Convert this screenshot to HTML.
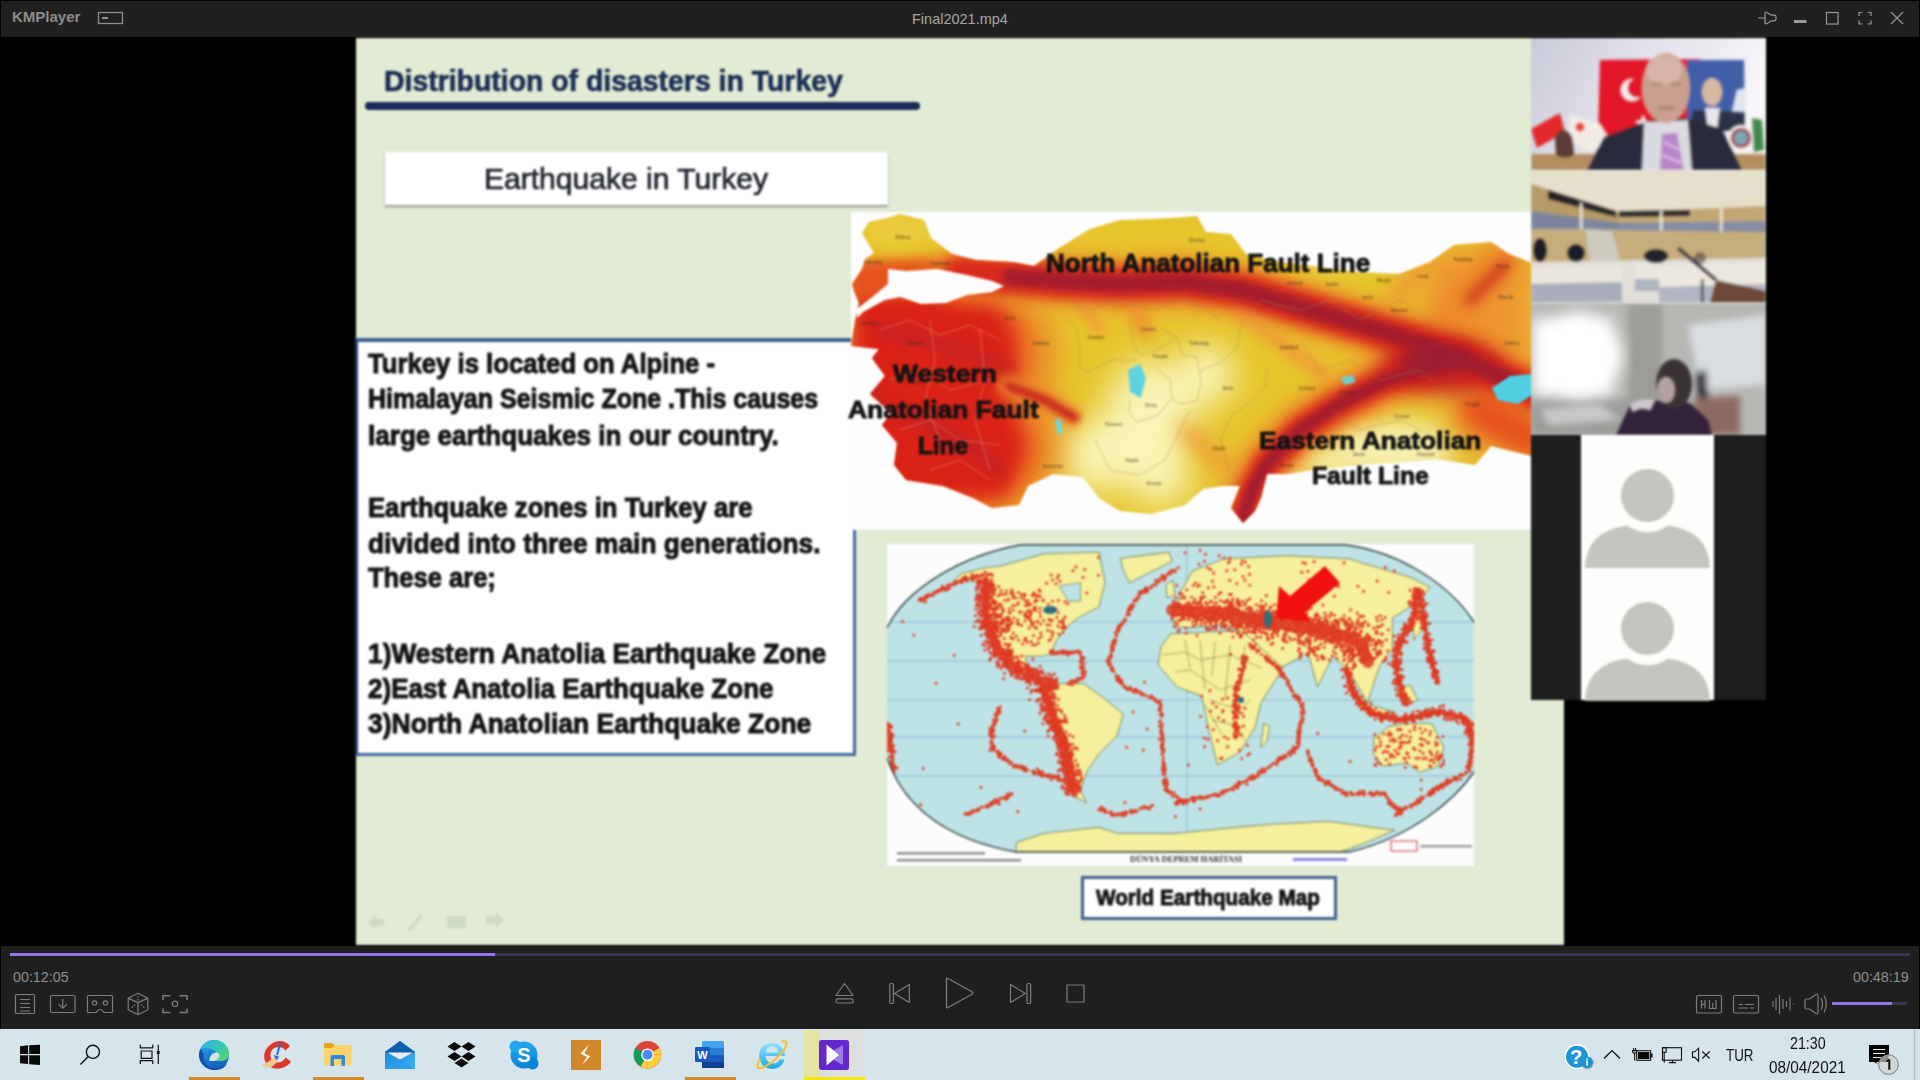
<!DOCTYPE html>
<html><head><meta charset="utf-8">
<style>
*{margin:0;padding:0;box-sizing:border-box}
html,body{width:1920px;height:1080px;overflow:hidden;background:#000;font-family:"Liberation Sans",sans-serif}
.abs{position:absolute}
svg{position:absolute;overflow:visible}
#titlebar{position:absolute;left:1px;top:1px;width:1918px;height:36px;background:#202020}
#slide{position:absolute;left:356px;top:38px;width:1208px;height:907px;background:#e2ebd4;overflow:hidden}
#ctrl{position:absolute;left:1px;top:946px;width:1918px;height:83px;background:#1f1f1f}
#taskbar{position:absolute;left:0;top:1029px;width:1920px;height:51px;background:#d6e4eb}
.nw{white-space:nowrap}
</style></head>
<body>
<!-- TITLE BAR -->
<div id="titlebar"></div>
<div class="abs nw" style="left:12px;top:8px;font-size:15px;line-height:17px;font-weight:bold;color:#8c8c8c">KMPlayer</div>
<svg style="left:0;top:0" width="1920" height="38">
  <g fill="none" stroke="#8f8f8f" stroke-width="1.3">
    <rect x="98.5" y="12.5" width="24" height="11"/>
  </g>
  <rect x="102" y="17" width="6" height="2" fill="#8f8f8f"/>
  <g fill="none" stroke="#9a9a9a" stroke-width="1.2">
    <path d="M1758 18 H1764.5 M1765 13.5 Q1765 11.5 1767 12.5 L1771.5 15.2 H1774 Q1776 15.2 1776 17 V19 Q1776 20.8 1774 20.8 H1771.5 L1767 23.5 Q1765 24.5 1765 22.5 Z"/>
    <rect x="1826.5" y="12.5" width="11.5" height="11.5"/>
    <path d="M1859 16 V12.5 H1862.5 M1867.5 12.5 H1871 V16 M1871 20.5 V24 H1867.5 M1862.5 24 H1859 V20.5"/>
    <path d="M1891 12 L1903 24 M1903 12 L1891 24"/>
  </g>
  <rect x="1794" y="20" width="12.5" height="3" fill="#9a9a9a"/>
</svg>
<div class="abs nw" style="left:912px;top:11px;font-size:14.5px;line-height:17px;color:#a6a6a6">Final2021.mp4</div>

<!-- SLIDE -->
<div style="position:absolute;left:0;top:0;width:1920px;height:1080px;filter:blur(1px)"><div class="abs" style="left:356px;top:38px;width:1208px;height:907px;background:#e2ebd4"></div>
<svg style="left:360px;top:905px" width="160" height="35" viewBox="360 905 160 35"><g fill="#cfdac2" stroke="none"><path d="M368 922 L376 914 L376 919 L384 919 L384 925 L376 925 L376 930 Z"/><path d="M407 930 L420 914 L423 917 L410 932 Z"/><rect x="447" y="916" width="19" height="12"/><path d="M486 916 L496 916 L496 912 L504 920 L496 928 L496 924 L486 924 Z"/></g></svg>
<div class="abs nw" style="left:384.0px;top:66.1px;font-size:30.23px;line-height:30.23px;font-weight:bold;color:#1b2f55;transform:scaleX(0.9400);transform-origin:0 0;-webkit-text-stroke:0.7px #1b2f55;">Distribution of disasters in Turkey</div>
<div class="abs" style="left:365px;top:102px;width:555px;height:8px;background:#172b57;border-radius:4px"></div>
<div class="abs" style="left:385px;top:152px;width:503px;height:53px;background:#fff;box-shadow:0 2px 2px rgba(80,80,80,0.55)"></div>
<div class="abs nw" style="left:484.4px;top:164.0px;font-size:29.80px;line-height:29.80px;font-weight:normal;color:#20242c;transform:scaleX(1.0086);transform-origin:0 0;-webkit-text-stroke:0.7px #20242c;">Earthquake in Turkey</div>
<div class="abs" style="left:355px;top:337.5px;width:501px;height:418px;background:#fff;border:3px solid #4167a0;border-top:4px solid #3a5c8c;border-left:3px solid #2b3e66"></div>
<div class="abs nw" style="left:368.4px;top:350.2px;font-size:28.05px;line-height:28.05px;font-weight:bold;color:#141414;transform:scaleX(0.9166);transform-origin:0 0;-webkit-text-stroke:1.0px #141414;">Turkey is located on Alpine -</div>
<div class="abs nw" style="left:368.4px;top:385.4px;font-size:28.05px;line-height:28.05px;font-weight:bold;color:#141414;transform:scaleX(0.8912);transform-origin:0 0;-webkit-text-stroke:1.0px #141414;">Himalayan Seismic Zone .This causes</div>
<div class="abs nw" style="left:368.4px;top:421.9px;font-size:28.05px;line-height:28.05px;font-weight:bold;color:#141414;transform:scaleX(0.9292);transform-origin:0 0;-webkit-text-stroke:1.0px #141414;">large earthquakes in our country.</div>
<div class="abs nw" style="left:368.4px;top:493.9px;font-size:28.05px;line-height:28.05px;font-weight:bold;color:#141414;transform:scaleX(0.9148);transform-origin:0 0;-webkit-text-stroke:1.0px #141414;">Earthquake zones in Turkey are</div>
<div class="abs nw" style="left:368.4px;top:530.4px;font-size:28.05px;line-height:28.05px;font-weight:bold;color:#141414;transform:scaleX(0.9397);transform-origin:0 0;-webkit-text-stroke:1.0px #141414;">divided into three main generations.</div>
<div class="abs nw" style="left:368.4px;top:563.9px;font-size:28.05px;line-height:28.05px;font-weight:bold;color:#141414;transform:scaleX(0.9114);transform-origin:0 0;-webkit-text-stroke:1.0px #141414;">These are;</div>
<div class="abs nw" style="left:368.4px;top:639.9px;font-size:28.05px;line-height:28.05px;font-weight:bold;color:#141414;transform:scaleX(0.9393);transform-origin:0 0;-webkit-text-stroke:1.0px #141414;">1)Western Anatolia Earthquake Zone</div>
<div class="abs nw" style="left:368.4px;top:675.2px;font-size:28.05px;line-height:28.05px;font-weight:bold;color:#141414;transform:scaleX(0.9282);transform-origin:0 0;-webkit-text-stroke:1.0px #141414;">2)East Anatolia Earthquake Zone</div>
<div class="abs nw" style="left:368.4px;top:710.4px;font-size:28.05px;line-height:28.05px;font-weight:bold;color:#141414;transform:scaleX(0.9441);transform-origin:0 0;-webkit-text-stroke:1.0px #141414;">3)North Anatolian Earthquake Zone</div>

<div class="abs" style="left:851px;top:212px;width:680px;height:318px;background:#fdfdfd"></div>
<svg style="left:851px;top:212px" width="680" height="318" viewBox="851 212 680 318">
 <defs>
  <clipPath id="trk"><path d="M862 233 L869 222 L891 217 L900 214 L924 220 L931 238 L952 254 L976 260 L1013 262 L1034 266 L1059 248 L1090 229 L1120 220 L1151 219 L1185 217 L1197 216 L1206 232 L1231 234 L1246 254 L1277 262 L1313 266 L1356 272 L1399 274 L1430 262 L1454 245 L1491 242 L1509 254 L1532 263 L1532 456 L1491 446 L1475 465 L1436 459 L1399 462 L1356 465 L1307 471 L1286 474 L1267 474 L1261 498 L1255 511 L1243 523 L1231 508 L1240 486 L1222 486 L1203 489 L1185 505 L1151 514 L1120 511 L1099 498 L1083 477 L1053 474 L1028 486 L1019 505 L992 508 L973 498 L943 486 L906 480 L894 465 L897 443 L882 425 L891 413 L870 394 L885 376 L872 358 L879 349 L851 346 L855 321 L859 303 L854 291 L852 284 L862 269 L865 259 L874 253 Z"/></clipPath>
  <filter id="b3" filterUnits="userSpaceOnUse" x="780" y="150" width="820" height="450"><feGaussianBlur stdDeviation="3"/></filter>
  <filter id="b6" filterUnits="userSpaceOnUse" x="780" y="150" width="820" height="450"><feGaussianBlur stdDeviation="6"/></filter>
  <filter id="b10" filterUnits="userSpaceOnUse" x="780" y="150" width="820" height="450"><feGaussianBlur stdDeviation="10"/></filter>
  <filter id="b16" filterUnits="userSpaceOnUse" x="780" y="150" width="820" height="450"><feGaussianBlur stdDeviation="16"/></filter>
 </defs>
 <g clip-path="url(#trk)">
  <rect x="851" y="212" width="680" height="318" fill="#e6c52c"/>
  <!-- pale centers -->
  <g filter="url(#b16)" fill="#f8f5b6">
   <ellipse cx="1150" cy="420" rx="45" ry="60"/>
   <ellipse cx="1205" cy="375" rx="30" ry="30"/>
   <ellipse cx="1100" cy="455" rx="40" ry="35"/>
   <ellipse cx="1160" cy="480" rx="30" ry="25"/>
   <ellipse cx="1390" cy="445" rx="65" ry="22"/>
   <ellipse cx="1300" cy="465" rx="25" ry="12"/>
   <ellipse cx="1330" cy="250" rx="20" ry="10"/>
  </g>
  <!-- west red block -->
  <path d="M851 270 L960 280 L1030 300 L1055 340 L1045 400 L1060 450 L1045 495 L1010 515 L851 515 Z" fill="#ec7d25" filter="url(#b16)"/>
  <path d="M851 285 L950 290 L1000 300 L1020 340 L1012 400 L1030 450 L1005 500 L851 505 Z" fill="#da2218" filter="url(#b10)"/>
  <g filter="url(#b6)" fill="none" stroke="#c82420" stroke-linecap="round">
   <path d="M880 330 L960 350 L1010 370" stroke-width="14"/>
   <path d="M900 410 L960 440 L1000 470" stroke-width="16"/>
   <path d="M870 360 L880 470" stroke-width="14"/>
  </g>
  <path d="M1000 383 L1045 400 L1078 420" stroke="#ec8a2a" stroke-width="20" fill="none" filter="url(#b6)"/>
  <path d="M1005 385 L1045 400 L1078 420" stroke="#c8201e" stroke-width="9" fill="none" filter="url(#b3)"/>
  <!-- thrace gradient -->
  <path d="M851 262 L930 258 L1000 268 L1005 290 L851 300 Z" fill="#e5521c" filter="url(#b6)"/>
  <path d="M870 215 L930 215 L935 240 L900 248 L870 245 Z" fill="#eacb3a" filter="url(#b6)"/>
  <!-- NE orange -->
  <path d="M1420 250 L1532 255 L1532 460 L1460 450 L1430 330 Z" fill="#ee9530" filter="url(#b16)"/>
  <!-- orange halos -->
  <g fill="none" stroke-linecap="round" stroke-linejoin="round">
   <path d="M960 274 L1010 277 L1060 281 L1120 284 L1185 282 L1246 291 L1307 309 L1368 327 L1414 341 L1460 358 L1491 372 L1535 392" stroke="#ee8c2b" stroke-width="50" filter="url(#b10)"/>
   <path d="M1243 518 L1252 490 L1266 465 L1300 430 L1338 405 L1384 381 L1430 366 L1460 358" stroke="#ee8c2b" stroke-width="52" filter="url(#b10)"/>
   <path d="M1445 320 L1480 280 L1510 250" stroke="#ec8a2a" stroke-width="34" filter="url(#b10)"/>
   <path d="M1395 300 L1420 270" stroke="#ef9a30" stroke-width="20" filter="url(#b10)"/>
   <path d="M1125 290 L1145 330" stroke="#ee9a32" stroke-width="18" filter="url(#b6)"/>
   <path d="M1480 410 L1532 440" stroke="#e6511c" stroke-width="40" filter="url(#b10)"/>
   <path d="M1185 430 L1230 470" stroke="#ee9a32" stroke-width="16" filter="url(#b10)"/>
   <path d="M1227 302 L1270 335 L1324 375" stroke="#ef9d35" stroke-width="14" filter="url(#b6)"/>
   <path d="M1080 300 L1100 330" stroke="#ef9d35" stroke-width="12" filter="url(#b6)"/>
  </g>
  <!-- pale2 -->
  <g filter="url(#b10)" fill="#f6f0b0">
   <ellipse cx="1395" cy="450" rx="55" ry="16"/>
   <ellipse cx="1330" cy="462" rx="22" ry="10"/>
  </g>
  <!-- red -->
  <g fill="none" stroke-linecap="round" stroke-linejoin="round">
   <path d="M960 274 L1010 277 L1060 281 L1120 284 L1185 282 L1246 291 L1307 309 L1368 327 L1414 341 L1460 358 L1491 372 L1535 392" stroke="#d9291c" stroke-width="36" filter="url(#b6)"/>
   <path d="M1243 518 L1252 490 L1266 465 L1300 430 L1338 405 L1384 381 L1430 366 L1460 358" stroke="#d9291c" stroke-width="30" filter="url(#b6)"/>
   <ellipse cx="1440" cy="365" rx="60" ry="28" fill="#c8221f" stroke="none" filter="url(#b10)"/>
   <path d="M1470 300 L1505 265" stroke="#d23a1e" stroke-width="12" filter="url(#b6)"/>
  </g>
  <!-- dark core -->
  <g fill="none" stroke-linecap="round" stroke-linejoin="round">
   <path d="M1010 277 L1060 281 L1120 284 L1185 282 L1246 291 L1307 309 L1368 327 L1414 341 L1460 358 L1491 372 L1535 392" stroke="#a51d2d" stroke-width="17" filter="url(#b3)"/>
   <path d="M1243 518 L1252 490 L1266 465 L1300 430 L1338 405 L1384 381 L1430 366 L1460 358" stroke="#a51d2d" stroke-width="13" filter="url(#b3)"/>
   <ellipse cx="1435" cy="360" rx="35" ry="14" fill="#9e1b30" stroke="none" filter="url(#b6)"/>
  </g>
  <!-- borders -->
  <g fill="none" stroke="#a09050" stroke-width="0.8" opacity="0.55">
   <path d="M1068 319 L1077 330 L1080 352 L1079 368 L1086 372 L1115 359 L1126 362 L1137 359"/>
   <path d="M1130 325 L1134 346 L1140 355 L1158 350 L1177 337 L1162 329"/>
   <path d="M1155 368 L1170 379 L1172 398 L1179 404 L1197 401 L1201 382 L1197 357 L1183 355 L1177 337"/>
   <path d="M1200 371 L1221 362 L1237 348 L1240 326"/>
   <path d="M1130 400 L1129 412 L1137 422 L1158 415 L1172 398"/>
   <path d="M1268 366 L1265 387 L1248 404 L1232 415 L1220 440 L1230 470"/>
   <path d="M1095 440 L1110 470 L1140 475 L1165 460 L1180 430 L1190 410"/>
   <path d="M1240 326 L1260 300 L1300 310 L1330 300 L1360 320 L1400 300 L1430 320"/>
   <path d="M1300 340 L1320 370 L1350 360 L1380 380 L1420 370 L1450 400 L1480 390"/>
   <path d="M1330 410 L1360 430 L1400 420 L1440 440"/>
   <path d="M1060 300 L1090 310 L1120 300 L1150 310 L1190 300 L1220 320"/>
  </g>
  <g fill="none" stroke="#f2b0a0" stroke-width="0.8" opacity="0.55">
   <path d="M880 330 L910 320 L940 335 L970 325 L1000 340"/>
   <path d="M890 380 L920 370 L950 390 L990 380 L1020 400"/>
   <path d="M900 430 L930 420 L960 440 L1000 445"/>
   <path d="M930 470 L960 460 L990 480"/>
   <path d="M930 320 L935 360 L925 400 L940 440"/>
   <path d="M980 330 L985 380 L975 420 L990 470"/>
  </g>
  <g fill="#3a2a1a" opacity="0.6">
   <text x="903" y="238.5" font-family="Liberation Sans" font-weight="bold" font-size="4.8" text-anchor="middle">Edirne</text>
   <text x="872" y="263.5" font-family="Liberation Sans" font-weight="bold" font-size="4.8" text-anchor="middle">Tekirdag</text>
   <text x="940" y="264.5" font-family="Liberation Sans" font-weight="bold" font-size="4.8" text-anchor="middle">Istanbul</text>
   <text x="1010" y="319.5" font-family="Liberation Sans" font-weight="bold" font-size="4.8" text-anchor="middle">Bolu</text>
   <text x="1041" y="344.5" font-family="Liberation Sans" font-weight="bold" font-size="4.8" text-anchor="middle">Ankara</text>
   <text x="1096" y="338.5" font-family="Liberation Sans" font-weight="bold" font-size="4.8" text-anchor="middle">Cankiri</text>
   <text x="1148" y="330.5" font-family="Liberation Sans" font-weight="bold" font-size="4.8" text-anchor="middle">Corum</text>
   <text x="1160" y="357.5" font-family="Liberation Sans" font-weight="bold" font-size="4.8" text-anchor="middle">Yozgat</text>
   <text x="1151" y="406.5" font-family="Liberation Sans" font-weight="bold" font-size="4.8" text-anchor="middle">Sivas</text>
   <text x="1114" y="425.5" font-family="Liberation Sans" font-weight="bold" font-size="4.8" text-anchor="middle">Kayseri</text>
   <text x="1132" y="461.5" font-family="Liberation Sans" font-weight="bold" font-size="4.8" text-anchor="middle">Nigde</text>
   <text x="1154" y="484.5" font-family="Liberation Sans" font-weight="bold" font-size="4.8" text-anchor="middle">Konya</text>
   <text x="1053" y="467.5" font-family="Liberation Sans" font-weight="bold" font-size="4.8" text-anchor="middle">Karaman</text>
   <text x="915" y="344.5" font-family="Liberation Sans" font-weight="bold" font-size="4.8" text-anchor="middle">Mersin</text>
   <text x="870" y="324.5" font-family="Liberation Sans" font-weight="bold" font-size="4.8" text-anchor="middle">Antalya</text>
   <text x="915" y="383.5" font-family="Liberation Sans" font-weight="bold" font-size="4.8" text-anchor="middle">Isparta</text>
   <text x="1197" y="241.5" font-family="Liberation Sans" font-weight="bold" font-size="4.8" text-anchor="middle">Burdur</text>
   <text x="1295" y="284.5" font-family="Liberation Sans" font-weight="bold" font-size="4.8" text-anchor="middle">Denizli</text>
   <text x="1332" y="285.5" font-family="Liberation Sans" font-weight="bold" font-size="4.8" text-anchor="middle">Aydin</text>
   <text x="1384" y="281.5" font-family="Liberation Sans" font-weight="bold" font-size="4.8" text-anchor="middle">Mugla</text>
   <text x="1368" y="298.5" font-family="Liberation Sans" font-weight="bold" font-size="4.8" text-anchor="middle">Izmir</text>
   <text x="1399" y="311.5" font-family="Liberation Sans" font-weight="bold" font-size="4.8" text-anchor="middle">Manisa</text>
   <text x="1423" y="277.5" font-family="Liberation Sans" font-weight="bold" font-size="4.8" text-anchor="middle">Usak</text>
   <text x="1463" y="260.5" font-family="Liberation Sans" font-weight="bold" font-size="4.8" text-anchor="middle">Kutahya</text>
   <text x="1503" y="267.5" font-family="Liberation Sans" font-weight="bold" font-size="4.8" text-anchor="middle">Bursa</text>
   <text x="1506" y="298.5" font-family="Liberation Sans" font-weight="bold" font-size="4.8" text-anchor="middle">Bilecik</text>
   <text x="1512" y="344.5" font-family="Liberation Sans" font-weight="bold" font-size="4.8" text-anchor="middle">Edirne</text>
   <text x="1199" y="344.5" font-family="Liberation Sans" font-weight="bold" font-size="4.8" text-anchor="middle">Tekirdag</text>
   <text x="1289" y="348.5" font-family="Liberation Sans" font-weight="bold" font-size="4.8" text-anchor="middle">Istanbul</text>
   <text x="1228" y="389.5" font-family="Liberation Sans" font-weight="bold" font-size="4.8" text-anchor="middle">Bolu</text>
   <text x="1307" y="389.5" font-family="Liberation Sans" font-weight="bold" font-size="4.8" text-anchor="middle">Ankara</text>
   <text x="1347" y="393.5" font-family="Liberation Sans" font-weight="bold" font-size="4.8" text-anchor="middle">Cankiri</text>
   <text x="1402" y="417.5" font-family="Liberation Sans" font-weight="bold" font-size="4.8" text-anchor="middle">Corum</text>
   <text x="1472" y="405.5" font-family="Liberation Sans" font-weight="bold" font-size="4.8" text-anchor="middle">Yozgat</text>
   <text x="1359" y="455.5" font-family="Liberation Sans" font-weight="bold" font-size="4.8" text-anchor="middle">Sivas</text>
   <text x="1426" y="455.5" font-family="Liberation Sans" font-weight="bold" font-size="4.8" text-anchor="middle">Kayseri</text>
   <text x="1219" y="449.5" font-family="Liberation Sans" font-weight="bold" font-size="4.8" text-anchor="middle">Nigde</text>
   <text x="1286" y="466.5" font-family="Liberation Sans" font-weight="bold" font-size="4.8" text-anchor="middle">Konya</text>
  </g>
  <!-- lakes -->
  <path d="M1128 370 L1140 364 L1146 378 L1141 398 L1130 392 Z" fill="#5fd3dc"/>
  <path d="M1492 388 L1510 376 L1532 374 L1532 395 L1518 404 L1498 400 Z" fill="#4fcfe0"/>
  <path d="M1055 420 L1060 418 L1063 432 L1058 435 Z" fill="#6fd6dc"/>
  <path d="M1340 378 L1352 375 L1356 382 L1345 385 Z" fill="#70d0d0"/>
 </g>
 <path d="M888 269 L906 271 L937 269 L967 275 L992 281 L1004 286 L992 292 L967 295 L946 303 L921 304 L900 297 L885 300 L863 312 L857 318 L857 309 L876 294 L888 284 Z" fill="#fdfdfd"/>
</svg>
<div class="abs nw" style="left:1046.0px;top:250.4px;font-size:26.16px;line-height:26.16px;font-weight:bold;color:#141414;transform:scaleX(0.9946);transform-origin:0 0;-webkit-text-stroke:0.9px #141414;">North Anatolian Fault Line</div>
<div class="abs nw" style="left:893.0px;top:362.4px;font-size:24.13px;line-height:24.13px;font-weight:bold;color:#141414;transform:scaleX(1.0954);transform-origin:0 0;-webkit-text-stroke:0.9px #141414;">Western</div>
<div class="abs nw" style="left:848.0px;top:398.1px;font-size:24.13px;line-height:24.13px;font-weight:bold;color:#141414;transform:scaleX(1.0944);transform-origin:0 0;-webkit-text-stroke:0.9px #141414;">Anatolian Fault</div>
<div class="abs nw" style="left:918.4px;top:433.5px;font-size:24.13px;line-height:24.13px;font-weight:bold;color:#141414;transform:scaleX(1.0061);transform-origin:0 0;-webkit-text-stroke:0.9px #141414;">Line</div>
<div class="abs nw" style="left:1259.2px;top:429.3px;font-size:24.71px;line-height:24.71px;font-weight:bold;color:#141414;transform:scaleX(1.0633);transform-origin:0 0;-webkit-text-stroke:0.9px #141414;">Eastern Anatolian</div>
<div class="abs nw" style="left:1312.0px;top:464.0px;font-size:24.71px;line-height:24.71px;font-weight:bold;color:#141414;transform:scaleX(1.0010);transform-origin:0 0;-webkit-text-stroke:0.9px #141414;">Fault Line</div>

<div class="abs" style="left:887px;top:544px;width:587px;height:322px;background:#fcfcfc"></div>
<svg style="left:870px;top:530px" width="620" height="410" viewBox="870 530 620 410">
 <defs>
  <clipPath id="wm"><path d="M887 628 C905 590 960 556 1020 545 L1346 545 C1400 552 1450 585 1474 622 L1474 772 C1455 800 1410 838 1349 852 L1016 852 C950 840 905 810 887 758 Z"/></clipPath>
  <clipPath id="wr"><rect x="887" y="544" width="587" height="322"/></clipPath>
 </defs>
 <g clip-path="url(#wr)">
 <g clip-path="url(#wm)">
  <rect x="870" y="530" width="620" height="410" fill="#bee3e6"/>
  <g stroke="#6f9ec8" stroke-width="0.8" opacity="0.8" fill="none">
   <path d="M870 661 H1490 M870 700 H1490 M870 737 H1490 M870 622 H1490 M870 776 H1490"/>
   <path d="M1187 530 V940"/>
  </g>
  <g fill="#f6ef9c" stroke="#4c5e38" stroke-width="0.7" stroke-linejoin="round">
   <path d="M961.4 573.6 L985.8 567.5 L1001.0 566.0 L1043.9 553.7 L1098.9 552.2 L1105.0 582.8 L1098.9 607.2 L1080.5 616.4 L1068.3 625.5 L1056.1 640.8 L1051.5 653.0 L1043.9 656.1 L1025.5 656.1 L1028.6 671.4 L1056.1 683.6 L1062.2 686.7 L1043.9 684.0 L1016.4 670.0 L1001.1 652.0 L988.9 628.6 L982.8 610.3 L992.0 585.8 L967.5 579.7 L950.0 585.0 Z"/><path d="M1120.3 558.3 L1169.1 552.2 L1172.2 561.4 L1147.8 573.6 L1129.4 582.8 L1123.3 570.5 Z"/><path d="M1056.1 683.6 L1083.6 683.6 L1105.0 698.9 L1123.3 714.2 L1117.2 735.5 L1098.9 753.9 L1086.6 772.2 L1080.5 790.5 L1086.6 802.8 L1074.4 796.6 L1068.3 772.2 L1065.3 738.6 L1053.0 711.1 L1047.0 692.8 Z"/><path d="M1173.8 618.0 L1180.0 593.0 L1192.5 571.0 L1223.8 558.8 L1286.0 555.6 L1348.8 558.8 L1411.0 577.5 L1430.0 587.0 L1417.5 602.5 L1392.5 618.0 L1392.5 649.0 L1380.0 665.0 L1367.5 702.5 L1348.8 671.0 L1333.0 655.6 L1317.5 687.0 L1308.0 652.5 L1286.0 665.0 L1261.0 674.0 L1239.0 643.0 L1239.4 630.6 L1223.8 624.4 L1192.5 627.5 L1173.8 627.5 Z"/><path d="M1170.6 633.8 L1239.4 630.6 L1248.8 636.9 L1283.1 668.1 L1261.2 702.5 L1255.0 727.5 L1239.4 752.5 L1217.5 765.0 L1208.1 727.5 L1201.9 696.2 L1176.9 686.9 L1158.1 665.0 L1161.2 646.2 Z"/>
   <path d="M1373.7 738.6 L1389.0 726.4 L1407.3 723.4 L1431.7 723.4 L1444.0 747.8 L1437.8 766.2 L1419.5 772.3 L1407.3 763.1 L1382.8 766.2 L1373.7 753.9 Z"/><path d="M1016.4 842.5 L1043.9 833.3 L1098.9 827.2 L1117.2 833.3 L1175.0 833.4 L1236.0 827.3 L1272.8 824.2 L1327.8 821.2 L1395.0 830.3 L1358.4 845.6 L1340.0 852.0 L1016.0 852.0 Z"/><path d="M1263.6 723.4 L1269.7 726.4 L1266.7 741.7 L1260.6 747.8 Z"/><path d="M1352.0 690.0 L1370.0 705.0 L1395.0 712.0 L1385.0 716.0 L1360.0 708.0 Z"/><path d="M1395.0 690.0 L1410.0 685.0 L1418.0 700.0 L1405.0 705.0 Z"/><path d="M1413.0 612.0 L1420.0 605.0 L1422.0 630.0 L1414.0 640.0 Z"/><path d="M1166.0 585.0 L1173.0 580.0 L1175.0 595.0 L1167.0 598.0 Z"/>
  </g>
  <path d="M1059.2 585.8 L1080.5 582.8 L1080.5 601.1 L1068.3 601.1 Z" fill="#bee3e6" stroke="#4c5e38" stroke-width="0.6"/>
  <g fill="none" stroke="#4a5a30" stroke-width="0.6" opacity="0.8">
   <path d="M1163 655 L1185 652 L1200 660 L1230 655 L1262 668 M1175 672 L1190 670 L1220 690 L1250 680 M1210 700 L1240 710 L1250 700 M1200 640 L1205 690 M1230 645 L1225 700 M1185 640 L1190 668 M1215 642 L1212 676 M1245 645 L1240 690 M1212 720 L1235 725 L1245 740 M1205 705 L1222 735"/>
  </g>
  <g fill="#de3a22"><rect x="931.7" y="593.9" width="2.6" height="2.6"/><rect x="921.1" y="599.7" width="2.6" height="2.6"/><rect x="940.1" y="588.0" width="2.6" height="2.6"/><rect x="939.2" y="589.3" width="2.6" height="2.6"/><rect x="918.7" y="598.6" width="2.6" height="2.6"/><rect x="921.3" y="598.1" width="2.6" height="2.6"/><rect x="935.6" y="591.0" width="2.6" height="2.6"/><rect x="926.6" y="594.5" width="2.6" height="2.6"/><rect x="944.9" y="587.9" width="2.6" height="2.6"/><rect x="934.0" y="590.8" width="2.6" height="2.6"/><rect x="960.3" y="581.3" width="2.6" height="2.6"/><rect x="930.1" y="594.3" width="2.6" height="2.6"/><rect x="923.9" y="597.5" width="2.6" height="2.6"/><rect x="952.6" y="583.1" width="2.6" height="2.6"/><rect x="924.3" y="594.4" width="2.6" height="2.6"/><rect x="932.8" y="591.0" width="2.6" height="2.6"/><rect x="940.9" y="588.5" width="2.6" height="2.6"/><rect x="926.2" y="595.6" width="2.6" height="2.6"/><rect x="945.9" y="584.3" width="2.6" height="2.6"/><rect x="942.6" y="587.7" width="2.6" height="2.6"/><rect x="936.4" y="589.4" width="2.6" height="2.6"/><rect x="948.3" y="587.0" width="2.6" height="2.6"/><rect x="927.1" y="593.2" width="2.6" height="2.6"/><rect x="954.4" y="580.4" width="2.6" height="2.6"/><rect x="948.1" y="583.4" width="2.6" height="2.6"/><rect x="924.1" y="600.7" width="2.6" height="2.6"/><rect x="935.2" y="590.9" width="2.6" height="2.6"/><rect x="937.9" y="588.6" width="2.6" height="2.6"/><rect x="918.5" y="597.9" width="2.6" height="2.6"/><rect x="940.9" y="585.7" width="2.6" height="2.6"/><rect x="954.4" y="580.3" width="2.6" height="2.6"/><rect x="943.6" y="588.9" width="2.6" height="2.6"/><rect x="941.0" y="585.1" width="2.6" height="2.6"/><rect x="958.1" y="580.2" width="2.6" height="2.6"/><rect x="937.5" y="589.4" width="2.6" height="2.6"/><rect x="947.1" y="584.4" width="2.6" height="2.6"/><rect x="946.2" y="588.3" width="2.6" height="2.6"/><rect x="929.4" y="593.6" width="2.6" height="2.6"/><rect x="933.7" y="591.4" width="2.6" height="2.6"/><rect x="936.9" y="589.7" width="2.6" height="2.6"/><rect x="924.7" y="596.5" width="2.6" height="2.6"/><rect x="950.3" y="583.7" width="2.6" height="2.6"/><rect x="922.8" y="597.1" width="2.6" height="2.6"/><rect x="955.2" y="582.4" width="2.6" height="2.6"/><rect x="920.0" y="596.6" width="2.6" height="2.6"/><rect x="955.4" y="581.4" width="2.6" height="2.6"/><rect x="952.7" y="582.9" width="2.6" height="2.6"/><rect x="972.6" y="575.0" width="2.6" height="2.6"/><rect x="971.6" y="578.8" width="2.6" height="2.6"/><rect x="964.3" y="575.2" width="2.6" height="2.6"/><rect x="965.5" y="577.4" width="2.6" height="2.6"/><rect x="975.1" y="576.4" width="2.6" height="2.6"/><rect x="978.1" y="574.8" width="2.6" height="2.6"/><rect x="972.9" y="576.0" width="2.6" height="2.6"/><rect x="970.8" y="573.0" width="2.6" height="2.6"/><rect x="981.0" y="572.8" width="2.6" height="2.6"/><rect x="975.6" y="573.7" width="2.6" height="2.6"/><rect x="961.5" y="576.7" width="2.6" height="2.6"/><rect x="987.7" y="573.4" width="2.6" height="2.6"/><rect x="984.0" y="570.8" width="2.6" height="2.6"/><rect x="972.0" y="575.5" width="2.6" height="2.6"/><rect x="979.6" y="574.9" width="2.6" height="2.6"/><rect x="962.2" y="578.9" width="2.6" height="2.6"/><rect x="965.1" y="577.8" width="2.6" height="2.6"/><rect x="970.5" y="576.4" width="2.6" height="2.6"/><rect x="964.7" y="577.5" width="2.6" height="2.6"/><rect x="963.2" y="577.6" width="2.6" height="2.6"/><rect x="986.9" y="573.3" width="2.6" height="2.6"/><rect x="979.0" y="575.3" width="2.6" height="2.6"/><rect x="970.9" y="577.1" width="2.6" height="2.6"/><rect x="971.6" y="578.1" width="2.6" height="2.6"/><rect x="990.9" y="574.2" width="2.6" height="2.6"/><rect x="974.2" y="575.0" width="2.6" height="2.6"/><rect x="963.2" y="577.8" width="2.6" height="2.6"/><rect x="970.5" y="576.1" width="2.6" height="2.6"/><rect x="965.6" y="580.0" width="2.6" height="2.6"/><rect x="961.1" y="579.9" width="2.6" height="2.6"/><rect x="964.5" y="577.0" width="2.6" height="2.6"/><rect x="977.7" y="598.3" width="2.6" height="2.6"/><rect x="983.3" y="614.3" width="2.6" height="2.6"/><rect x="985.9" y="610.1" width="2.6" height="2.6"/><rect x="988.6" y="591.9" width="2.6" height="2.6"/><rect x="983.6" y="584.5" width="2.6" height="2.6"/><rect x="991.3" y="607.0" width="2.6" height="2.6"/><rect x="982.8" y="590.5" width="2.6" height="2.6"/><rect x="974.4" y="614.5" width="2.6" height="2.6"/><rect x="980.9" y="609.7" width="2.6" height="2.6"/><rect x="994.2" y="605.6" width="2.6" height="2.6"/><rect x="989.7" y="586.7" width="2.6" height="2.6"/><rect x="985.1" y="579.5" width="2.6" height="2.6"/><rect x="985.3" y="579.4" width="2.6" height="2.6"/><rect x="980.2" y="603.8" width="2.6" height="2.6"/><rect x="997.0" y="613.5" width="2.6" height="2.6"/><rect x="980.2" y="614.7" width="2.6" height="2.6"/><rect x="987.1" y="613.4" width="2.6" height="2.6"/><rect x="981.5" y="586.7" width="2.6" height="2.6"/><rect x="982.3" y="585.6" width="2.6" height="2.6"/><rect x="977.0" y="611.4" width="2.6" height="2.6"/><rect x="992.6" y="609.2" width="2.6" height="2.6"/><rect x="983.5" y="607.7" width="2.6" height="2.6"/><rect x="991.0" y="581.5" width="2.6" height="2.6"/><rect x="994.9" y="607.1" width="2.6" height="2.6"/><rect x="988.0" y="605.9" width="2.6" height="2.6"/><rect x="984.0" y="607.4" width="2.6" height="2.6"/><rect x="979.8" y="590.6" width="2.6" height="2.6"/><rect x="998.7" y="592.9" width="2.6" height="2.6"/><rect x="976.0" y="593.1" width="2.6" height="2.6"/><rect x="987.5" y="584.6" width="2.6" height="2.6"/><rect x="977.4" y="583.1" width="2.6" height="2.6"/><rect x="974.6" y="608.0" width="2.6" height="2.6"/><rect x="977.2" y="583.8" width="2.6" height="2.6"/><rect x="998.4" y="602.5" width="2.6" height="2.6"/><rect x="987.3" y="591.3" width="2.6" height="2.6"/><rect x="985.4" y="578.9" width="2.6" height="2.6"/><rect x="988.5" y="614.0" width="2.6" height="2.6"/><rect x="990.0" y="612.7" width="2.6" height="2.6"/><rect x="977.2" y="594.3" width="2.6" height="2.6"/><rect x="992.1" y="586.1" width="2.6" height="2.6"/><rect x="985.6" y="587.6" width="2.6" height="2.6"/><rect x="980.5" y="599.9" width="2.6" height="2.6"/><rect x="987.1" y="587.9" width="2.6" height="2.6"/><rect x="983.1" y="611.8" width="2.6" height="2.6"/><rect x="991.7" y="591.4" width="2.6" height="2.6"/><rect x="982.6" y="611.6" width="2.6" height="2.6"/><rect x="978.8" y="593.8" width="2.6" height="2.6"/><rect x="987.8" y="597.9" width="2.6" height="2.6"/><rect x="978.5" y="597.6" width="2.6" height="2.6"/><rect x="983.8" y="585.1" width="2.6" height="2.6"/><rect x="983.5" y="578.5" width="2.6" height="2.6"/><rect x="987.8" y="595.8" width="2.6" height="2.6"/><rect x="989.2" y="605.0" width="2.6" height="2.6"/><rect x="986.2" y="597.4" width="2.6" height="2.6"/><rect x="983.9" y="598.8" width="2.6" height="2.6"/><rect x="987.1" y="599.0" width="2.6" height="2.6"/><rect x="986.1" y="587.5" width="2.6" height="2.6"/><rect x="975.0" y="597.0" width="2.6" height="2.6"/><rect x="983.7" y="599.0" width="2.6" height="2.6"/><rect x="996.8" y="594.7" width="2.6" height="2.6"/><rect x="991.2" y="600.9" width="2.6" height="2.6"/><rect x="984.7" y="603.8" width="2.6" height="2.6"/><rect x="990.7" y="595.0" width="2.6" height="2.6"/><rect x="985.8" y="613.0" width="2.6" height="2.6"/><rect x="975.0" y="604.1" width="2.6" height="2.6"/><rect x="993.9" y="587.9" width="2.6" height="2.6"/><rect x="974.5" y="598.9" width="2.6" height="2.6"/><rect x="988.2" y="583.4" width="2.6" height="2.6"/><rect x="986.5" y="582.9" width="2.6" height="2.6"/><rect x="983.7" y="587.2" width="2.6" height="2.6"/><rect x="989.3" y="581.1" width="2.6" height="2.6"/><rect x="993.1" y="611.3" width="2.6" height="2.6"/><rect x="986.2" y="584.1" width="2.6" height="2.6"/><rect x="992.5" y="583.6" width="2.6" height="2.6"/><rect x="980.6" y="610.8" width="2.6" height="2.6"/><rect x="985.3" y="613.4" width="2.6" height="2.6"/><rect x="1001.4" y="593.0" width="2.6" height="2.6"/><rect x="983.1" y="609.0" width="2.6" height="2.6"/><rect x="990.6" y="584.3" width="2.6" height="2.6"/><rect x="981.7" y="590.8" width="2.6" height="2.6"/><rect x="988.2" y="585.6" width="2.6" height="2.6"/><rect x="976.4" y="579.1" width="2.6" height="2.6"/><rect x="985.5" y="598.7" width="2.6" height="2.6"/><rect x="984.1" y="590.6" width="2.6" height="2.6"/><rect x="986.5" y="601.3" width="2.6" height="2.6"/><rect x="984.7" y="614.6" width="2.6" height="2.6"/><rect x="981.9" y="607.3" width="2.6" height="2.6"/><rect x="985.0" y="588.1" width="2.6" height="2.6"/><rect x="983.7" y="579.9" width="2.6" height="2.6"/><rect x="988.9" y="583.2" width="2.6" height="2.6"/><rect x="975.7" y="593.9" width="2.6" height="2.6"/><rect x="990.0" y="587.9" width="2.6" height="2.6"/><rect x="978.1" y="583.9" width="2.6" height="2.6"/><rect x="988.0" y="604.1" width="2.6" height="2.6"/><rect x="976.5" y="581.7" width="2.6" height="2.6"/><rect x="981.5" y="594.0" width="2.6" height="2.6"/><rect x="977.1" y="581.1" width="2.6" height="2.6"/><rect x="987.5" y="607.8" width="2.6" height="2.6"/><rect x="983.2" y="581.5" width="2.6" height="2.6"/><rect x="986.1" y="610.1" width="2.6" height="2.6"/><rect x="988.3" y="595.1" width="2.6" height="2.6"/><rect x="978.5" y="612.4" width="2.6" height="2.6"/><rect x="979.8" y="588.2" width="2.6" height="2.6"/><rect x="979.5" y="587.2" width="2.6" height="2.6"/><rect x="983.5" y="582.4" width="2.6" height="2.6"/><rect x="983.0" y="585.8" width="2.6" height="2.6"/><rect x="987.7" y="589.9" width="2.6" height="2.6"/><rect x="975.6" y="589.0" width="2.6" height="2.6"/><rect x="982.2" y="596.8" width="2.6" height="2.6"/><rect x="979.9" y="579.1" width="2.6" height="2.6"/><rect x="975.4" y="587.6" width="2.6" height="2.6"/><rect x="983.6" y="598.6" width="2.6" height="2.6"/><rect x="997.4" y="585.4" width="2.6" height="2.6"/><rect x="982.4" y="582.3" width="2.6" height="2.6"/><rect x="990.5" y="608.5" width="2.6" height="2.6"/><rect x="981.8" y="609.0" width="2.6" height="2.6"/><rect x="993.0" y="592.8" width="2.6" height="2.6"/><rect x="984.9" y="614.5" width="2.6" height="2.6"/><rect x="980.2" y="591.0" width="2.6" height="2.6"/><rect x="992.1" y="601.7" width="2.6" height="2.6"/><rect x="985.6" y="593.3" width="2.6" height="2.6"/><rect x="983.0" y="583.2" width="2.6" height="2.6"/><rect x="984.7" y="581.0" width="2.6" height="2.6"/><rect x="988.8" y="584.4" width="2.6" height="2.6"/><rect x="978.4" y="581.5" width="2.6" height="2.6"/><rect x="994.0" y="603.0" width="2.6" height="2.6"/><rect x="984.3" y="588.7" width="2.6" height="2.6"/><rect x="979.8" y="595.3" width="2.6" height="2.6"/><rect x="988.6" y="584.2" width="2.6" height="2.6"/><rect x="983.0" y="613.7" width="2.6" height="2.6"/><rect x="988.5" y="614.1" width="2.6" height="2.6"/><rect x="985.7" y="613.8" width="2.6" height="2.6"/><rect x="984.7" y="589.8" width="2.6" height="2.6"/><rect x="984.3" y="592.4" width="2.6" height="2.6"/><rect x="988.3" y="595.8" width="2.6" height="2.6"/><rect x="984.6" y="596.9" width="2.6" height="2.6"/><rect x="984.7" y="578.6" width="2.6" height="2.6"/><rect x="982.1" y="593.1" width="2.6" height="2.6"/><rect x="979.8" y="579.9" width="2.6" height="2.6"/><rect x="983.8" y="586.9" width="2.6" height="2.6"/><rect x="993.7" y="599.9" width="2.6" height="2.6"/><rect x="986.2" y="602.5" width="2.6" height="2.6"/><rect x="980.5" y="604.7" width="2.6" height="2.6"/><rect x="988.3" y="590.4" width="2.6" height="2.6"/><rect x="979.2" y="614.5" width="2.6" height="2.6"/><rect x="977.2" y="602.0" width="2.6" height="2.6"/><rect x="978.5" y="580.0" width="2.6" height="2.6"/><rect x="994.7" y="601.4" width="2.6" height="2.6"/><rect x="983.3" y="605.3" width="2.6" height="2.6"/><rect x="987.3" y="597.6" width="2.6" height="2.6"/><rect x="979.4" y="596.9" width="2.6" height="2.6"/><rect x="993.2" y="608.7" width="2.6" height="2.6"/><rect x="977.9" y="599.8" width="2.6" height="2.6"/><rect x="989.8" y="603.8" width="2.6" height="2.6"/><rect x="981.6" y="586.8" width="2.6" height="2.6"/><rect x="983.9" y="591.6" width="2.6" height="2.6"/><rect x="980.8" y="582.3" width="2.6" height="2.6"/><rect x="990.6" y="601.4" width="2.6" height="2.6"/><rect x="987.2" y="601.4" width="2.6" height="2.6"/><rect x="990.4" y="578.5" width="2.6" height="2.6"/><rect x="984.6" y="607.7" width="2.6" height="2.6"/><rect x="991.1" y="598.0" width="2.6" height="2.6"/><rect x="976.1" y="602.6" width="2.6" height="2.6"/><rect x="980.8" y="587.7" width="2.6" height="2.6"/><rect x="985.4" y="581.1" width="2.6" height="2.6"/><rect x="975.5" y="585.9" width="2.6" height="2.6"/><rect x="978.0" y="605.6" width="2.6" height="2.6"/><rect x="985.5" y="592.4" width="2.6" height="2.6"/><rect x="988.4" y="596.0" width="2.6" height="2.6"/><rect x="993.2" y="601.0" width="2.6" height="2.6"/><rect x="981.7" y="602.0" width="2.6" height="2.6"/><rect x="983.0" y="587.7" width="2.6" height="2.6"/><rect x="986.9" y="605.7" width="2.6" height="2.6"/><rect x="977.7" y="578.9" width="2.6" height="2.6"/><rect x="985.5" y="580.6" width="2.6" height="2.6"/><rect x="976.2" y="603.8" width="2.6" height="2.6"/><rect x="986.2" y="603.2" width="2.6" height="2.6"/><rect x="978.0" y="595.5" width="2.6" height="2.6"/><rect x="975.8" y="595.5" width="2.6" height="2.6"/><rect x="976.5" y="585.7" width="2.6" height="2.6"/><rect x="983.5" y="614.3" width="2.6" height="2.6"/><rect x="984.9" y="595.2" width="2.6" height="2.6"/><rect x="978.5" y="608.5" width="2.6" height="2.6"/><rect x="989.7" y="625.3" width="2.6" height="2.6"/><rect x="984.3" y="624.7" width="2.6" height="2.6"/><rect x="994.5" y="637.7" width="2.6" height="2.6"/><rect x="999.4" y="615.8" width="2.6" height="2.6"/><rect x="988.5" y="619.6" width="2.6" height="2.6"/><rect x="1007.9" y="643.5" width="2.6" height="2.6"/><rect x="995.8" y="642.8" width="2.6" height="2.6"/><rect x="983.2" y="626.1" width="2.6" height="2.6"/><rect x="988.5" y="614.7" width="2.6" height="2.6"/><rect x="990.3" y="613.1" width="2.6" height="2.6"/><rect x="988.8" y="627.2" width="2.6" height="2.6"/><rect x="989.2" y="619.7" width="2.6" height="2.6"/><rect x="993.5" y="649.9" width="2.6" height="2.6"/><rect x="984.5" y="615.2" width="2.6" height="2.6"/><rect x="996.3" y="616.0" width="2.6" height="2.6"/><rect x="1001.2" y="650.9" width="2.6" height="2.6"/><rect x="999.9" y="622.4" width="2.6" height="2.6"/><rect x="1005.1" y="624.1" width="2.6" height="2.6"/><rect x="981.5" y="643.1" width="2.6" height="2.6"/><rect x="993.8" y="628.0" width="2.6" height="2.6"/><rect x="983.4" y="617.7" width="2.6" height="2.6"/><rect x="983.9" y="620.0" width="2.6" height="2.6"/><rect x="1002.4" y="650.8" width="2.6" height="2.6"/><rect x="988.9" y="624.8" width="2.6" height="2.6"/><rect x="981.2" y="625.0" width="2.6" height="2.6"/><rect x="979.7" y="633.9" width="2.6" height="2.6"/><rect x="999.8" y="646.2" width="2.6" height="2.6"/><rect x="983.5" y="644.2" width="2.6" height="2.6"/><rect x="999.3" y="634.4" width="2.6" height="2.6"/><rect x="987.4" y="646.8" width="2.6" height="2.6"/><rect x="988.8" y="634.0" width="2.6" height="2.6"/><rect x="998.6" y="644.0" width="2.6" height="2.6"/><rect x="988.6" y="615.7" width="2.6" height="2.6"/><rect x="994.5" y="653.5" width="2.6" height="2.6"/><rect x="985.5" y="630.4" width="2.6" height="2.6"/><rect x="990.0" y="626.5" width="2.6" height="2.6"/><rect x="1002.7" y="620.0" width="2.6" height="2.6"/><rect x="996.6" y="640.3" width="2.6" height="2.6"/><rect x="984.2" y="633.2" width="2.6" height="2.6"/><rect x="985.2" y="622.5" width="2.6" height="2.6"/><rect x="995.2" y="652.2" width="2.6" height="2.6"/><rect x="989.9" y="635.6" width="2.6" height="2.6"/><rect x="988.5" y="658.9" width="2.6" height="2.6"/><rect x="989.2" y="633.8" width="2.6" height="2.6"/><rect x="983.3" y="619.7" width="2.6" height="2.6"/><rect x="986.4" y="629.9" width="2.6" height="2.6"/><rect x="986.3" y="626.2" width="2.6" height="2.6"/><rect x="986.5" y="640.2" width="2.6" height="2.6"/><rect x="996.4" y="629.3" width="2.6" height="2.6"/><rect x="995.8" y="629.6" width="2.6" height="2.6"/><rect x="990.4" y="628.2" width="2.6" height="2.6"/><rect x="987.8" y="616.7" width="2.6" height="2.6"/><rect x="972.9" y="625.3" width="2.6" height="2.6"/><rect x="999.3" y="632.3" width="2.6" height="2.6"/><rect x="995.4" y="620.8" width="2.6" height="2.6"/><rect x="988.6" y="625.9" width="2.6" height="2.6"/><rect x="986.0" y="634.8" width="2.6" height="2.6"/><rect x="992.8" y="655.3" width="2.6" height="2.6"/><rect x="993.5" y="612.7" width="2.6" height="2.6"/><rect x="987.8" y="615.3" width="2.6" height="2.6"/><rect x="1002.5" y="629.8" width="2.6" height="2.6"/><rect x="988.2" y="640.4" width="2.6" height="2.6"/><rect x="998.6" y="651.9" width="2.6" height="2.6"/><rect x="988.4" y="651.2" width="2.6" height="2.6"/><rect x="999.3" y="620.7" width="2.6" height="2.6"/><rect x="982.6" y="620.8" width="2.6" height="2.6"/><rect x="989.6" y="644.2" width="2.6" height="2.6"/><rect x="1000.1" y="652.0" width="2.6" height="2.6"/><rect x="1003.6" y="642.6" width="2.6" height="2.6"/><rect x="992.9" y="632.7" width="2.6" height="2.6"/><rect x="996.9" y="646.0" width="2.6" height="2.6"/><rect x="981.4" y="626.9" width="2.6" height="2.6"/><rect x="992.7" y="625.8" width="2.6" height="2.6"/><rect x="986.5" y="620.1" width="2.6" height="2.6"/><rect x="987.7" y="645.7" width="2.6" height="2.6"/><rect x="980.4" y="621.8" width="2.6" height="2.6"/><rect x="990.6" y="639.3" width="2.6" height="2.6"/><rect x="989.2" y="631.0" width="2.6" height="2.6"/><rect x="977.7" y="618.2" width="2.6" height="2.6"/><rect x="1001.9" y="622.2" width="2.6" height="2.6"/><rect x="991.1" y="641.9" width="2.6" height="2.6"/><rect x="1001.7" y="648.7" width="2.6" height="2.6"/><rect x="987.7" y="625.1" width="2.6" height="2.6"/><rect x="1000.4" y="652.8" width="2.6" height="2.6"/><rect x="989.1" y="614.3" width="2.6" height="2.6"/><rect x="994.6" y="633.9" width="2.6" height="2.6"/><rect x="993.3" y="623.5" width="2.6" height="2.6"/><rect x="991.3" y="642.9" width="2.6" height="2.6"/><rect x="986.7" y="615.8" width="2.6" height="2.6"/><rect x="996.6" y="625.9" width="2.6" height="2.6"/><rect x="983.7" y="624.4" width="2.6" height="2.6"/><rect x="997.0" y="646.6" width="2.6" height="2.6"/><rect x="993.8" y="620.9" width="2.6" height="2.6"/><rect x="1002.9" y="652.2" width="2.6" height="2.6"/><rect x="979.0" y="627.7" width="2.6" height="2.6"/><rect x="987.6" y="624.0" width="2.6" height="2.6"/><rect x="1003.3" y="651.2" width="2.6" height="2.6"/><rect x="990.6" y="635.3" width="2.6" height="2.6"/><rect x="987.4" y="633.0" width="2.6" height="2.6"/><rect x="991.8" y="642.6" width="2.6" height="2.6"/><rect x="991.4" y="630.4" width="2.6" height="2.6"/><rect x="984.9" y="624.6" width="2.6" height="2.6"/><rect x="985.8" y="617.0" width="2.6" height="2.6"/><rect x="994.2" y="614.1" width="2.6" height="2.6"/><rect x="991.0" y="652.8" width="2.6" height="2.6"/><rect x="983.5" y="648.8" width="2.6" height="2.6"/><rect x="989.7" y="628.1" width="2.6" height="2.6"/><rect x="979.4" y="625.5" width="2.6" height="2.6"/><rect x="988.4" y="615.1" width="2.6" height="2.6"/><rect x="998.3" y="640.1" width="2.6" height="2.6"/><rect x="986.0" y="629.6" width="2.6" height="2.6"/><rect x="982.8" y="623.4" width="2.6" height="2.6"/><rect x="989.8" y="629.1" width="2.6" height="2.6"/><rect x="989.4" y="656.7" width="2.6" height="2.6"/><rect x="978.2" y="627.0" width="2.6" height="2.6"/><rect x="985.7" y="630.9" width="2.6" height="2.6"/><rect x="999.8" y="628.9" width="2.6" height="2.6"/><rect x="990.2" y="615.1" width="2.6" height="2.6"/><rect x="997.6" y="651.9" width="2.6" height="2.6"/><rect x="994.8" y="620.0" width="2.6" height="2.6"/><rect x="976.6" y="619.5" width="2.6" height="2.6"/><rect x="987.4" y="632.7" width="2.6" height="2.6"/><rect x="993.4" y="613.6" width="2.6" height="2.6"/><rect x="974.2" y="620.6" width="2.6" height="2.6"/><rect x="983.9" y="627.0" width="2.6" height="2.6"/><rect x="992.0" y="646.2" width="2.6" height="2.6"/><rect x="991.5" y="624.8" width="2.6" height="2.6"/><rect x="1002.1" y="652.0" width="2.6" height="2.6"/><rect x="998.1" y="642.5" width="2.6" height="2.6"/><rect x="989.4" y="627.6" width="2.6" height="2.6"/><rect x="995.5" y="645.3" width="2.6" height="2.6"/><rect x="1006.8" y="648.3" width="2.6" height="2.6"/><rect x="994.2" y="612.5" width="2.6" height="2.6"/><rect x="1001.0" y="619.4" width="2.6" height="2.6"/><rect x="997.0" y="653.7" width="2.6" height="2.6"/><rect x="990.4" y="630.4" width="2.6" height="2.6"/><rect x="986.5" y="636.8" width="2.6" height="2.6"/><rect x="994.8" y="653.4" width="2.6" height="2.6"/><rect x="987.1" y="647.7" width="2.6" height="2.6"/><rect x="996.0" y="648.2" width="2.6" height="2.6"/><rect x="996.6" y="625.4" width="2.6" height="2.6"/><rect x="995.3" y="625.5" width="2.6" height="2.6"/><rect x="978.7" y="620.9" width="2.6" height="2.6"/><rect x="987.4" y="623.0" width="2.6" height="2.6"/><rect x="989.4" y="616.2" width="2.6" height="2.6"/><rect x="989.4" y="614.8" width="2.6" height="2.6"/><rect x="1000.9" y="653.4" width="2.6" height="2.6"/><rect x="993.8" y="651.7" width="2.6" height="2.6"/><rect x="986.1" y="618.3" width="2.6" height="2.6"/><rect x="994.2" y="615.8" width="2.6" height="2.6"/><rect x="991.2" y="632.9" width="2.6" height="2.6"/><rect x="994.4" y="622.0" width="2.6" height="2.6"/><rect x="991.1" y="643.3" width="2.6" height="2.6"/><rect x="991.4" y="646.5" width="2.6" height="2.6"/><rect x="992.7" y="617.5" width="2.6" height="2.6"/><rect x="999.1" y="647.8" width="2.6" height="2.6"/><rect x="983.7" y="632.4" width="2.6" height="2.6"/><rect x="994.5" y="644.9" width="2.6" height="2.6"/><rect x="984.5" y="626.3" width="2.6" height="2.6"/><rect x="981.7" y="623.2" width="2.6" height="2.6"/><rect x="994.0" y="626.3" width="2.6" height="2.6"/><rect x="984.3" y="633.2" width="2.6" height="2.6"/><rect x="988.3" y="624.2" width="2.6" height="2.6"/><rect x="1005.9" y="643.7" width="2.6" height="2.6"/><rect x="999.2" y="614.1" width="2.6" height="2.6"/><rect x="987.5" y="635.6" width="2.6" height="2.6"/><rect x="1007.5" y="647.9" width="2.6" height="2.6"/><rect x="985.8" y="616.4" width="2.6" height="2.6"/><rect x="984.8" y="623.6" width="2.6" height="2.6"/><rect x="1009.7" y="649.7" width="2.6" height="2.6"/><rect x="996.2" y="627.6" width="2.6" height="2.6"/><rect x="1001.5" y="648.0" width="2.6" height="2.6"/><rect x="995.0" y="646.5" width="2.6" height="2.6"/><rect x="993.3" y="654.8" width="2.6" height="2.6"/><rect x="989.6" y="641.4" width="2.6" height="2.6"/><rect x="989.8" y="623.0" width="2.6" height="2.6"/><rect x="985.5" y="624.0" width="2.6" height="2.6"/><rect x="994.5" y="622.9" width="2.6" height="2.6"/><rect x="992.0" y="621.5" width="2.6" height="2.6"/><rect x="988.3" y="614.1" width="2.6" height="2.6"/><rect x="980.3" y="625.1" width="2.6" height="2.6"/><rect x="986.6" y="628.5" width="2.6" height="2.6"/><rect x="983.9" y="640.3" width="2.6" height="2.6"/><rect x="981.2" y="619.2" width="2.6" height="2.6"/><rect x="989.7" y="638.1" width="2.6" height="2.6"/><rect x="991.6" y="641.5" width="2.6" height="2.6"/><rect x="993.4" y="643.4" width="2.6" height="2.6"/><rect x="991.7" y="631.0" width="2.6" height="2.6"/><rect x="994.6" y="654.6" width="2.6" height="2.6"/><rect x="993.7" y="625.8" width="2.6" height="2.6"/><rect x="992.8" y="630.9" width="2.6" height="2.6"/><rect x="992.7" y="651.3" width="2.6" height="2.6"/><rect x="987.6" y="622.9" width="2.6" height="2.6"/><rect x="995.4" y="644.1" width="2.6" height="2.6"/><rect x="997.7" y="651.1" width="2.6" height="2.6"/><rect x="988.7" y="632.8" width="2.6" height="2.6"/><rect x="1002.7" y="648.3" width="2.6" height="2.6"/><rect x="991.0" y="633.6" width="2.6" height="2.6"/><rect x="992.1" y="637.3" width="2.6" height="2.6"/><rect x="992.3" y="641.3" width="2.6" height="2.6"/><rect x="995.2" y="639.3" width="2.6" height="2.6"/><rect x="993.1" y="628.7" width="2.6" height="2.6"/><rect x="988.9" y="626.3" width="2.6" height="2.6"/><rect x="990.2" y="636.6" width="2.6" height="2.6"/><rect x="993.1" y="634.1" width="2.6" height="2.6"/><rect x="993.3" y="648.4" width="2.6" height="2.6"/><rect x="987.1" y="619.9" width="2.6" height="2.6"/><rect x="992.9" y="654.8" width="2.6" height="2.6"/><rect x="986.2" y="616.9" width="2.6" height="2.6"/><rect x="1007.2" y="648.6" width="2.6" height="2.6"/><rect x="986.6" y="642.5" width="2.6" height="2.6"/><rect x="992.1" y="649.7" width="2.6" height="2.6"/><rect x="999.7" y="665.0" width="2.6" height="2.6"/><rect x="1004.9" y="665.9" width="2.6" height="2.6"/><rect x="1008.7" y="650.5" width="2.6" height="2.6"/><rect x="1007.6" y="653.7" width="2.6" height="2.6"/><rect x="1005.6" y="663.9" width="2.6" height="2.6"/><rect x="1002.2" y="656.8" width="2.6" height="2.6"/><rect x="1013.8" y="675.9" width="2.6" height="2.6"/><rect x="1005.6" y="648.3" width="2.6" height="2.6"/><rect x="1002.6" y="652.5" width="2.6" height="2.6"/><rect x="1014.5" y="672.2" width="2.6" height="2.6"/><rect x="1008.6" y="667.4" width="2.6" height="2.6"/><rect x="1014.4" y="662.7" width="2.6" height="2.6"/><rect x="1009.0" y="668.2" width="2.6" height="2.6"/><rect x="1010.8" y="658.6" width="2.6" height="2.6"/><rect x="1012.1" y="657.3" width="2.6" height="2.6"/><rect x="1003.0" y="651.3" width="2.6" height="2.6"/><rect x="1007.3" y="654.8" width="2.6" height="2.6"/><rect x="1015.4" y="667.4" width="2.6" height="2.6"/><rect x="1007.1" y="652.6" width="2.6" height="2.6"/><rect x="1008.5" y="663.9" width="2.6" height="2.6"/><rect x="1007.9" y="662.9" width="2.6" height="2.6"/><rect x="1005.3" y="651.1" width="2.6" height="2.6"/><rect x="999.2" y="657.4" width="2.6" height="2.6"/><rect x="1008.8" y="671.0" width="2.6" height="2.6"/><rect x="1013.8" y="670.4" width="2.6" height="2.6"/><rect x="1007.1" y="667.7" width="2.6" height="2.6"/><rect x="1006.5" y="662.4" width="2.6" height="2.6"/><rect x="1015.9" y="675.2" width="2.6" height="2.6"/><rect x="1016.3" y="676.8" width="2.6" height="2.6"/><rect x="1014.6" y="667.2" width="2.6" height="2.6"/><rect x="1022.8" y="667.1" width="2.6" height="2.6"/><rect x="1003.3" y="672.1" width="2.6" height="2.6"/><rect x="1005.2" y="654.6" width="2.6" height="2.6"/><rect x="1015.6" y="668.4" width="2.6" height="2.6"/><rect x="1007.7" y="659.5" width="2.6" height="2.6"/><rect x="1012.2" y="671.6" width="2.6" height="2.6"/><rect x="999.8" y="667.2" width="2.6" height="2.6"/><rect x="1014.9" y="670.6" width="2.6" height="2.6"/><rect x="1016.5" y="673.1" width="2.6" height="2.6"/><rect x="1004.5" y="657.5" width="2.6" height="2.6"/><rect x="1002.7" y="665.1" width="2.6" height="2.6"/><rect x="999.7" y="656.5" width="2.6" height="2.6"/><rect x="1018.1" y="671.6" width="2.6" height="2.6"/><rect x="1012.8" y="667.4" width="2.6" height="2.6"/><rect x="1017.8" y="665.1" width="2.6" height="2.6"/><rect x="1006.7" y="650.2" width="2.6" height="2.6"/><rect x="1008.3" y="659.1" width="2.6" height="2.6"/><rect x="1022.5" y="662.5" width="2.6" height="2.6"/><rect x="1020.1" y="666.3" width="2.6" height="2.6"/><rect x="997.4" y="662.8" width="2.6" height="2.6"/><rect x="1008.4" y="660.5" width="2.6" height="2.6"/><rect x="1017.8" y="665.7" width="2.6" height="2.6"/><rect x="1002.2" y="677.5" width="2.6" height="2.6"/><rect x="1007.1" y="660.8" width="2.6" height="2.6"/><rect x="1007.0" y="652.6" width="2.6" height="2.6"/><rect x="1010.0" y="674.2" width="2.6" height="2.6"/><rect x="1003.4" y="661.2" width="2.6" height="2.6"/><rect x="1009.2" y="670.6" width="2.6" height="2.6"/><rect x="1014.4" y="664.3" width="2.6" height="2.6"/><rect x="1005.6" y="660.8" width="2.6" height="2.6"/><rect x="1002.9" y="657.1" width="2.6" height="2.6"/><rect x="1016.5" y="659.2" width="2.6" height="2.6"/><rect x="1017.3" y="670.8" width="2.6" height="2.6"/><rect x="1001.9" y="657.8" width="2.6" height="2.6"/><rect x="995.5" y="661.7" width="2.6" height="2.6"/><rect x="1000.7" y="653.5" width="2.6" height="2.6"/><rect x="1006.2" y="662.0" width="2.6" height="2.6"/><rect x="1008.3" y="653.0" width="2.6" height="2.6"/><rect x="1006.3" y="654.9" width="2.6" height="2.6"/><rect x="1014.8" y="661.9" width="2.6" height="2.6"/><rect x="1019.6" y="669.5" width="2.6" height="2.6"/><rect x="1004.1" y="659.7" width="2.6" height="2.6"/><rect x="1012.2" y="666.2" width="2.6" height="2.6"/><rect x="1017.8" y="669.1" width="2.6" height="2.6"/><rect x="1008.6" y="654.3" width="2.6" height="2.6"/><rect x="1002.5" y="651.4" width="2.6" height="2.6"/><rect x="1010.5" y="655.5" width="2.6" height="2.6"/><rect x="1020.7" y="654.6" width="2.6" height="2.6"/><rect x="1012.8" y="669.7" width="2.6" height="2.6"/><rect x="1004.2" y="659.7" width="2.6" height="2.6"/><rect x="1011.7" y="662.2" width="2.6" height="2.6"/><rect x="1008.3" y="661.1" width="2.6" height="2.6"/><rect x="1015.3" y="668.3" width="2.6" height="2.6"/><rect x="1007.3" y="644.7" width="2.6" height="2.6"/><rect x="1005.2" y="653.6" width="2.6" height="2.6"/><rect x="1007.0" y="653.6" width="2.6" height="2.6"/><rect x="1015.9" y="661.2" width="2.6" height="2.6"/><rect x="1015.9" y="669.0" width="2.6" height="2.6"/><rect x="1003.7" y="662.9" width="2.6" height="2.6"/><rect x="996.4" y="661.7" width="2.6" height="2.6"/><rect x="1018.7" y="660.6" width="2.6" height="2.6"/><rect x="996.8" y="659.1" width="2.6" height="2.6"/><rect x="1014.2" y="655.7" width="2.6" height="2.6"/><rect x="1017.9" y="663.0" width="2.6" height="2.6"/><rect x="1001.3" y="657.4" width="2.6" height="2.6"/><rect x="1001.8" y="662.4" width="2.6" height="2.6"/><rect x="1015.1" y="667.3" width="2.6" height="2.6"/><rect x="1011.8" y="669.5" width="2.6" height="2.6"/><rect x="1009.6" y="652.9" width="2.6" height="2.6"/><rect x="1016.9" y="655.9" width="2.6" height="2.6"/><rect x="1008.7" y="666.0" width="2.6" height="2.6"/><rect x="1010.7" y="651.4" width="2.6" height="2.6"/><rect x="1010.9" y="648.9" width="2.6" height="2.6"/><rect x="1016.1" y="671.8" width="2.6" height="2.6"/><rect x="1004.5" y="658.8" width="2.6" height="2.6"/><rect x="1010.6" y="673.3" width="2.6" height="2.6"/><rect x="1008.6" y="657.2" width="2.6" height="2.6"/><rect x="1019.8" y="666.7" width="2.6" height="2.6"/><rect x="1017.1" y="671.7" width="2.6" height="2.6"/><rect x="1014.9" y="662.1" width="2.6" height="2.6"/><rect x="1025.2" y="663.5" width="2.6" height="2.6"/><rect x="1007.1" y="665.8" width="2.6" height="2.6"/><rect x="1022.4" y="662.0" width="2.6" height="2.6"/><rect x="1009.8" y="660.5" width="2.6" height="2.6"/><rect x="1010.5" y="653.7" width="2.6" height="2.6"/><rect x="1005.2" y="656.7" width="2.6" height="2.6"/><rect x="1020.2" y="667.5" width="2.6" height="2.6"/><rect x="1001.3" y="659.1" width="2.6" height="2.6"/><rect x="1019.4" y="669.4" width="2.6" height="2.6"/><rect x="1006.6" y="660.8" width="2.6" height="2.6"/><rect x="1000.0" y="656.3" width="2.6" height="2.6"/><rect x="1017.9" y="660.7" width="2.6" height="2.6"/><rect x="1019.3" y="660.8" width="2.6" height="2.6"/><rect x="1003.7" y="652.2" width="2.6" height="2.6"/><rect x="1018.9" y="665.0" width="2.6" height="2.6"/><rect x="1016.4" y="668.6" width="2.6" height="2.6"/><rect x="1019.1" y="667.0" width="2.6" height="2.6"/><rect x="1017.9" y="670.8" width="2.6" height="2.6"/><rect x="1004.7" y="657.2" width="2.6" height="2.6"/><rect x="996.0" y="665.2" width="2.6" height="2.6"/><rect x="1015.8" y="669.1" width="2.6" height="2.6"/><rect x="1033.0" y="681.0" width="2.6" height="2.6"/><rect x="1030.8" y="667.5" width="2.6" height="2.6"/><rect x="1019.5" y="678.0" width="2.6" height="2.6"/><rect x="1022.9" y="677.3" width="2.6" height="2.6"/><rect x="1028.5" y="673.1" width="2.6" height="2.6"/><rect x="1026.4" y="673.7" width="2.6" height="2.6"/><rect x="1027.8" y="672.6" width="2.6" height="2.6"/><rect x="1030.7" y="669.5" width="2.6" height="2.6"/><rect x="1047.2" y="672.4" width="2.6" height="2.6"/><rect x="1034.6" y="677.4" width="2.6" height="2.6"/><rect x="1024.4" y="666.0" width="2.6" height="2.6"/><rect x="1036.2" y="682.2" width="2.6" height="2.6"/><rect x="1029.6" y="672.6" width="2.6" height="2.6"/><rect x="1029.1" y="666.9" width="2.6" height="2.6"/><rect x="1035.3" y="688.2" width="2.6" height="2.6"/><rect x="1022.1" y="677.0" width="2.6" height="2.6"/><rect x="1019.8" y="672.6" width="2.6" height="2.6"/><rect x="1037.6" y="689.9" width="2.6" height="2.6"/><rect x="1024.5" y="664.5" width="2.6" height="2.6"/><rect x="1038.1" y="680.1" width="2.6" height="2.6"/><rect x="1027.7" y="667.9" width="2.6" height="2.6"/><rect x="1038.9" y="680.4" width="2.6" height="2.6"/><rect x="1024.6" y="677.0" width="2.6" height="2.6"/><rect x="1026.6" y="671.3" width="2.6" height="2.6"/><rect x="1037.5" y="676.3" width="2.6" height="2.6"/><rect x="1034.8" y="677.9" width="2.6" height="2.6"/><rect x="1021.9" y="672.9" width="2.6" height="2.6"/><rect x="1042.2" y="672.4" width="2.6" height="2.6"/><rect x="1036.4" y="674.7" width="2.6" height="2.6"/><rect x="1027.4" y="678.8" width="2.6" height="2.6"/><rect x="1035.3" y="689.7" width="2.6" height="2.6"/><rect x="1018.7" y="675.7" width="2.6" height="2.6"/><rect x="1026.1" y="671.7" width="2.6" height="2.6"/><rect x="1026.0" y="686.6" width="2.6" height="2.6"/><rect x="1027.8" y="677.4" width="2.6" height="2.6"/><rect x="1032.4" y="673.4" width="2.6" height="2.6"/><rect x="1032.4" y="676.8" width="2.6" height="2.6"/><rect x="1039.7" y="669.9" width="2.6" height="2.6"/><rect x="1029.4" y="673.0" width="2.6" height="2.6"/><rect x="1037.8" y="682.9" width="2.6" height="2.6"/><rect x="1035.5" y="678.0" width="2.6" height="2.6"/><rect x="1032.3" y="672.5" width="2.6" height="2.6"/><rect x="1039.0" y="677.3" width="2.6" height="2.6"/><rect x="1031.8" y="674.5" width="2.6" height="2.6"/><rect x="1040.0" y="681.1" width="2.6" height="2.6"/><rect x="1025.8" y="676.9" width="2.6" height="2.6"/><rect x="1035.4" y="680.2" width="2.6" height="2.6"/><rect x="1025.9" y="669.7" width="2.6" height="2.6"/><rect x="1028.1" y="670.4" width="2.6" height="2.6"/><rect x="1021.7" y="677.3" width="2.6" height="2.6"/><rect x="1025.4" y="679.0" width="2.6" height="2.6"/><rect x="1029.8" y="691.3" width="2.6" height="2.6"/><rect x="1022.1" y="673.5" width="2.6" height="2.6"/><rect x="1029.7" y="674.3" width="2.6" height="2.6"/><rect x="1041.0" y="684.3" width="2.6" height="2.6"/><rect x="1034.8" y="667.8" width="2.6" height="2.6"/><rect x="1026.3" y="671.0" width="2.6" height="2.6"/><rect x="1026.6" y="670.9" width="2.6" height="2.6"/><rect x="1026.8" y="679.6" width="2.6" height="2.6"/><rect x="1037.5" y="680.8" width="2.6" height="2.6"/><rect x="1040.0" y="671.7" width="2.6" height="2.6"/><rect x="1031.1" y="675.7" width="2.6" height="2.6"/><rect x="1026.5" y="667.9" width="2.6" height="2.6"/><rect x="1038.8" y="676.1" width="2.6" height="2.6"/><rect x="1043.9" y="675.4" width="2.6" height="2.6"/><rect x="1035.7" y="681.9" width="2.6" height="2.6"/><rect x="1029.6" y="676.3" width="2.6" height="2.6"/><rect x="1035.6" y="688.6" width="2.6" height="2.6"/><rect x="1039.4" y="676.6" width="2.6" height="2.6"/><rect x="1040.9" y="669.3" width="2.6" height="2.6"/><rect x="1037.2" y="673.9" width="2.6" height="2.6"/><rect x="1034.0" y="679.0" width="2.6" height="2.6"/><rect x="1027.5" y="663.9" width="2.6" height="2.6"/><rect x="1034.1" y="682.9" width="2.6" height="2.6"/><rect x="1034.7" y="677.8" width="2.6" height="2.6"/><rect x="1028.0" y="680.8" width="2.6" height="2.6"/><rect x="1038.0" y="671.5" width="2.6" height="2.6"/><rect x="1038.9" y="685.4" width="2.6" height="2.6"/><rect x="1027.8" y="667.6" width="2.6" height="2.6"/><rect x="1033.5" y="667.9" width="2.6" height="2.6"/><rect x="1030.9" y="677.4" width="2.6" height="2.6"/><rect x="1033.0" y="676.5" width="2.6" height="2.6"/><rect x="1023.3" y="674.4" width="2.6" height="2.6"/><rect x="1038.8" y="665.1" width="2.6" height="2.6"/><rect x="1026.5" y="665.9" width="2.6" height="2.6"/><rect x="1038.1" y="676.1" width="2.6" height="2.6"/><rect x="1035.5" y="670.5" width="2.6" height="2.6"/><rect x="1036.4" y="669.4" width="2.6" height="2.6"/><rect x="1028.2" y="678.3" width="2.6" height="2.6"/><rect x="1036.5" y="677.4" width="2.6" height="2.6"/><rect x="1029.5" y="675.1" width="2.6" height="2.6"/><rect x="1043.7" y="679.6" width="2.6" height="2.6"/><rect x="1026.7" y="678.1" width="2.6" height="2.6"/><rect x="1029.0" y="676.3" width="2.6" height="2.6"/><rect x="1024.0" y="665.8" width="2.6" height="2.6"/><rect x="1034.7" y="681.1" width="2.6" height="2.6"/><rect x="1028.9" y="674.1" width="2.6" height="2.6"/><rect x="1035.1" y="682.6" width="2.6" height="2.6"/><rect x="1043.2" y="678.2" width="2.6" height="2.6"/><rect x="1038.7" y="679.3" width="2.6" height="2.6"/><rect x="1029.2" y="675.5" width="2.6" height="2.6"/><rect x="1036.4" y="682.1" width="2.6" height="2.6"/><rect x="1040.6" y="676.3" width="2.6" height="2.6"/><rect x="1035.6" y="672.9" width="2.6" height="2.6"/><rect x="1023.5" y="677.3" width="2.6" height="2.6"/><rect x="1035.5" y="676.9" width="2.6" height="2.6"/><rect x="1037.5" y="682.3" width="2.6" height="2.6"/><rect x="1030.3" y="668.7" width="2.6" height="2.6"/><rect x="1029.2" y="683.3" width="2.6" height="2.6"/><rect x="1025.1" y="681.0" width="2.6" height="2.6"/><rect x="1039.7" y="680.0" width="2.6" height="2.6"/><rect x="1023.9" y="677.9" width="2.6" height="2.6"/><rect x="1030.2" y="675.4" width="2.6" height="2.6"/><rect x="1036.5" y="679.2" width="2.6" height="2.6"/><rect x="1027.1" y="673.7" width="2.6" height="2.6"/><rect x="1029.1" y="680.1" width="2.6" height="2.6"/><rect x="1033.0" y="670.7" width="2.6" height="2.6"/><rect x="1032.0" y="669.1" width="2.6" height="2.6"/><rect x="1040.5" y="682.4" width="2.6" height="2.6"/><rect x="1039.7" y="678.9" width="2.6" height="2.6"/><rect x="1040.3" y="681.7" width="2.6" height="2.6"/><rect x="1040.5" y="677.6" width="2.6" height="2.6"/><rect x="1034.3" y="678.6" width="2.6" height="2.6"/><rect x="1054.2" y="685.3" width="2.6" height="2.6"/><rect x="1050.6" y="684.3" width="2.6" height="2.6"/><rect x="1043.7" y="685.3" width="2.6" height="2.6"/><rect x="1045.2" y="683.8" width="2.6" height="2.6"/><rect x="1045.7" y="677.8" width="2.6" height="2.6"/><rect x="1053.4" y="686.0" width="2.6" height="2.6"/><rect x="1054.3" y="681.9" width="2.6" height="2.6"/><rect x="1049.6" y="685.8" width="2.6" height="2.6"/><rect x="1055.5" y="677.2" width="2.6" height="2.6"/><rect x="1051.7" y="686.6" width="2.6" height="2.6"/><rect x="1051.8" y="681.4" width="2.6" height="2.6"/><rect x="1049.2" y="683.6" width="2.6" height="2.6"/><rect x="1054.8" y="679.2" width="2.6" height="2.6"/><rect x="1049.5" y="683.7" width="2.6" height="2.6"/><rect x="1043.3" y="686.7" width="2.6" height="2.6"/><rect x="1047.2" y="689.5" width="2.6" height="2.6"/><rect x="1043.8" y="684.9" width="2.6" height="2.6"/><rect x="1050.3" y="677.1" width="2.6" height="2.6"/><rect x="1053.1" y="685.1" width="2.6" height="2.6"/><rect x="1041.8" y="685.6" width="2.6" height="2.6"/><rect x="1050.8" y="678.9" width="2.6" height="2.6"/><rect x="1050.0" y="687.2" width="2.6" height="2.6"/><rect x="1048.8" y="679.2" width="2.6" height="2.6"/><rect x="1052.6" y="692.2" width="2.6" height="2.6"/><rect x="1049.5" y="687.8" width="2.6" height="2.6"/><rect x="1044.6" y="676.0" width="2.6" height="2.6"/><rect x="1055.3" y="680.0" width="2.6" height="2.6"/><rect x="1045.0" y="689.8" width="2.6" height="2.6"/><rect x="1048.7" y="683.1" width="2.6" height="2.6"/><rect x="1051.4" y="693.5" width="2.6" height="2.6"/><rect x="1049.8" y="686.1" width="2.6" height="2.6"/><rect x="1045.9" y="686.7" width="2.6" height="2.6"/><rect x="1049.4" y="679.8" width="2.6" height="2.6"/><rect x="1048.9" y="684.4" width="2.6" height="2.6"/><rect x="1048.9" y="679.9" width="2.6" height="2.6"/><rect x="1050.2" y="674.0" width="2.6" height="2.6"/><rect x="1047.0" y="679.8" width="2.6" height="2.6"/><rect x="1054.0" y="679.6" width="2.6" height="2.6"/><rect x="1045.0" y="686.8" width="2.6" height="2.6"/><rect x="1046.8" y="691.7" width="2.6" height="2.6"/><rect x="1052.6" y="683.5" width="2.6" height="2.6"/><rect x="1047.1" y="681.5" width="2.6" height="2.6"/><rect x="1048.7" y="688.3" width="2.6" height="2.6"/><rect x="1050.3" y="684.6" width="2.6" height="2.6"/><rect x="1051.8" y="683.0" width="2.6" height="2.6"/><rect x="1053.8" y="683.4" width="2.6" height="2.6"/><rect x="1046.4" y="682.7" width="2.6" height="2.6"/><rect x="1041.5" y="686.8" width="2.6" height="2.6"/><rect x="1047.1" y="695.6" width="2.6" height="2.6"/><rect x="1049.9" y="687.2" width="2.6" height="2.6"/><rect x="1053.0" y="672.6" width="2.6" height="2.6"/><rect x="1051.6" y="678.4" width="2.6" height="2.6"/><rect x="1051.4" y="678.2" width="2.6" height="2.6"/><rect x="1050.4" y="686.3" width="2.6" height="2.6"/><rect x="1046.2" y="691.5" width="2.6" height="2.6"/><rect x="1051.2" y="687.4" width="2.6" height="2.6"/><rect x="1042.5" y="684.5" width="2.6" height="2.6"/><rect x="1050.3" y="691.5" width="2.6" height="2.6"/><rect x="1048.1" y="679.4" width="2.6" height="2.6"/><rect x="1052.2" y="686.4" width="2.6" height="2.6"/><rect x="1047.5" y="676.3" width="2.6" height="2.6"/><rect x="1047.3" y="679.0" width="2.6" height="2.6"/><rect x="1061.8" y="651.4" width="2.6" height="2.6"/><rect x="1068.3" y="651.3" width="2.6" height="2.6"/><rect x="1066.0" y="650.7" width="2.6" height="2.6"/><rect x="1049.9" y="652.5" width="2.6" height="2.6"/><rect x="1066.2" y="652.4" width="2.6" height="2.6"/><rect x="1076.7" y="650.7" width="2.6" height="2.6"/><rect x="1060.5" y="651.0" width="2.6" height="2.6"/><rect x="1066.8" y="654.0" width="2.6" height="2.6"/><rect x="1063.2" y="649.6" width="2.6" height="2.6"/><rect x="1061.3" y="652.3" width="2.6" height="2.6"/><rect x="1055.2" y="651.9" width="2.6" height="2.6"/><rect x="1053.3" y="651.0" width="2.6" height="2.6"/><rect x="1069.6" y="650.9" width="2.6" height="2.6"/><rect x="1052.4" y="651.4" width="2.6" height="2.6"/><rect x="1075.2" y="650.8" width="2.6" height="2.6"/><rect x="1052.6" y="652.8" width="2.6" height="2.6"/><rect x="1056.1" y="651.1" width="2.6" height="2.6"/><rect x="1071.1" y="651.0" width="2.6" height="2.6"/><rect x="1072.3" y="651.3" width="2.6" height="2.6"/><rect x="1070.5" y="652.1" width="2.6" height="2.6"/><rect x="1051.3" y="649.4" width="2.6" height="2.6"/><rect x="1067.9" y="650.6" width="2.6" height="2.6"/><rect x="1077.1" y="649.6" width="2.6" height="2.6"/><rect x="1056.4" y="652.8" width="2.6" height="2.6"/><rect x="1049.0" y="650.5" width="2.6" height="2.6"/><rect x="1049.1" y="649.6" width="2.6" height="2.6"/><rect x="1051.1" y="649.1" width="2.6" height="2.6"/><rect x="1058.2" y="650.8" width="2.6" height="2.6"/><rect x="1075.0" y="650.2" width="2.6" height="2.6"/><rect x="1063.5" y="652.0" width="2.6" height="2.6"/><rect x="1066.2" y="651.3" width="2.6" height="2.6"/><rect x="1062.1" y="650.6" width="2.6" height="2.6"/><rect x="1073.0" y="650.3" width="2.6" height="2.6"/><rect x="1059.8" y="649.9" width="2.6" height="2.6"/><rect x="1061.4" y="649.6" width="2.6" height="2.6"/><rect x="1060.5" y="651.6" width="2.6" height="2.6"/><rect x="1084.4" y="670.4" width="2.6" height="2.6"/><rect x="1081.1" y="665.2" width="2.6" height="2.6"/><rect x="1081.8" y="675.6" width="2.6" height="2.6"/><rect x="1080.9" y="668.8" width="2.6" height="2.6"/><rect x="1082.0" y="666.1" width="2.6" height="2.6"/><rect x="1081.4" y="675.7" width="2.6" height="2.6"/><rect x="1081.6" y="658.5" width="2.6" height="2.6"/><rect x="1079.6" y="661.9" width="2.6" height="2.6"/><rect x="1082.1" y="668.1" width="2.6" height="2.6"/><rect x="1079.3" y="666.3" width="2.6" height="2.6"/><rect x="1081.4" y="657.9" width="2.6" height="2.6"/><rect x="1079.3" y="650.9" width="2.6" height="2.6"/><rect x="1079.8" y="665.9" width="2.6" height="2.6"/><rect x="1081.5" y="671.6" width="2.6" height="2.6"/><rect x="1082.0" y="672.0" width="2.6" height="2.6"/><rect x="1080.7" y="671.6" width="2.6" height="2.6"/><rect x="1081.2" y="657.7" width="2.6" height="2.6"/><rect x="1081.2" y="672.5" width="2.6" height="2.6"/><rect x="1083.7" y="673.8" width="2.6" height="2.6"/><rect x="1079.0" y="659.8" width="2.6" height="2.6"/><rect x="1080.9" y="671.2" width="2.6" height="2.6"/><rect x="1079.8" y="656.0" width="2.6" height="2.6"/><rect x="1082.7" y="656.5" width="2.6" height="2.6"/><rect x="1081.7" y="666.2" width="2.6" height="2.6"/><rect x="1081.0" y="656.0" width="2.6" height="2.6"/><rect x="1080.0" y="657.3" width="2.6" height="2.6"/><rect x="1082.7" y="662.3" width="2.6" height="2.6"/><rect x="1078.8" y="653.2" width="2.6" height="2.6"/><rect x="1081.8" y="656.6" width="2.6" height="2.6"/><rect x="1079.0" y="665.8" width="2.6" height="2.6"/><rect x="1074.7" y="680.8" width="2.6" height="2.6"/><rect x="1075.1" y="679.7" width="2.6" height="2.6"/><rect x="1079.5" y="677.8" width="2.6" height="2.6"/><rect x="1079.6" y="677.6" width="2.6" height="2.6"/><rect x="1073.9" y="680.7" width="2.6" height="2.6"/><rect x="1076.3" y="679.3" width="2.6" height="2.6"/><rect x="1081.6" y="676.5" width="2.6" height="2.6"/><rect x="1066.9" y="682.7" width="2.6" height="2.6"/><rect x="1072.3" y="679.7" width="2.6" height="2.6"/><rect x="1069.7" y="680.2" width="2.6" height="2.6"/><rect x="1076.4" y="677.1" width="2.6" height="2.6"/><rect x="1074.1" y="679.1" width="2.6" height="2.6"/><rect x="1066.8" y="682.2" width="2.6" height="2.6"/><rect x="1069.4" y="682.9" width="2.6" height="2.6"/><rect x="1078.2" y="677.7" width="2.6" height="2.6"/><rect x="1071.1" y="683.4" width="2.6" height="2.6"/><rect x="1069.9" y="679.7" width="2.6" height="2.6"/><rect x="1069.2" y="680.4" width="2.6" height="2.6"/><rect x="1081.8" y="676.6" width="2.6" height="2.6"/><rect x="1079.1" y="677.2" width="2.6" height="2.6"/><rect x="1041.1" y="687.1" width="2.6" height="2.6"/><rect x="1042.5" y="699.8" width="2.6" height="2.6"/><rect x="1052.1" y="707.5" width="2.6" height="2.6"/><rect x="1042.4" y="709.0" width="2.6" height="2.6"/><rect x="1042.6" y="695.7" width="2.6" height="2.6"/><rect x="1039.9" y="689.2" width="2.6" height="2.6"/><rect x="1047.0" y="698.9" width="2.6" height="2.6"/><rect x="1039.8" y="702.6" width="2.6" height="2.6"/><rect x="1046.9" y="694.5" width="2.6" height="2.6"/><rect x="1038.8" y="697.9" width="2.6" height="2.6"/><rect x="1038.4" y="712.1" width="2.6" height="2.6"/><rect x="1040.5" y="691.7" width="2.6" height="2.6"/><rect x="1043.9" y="694.2" width="2.6" height="2.6"/><rect x="1040.8" y="709.2" width="2.6" height="2.6"/><rect x="1047.9" y="685.3" width="2.6" height="2.6"/><rect x="1049.1" y="704.1" width="2.6" height="2.6"/><rect x="1055.1" y="707.7" width="2.6" height="2.6"/><rect x="1038.1" y="688.0" width="2.6" height="2.6"/><rect x="1042.2" y="709.8" width="2.6" height="2.6"/><rect x="1048.6" y="701.4" width="2.6" height="2.6"/><rect x="1041.3" y="705.3" width="2.6" height="2.6"/><rect x="1044.9" y="687.6" width="2.6" height="2.6"/><rect x="1040.1" y="689.2" width="2.6" height="2.6"/><rect x="1043.9" y="697.5" width="2.6" height="2.6"/><rect x="1040.5" y="689.6" width="2.6" height="2.6"/><rect x="1039.4" y="703.7" width="2.6" height="2.6"/><rect x="1043.2" y="690.3" width="2.6" height="2.6"/><rect x="1039.9" y="687.0" width="2.6" height="2.6"/><rect x="1049.7" y="707.7" width="2.6" height="2.6"/><rect x="1045.9" y="707.0" width="2.6" height="2.6"/><rect x="1047.0" y="695.9" width="2.6" height="2.6"/><rect x="1035.1" y="689.8" width="2.6" height="2.6"/><rect x="1050.3" y="699.7" width="2.6" height="2.6"/><rect x="1050.0" y="695.2" width="2.6" height="2.6"/><rect x="1038.2" y="698.8" width="2.6" height="2.6"/><rect x="1044.4" y="701.2" width="2.6" height="2.6"/><rect x="1040.4" y="687.4" width="2.6" height="2.6"/><rect x="1049.4" y="702.1" width="2.6" height="2.6"/><rect x="1048.8" y="706.3" width="2.6" height="2.6"/><rect x="1046.5" y="691.3" width="2.6" height="2.6"/><rect x="1042.8" y="692.3" width="2.6" height="2.6"/><rect x="1049.2" y="705.4" width="2.6" height="2.6"/><rect x="1043.2" y="697.9" width="2.6" height="2.6"/><rect x="1042.7" y="693.6" width="2.6" height="2.6"/><rect x="1049.9" y="708.9" width="2.6" height="2.6"/><rect x="1037.5" y="688.2" width="2.6" height="2.6"/><rect x="1048.1" y="689.5" width="2.6" height="2.6"/><rect x="1046.3" y="696.8" width="2.6" height="2.6"/><rect x="1040.3" y="691.2" width="2.6" height="2.6"/><rect x="1028.4" y="698.4" width="2.6" height="2.6"/><rect x="1049.2" y="707.6" width="2.6" height="2.6"/><rect x="1045.6" y="687.2" width="2.6" height="2.6"/><rect x="1033.3" y="689.2" width="2.6" height="2.6"/><rect x="1050.5" y="702.2" width="2.6" height="2.6"/><rect x="1030.3" y="688.9" width="2.6" height="2.6"/><rect x="1048.9" y="704.7" width="2.6" height="2.6"/><rect x="1040.5" y="686.0" width="2.6" height="2.6"/><rect x="1050.6" y="704.9" width="2.6" height="2.6"/><rect x="1045.8" y="695.9" width="2.6" height="2.6"/><rect x="1047.0" y="707.9" width="2.6" height="2.6"/><rect x="1037.5" y="690.2" width="2.6" height="2.6"/><rect x="1042.8" y="690.0" width="2.6" height="2.6"/><rect x="1051.1" y="688.4" width="2.6" height="2.6"/><rect x="1037.6" y="688.7" width="2.6" height="2.6"/><rect x="1042.3" y="698.3" width="2.6" height="2.6"/><rect x="1042.5" y="692.5" width="2.6" height="2.6"/><rect x="1040.8" y="704.1" width="2.6" height="2.6"/><rect x="1050.3" y="704.4" width="2.6" height="2.6"/><rect x="1044.6" y="686.6" width="2.6" height="2.6"/><rect x="1053.3" y="701.6" width="2.6" height="2.6"/><rect x="1038.9" y="687.8" width="2.6" height="2.6"/><rect x="1052.1" y="704.0" width="2.6" height="2.6"/><rect x="1040.2" y="708.3" width="2.6" height="2.6"/><rect x="1035.4" y="699.9" width="2.6" height="2.6"/><rect x="1044.5" y="697.2" width="2.6" height="2.6"/><rect x="1048.2" y="706.5" width="2.6" height="2.6"/><rect x="1044.7" y="706.4" width="2.6" height="2.6"/><rect x="1042.5" y="694.9" width="2.6" height="2.6"/><rect x="1042.4" y="700.8" width="2.6" height="2.6"/><rect x="1047.6" y="684.3" width="2.6" height="2.6"/><rect x="1046.4" y="697.8" width="2.6" height="2.6"/><rect x="1045.2" y="687.9" width="2.6" height="2.6"/><rect x="1056.2" y="704.3" width="2.6" height="2.6"/><rect x="1045.7" y="692.9" width="2.6" height="2.6"/><rect x="1051.6" y="702.5" width="2.6" height="2.6"/><rect x="1034.9" y="688.9" width="2.6" height="2.6"/><rect x="1053.9" y="695.3" width="2.6" height="2.6"/><rect x="1051.4" y="696.4" width="2.6" height="2.6"/><rect x="1043.8" y="685.6" width="2.6" height="2.6"/><rect x="1048.0" y="709.0" width="2.6" height="2.6"/><rect x="1040.3" y="688.6" width="2.6" height="2.6"/><rect x="1043.7" y="691.6" width="2.6" height="2.6"/><rect x="1044.2" y="687.5" width="2.6" height="2.6"/><rect x="1046.6" y="702.5" width="2.6" height="2.6"/><rect x="1045.4" y="700.2" width="2.6" height="2.6"/><rect x="1053.3" y="697.6" width="2.6" height="2.6"/><rect x="1044.3" y="687.6" width="2.6" height="2.6"/><rect x="1048.2" y="706.5" width="2.6" height="2.6"/><rect x="1044.7" y="688.0" width="2.6" height="2.6"/><rect x="1049.4" y="696.4" width="2.6" height="2.6"/><rect x="1043.4" y="688.4" width="2.6" height="2.6"/><rect x="1041.0" y="696.3" width="2.6" height="2.6"/><rect x="1043.1" y="707.5" width="2.6" height="2.6"/><rect x="1050.4" y="687.2" width="2.6" height="2.6"/><rect x="1047.0" y="688.5" width="2.6" height="2.6"/><rect x="1043.4" y="706.5" width="2.6" height="2.6"/><rect x="1046.9" y="695.2" width="2.6" height="2.6"/><rect x="1052.3" y="704.6" width="2.6" height="2.6"/><rect x="1049.1" y="708.1" width="2.6" height="2.6"/><rect x="1049.2" y="703.8" width="2.6" height="2.6"/><rect x="1041.7" y="694.3" width="2.6" height="2.6"/><rect x="1036.9" y="698.1" width="2.6" height="2.6"/><rect x="1049.2" y="707.3" width="2.6" height="2.6"/><rect x="1046.7" y="705.4" width="2.6" height="2.6"/><rect x="1047.0" y="697.7" width="2.6" height="2.6"/><rect x="1045.2" y="709.5" width="2.6" height="2.6"/><rect x="1046.6" y="695.3" width="2.6" height="2.6"/><rect x="1050.2" y="699.8" width="2.6" height="2.6"/><rect x="1038.7" y="688.2" width="2.6" height="2.6"/><rect x="1046.2" y="695.7" width="2.6" height="2.6"/><rect x="1043.5" y="688.8" width="2.6" height="2.6"/><rect x="1046.7" y="709.4" width="2.6" height="2.6"/><rect x="1057.3" y="698.1" width="2.6" height="2.6"/><rect x="1040.3" y="706.9" width="2.6" height="2.6"/><rect x="1049.2" y="684.6" width="2.6" height="2.6"/><rect x="1057.2" y="727.1" width="2.6" height="2.6"/><rect x="1045.5" y="720.2" width="2.6" height="2.6"/><rect x="1049.9" y="727.1" width="2.6" height="2.6"/><rect x="1054.6" y="715.4" width="2.6" height="2.6"/><rect x="1064.9" y="719.7" width="2.6" height="2.6"/><rect x="1047.8" y="719.6" width="2.6" height="2.6"/><rect x="1053.8" y="717.5" width="2.6" height="2.6"/><rect x="1057.7" y="725.3" width="2.6" height="2.6"/><rect x="1063.8" y="734.6" width="2.6" height="2.6"/><rect x="1054.7" y="722.4" width="2.6" height="2.6"/><rect x="1053.9" y="725.0" width="2.6" height="2.6"/><rect x="1048.5" y="714.1" width="2.6" height="2.6"/><rect x="1055.3" y="716.5" width="2.6" height="2.6"/><rect x="1049.7" y="717.3" width="2.6" height="2.6"/><rect x="1057.8" y="708.6" width="2.6" height="2.6"/><rect x="1058.6" y="725.5" width="2.6" height="2.6"/><rect x="1057.4" y="724.7" width="2.6" height="2.6"/><rect x="1059.8" y="728.3" width="2.6" height="2.6"/><rect x="1060.1" y="719.9" width="2.6" height="2.6"/><rect x="1056.2" y="721.8" width="2.6" height="2.6"/><rect x="1052.3" y="718.3" width="2.6" height="2.6"/><rect x="1051.8" y="725.2" width="2.6" height="2.6"/><rect x="1054.0" y="720.0" width="2.6" height="2.6"/><rect x="1053.4" y="719.3" width="2.6" height="2.6"/><rect x="1058.8" y="733.7" width="2.6" height="2.6"/><rect x="1049.1" y="725.7" width="2.6" height="2.6"/><rect x="1048.5" y="719.2" width="2.6" height="2.6"/><rect x="1058.4" y="730.9" width="2.6" height="2.6"/><rect x="1042.5" y="717.7" width="2.6" height="2.6"/><rect x="1050.4" y="723.4" width="2.6" height="2.6"/><rect x="1053.1" y="709.8" width="2.6" height="2.6"/><rect x="1054.6" y="731.4" width="2.6" height="2.6"/><rect x="1048.3" y="713.5" width="2.6" height="2.6"/><rect x="1046.7" y="734.9" width="2.6" height="2.6"/><rect x="1052.7" y="713.0" width="2.6" height="2.6"/><rect x="1053.4" y="729.9" width="2.6" height="2.6"/><rect x="1051.4" y="728.8" width="2.6" height="2.6"/><rect x="1061.6" y="721.1" width="2.6" height="2.6"/><rect x="1058.0" y="730.0" width="2.6" height="2.6"/><rect x="1061.9" y="719.5" width="2.6" height="2.6"/><rect x="1060.8" y="730.3" width="2.6" height="2.6"/><rect x="1059.7" y="709.1" width="2.6" height="2.6"/><rect x="1051.8" y="737.0" width="2.6" height="2.6"/><rect x="1055.6" y="726.0" width="2.6" height="2.6"/><rect x="1049.2" y="725.9" width="2.6" height="2.6"/><rect x="1055.1" y="720.6" width="2.6" height="2.6"/><rect x="1054.1" y="733.2" width="2.6" height="2.6"/><rect x="1057.6" y="718.3" width="2.6" height="2.6"/><rect x="1061.0" y="719.2" width="2.6" height="2.6"/><rect x="1050.4" y="718.6" width="2.6" height="2.6"/><rect x="1057.5" y="718.7" width="2.6" height="2.6"/><rect x="1054.1" y="717.9" width="2.6" height="2.6"/><rect x="1055.3" y="732.8" width="2.6" height="2.6"/><rect x="1058.3" y="720.1" width="2.6" height="2.6"/><rect x="1051.8" y="714.4" width="2.6" height="2.6"/><rect x="1053.4" y="726.6" width="2.6" height="2.6"/><rect x="1047.4" y="729.5" width="2.6" height="2.6"/><rect x="1047.5" y="720.9" width="2.6" height="2.6"/><rect x="1053.2" y="735.6" width="2.6" height="2.6"/><rect x="1060.6" y="711.2" width="2.6" height="2.6"/><rect x="1053.4" y="721.7" width="2.6" height="2.6"/><rect x="1049.6" y="710.9" width="2.6" height="2.6"/><rect x="1065.5" y="720.9" width="2.6" height="2.6"/><rect x="1058.0" y="731.1" width="2.6" height="2.6"/><rect x="1050.0" y="726.9" width="2.6" height="2.6"/><rect x="1055.1" y="724.0" width="2.6" height="2.6"/><rect x="1060.2" y="727.2" width="2.6" height="2.6"/><rect x="1053.3" y="727.3" width="2.6" height="2.6"/><rect x="1046.7" y="722.2" width="2.6" height="2.6"/><rect x="1057.2" y="723.3" width="2.6" height="2.6"/><rect x="1053.0" y="711.0" width="2.6" height="2.6"/><rect x="1052.4" y="726.6" width="2.6" height="2.6"/><rect x="1047.4" y="729.2" width="2.6" height="2.6"/><rect x="1062.4" y="719.7" width="2.6" height="2.6"/><rect x="1064.4" y="717.3" width="2.6" height="2.6"/><rect x="1063.2" y="714.6" width="2.6" height="2.6"/><rect x="1054.1" y="724.8" width="2.6" height="2.6"/><rect x="1055.0" y="717.4" width="2.6" height="2.6"/><rect x="1058.2" y="737.8" width="2.6" height="2.6"/><rect x="1054.7" y="710.7" width="2.6" height="2.6"/><rect x="1062.6" y="733.1" width="2.6" height="2.6"/><rect x="1068.3" y="733.7" width="2.6" height="2.6"/><rect x="1061.8" y="733.2" width="2.6" height="2.6"/><rect x="1051.0" y="718.2" width="2.6" height="2.6"/><rect x="1057.8" y="722.6" width="2.6" height="2.6"/><rect x="1051.0" y="714.7" width="2.6" height="2.6"/><rect x="1059.7" y="725.6" width="2.6" height="2.6"/><rect x="1063.3" y="736.0" width="2.6" height="2.6"/><rect x="1052.1" y="729.2" width="2.6" height="2.6"/><rect x="1057.1" y="732.0" width="2.6" height="2.6"/><rect x="1052.6" y="718.1" width="2.6" height="2.6"/><rect x="1052.8" y="717.9" width="2.6" height="2.6"/><rect x="1064.6" y="730.5" width="2.6" height="2.6"/><rect x="1054.5" y="713.6" width="2.6" height="2.6"/><rect x="1058.0" y="722.0" width="2.6" height="2.6"/><rect x="1057.7" y="727.1" width="2.6" height="2.6"/><rect x="1049.4" y="726.9" width="2.6" height="2.6"/><rect x="1053.8" y="721.0" width="2.6" height="2.6"/><rect x="1046.1" y="714.9" width="2.6" height="2.6"/><rect x="1043.8" y="715.4" width="2.6" height="2.6"/><rect x="1047.4" y="713.6" width="2.6" height="2.6"/><rect x="1054.1" y="734.5" width="2.6" height="2.6"/><rect x="1055.6" y="726.9" width="2.6" height="2.6"/><rect x="1050.3" y="709.4" width="2.6" height="2.6"/><rect x="1061.2" y="729.6" width="2.6" height="2.6"/><rect x="1046.8" y="722.2" width="2.6" height="2.6"/><rect x="1051.0" y="714.3" width="2.6" height="2.6"/><rect x="1057.7" y="735.5" width="2.6" height="2.6"/><rect x="1058.6" y="724.5" width="2.6" height="2.6"/><rect x="1049.5" y="722.1" width="2.6" height="2.6"/><rect x="1044.9" y="713.2" width="2.6" height="2.6"/><rect x="1064.1" y="734.6" width="2.6" height="2.6"/><rect x="1056.5" y="720.8" width="2.6" height="2.6"/><rect x="1051.5" y="709.9" width="2.6" height="2.6"/><rect x="1057.7" y="736.4" width="2.6" height="2.6"/><rect x="1062.7" y="733.2" width="2.6" height="2.6"/><rect x="1060.6" y="731.3" width="2.6" height="2.6"/><rect x="1054.8" y="738.7" width="2.6" height="2.6"/><rect x="1051.6" y="724.8" width="2.6" height="2.6"/><rect x="1054.5" y="720.0" width="2.6" height="2.6"/><rect x="1056.8" y="729.8" width="2.6" height="2.6"/><rect x="1055.7" y="735.5" width="2.6" height="2.6"/><rect x="1053.7" y="723.5" width="2.6" height="2.6"/><rect x="1054.0" y="713.1" width="2.6" height="2.6"/><rect x="1048.5" y="721.6" width="2.6" height="2.6"/><rect x="1041.5" y="722.5" width="2.6" height="2.6"/><rect x="1051.5" y="727.0" width="2.6" height="2.6"/><rect x="1049.8" y="721.9" width="2.6" height="2.6"/><rect x="1051.6" y="721.7" width="2.6" height="2.6"/><rect x="1057.9" y="732.9" width="2.6" height="2.6"/><rect x="1052.9" y="719.4" width="2.6" height="2.6"/><rect x="1049.3" y="718.8" width="2.6" height="2.6"/><rect x="1045.3" y="719.0" width="2.6" height="2.6"/><rect x="1051.5" y="719.7" width="2.6" height="2.6"/><rect x="1051.1" y="713.8" width="2.6" height="2.6"/><rect x="1053.9" y="716.3" width="2.6" height="2.6"/><rect x="1055.6" y="734.2" width="2.6" height="2.6"/><rect x="1055.5" y="734.3" width="2.6" height="2.6"/><rect x="1056.3" y="732.9" width="2.6" height="2.6"/><rect x="1054.1" y="731.2" width="2.6" height="2.6"/><rect x="1050.4" y="721.4" width="2.6" height="2.6"/><rect x="1061.1" y="735.6" width="2.6" height="2.6"/><rect x="1054.2" y="723.9" width="2.6" height="2.6"/><rect x="1045.5" y="715.4" width="2.6" height="2.6"/><rect x="1058.0" y="728.9" width="2.6" height="2.6"/><rect x="1046.5" y="730.1" width="2.6" height="2.6"/><rect x="1053.0" y="719.9" width="2.6" height="2.6"/><rect x="1045.3" y="718.2" width="2.6" height="2.6"/><rect x="1055.6" y="735.4" width="2.6" height="2.6"/><rect x="1051.6" y="726.3" width="2.6" height="2.6"/><rect x="1062.8" y="748.2" width="2.6" height="2.6"/><rect x="1071.5" y="762.3" width="2.6" height="2.6"/><rect x="1067.9" y="759.4" width="2.6" height="2.6"/><rect x="1057.4" y="741.7" width="2.6" height="2.6"/><rect x="1060.1" y="744.9" width="2.6" height="2.6"/><rect x="1070.3" y="762.8" width="2.6" height="2.6"/><rect x="1066.0" y="740.7" width="2.6" height="2.6"/><rect x="1067.2" y="756.8" width="2.6" height="2.6"/><rect x="1059.9" y="749.9" width="2.6" height="2.6"/><rect x="1061.4" y="746.7" width="2.6" height="2.6"/><rect x="1062.9" y="742.1" width="2.6" height="2.6"/><rect x="1068.3" y="752.5" width="2.6" height="2.6"/><rect x="1067.7" y="773.7" width="2.6" height="2.6"/><rect x="1078.4" y="769.3" width="2.6" height="2.6"/><rect x="1062.3" y="742.5" width="2.6" height="2.6"/><rect x="1066.0" y="764.5" width="2.6" height="2.6"/><rect x="1069.9" y="763.0" width="2.6" height="2.6"/><rect x="1063.1" y="764.4" width="2.6" height="2.6"/><rect x="1067.2" y="765.1" width="2.6" height="2.6"/><rect x="1055.1" y="753.4" width="2.6" height="2.6"/><rect x="1065.7" y="762.5" width="2.6" height="2.6"/><rect x="1067.2" y="774.0" width="2.6" height="2.6"/><rect x="1068.0" y="766.4" width="2.6" height="2.6"/><rect x="1062.6" y="738.6" width="2.6" height="2.6"/><rect x="1061.1" y="744.0" width="2.6" height="2.6"/><rect x="1060.6" y="753.3" width="2.6" height="2.6"/><rect x="1063.8" y="738.3" width="2.6" height="2.6"/><rect x="1056.4" y="745.9" width="2.6" height="2.6"/><rect x="1075.3" y="769.1" width="2.6" height="2.6"/><rect x="1066.4" y="746.7" width="2.6" height="2.6"/><rect x="1066.6" y="754.2" width="2.6" height="2.6"/><rect x="1064.9" y="736.4" width="2.6" height="2.6"/><rect x="1067.9" y="770.6" width="2.6" height="2.6"/><rect x="1065.1" y="738.1" width="2.6" height="2.6"/><rect x="1069.9" y="770.9" width="2.6" height="2.6"/><rect x="1064.1" y="746.8" width="2.6" height="2.6"/><rect x="1061.1" y="741.9" width="2.6" height="2.6"/><rect x="1072.4" y="772.9" width="2.6" height="2.6"/><rect x="1061.6" y="768.5" width="2.6" height="2.6"/><rect x="1060.8" y="753.8" width="2.6" height="2.6"/><rect x="1066.0" y="767.4" width="2.6" height="2.6"/><rect x="1065.1" y="740.1" width="2.6" height="2.6"/><rect x="1079.2" y="772.6" width="2.6" height="2.6"/><rect x="1062.3" y="765.9" width="2.6" height="2.6"/><rect x="1064.5" y="767.4" width="2.6" height="2.6"/><rect x="1070.8" y="753.9" width="2.6" height="2.6"/><rect x="1063.0" y="739.1" width="2.6" height="2.6"/><rect x="1070.3" y="756.5" width="2.6" height="2.6"/><rect x="1063.9" y="775.4" width="2.6" height="2.6"/><rect x="1055.6" y="740.4" width="2.6" height="2.6"/><rect x="1066.1" y="765.5" width="2.6" height="2.6"/><rect x="1069.3" y="758.2" width="2.6" height="2.6"/><rect x="1073.6" y="774.9" width="2.6" height="2.6"/><rect x="1067.7" y="746.2" width="2.6" height="2.6"/><rect x="1064.5" y="739.0" width="2.6" height="2.6"/><rect x="1059.0" y="746.2" width="2.6" height="2.6"/><rect x="1059.0" y="750.7" width="2.6" height="2.6"/><rect x="1061.5" y="765.2" width="2.6" height="2.6"/><rect x="1062.8" y="746.8" width="2.6" height="2.6"/><rect x="1059.4" y="756.3" width="2.6" height="2.6"/><rect x="1071.9" y="773.9" width="2.6" height="2.6"/><rect x="1065.9" y="773.2" width="2.6" height="2.6"/><rect x="1066.1" y="742.0" width="2.6" height="2.6"/><rect x="1070.0" y="769.3" width="2.6" height="2.6"/><rect x="1065.8" y="759.1" width="2.6" height="2.6"/><rect x="1069.9" y="763.1" width="2.6" height="2.6"/><rect x="1074.1" y="759.3" width="2.6" height="2.6"/><rect x="1066.6" y="770.7" width="2.6" height="2.6"/><rect x="1063.0" y="741.6" width="2.6" height="2.6"/><rect x="1058.5" y="746.5" width="2.6" height="2.6"/><rect x="1062.1" y="739.6" width="2.6" height="2.6"/><rect x="1064.3" y="765.9" width="2.6" height="2.6"/><rect x="1061.9" y="755.8" width="2.6" height="2.6"/><rect x="1062.5" y="756.5" width="2.6" height="2.6"/><rect x="1063.4" y="751.9" width="2.6" height="2.6"/><rect x="1059.4" y="738.1" width="2.6" height="2.6"/><rect x="1070.0" y="776.7" width="2.6" height="2.6"/><rect x="1069.5" y="765.3" width="2.6" height="2.6"/><rect x="1072.0" y="775.7" width="2.6" height="2.6"/><rect x="1066.3" y="756.5" width="2.6" height="2.6"/><rect x="1062.7" y="755.0" width="2.6" height="2.6"/><rect x="1055.5" y="738.9" width="2.6" height="2.6"/><rect x="1073.4" y="772.9" width="2.6" height="2.6"/><rect x="1074.7" y="773.2" width="2.6" height="2.6"/><rect x="1066.9" y="763.2" width="2.6" height="2.6"/><rect x="1058.7" y="743.6" width="2.6" height="2.6"/><rect x="1059.8" y="738.7" width="2.6" height="2.6"/><rect x="1072.5" y="747.0" width="2.6" height="2.6"/><rect x="1068.5" y="743.3" width="2.6" height="2.6"/><rect x="1076.3" y="772.5" width="2.6" height="2.6"/><rect x="1060.5" y="744.4" width="2.6" height="2.6"/><rect x="1076.3" y="764.8" width="2.6" height="2.6"/><rect x="1060.4" y="751.1" width="2.6" height="2.6"/><rect x="1055.8" y="751.9" width="2.6" height="2.6"/><rect x="1068.6" y="750.9" width="2.6" height="2.6"/><rect x="1070.0" y="770.0" width="2.6" height="2.6"/><rect x="1057.3" y="748.2" width="2.6" height="2.6"/><rect x="1065.1" y="762.6" width="2.6" height="2.6"/><rect x="1071.2" y="769.2" width="2.6" height="2.6"/><rect x="1079.4" y="772.6" width="2.6" height="2.6"/><rect x="1068.2" y="756.3" width="2.6" height="2.6"/><rect x="1063.6" y="749.2" width="2.6" height="2.6"/><rect x="1060.0" y="761.8" width="2.6" height="2.6"/><rect x="1059.0" y="744.6" width="2.6" height="2.6"/><rect x="1063.0" y="755.4" width="2.6" height="2.6"/><rect x="1061.6" y="738.8" width="2.6" height="2.6"/><rect x="1062.2" y="755.4" width="2.6" height="2.6"/><rect x="1053.9" y="739.0" width="2.6" height="2.6"/><rect x="1063.6" y="771.9" width="2.6" height="2.6"/><rect x="1071.3" y="752.7" width="2.6" height="2.6"/><rect x="1066.5" y="747.9" width="2.6" height="2.6"/><rect x="1069.6" y="752.9" width="2.6" height="2.6"/><rect x="1070.4" y="749.3" width="2.6" height="2.6"/><rect x="1065.9" y="770.7" width="2.6" height="2.6"/><rect x="1067.2" y="773.7" width="2.6" height="2.6"/><rect x="1061.6" y="755.7" width="2.6" height="2.6"/><rect x="1067.9" y="759.3" width="2.6" height="2.6"/><rect x="1059.2" y="741.3" width="2.6" height="2.6"/><rect x="1076.0" y="747.4" width="2.6" height="2.6"/><rect x="1066.2" y="774.1" width="2.6" height="2.6"/><rect x="1057.1" y="774.4" width="2.6" height="2.6"/><rect x="1068.5" y="761.5" width="2.6" height="2.6"/><rect x="1061.8" y="771.0" width="2.6" height="2.6"/><rect x="1063.9" y="762.1" width="2.6" height="2.6"/><rect x="1074.1" y="746.7" width="2.6" height="2.6"/><rect x="1070.3" y="755.2" width="2.6" height="2.6"/><rect x="1068.2" y="762.7" width="2.6" height="2.6"/><rect x="1065.0" y="773.4" width="2.6" height="2.6"/><rect x="1058.5" y="739.0" width="2.6" height="2.6"/><rect x="1058.5" y="756.6" width="2.6" height="2.6"/><rect x="1064.1" y="740.1" width="2.6" height="2.6"/><rect x="1070.1" y="759.5" width="2.6" height="2.6"/><rect x="1070.7" y="752.5" width="2.6" height="2.6"/><rect x="1065.7" y="752.8" width="2.6" height="2.6"/><rect x="1057.8" y="742.8" width="2.6" height="2.6"/><rect x="1057.0" y="761.1" width="2.6" height="2.6"/><rect x="1059.6" y="742.3" width="2.6" height="2.6"/><rect x="1064.5" y="740.4" width="2.6" height="2.6"/><rect x="1065.8" y="758.4" width="2.6" height="2.6"/><rect x="1060.6" y="760.6" width="2.6" height="2.6"/><rect x="1065.0" y="745.8" width="2.6" height="2.6"/><rect x="1066.6" y="757.4" width="2.6" height="2.6"/><rect x="1062.1" y="761.6" width="2.6" height="2.6"/><rect x="1059.3" y="740.8" width="2.6" height="2.6"/><rect x="1061.1" y="755.6" width="2.6" height="2.6"/><rect x="1071.9" y="764.6" width="2.6" height="2.6"/><rect x="1057.1" y="769.8" width="2.6" height="2.6"/><rect x="1058.1" y="768.1" width="2.6" height="2.6"/><rect x="1059.6" y="741.9" width="2.6" height="2.6"/><rect x="1066.6" y="743.2" width="2.6" height="2.6"/><rect x="1077.2" y="773.7" width="2.6" height="2.6"/><rect x="1065.3" y="742.0" width="2.6" height="2.6"/><rect x="1064.8" y="768.9" width="2.6" height="2.6"/><rect x="1063.1" y="752.4" width="2.6" height="2.6"/><rect x="1063.7" y="737.3" width="2.6" height="2.6"/><rect x="1065.5" y="748.8" width="2.6" height="2.6"/><rect x="1076.2" y="763.4" width="2.6" height="2.6"/><rect x="1062.2" y="763.0" width="2.6" height="2.6"/><rect x="1078.6" y="769.7" width="2.6" height="2.6"/><rect x="1072.9" y="770.9" width="2.6" height="2.6"/><rect x="1062.6" y="743.9" width="2.6" height="2.6"/><rect x="1072.2" y="766.6" width="2.6" height="2.6"/><rect x="1066.1" y="764.6" width="2.6" height="2.6"/><rect x="1066.5" y="751.6" width="2.6" height="2.6"/><rect x="1060.6" y="768.2" width="2.6" height="2.6"/><rect x="1063.7" y="738.5" width="2.6" height="2.6"/><rect x="1061.7" y="762.4" width="2.6" height="2.6"/><rect x="1064.8" y="770.0" width="2.6" height="2.6"/><rect x="1055.7" y="743.2" width="2.6" height="2.6"/><rect x="1066.4" y="746.7" width="2.6" height="2.6"/><rect x="1071.1" y="743.0" width="2.6" height="2.6"/><rect x="1063.3" y="761.1" width="2.6" height="2.6"/><rect x="1059.7" y="742.3" width="2.6" height="2.6"/><rect x="1068.0" y="769.2" width="2.6" height="2.6"/><rect x="1066.3" y="743.8" width="2.6" height="2.6"/><rect x="1068.5" y="764.3" width="2.6" height="2.6"/><rect x="1058.5" y="753.8" width="2.6" height="2.6"/><rect x="1058.3" y="760.4" width="2.6" height="2.6"/><rect x="1063.2" y="765.6" width="2.6" height="2.6"/><rect x="1071.7" y="735.4" width="2.6" height="2.6"/><rect x="1060.8" y="751.6" width="2.6" height="2.6"/><rect x="1064.4" y="773.0" width="2.6" height="2.6"/><rect x="1065.4" y="769.7" width="2.6" height="2.6"/><rect x="1067.8" y="769.9" width="2.6" height="2.6"/><rect x="1071.3" y="763.3" width="2.6" height="2.6"/><rect x="1059.0" y="744.4" width="2.6" height="2.6"/><rect x="1076.1" y="769.1" width="2.6" height="2.6"/><rect x="1060.6" y="762.9" width="2.6" height="2.6"/><rect x="1063.2" y="740.0" width="2.6" height="2.6"/><rect x="1066.3" y="773.5" width="2.6" height="2.6"/><rect x="1063.6" y="761.3" width="2.6" height="2.6"/><rect x="1063.4" y="751.8" width="2.6" height="2.6"/><rect x="1069.3" y="754.9" width="2.6" height="2.6"/><rect x="1066.3" y="750.8" width="2.6" height="2.6"/><rect x="1064.7" y="736.7" width="2.6" height="2.6"/><rect x="1063.1" y="737.6" width="2.6" height="2.6"/><rect x="1063.7" y="755.9" width="2.6" height="2.6"/><rect x="1062.4" y="743.1" width="2.6" height="2.6"/><rect x="1067.6" y="763.8" width="2.6" height="2.6"/><rect x="1061.8" y="758.0" width="2.6" height="2.6"/><rect x="1068.5" y="746.5" width="2.6" height="2.6"/><rect x="1072.1" y="774.7" width="2.6" height="2.6"/><rect x="1064.2" y="778.0" width="2.6" height="2.6"/><rect x="1071.1" y="789.0" width="2.6" height="2.6"/><rect x="1071.7" y="790.5" width="2.6" height="2.6"/><rect x="1078.6" y="785.4" width="2.6" height="2.6"/><rect x="1072.8" y="782.2" width="2.6" height="2.6"/><rect x="1064.5" y="792.0" width="2.6" height="2.6"/><rect x="1074.6" y="791.0" width="2.6" height="2.6"/><rect x="1076.0" y="788.0" width="2.6" height="2.6"/><rect x="1079.0" y="787.0" width="2.6" height="2.6"/><rect x="1071.5" y="782.3" width="2.6" height="2.6"/><rect x="1073.1" y="785.2" width="2.6" height="2.6"/><rect x="1070.2" y="782.3" width="2.6" height="2.6"/><rect x="1065.7" y="783.0" width="2.6" height="2.6"/><rect x="1071.6" y="782.5" width="2.6" height="2.6"/><rect x="1070.4" y="780.8" width="2.6" height="2.6"/><rect x="1066.2" y="779.9" width="2.6" height="2.6"/><rect x="1066.6" y="777.8" width="2.6" height="2.6"/><rect x="1075.2" y="783.1" width="2.6" height="2.6"/><rect x="1072.7" y="785.5" width="2.6" height="2.6"/><rect x="1067.6" y="778.5" width="2.6" height="2.6"/><rect x="1073.7" y="781.1" width="2.6" height="2.6"/><rect x="1064.7" y="786.8" width="2.6" height="2.6"/><rect x="1078.6" y="790.2" width="2.6" height="2.6"/><rect x="1062.9" y="787.7" width="2.6" height="2.6"/><rect x="1067.7" y="778.8" width="2.6" height="2.6"/><rect x="1067.5" y="793.2" width="2.6" height="2.6"/><rect x="1070.4" y="782.6" width="2.6" height="2.6"/><rect x="1077.6" y="789.3" width="2.6" height="2.6"/><rect x="1080.3" y="776.1" width="2.6" height="2.6"/><rect x="1069.9" y="781.4" width="2.6" height="2.6"/><rect x="1068.1" y="781.5" width="2.6" height="2.6"/><rect x="1070.5" y="781.2" width="2.6" height="2.6"/><rect x="1071.3" y="788.0" width="2.6" height="2.6"/><rect x="1066.0" y="781.0" width="2.6" height="2.6"/><rect x="1067.4" y="787.1" width="2.6" height="2.6"/><rect x="1075.8" y="779.0" width="2.6" height="2.6"/><rect x="1066.1" y="789.4" width="2.6" height="2.6"/><rect x="1071.8" y="777.9" width="2.6" height="2.6"/><rect x="1069.5" y="790.0" width="2.6" height="2.6"/><rect x="1073.5" y="778.5" width="2.6" height="2.6"/><rect x="1080.0" y="778.0" width="2.6" height="2.6"/><rect x="1074.2" y="786.4" width="2.6" height="2.6"/><rect x="1071.9" y="791.3" width="2.6" height="2.6"/><rect x="1068.3" y="789.3" width="2.6" height="2.6"/><rect x="1077.9" y="785.8" width="2.6" height="2.6"/><rect x="1067.1" y="782.9" width="2.6" height="2.6"/><rect x="1071.5" y="777.6" width="2.6" height="2.6"/><rect x="1071.2" y="786.7" width="2.6" height="2.6"/><rect x="1077.5" y="780.9" width="2.6" height="2.6"/><rect x="1070.6" y="781.0" width="2.6" height="2.6"/><rect x="1060.8" y="786.2" width="2.6" height="2.6"/><rect x="1070.9" y="785.8" width="2.6" height="2.6"/><rect x="1067.0" y="793.3" width="2.6" height="2.6"/><rect x="1070.0" y="788.5" width="2.6" height="2.6"/><rect x="1068.8" y="782.5" width="2.6" height="2.6"/><rect x="1069.0" y="779.5" width="2.6" height="2.6"/><rect x="1065.1" y="790.2" width="2.6" height="2.6"/><rect x="1066.7" y="784.4" width="2.6" height="2.6"/><rect x="1076.8" y="784.2" width="2.6" height="2.6"/><rect x="1075.2" y="786.4" width="2.6" height="2.6"/><rect x="1075.7" y="785.5" width="2.6" height="2.6"/><rect x="1064.1" y="782.3" width="2.6" height="2.6"/><rect x="1071.6" y="788.0" width="2.6" height="2.6"/><rect x="1079.1" y="780.1" width="2.6" height="2.6"/><rect x="1067.3" y="789.8" width="2.6" height="2.6"/><rect x="1071.7" y="781.1" width="2.6" height="2.6"/><rect x="1069.3" y="785.5" width="2.6" height="2.6"/><rect x="1071.0" y="777.0" width="2.6" height="2.6"/><rect x="1076.1" y="783.4" width="2.6" height="2.6"/><rect x="1077.9" y="781.2" width="2.6" height="2.6"/><rect x="1072.0" y="792.4" width="2.6" height="2.6"/><rect x="1062.5" y="779.9" width="2.6" height="2.6"/><rect x="1069.1" y="777.6" width="2.6" height="2.6"/><rect x="1070.4" y="784.9" width="2.6" height="2.6"/><rect x="1067.1" y="786.4" width="2.6" height="2.6"/><rect x="1061.0" y="784.6" width="2.6" height="2.6"/><rect x="1067.2" y="779.9" width="2.6" height="2.6"/><rect x="1065.9" y="792.5" width="2.6" height="2.6"/><rect x="996.3" y="706.9" width="2.6" height="2.6"/><rect x="997.2" y="709.5" width="2.6" height="2.6"/><rect x="992.5" y="728.3" width="2.6" height="2.6"/><rect x="996.6" y="712.1" width="2.6" height="2.6"/><rect x="993.5" y="723.6" width="2.6" height="2.6"/><rect x="991.3" y="725.7" width="2.6" height="2.6"/><rect x="998.8" y="706.3" width="2.6" height="2.6"/><rect x="994.3" y="719.6" width="2.6" height="2.6"/><rect x="995.8" y="713.4" width="2.6" height="2.6"/><rect x="994.9" y="717.6" width="2.6" height="2.6"/><rect x="993.6" y="712.8" width="2.6" height="2.6"/><rect x="995.4" y="719.5" width="2.6" height="2.6"/><rect x="997.7" y="709.2" width="2.6" height="2.6"/><rect x="994.9" y="714.0" width="2.6" height="2.6"/><rect x="997.1" y="709.1" width="2.6" height="2.6"/><rect x="992.1" y="718.7" width="2.6" height="2.6"/><rect x="996.2" y="710.7" width="2.6" height="2.6"/><rect x="994.6" y="717.6" width="2.6" height="2.6"/><rect x="996.8" y="707.0" width="2.6" height="2.6"/><rect x="999.0" y="710.9" width="2.6" height="2.6"/><rect x="992.5" y="721.9" width="2.6" height="2.6"/><rect x="997.5" y="712.1" width="2.6" height="2.6"/><rect x="994.8" y="715.4" width="2.6" height="2.6"/><rect x="994.0" y="720.5" width="2.6" height="2.6"/><rect x="995.7" y="718.8" width="2.6" height="2.6"/><rect x="991.3" y="725.1" width="2.6" height="2.6"/><rect x="997.0" y="708.5" width="2.6" height="2.6"/><rect x="993.4" y="723.0" width="2.6" height="2.6"/><rect x="991.0" y="724.4" width="2.6" height="2.6"/><rect x="988.7" y="727.2" width="2.6" height="2.6"/><rect x="996.5" y="710.8" width="2.6" height="2.6"/><rect x="990.6" y="746.0" width="2.6" height="2.6"/><rect x="990.1" y="728.3" width="2.6" height="2.6"/><rect x="991.1" y="741.6" width="2.6" height="2.6"/><rect x="989.8" y="729.9" width="2.6" height="2.6"/><rect x="989.1" y="729.8" width="2.6" height="2.6"/><rect x="989.0" y="734.3" width="2.6" height="2.6"/><rect x="991.6" y="744.3" width="2.6" height="2.6"/><rect x="989.8" y="746.1" width="2.6" height="2.6"/><rect x="990.5" y="742.7" width="2.6" height="2.6"/><rect x="989.3" y="740.8" width="2.6" height="2.6"/><rect x="990.4" y="732.4" width="2.6" height="2.6"/><rect x="990.5" y="736.0" width="2.6" height="2.6"/><rect x="990.6" y="746.3" width="2.6" height="2.6"/><rect x="990.3" y="733.9" width="2.6" height="2.6"/><rect x="991.1" y="737.1" width="2.6" height="2.6"/><rect x="991.4" y="730.6" width="2.6" height="2.6"/><rect x="990.4" y="740.7" width="2.6" height="2.6"/><rect x="990.8" y="730.8" width="2.6" height="2.6"/><rect x="992.1" y="730.2" width="2.6" height="2.6"/><rect x="993.4" y="734.6" width="2.6" height="2.6"/><rect x="990.6" y="734.5" width="2.6" height="2.6"/><rect x="988.3" y="732.1" width="2.6" height="2.6"/><rect x="1006.6" y="759.4" width="2.6" height="2.6"/><rect x="996.2" y="751.8" width="2.6" height="2.6"/><rect x="991.6" y="748.4" width="2.6" height="2.6"/><rect x="992.4" y="746.4" width="2.6" height="2.6"/><rect x="1002.6" y="756.6" width="2.6" height="2.6"/><rect x="997.2" y="754.5" width="2.6" height="2.6"/><rect x="1004.5" y="758.5" width="2.6" height="2.6"/><rect x="1003.4" y="755.1" width="2.6" height="2.6"/><rect x="1012.0" y="764.0" width="2.6" height="2.6"/><rect x="1009.5" y="762.2" width="2.6" height="2.6"/><rect x="998.2" y="751.4" width="2.6" height="2.6"/><rect x="998.9" y="755.0" width="2.6" height="2.6"/><rect x="999.0" y="753.4" width="2.6" height="2.6"/><rect x="997.7" y="756.0" width="2.6" height="2.6"/><rect x="988.6" y="749.2" width="2.6" height="2.6"/><rect x="1003.1" y="758.2" width="2.6" height="2.6"/><rect x="1004.0" y="757.3" width="2.6" height="2.6"/><rect x="998.7" y="753.4" width="2.6" height="2.6"/><rect x="992.7" y="749.2" width="2.6" height="2.6"/><rect x="1008.3" y="762.3" width="2.6" height="2.6"/><rect x="993.4" y="745.5" width="2.6" height="2.6"/><rect x="1006.0" y="758.5" width="2.6" height="2.6"/><rect x="1001.4" y="757.7" width="2.6" height="2.6"/><rect x="997.4" y="752.3" width="2.6" height="2.6"/><rect x="1006.6" y="760.1" width="2.6" height="2.6"/><rect x="1009.9" y="760.8" width="2.6" height="2.6"/><rect x="1012.0" y="764.5" width="2.6" height="2.6"/><rect x="996.6" y="749.7" width="2.6" height="2.6"/><rect x="999.7" y="752.3" width="2.6" height="2.6"/><rect x="1006.6" y="758.6" width="2.6" height="2.6"/><rect x="1003.2" y="758.3" width="2.6" height="2.6"/><rect x="1005.6" y="758.3" width="2.6" height="2.6"/><rect x="1001.3" y="757.5" width="2.6" height="2.6"/><rect x="1024.5" y="767.4" width="2.6" height="2.6"/><rect x="1062.1" y="778.1" width="2.6" height="2.6"/><rect x="1038.1" y="771.7" width="2.6" height="2.6"/><rect x="1038.6" y="770.7" width="2.6" height="2.6"/><rect x="1023.7" y="769.8" width="2.6" height="2.6"/><rect x="1040.5" y="774.9" width="2.6" height="2.6"/><rect x="1041.4" y="770.7" width="2.6" height="2.6"/><rect x="1025.2" y="768.0" width="2.6" height="2.6"/><rect x="1021.3" y="767.9" width="2.6" height="2.6"/><rect x="1047.6" y="773.4" width="2.6" height="2.6"/><rect x="1057.0" y="779.3" width="2.6" height="2.6"/><rect x="1014.8" y="763.9" width="2.6" height="2.6"/><rect x="1032.7" y="771.6" width="2.6" height="2.6"/><rect x="1019.3" y="764.7" width="2.6" height="2.6"/><rect x="1020.5" y="767.1" width="2.6" height="2.6"/><rect x="1031.5" y="770.7" width="2.6" height="2.6"/><rect x="1056.5" y="775.8" width="2.6" height="2.6"/><rect x="1016.9" y="765.9" width="2.6" height="2.6"/><rect x="1033.3" y="772.6" width="2.6" height="2.6"/><rect x="1036.7" y="771.6" width="2.6" height="2.6"/><rect x="1038.1" y="772.6" width="2.6" height="2.6"/><rect x="1020.8" y="765.1" width="2.6" height="2.6"/><rect x="1049.7" y="774.2" width="2.6" height="2.6"/><rect x="1024.8" y="769.4" width="2.6" height="2.6"/><rect x="1032.6" y="769.8" width="2.6" height="2.6"/><rect x="1012.7" y="765.9" width="2.6" height="2.6"/><rect x="1023.1" y="767.4" width="2.6" height="2.6"/><rect x="1021.9" y="767.3" width="2.6" height="2.6"/><rect x="1051.5" y="775.6" width="2.6" height="2.6"/><rect x="1025.0" y="769.4" width="2.6" height="2.6"/><rect x="1057.5" y="778.9" width="2.6" height="2.6"/><rect x="1059.0" y="778.8" width="2.6" height="2.6"/><rect x="1023.6" y="766.0" width="2.6" height="2.6"/><rect x="1045.7" y="775.2" width="2.6" height="2.6"/><rect x="1032.1" y="771.6" width="2.6" height="2.6"/><rect x="1032.1" y="770.7" width="2.6" height="2.6"/><rect x="1051.3" y="775.3" width="2.6" height="2.6"/><rect x="1047.3" y="775.8" width="2.6" height="2.6"/><rect x="1056.8" y="776.5" width="2.6" height="2.6"/><rect x="1043.6" y="774.5" width="2.6" height="2.6"/><rect x="1062.6" y="780.0" width="2.6" height="2.6"/><rect x="1050.3" y="778.5" width="2.6" height="2.6"/><rect x="1032.6" y="769.9" width="2.6" height="2.6"/><rect x="1016.1" y="764.9" width="2.6" height="2.6"/><rect x="1053.9" y="775.3" width="2.6" height="2.6"/><rect x="1039.0" y="773.3" width="2.6" height="2.6"/><rect x="1061.6" y="778.6" width="2.6" height="2.6"/><rect x="1044.7" y="773.6" width="2.6" height="2.6"/><rect x="1038.0" y="769.7" width="2.6" height="2.6"/><rect x="1034.7" y="771.6" width="2.6" height="2.6"/><rect x="1037.8" y="773.0" width="2.6" height="2.6"/><rect x="1039.2" y="771.5" width="2.6" height="2.6"/><rect x="1039.9" y="773.4" width="2.6" height="2.6"/><rect x="1053.2" y="774.6" width="2.6" height="2.6"/><rect x="1033.6" y="772.6" width="2.6" height="2.6"/><rect x="1042.3" y="773.7" width="2.6" height="2.6"/><rect x="1054.3" y="776.6" width="2.6" height="2.6"/><rect x="1024.3" y="767.5" width="2.6" height="2.6"/><rect x="1016.2" y="766.1" width="2.6" height="2.6"/><rect x="1017.0" y="765.6" width="2.6" height="2.6"/><rect x="1053.5" y="775.9" width="2.6" height="2.6"/><rect x="1049.5" y="775.0" width="2.6" height="2.6"/><rect x="1051.2" y="775.3" width="2.6" height="2.6"/><rect x="1050.0" y="775.4" width="2.6" height="2.6"/><rect x="1036.0" y="767.6" width="2.6" height="2.6"/><rect x="1057.5" y="775.2" width="2.6" height="2.6"/><rect x="1059.8" y="778.8" width="2.6" height="2.6"/><rect x="1040.3" y="773.5" width="2.6" height="2.6"/><rect x="885.2" y="722.5" width="2.6" height="2.6"/><rect x="888.4" y="734.8" width="2.6" height="2.6"/><rect x="888.8" y="737.3" width="2.6" height="2.6"/><rect x="886.2" y="749.7" width="2.6" height="2.6"/><rect x="890.4" y="746.9" width="2.6" height="2.6"/><rect x="888.3" y="736.9" width="2.6" height="2.6"/><rect x="890.8" y="764.5" width="2.6" height="2.6"/><rect x="892.0" y="734.1" width="2.6" height="2.6"/><rect x="885.6" y="732.2" width="2.6" height="2.6"/><rect x="888.2" y="740.4" width="2.6" height="2.6"/><rect x="892.2" y="744.4" width="2.6" height="2.6"/><rect x="888.8" y="739.9" width="2.6" height="2.6"/><rect x="890.3" y="761.4" width="2.6" height="2.6"/><rect x="885.9" y="749.7" width="2.6" height="2.6"/><rect x="888.0" y="724.4" width="2.6" height="2.6"/><rect x="887.0" y="742.3" width="2.6" height="2.6"/><rect x="890.9" y="749.5" width="2.6" height="2.6"/><rect x="890.2" y="761.1" width="2.6" height="2.6"/><rect x="889.4" y="736.1" width="2.6" height="2.6"/><rect x="893.8" y="750.5" width="2.6" height="2.6"/><rect x="887.5" y="744.5" width="2.6" height="2.6"/><rect x="893.0" y="764.8" width="2.6" height="2.6"/><rect x="889.6" y="724.5" width="2.6" height="2.6"/><rect x="885.9" y="724.5" width="2.6" height="2.6"/><rect x="889.6" y="764.5" width="2.6" height="2.6"/><rect x="886.6" y="731.0" width="2.6" height="2.6"/><rect x="895.7" y="766.7" width="2.6" height="2.6"/><rect x="891.1" y="746.2" width="2.6" height="2.6"/><rect x="891.6" y="754.9" width="2.6" height="2.6"/><rect x="889.5" y="732.1" width="2.6" height="2.6"/><rect x="889.2" y="763.3" width="2.6" height="2.6"/><rect x="884.5" y="732.6" width="2.6" height="2.6"/><rect x="884.5" y="727.3" width="2.6" height="2.6"/><rect x="890.6" y="768.7" width="2.6" height="2.6"/><rect x="890.1" y="742.2" width="2.6" height="2.6"/><rect x="893.6" y="766.1" width="2.6" height="2.6"/><rect x="890.6" y="755.6" width="2.6" height="2.6"/><rect x="890.5" y="756.1" width="2.6" height="2.6"/><rect x="886.1" y="724.1" width="2.6" height="2.6"/><rect x="889.6" y="733.2" width="2.6" height="2.6"/><rect x="891.4" y="750.3" width="2.6" height="2.6"/><rect x="885.3" y="729.8" width="2.6" height="2.6"/><rect x="894.1" y="766.4" width="2.6" height="2.6"/><rect x="884.2" y="729.9" width="2.6" height="2.6"/><rect x="889.7" y="761.3" width="2.6" height="2.6"/><rect x="887.2" y="723.6" width="2.6" height="2.6"/><rect x="889.9" y="740.5" width="2.6" height="2.6"/><rect x="891.2" y="748.5" width="2.6" height="2.6"/><rect x="890.4" y="726.2" width="2.6" height="2.6"/><rect x="888.7" y="743.1" width="2.6" height="2.6"/><rect x="888.1" y="755.6" width="2.6" height="2.6"/><rect x="885.0" y="728.3" width="2.6" height="2.6"/><rect x="887.7" y="767.7" width="2.6" height="2.6"/><rect x="890.1" y="747.7" width="2.6" height="2.6"/><rect x="890.4" y="736.0" width="2.6" height="2.6"/><rect x="887.1" y="746.6" width="2.6" height="2.6"/><rect x="890.6" y="767.7" width="2.6" height="2.6"/><rect x="890.8" y="764.4" width="2.6" height="2.6"/><rect x="891.2" y="751.1" width="2.6" height="2.6"/><rect x="887.8" y="728.8" width="2.6" height="2.6"/><rect x="885.4" y="735.6" width="2.6" height="2.6"/><rect x="890.5" y="732.8" width="2.6" height="2.6"/><rect x="889.8" y="767.5" width="2.6" height="2.6"/><rect x="892.2" y="769.4" width="2.6" height="2.6"/><rect x="886.1" y="739.2" width="2.6" height="2.6"/><rect x="888.0" y="724.3" width="2.6" height="2.6"/><rect x="890.2" y="738.1" width="2.6" height="2.6"/><rect x="890.8" y="758.4" width="2.6" height="2.6"/><rect x="887.4" y="730.8" width="2.6" height="2.6"/><rect x="888.8" y="725.2" width="2.6" height="2.6"/><rect x="888.1" y="749.6" width="2.6" height="2.6"/><rect x="890.2" y="760.7" width="2.6" height="2.6"/><rect x="890.9" y="751.1" width="2.6" height="2.6"/><rect x="976.3" y="808.6" width="2.6" height="2.6"/><rect x="965.5" y="812.4" width="2.6" height="2.6"/><rect x="977.7" y="807.5" width="2.6" height="2.6"/><rect x="971.8" y="809.2" width="2.6" height="2.6"/><rect x="967.7" y="813.0" width="2.6" height="2.6"/><rect x="967.7" y="812.8" width="2.6" height="2.6"/><rect x="984.5" y="805.0" width="2.6" height="2.6"/><rect x="985.3" y="804.4" width="2.6" height="2.6"/><rect x="965.5" y="812.8" width="2.6" height="2.6"/><rect x="985.9" y="805.7" width="2.6" height="2.6"/><rect x="977.1" y="809.1" width="2.6" height="2.6"/><rect x="965.9" y="812.0" width="2.6" height="2.6"/><rect x="976.9" y="808.5" width="2.6" height="2.6"/><rect x="975.9" y="808.2" width="2.6" height="2.6"/><rect x="973.6" y="810.1" width="2.6" height="2.6"/><rect x="968.5" y="812.1" width="2.6" height="2.6"/><rect x="985.6" y="805.5" width="2.6" height="2.6"/><rect x="976.0" y="808.8" width="2.6" height="2.6"/><rect x="987.2" y="804.2" width="2.6" height="2.6"/><rect x="975.7" y="809.1" width="2.6" height="2.6"/><rect x="980.3" y="805.6" width="2.6" height="2.6"/><rect x="969.0" y="811.4" width="2.6" height="2.6"/><rect x="969.7" y="810.5" width="2.6" height="2.6"/><rect x="963.5" y="812.5" width="2.6" height="2.6"/><rect x="970.8" y="811.5" width="2.6" height="2.6"/><rect x="986.3" y="805.9" width="2.6" height="2.6"/><rect x="969.3" y="812.0" width="2.6" height="2.6"/><rect x="1002.7" y="797.2" width="2.6" height="2.6"/><rect x="989.5" y="801.6" width="2.6" height="2.6"/><rect x="993.4" y="798.8" width="2.6" height="2.6"/><rect x="988.9" y="801.7" width="2.6" height="2.6"/><rect x="1002.8" y="796.1" width="2.6" height="2.6"/><rect x="995.9" y="798.3" width="2.6" height="2.6"/><rect x="1006.6" y="792.5" width="2.6" height="2.6"/><rect x="989.2" y="804.1" width="2.6" height="2.6"/><rect x="1010.2" y="792.2" width="2.6" height="2.6"/><rect x="991.0" y="803.2" width="2.6" height="2.6"/><rect x="994.3" y="800.8" width="2.6" height="2.6"/><rect x="991.6" y="800.6" width="2.6" height="2.6"/><rect x="996.9" y="800.2" width="2.6" height="2.6"/><rect x="994.0" y="801.7" width="2.6" height="2.6"/><rect x="997.9" y="803.0" width="2.6" height="2.6"/><rect x="1006.9" y="794.2" width="2.6" height="2.6"/><rect x="999.1" y="796.7" width="2.6" height="2.6"/><rect x="1009.9" y="793.4" width="2.6" height="2.6"/><rect x="1006.0" y="794.7" width="2.6" height="2.6"/><rect x="1003.0" y="796.1" width="2.6" height="2.6"/><rect x="1008.4" y="794.1" width="2.6" height="2.6"/><rect x="1005.2" y="795.1" width="2.6" height="2.6"/><rect x="997.4" y="800.9" width="2.6" height="2.6"/><rect x="1005.3" y="798.0" width="2.6" height="2.6"/><rect x="1006.6" y="796.3" width="2.6" height="2.6"/><rect x="1139.0" y="590.8" width="2.6" height="2.6"/><rect x="1141.1" y="591.1" width="2.6" height="2.6"/><rect x="1146.2" y="589.8" width="2.6" height="2.6"/><rect x="1154.5" y="583.8" width="2.6" height="2.6"/><rect x="1145.4" y="587.2" width="2.6" height="2.6"/><rect x="1142.9" y="590.8" width="2.6" height="2.6"/><rect x="1154.5" y="578.8" width="2.6" height="2.6"/><rect x="1138.3" y="590.6" width="2.6" height="2.6"/><rect x="1144.7" y="586.4" width="2.6" height="2.6"/><rect x="1166.8" y="572.8" width="2.6" height="2.6"/><rect x="1169.5" y="572.2" width="2.6" height="2.6"/><rect x="1158.8" y="578.7" width="2.6" height="2.6"/><rect x="1140.3" y="590.2" width="2.6" height="2.6"/><rect x="1149.9" y="585.2" width="2.6" height="2.6"/><rect x="1146.4" y="588.6" width="2.6" height="2.6"/><rect x="1146.0" y="588.8" width="2.6" height="2.6"/><rect x="1145.5" y="590.7" width="2.6" height="2.6"/><rect x="1160.2" y="576.4" width="2.6" height="2.6"/><rect x="1143.4" y="588.6" width="2.6" height="2.6"/><rect x="1164.4" y="576.8" width="2.6" height="2.6"/><rect x="1146.1" y="588.9" width="2.6" height="2.6"/><rect x="1176.9" y="566.5" width="2.6" height="2.6"/><rect x="1172.6" y="569.2" width="2.6" height="2.6"/><rect x="1145.4" y="589.5" width="2.6" height="2.6"/><rect x="1158.5" y="578.2" width="2.6" height="2.6"/><rect x="1163.6" y="575.3" width="2.6" height="2.6"/><rect x="1143.0" y="588.7" width="2.6" height="2.6"/><rect x="1152.5" y="583.3" width="2.6" height="2.6"/><rect x="1166.0" y="573.3" width="2.6" height="2.6"/><rect x="1149.9" y="586.6" width="2.6" height="2.6"/><rect x="1144.7" y="588.0" width="2.6" height="2.6"/><rect x="1172.3" y="569.6" width="2.6" height="2.6"/><rect x="1144.5" y="589.0" width="2.6" height="2.6"/><rect x="1169.9" y="571.5" width="2.6" height="2.6"/><rect x="1161.2" y="574.1" width="2.6" height="2.6"/><rect x="1167.5" y="571.5" width="2.6" height="2.6"/><rect x="1142.0" y="591.5" width="2.6" height="2.6"/><rect x="1162.8" y="579.1" width="2.6" height="2.6"/><rect x="1156.9" y="580.1" width="2.6" height="2.6"/><rect x="1137.4" y="592.8" width="2.6" height="2.6"/><rect x="1169.6" y="569.2" width="2.6" height="2.6"/><rect x="1155.7" y="580.2" width="2.6" height="2.6"/><rect x="1139.5" y="592.2" width="2.6" height="2.6"/><rect x="1158.8" y="578.5" width="2.6" height="2.6"/><rect x="1163.4" y="576.5" width="2.6" height="2.6"/><rect x="1174.1" y="570.5" width="2.6" height="2.6"/><rect x="1157.0" y="580.9" width="2.6" height="2.6"/><rect x="1161.0" y="575.0" width="2.6" height="2.6"/><rect x="1123.8" y="618.6" width="2.6" height="2.6"/><rect x="1136.3" y="596.9" width="2.6" height="2.6"/><rect x="1117.5" y="629.2" width="2.6" height="2.6"/><rect x="1130.2" y="607.4" width="2.6" height="2.6"/><rect x="1130.3" y="608.1" width="2.6" height="2.6"/><rect x="1127.0" y="613.4" width="2.6" height="2.6"/><rect x="1128.3" y="613.0" width="2.6" height="2.6"/><rect x="1129.2" y="606.9" width="2.6" height="2.6"/><rect x="1119.5" y="624.4" width="2.6" height="2.6"/><rect x="1123.6" y="619.3" width="2.6" height="2.6"/><rect x="1121.6" y="621.5" width="2.6" height="2.6"/><rect x="1118.4" y="626.5" width="2.6" height="2.6"/><rect x="1138.0" y="595.8" width="2.6" height="2.6"/><rect x="1128.9" y="604.8" width="2.6" height="2.6"/><rect x="1116.6" y="625.5" width="2.6" height="2.6"/><rect x="1135.2" y="599.6" width="2.6" height="2.6"/><rect x="1136.9" y="595.8" width="2.6" height="2.6"/><rect x="1128.9" y="608.1" width="2.6" height="2.6"/><rect x="1132.5" y="604.7" width="2.6" height="2.6"/><rect x="1121.3" y="621.8" width="2.6" height="2.6"/><rect x="1127.2" y="608.5" width="2.6" height="2.6"/><rect x="1117.3" y="630.1" width="2.6" height="2.6"/><rect x="1124.1" y="619.3" width="2.6" height="2.6"/><rect x="1127.8" y="606.9" width="2.6" height="2.6"/><rect x="1122.8" y="619.2" width="2.6" height="2.6"/><rect x="1130.8" y="603.5" width="2.6" height="2.6"/><rect x="1118.7" y="623.4" width="2.6" height="2.6"/><rect x="1120.6" y="623.0" width="2.6" height="2.6"/><rect x="1125.9" y="612.4" width="2.6" height="2.6"/><rect x="1117.8" y="625.5" width="2.6" height="2.6"/><rect x="1132.4" y="599.3" width="2.6" height="2.6"/><rect x="1129.9" y="604.7" width="2.6" height="2.6"/><rect x="1128.9" y="607.6" width="2.6" height="2.6"/><rect x="1116.1" y="628.9" width="2.6" height="2.6"/><rect x="1130.8" y="605.1" width="2.6" height="2.6"/><rect x="1116.9" y="628.2" width="2.6" height="2.6"/><rect x="1127.2" y="609.4" width="2.6" height="2.6"/><rect x="1135.0" y="597.7" width="2.6" height="2.6"/><rect x="1128.2" y="607.3" width="2.6" height="2.6"/><rect x="1116.7" y="629.1" width="2.6" height="2.6"/><rect x="1117.3" y="626.7" width="2.6" height="2.6"/><rect x="1127.0" y="609.9" width="2.6" height="2.6"/><rect x="1109.9" y="654.5" width="2.6" height="2.6"/><rect x="1112.1" y="639.7" width="2.6" height="2.6"/><rect x="1110.3" y="644.3" width="2.6" height="2.6"/><rect x="1111.5" y="647.7" width="2.6" height="2.6"/><rect x="1114.8" y="639.2" width="2.6" height="2.6"/><rect x="1111.5" y="641.2" width="2.6" height="2.6"/><rect x="1113.8" y="639.4" width="2.6" height="2.6"/><rect x="1110.2" y="649.7" width="2.6" height="2.6"/><rect x="1113.9" y="631.2" width="2.6" height="2.6"/><rect x="1109.1" y="655.9" width="2.6" height="2.6"/><rect x="1107.6" y="659.2" width="2.6" height="2.6"/><rect x="1113.4" y="638.5" width="2.6" height="2.6"/><rect x="1110.5" y="647.0" width="2.6" height="2.6"/><rect x="1109.4" y="653.5" width="2.6" height="2.6"/><rect x="1109.4" y="655.3" width="2.6" height="2.6"/><rect x="1115.4" y="633.9" width="2.6" height="2.6"/><rect x="1105.7" y="659.5" width="2.6" height="2.6"/><rect x="1110.7" y="649.9" width="2.6" height="2.6"/><rect x="1113.8" y="642.9" width="2.6" height="2.6"/><rect x="1107.3" y="659.1" width="2.6" height="2.6"/><rect x="1113.2" y="642.6" width="2.6" height="2.6"/><rect x="1108.8" y="655.1" width="2.6" height="2.6"/><rect x="1107.4" y="656.8" width="2.6" height="2.6"/><rect x="1112.4" y="647.0" width="2.6" height="2.6"/><rect x="1107.8" y="658.0" width="2.6" height="2.6"/><rect x="1114.9" y="634.5" width="2.6" height="2.6"/><rect x="1111.8" y="642.9" width="2.6" height="2.6"/><rect x="1110.4" y="645.5" width="2.6" height="2.6"/><rect x="1111.7" y="648.4" width="2.6" height="2.6"/><rect x="1112.9" y="642.9" width="2.6" height="2.6"/><rect x="1108.5" y="656.3" width="2.6" height="2.6"/><rect x="1118.5" y="680.4" width="2.6" height="2.6"/><rect x="1117.4" y="677.1" width="2.6" height="2.6"/><rect x="1120.1" y="678.2" width="2.6" height="2.6"/><rect x="1120.5" y="682.9" width="2.6" height="2.6"/><rect x="1117.5" y="679.4" width="2.6" height="2.6"/><rect x="1121.3" y="681.7" width="2.6" height="2.6"/><rect x="1109.1" y="663.9" width="2.6" height="2.6"/><rect x="1117.3" y="675.1" width="2.6" height="2.6"/><rect x="1109.9" y="668.3" width="2.6" height="2.6"/><rect x="1118.8" y="681.4" width="2.6" height="2.6"/><rect x="1110.7" y="667.7" width="2.6" height="2.6"/><rect x="1107.5" y="663.6" width="2.6" height="2.6"/><rect x="1115.5" y="678.4" width="2.6" height="2.6"/><rect x="1112.4" y="669.6" width="2.6" height="2.6"/><rect x="1115.9" y="678.9" width="2.6" height="2.6"/><rect x="1111.0" y="669.3" width="2.6" height="2.6"/><rect x="1107.1" y="660.8" width="2.6" height="2.6"/><rect x="1111.2" y="667.4" width="2.6" height="2.6"/><rect x="1108.6" y="661.7" width="2.6" height="2.6"/><rect x="1118.7" y="680.9" width="2.6" height="2.6"/><rect x="1107.1" y="662.0" width="2.6" height="2.6"/><rect x="1110.5" y="666.2" width="2.6" height="2.6"/><rect x="1116.7" y="676.1" width="2.6" height="2.6"/><rect x="1114.8" y="675.2" width="2.6" height="2.6"/><rect x="1109.9" y="666.3" width="2.6" height="2.6"/><rect x="1120.1" y="681.1" width="2.6" height="2.6"/><rect x="1119.3" y="680.6" width="2.6" height="2.6"/><rect x="1118.7" y="679.9" width="2.6" height="2.6"/><rect x="1123.4" y="684.9" width="2.6" height="2.6"/><rect x="1124.3" y="686.3" width="2.6" height="2.6"/><rect x="1145.2" y="694.8" width="2.6" height="2.6"/><rect x="1137.2" y="690.3" width="2.6" height="2.6"/><rect x="1141.0" y="692.7" width="2.6" height="2.6"/><rect x="1154.0" y="698.3" width="2.6" height="2.6"/><rect x="1158.2" y="701.4" width="2.6" height="2.6"/><rect x="1135.0" y="688.2" width="2.6" height="2.6"/><rect x="1157.8" y="701.4" width="2.6" height="2.6"/><rect x="1126.7" y="687.9" width="2.6" height="2.6"/><rect x="1138.9" y="691.8" width="2.6" height="2.6"/><rect x="1139.2" y="691.0" width="2.6" height="2.6"/><rect x="1134.4" y="691.0" width="2.6" height="2.6"/><rect x="1132.0" y="690.6" width="2.6" height="2.6"/><rect x="1129.2" y="688.3" width="2.6" height="2.6"/><rect x="1138.6" y="691.0" width="2.6" height="2.6"/><rect x="1129.3" y="688.2" width="2.6" height="2.6"/><rect x="1132.0" y="688.9" width="2.6" height="2.6"/><rect x="1142.9" y="693.2" width="2.6" height="2.6"/><rect x="1150.4" y="694.5" width="2.6" height="2.6"/><rect x="1156.3" y="701.2" width="2.6" height="2.6"/><rect x="1148.7" y="695.7" width="2.6" height="2.6"/><rect x="1124.3" y="686.4" width="2.6" height="2.6"/><rect x="1153.6" y="698.8" width="2.6" height="2.6"/><rect x="1148.7" y="696.0" width="2.6" height="2.6"/><rect x="1135.3" y="690.3" width="2.6" height="2.6"/><rect x="1128.8" y="686.0" width="2.6" height="2.6"/><rect x="1134.1" y="688.0" width="2.6" height="2.6"/><rect x="1123.5" y="686.5" width="2.6" height="2.6"/><rect x="1154.7" y="699.9" width="2.6" height="2.6"/><rect x="1151.7" y="697.3" width="2.6" height="2.6"/><rect x="1125.9" y="687.2" width="2.6" height="2.6"/><rect x="1127.6" y="687.9" width="2.6" height="2.6"/><rect x="1158.8" y="699.5" width="2.6" height="2.6"/><rect x="1155.3" y="699.6" width="2.6" height="2.6"/><rect x="1152.6" y="697.0" width="2.6" height="2.6"/><rect x="1126.3" y="688.3" width="2.6" height="2.6"/><rect x="1140.3" y="693.9" width="2.6" height="2.6"/><rect x="1129.7" y="688.6" width="2.6" height="2.6"/><rect x="1161.2" y="747.9" width="2.6" height="2.6"/><rect x="1158.2" y="737.7" width="2.6" height="2.6"/><rect x="1161.0" y="723.3" width="2.6" height="2.6"/><rect x="1162.3" y="738.6" width="2.6" height="2.6"/><rect x="1160.0" y="744.4" width="2.6" height="2.6"/><rect x="1158.4" y="707.7" width="2.6" height="2.6"/><rect x="1160.4" y="731.1" width="2.6" height="2.6"/><rect x="1158.0" y="720.5" width="2.6" height="2.6"/><rect x="1161.0" y="741.5" width="2.6" height="2.6"/><rect x="1158.1" y="724.9" width="2.6" height="2.6"/><rect x="1159.7" y="728.5" width="2.6" height="2.6"/><rect x="1159.5" y="704.3" width="2.6" height="2.6"/><rect x="1160.1" y="746.7" width="2.6" height="2.6"/><rect x="1160.6" y="725.8" width="2.6" height="2.6"/><rect x="1160.0" y="713.3" width="2.6" height="2.6"/><rect x="1161.8" y="747.7" width="2.6" height="2.6"/><rect x="1160.2" y="731.4" width="2.6" height="2.6"/><rect x="1158.7" y="707.3" width="2.6" height="2.6"/><rect x="1159.4" y="731.1" width="2.6" height="2.6"/><rect x="1160.9" y="733.7" width="2.6" height="2.6"/><rect x="1159.9" y="704.1" width="2.6" height="2.6"/><rect x="1159.8" y="738.4" width="2.6" height="2.6"/><rect x="1159.5" y="721.5" width="2.6" height="2.6"/><rect x="1160.9" y="735.6" width="2.6" height="2.6"/><rect x="1161.4" y="734.4" width="2.6" height="2.6"/><rect x="1161.3" y="736.6" width="2.6" height="2.6"/><rect x="1161.3" y="747.9" width="2.6" height="2.6"/><rect x="1159.8" y="731.8" width="2.6" height="2.6"/><rect x="1161.4" y="751.9" width="2.6" height="2.6"/><rect x="1160.8" y="712.5" width="2.6" height="2.6"/><rect x="1160.1" y="743.5" width="2.6" height="2.6"/><rect x="1160.6" y="733.6" width="2.6" height="2.6"/><rect x="1159.3" y="705.6" width="2.6" height="2.6"/><rect x="1161.5" y="751.4" width="2.6" height="2.6"/><rect x="1159.1" y="703.2" width="2.6" height="2.6"/><rect x="1158.8" y="713.2" width="2.6" height="2.6"/><rect x="1161.0" y="735.6" width="2.6" height="2.6"/><rect x="1162.9" y="748.9" width="2.6" height="2.6"/><rect x="1161.2" y="714.2" width="2.6" height="2.6"/><rect x="1157.5" y="708.8" width="2.6" height="2.6"/><rect x="1158.8" y="706.1" width="2.6" height="2.6"/><rect x="1161.8" y="751.2" width="2.6" height="2.6"/><rect x="1161.7" y="742.6" width="2.6" height="2.6"/><rect x="1159.7" y="709.1" width="2.6" height="2.6"/><rect x="1161.1" y="741.5" width="2.6" height="2.6"/><rect x="1161.3" y="746.9" width="2.6" height="2.6"/><rect x="1161.3" y="744.9" width="2.6" height="2.6"/><rect x="1159.9" y="729.6" width="2.6" height="2.6"/><rect x="1161.6" y="732.8" width="2.6" height="2.6"/><rect x="1160.4" y="731.6" width="2.6" height="2.6"/><rect x="1159.2" y="703.5" width="2.6" height="2.6"/><rect x="1163.6" y="772.5" width="2.6" height="2.6"/><rect x="1160.8" y="753.0" width="2.6" height="2.6"/><rect x="1162.1" y="780.0" width="2.6" height="2.6"/><rect x="1163.9" y="782.3" width="2.6" height="2.6"/><rect x="1162.0" y="769.4" width="2.6" height="2.6"/><rect x="1161.3" y="760.3" width="2.6" height="2.6"/><rect x="1160.9" y="768.5" width="2.6" height="2.6"/><rect x="1161.6" y="772.7" width="2.6" height="2.6"/><rect x="1161.4" y="765.6" width="2.6" height="2.6"/><rect x="1163.4" y="783.8" width="2.6" height="2.6"/><rect x="1163.5" y="783.7" width="2.6" height="2.6"/><rect x="1162.0" y="763.7" width="2.6" height="2.6"/><rect x="1163.2" y="780.6" width="2.6" height="2.6"/><rect x="1163.5" y="788.5" width="2.6" height="2.6"/><rect x="1163.6" y="780.8" width="2.6" height="2.6"/><rect x="1162.0" y="756.8" width="2.6" height="2.6"/><rect x="1164.8" y="777.9" width="2.6" height="2.6"/><rect x="1163.8" y="769.2" width="2.6" height="2.6"/><rect x="1164.0" y="767.4" width="2.6" height="2.6"/><rect x="1165.4" y="786.1" width="2.6" height="2.6"/><rect x="1163.3" y="779.5" width="2.6" height="2.6"/><rect x="1166.3" y="783.1" width="2.6" height="2.6"/><rect x="1162.4" y="779.0" width="2.6" height="2.6"/><rect x="1164.0" y="783.7" width="2.6" height="2.6"/><rect x="1162.5" y="768.4" width="2.6" height="2.6"/><rect x="1165.0" y="787.1" width="2.6" height="2.6"/><rect x="1163.2" y="768.8" width="2.6" height="2.6"/><rect x="1163.3" y="763.5" width="2.6" height="2.6"/><rect x="1162.9" y="765.3" width="2.6" height="2.6"/><rect x="1162.6" y="768.8" width="2.6" height="2.6"/><rect x="1166.0" y="788.4" width="2.6" height="2.6"/><rect x="1165.9" y="780.3" width="2.6" height="2.6"/><rect x="1162.5" y="783.4" width="2.6" height="2.6"/><rect x="1162.6" y="762.6" width="2.6" height="2.6"/><rect x="1162.6" y="761.7" width="2.6" height="2.6"/><rect x="1162.3" y="761.1" width="2.6" height="2.6"/><rect x="1180.6" y="800.8" width="2.6" height="2.6"/><rect x="1179.1" y="798.3" width="2.6" height="2.6"/><rect x="1178.2" y="799.9" width="2.6" height="2.6"/><rect x="1175.1" y="794.8" width="2.6" height="2.6"/><rect x="1166.4" y="790.8" width="2.6" height="2.6"/><rect x="1176.7" y="796.3" width="2.6" height="2.6"/><rect x="1172.9" y="791.6" width="2.6" height="2.6"/><rect x="1168.0" y="790.7" width="2.6" height="2.6"/><rect x="1174.9" y="795.1" width="2.6" height="2.6"/><rect x="1182.5" y="799.9" width="2.6" height="2.6"/><rect x="1171.5" y="795.3" width="2.6" height="2.6"/><rect x="1182.9" y="800.4" width="2.6" height="2.6"/><rect x="1166.2" y="790.5" width="2.6" height="2.6"/><rect x="1180.9" y="801.0" width="2.6" height="2.6"/><rect x="1165.0" y="789.3" width="2.6" height="2.6"/><rect x="1182.0" y="802.7" width="2.6" height="2.6"/><rect x="1168.7" y="790.2" width="2.6" height="2.6"/><rect x="1177.1" y="798.2" width="2.6" height="2.6"/><rect x="1178.4" y="798.4" width="2.6" height="2.6"/><rect x="1169.9" y="791.7" width="2.6" height="2.6"/><rect x="1165.3" y="789.3" width="2.6" height="2.6"/><rect x="1169.8" y="791.9" width="2.6" height="2.6"/><rect x="1115.5" y="812.7" width="2.6" height="2.6"/><rect x="1109.9" y="810.6" width="2.6" height="2.6"/><rect x="1108.6" y="811.0" width="2.6" height="2.6"/><rect x="1099.0" y="807.2" width="2.6" height="2.6"/><rect x="1098.5" y="808.9" width="2.6" height="2.6"/><rect x="1100.2" y="808.5" width="2.6" height="2.6"/><rect x="1100.5" y="805.8" width="2.6" height="2.6"/><rect x="1110.1" y="811.9" width="2.6" height="2.6"/><rect x="1102.6" y="809.3" width="2.6" height="2.6"/><rect x="1099.6" y="807.6" width="2.6" height="2.6"/><rect x="1103.6" y="808.2" width="2.6" height="2.6"/><rect x="1105.5" y="811.1" width="2.6" height="2.6"/><rect x="1110.3" y="813.9" width="2.6" height="2.6"/><rect x="1103.5" y="810.9" width="2.6" height="2.6"/><rect x="1112.2" y="814.4" width="2.6" height="2.6"/><rect x="1101.6" y="809.3" width="2.6" height="2.6"/><rect x="1113.1" y="813.3" width="2.6" height="2.6"/><rect x="1103.1" y="808.0" width="2.6" height="2.6"/><rect x="1097.5" y="808.4" width="2.6" height="2.6"/><rect x="1122.2" y="814.2" width="2.6" height="2.6"/><rect x="1139.8" y="806.4" width="2.6" height="2.6"/><rect x="1122.3" y="811.3" width="2.6" height="2.6"/><rect x="1121.7" y="814.6" width="2.6" height="2.6"/><rect x="1130.4" y="811.8" width="2.6" height="2.6"/><rect x="1139.7" y="807.1" width="2.6" height="2.6"/><rect x="1118.2" y="812.8" width="2.6" height="2.6"/><rect x="1116.5" y="813.9" width="2.6" height="2.6"/><rect x="1151.1" y="804.4" width="2.6" height="2.6"/><rect x="1129.2" y="810.3" width="2.6" height="2.6"/><rect x="1144.7" y="805.9" width="2.6" height="2.6"/><rect x="1124.9" y="810.6" width="2.6" height="2.6"/><rect x="1120.2" y="813.6" width="2.6" height="2.6"/><rect x="1125.1" y="811.6" width="2.6" height="2.6"/><rect x="1129.7" y="809.4" width="2.6" height="2.6"/><rect x="1144.0" y="806.8" width="2.6" height="2.6"/><rect x="1124.1" y="812.3" width="2.6" height="2.6"/><rect x="1129.8" y="809.2" width="2.6" height="2.6"/><rect x="1133.5" y="810.4" width="2.6" height="2.6"/><rect x="1148.2" y="807.1" width="2.6" height="2.6"/><rect x="1146.7" y="806.5" width="2.6" height="2.6"/><rect x="1124.8" y="812.6" width="2.6" height="2.6"/><rect x="1120.2" y="812.8" width="2.6" height="2.6"/><rect x="1132.8" y="809.4" width="2.6" height="2.6"/><rect x="1120.1" y="812.2" width="2.6" height="2.6"/><rect x="1133.6" y="809.6" width="2.6" height="2.6"/><rect x="1132.2" y="810.3" width="2.6" height="2.6"/><rect x="1120.5" y="813.4" width="2.6" height="2.6"/><rect x="1133.2" y="809.8" width="2.6" height="2.6"/><rect x="1150.2" y="804.7" width="2.6" height="2.6"/><rect x="1124.0" y="811.5" width="2.6" height="2.6"/><rect x="1142.8" y="805.0" width="2.6" height="2.6"/><rect x="1151.0" y="804.1" width="2.6" height="2.6"/><rect x="1147.8" y="807.6" width="2.6" height="2.6"/><rect x="1135.5" y="810.4" width="2.6" height="2.6"/><rect x="1124.9" y="812.4" width="2.6" height="2.6"/><rect x="1124.1" y="813.4" width="2.6" height="2.6"/><rect x="1172.3" y="606.9" width="2.6" height="2.6"/><rect x="1177.9" y="629.0" width="2.6" height="2.6"/><rect x="1183.4" y="618.0" width="2.6" height="2.6"/><rect x="1176.2" y="613.4" width="2.6" height="2.6"/><rect x="1174.6" y="604.6" width="2.6" height="2.6"/><rect x="1173.2" y="601.7" width="2.6" height="2.6"/><rect x="1188.7" y="604.2" width="2.6" height="2.6"/><rect x="1170.9" y="609.4" width="2.6" height="2.6"/><rect x="1182.6" y="607.4" width="2.6" height="2.6"/><rect x="1179.2" y="609.0" width="2.6" height="2.6"/><rect x="1184.4" y="603.2" width="2.6" height="2.6"/><rect x="1179.8" y="607.7" width="2.6" height="2.6"/><rect x="1181.7" y="606.4" width="2.6" height="2.6"/><rect x="1185.4" y="605.5" width="2.6" height="2.6"/><rect x="1187.8" y="608.6" width="2.6" height="2.6"/><rect x="1178.3" y="591.8" width="2.6" height="2.6"/><rect x="1186.8" y="612.2" width="2.6" height="2.6"/><rect x="1181.1" y="615.0" width="2.6" height="2.6"/><rect x="1186.6" y="614.9" width="2.6" height="2.6"/><rect x="1171.2" y="611.8" width="2.6" height="2.6"/><rect x="1178.4" y="612.8" width="2.6" height="2.6"/><rect x="1183.9" y="613.9" width="2.6" height="2.6"/><rect x="1180.7" y="617.6" width="2.6" height="2.6"/><rect x="1183.1" y="606.1" width="2.6" height="2.6"/><rect x="1170.6" y="614.8" width="2.6" height="2.6"/><rect x="1179.4" y="607.1" width="2.6" height="2.6"/><rect x="1179.4" y="618.9" width="2.6" height="2.6"/><rect x="1188.7" y="606.4" width="2.6" height="2.6"/><rect x="1181.7" y="612.8" width="2.6" height="2.6"/><rect x="1173.4" y="625.2" width="2.6" height="2.6"/><rect x="1189.0" y="603.6" width="2.6" height="2.6"/><rect x="1187.9" y="611.4" width="2.6" height="2.6"/><rect x="1176.9" y="602.3" width="2.6" height="2.6"/><rect x="1182.5" y="613.8" width="2.6" height="2.6"/><rect x="1171.3" y="605.1" width="2.6" height="2.6"/><rect x="1185.4" y="613.2" width="2.6" height="2.6"/><rect x="1171.0" y="603.4" width="2.6" height="2.6"/><rect x="1179.1" y="604.9" width="2.6" height="2.6"/><rect x="1180.9" y="608.1" width="2.6" height="2.6"/><rect x="1175.3" y="604.3" width="2.6" height="2.6"/><rect x="1172.6" y="613.7" width="2.6" height="2.6"/><rect x="1173.2" y="607.6" width="2.6" height="2.6"/><rect x="1181.0" y="593.2" width="2.6" height="2.6"/><rect x="1172.2" y="599.8" width="2.6" height="2.6"/><rect x="1174.6" y="614.7" width="2.6" height="2.6"/><rect x="1178.3" y="619.3" width="2.6" height="2.6"/><rect x="1177.5" y="619.0" width="2.6" height="2.6"/><rect x="1186.6" y="601.2" width="2.6" height="2.6"/><rect x="1188.1" y="607.2" width="2.6" height="2.6"/><rect x="1176.9" y="629.9" width="2.6" height="2.6"/><rect x="1171.4" y="612.3" width="2.6" height="2.6"/><rect x="1171.1" y="606.6" width="2.6" height="2.6"/><rect x="1176.2" y="603.4" width="2.6" height="2.6"/><rect x="1185.1" y="631.8" width="2.6" height="2.6"/><rect x="1179.2" y="592.3" width="2.6" height="2.6"/><rect x="1185.4" y="606.4" width="2.6" height="2.6"/><rect x="1182.7" y="605.0" width="2.6" height="2.6"/><rect x="1175.1" y="608.6" width="2.6" height="2.6"/><rect x="1183.3" y="595.8" width="2.6" height="2.6"/><rect x="1187.3" y="601.5" width="2.6" height="2.6"/><rect x="1188.0" y="610.9" width="2.6" height="2.6"/><rect x="1186.7" y="612.9" width="2.6" height="2.6"/><rect x="1180.7" y="614.9" width="2.6" height="2.6"/><rect x="1174.6" y="621.2" width="2.6" height="2.6"/><rect x="1175.4" y="601.8" width="2.6" height="2.6"/><rect x="1182.5" y="617.3" width="2.6" height="2.6"/><rect x="1172.1" y="608.1" width="2.6" height="2.6"/><rect x="1179.9" y="596.9" width="2.6" height="2.6"/><rect x="1182.8" y="609.7" width="2.6" height="2.6"/><rect x="1179.3" y="608.0" width="2.6" height="2.6"/><rect x="1183.1" y="606.2" width="2.6" height="2.6"/><rect x="1174.6" y="596.6" width="2.6" height="2.6"/><rect x="1187.9" y="611.1" width="2.6" height="2.6"/><rect x="1178.8" y="602.9" width="2.6" height="2.6"/><rect x="1187.8" y="612.1" width="2.6" height="2.6"/><rect x="1187.5" y="618.4" width="2.6" height="2.6"/><rect x="1186.8" y="611.2" width="2.6" height="2.6"/><rect x="1176.4" y="623.3" width="2.6" height="2.6"/><rect x="1182.6" y="609.8" width="2.6" height="2.6"/><rect x="1175.0" y="604.4" width="2.6" height="2.6"/><rect x="1174.6" y="608.7" width="2.6" height="2.6"/><rect x="1173.0" y="611.2" width="2.6" height="2.6"/><rect x="1178.2" y="606.0" width="2.6" height="2.6"/><rect x="1181.1" y="611.0" width="2.6" height="2.6"/><rect x="1188.1" y="602.3" width="2.6" height="2.6"/><rect x="1183.6" y="605.6" width="2.6" height="2.6"/><rect x="1178.3" y="613.7" width="2.6" height="2.6"/><rect x="1170.5" y="617.7" width="2.6" height="2.6"/><rect x="1182.6" y="613.9" width="2.6" height="2.6"/><rect x="1187.6" y="616.8" width="2.6" height="2.6"/><rect x="1211.9" y="617.7" width="2.6" height="2.6"/><rect x="1208.9" y="600.2" width="2.6" height="2.6"/><rect x="1210.0" y="616.8" width="2.6" height="2.6"/><rect x="1212.4" y="610.0" width="2.6" height="2.6"/><rect x="1198.0" y="609.7" width="2.6" height="2.6"/><rect x="1206.2" y="627.2" width="2.6" height="2.6"/><rect x="1214.3" y="619.7" width="2.6" height="2.6"/><rect x="1195.3" y="601.8" width="2.6" height="2.6"/><rect x="1190.1" y="595.9" width="2.6" height="2.6"/><rect x="1197.3" y="607.2" width="2.6" height="2.6"/><rect x="1190.5" y="615.3" width="2.6" height="2.6"/><rect x="1210.1" y="611.3" width="2.6" height="2.6"/><rect x="1188.8" y="610.6" width="2.6" height="2.6"/><rect x="1210.2" y="618.0" width="2.6" height="2.6"/><rect x="1218.8" y="616.0" width="2.6" height="2.6"/><rect x="1217.5" y="612.1" width="2.6" height="2.6"/><rect x="1218.3" y="616.4" width="2.6" height="2.6"/><rect x="1204.4" y="617.1" width="2.6" height="2.6"/><rect x="1199.1" y="601.6" width="2.6" height="2.6"/><rect x="1196.3" y="615.2" width="2.6" height="2.6"/><rect x="1190.1" y="614.3" width="2.6" height="2.6"/><rect x="1191.3" y="612.5" width="2.6" height="2.6"/><rect x="1208.1" y="608.7" width="2.6" height="2.6"/><rect x="1213.5" y="604.8" width="2.6" height="2.6"/><rect x="1211.5" y="605.6" width="2.6" height="2.6"/><rect x="1193.9" y="618.6" width="2.6" height="2.6"/><rect x="1217.5" y="608.9" width="2.6" height="2.6"/><rect x="1193.5" y="609.0" width="2.6" height="2.6"/><rect x="1210.7" y="600.6" width="2.6" height="2.6"/><rect x="1195.2" y="619.4" width="2.6" height="2.6"/><rect x="1213.2" y="612.5" width="2.6" height="2.6"/><rect x="1207.0" y="607.2" width="2.6" height="2.6"/><rect x="1194.9" y="605.9" width="2.6" height="2.6"/><rect x="1214.1" y="596.0" width="2.6" height="2.6"/><rect x="1195.1" y="621.0" width="2.6" height="2.6"/><rect x="1205.6" y="618.0" width="2.6" height="2.6"/><rect x="1192.7" y="614.1" width="2.6" height="2.6"/><rect x="1191.3" y="620.8" width="2.6" height="2.6"/><rect x="1208.2" y="611.4" width="2.6" height="2.6"/><rect x="1201.3" y="617.3" width="2.6" height="2.6"/><rect x="1205.1" y="610.4" width="2.6" height="2.6"/><rect x="1211.2" y="609.0" width="2.6" height="2.6"/><rect x="1195.7" y="607.0" width="2.6" height="2.6"/><rect x="1209.2" y="623.2" width="2.6" height="2.6"/><rect x="1207.3" y="615.8" width="2.6" height="2.6"/><rect x="1198.5" y="606.9" width="2.6" height="2.6"/><rect x="1209.1" y="610.7" width="2.6" height="2.6"/><rect x="1195.3" y="615.3" width="2.6" height="2.6"/><rect x="1212.0" y="617.7" width="2.6" height="2.6"/><rect x="1219.0" y="599.3" width="2.6" height="2.6"/><rect x="1213.3" y="608.5" width="2.6" height="2.6"/><rect x="1210.5" y="618.3" width="2.6" height="2.6"/><rect x="1190.6" y="606.9" width="2.6" height="2.6"/><rect x="1190.4" y="607.4" width="2.6" height="2.6"/><rect x="1203.8" y="622.6" width="2.6" height="2.6"/><rect x="1214.6" y="628.0" width="2.6" height="2.6"/><rect x="1202.8" y="612.1" width="2.6" height="2.6"/><rect x="1204.0" y="614.9" width="2.6" height="2.6"/><rect x="1205.3" y="601.7" width="2.6" height="2.6"/><rect x="1204.3" y="621.3" width="2.6" height="2.6"/><rect x="1212.4" y="613.9" width="2.6" height="2.6"/><rect x="1200.5" y="612.5" width="2.6" height="2.6"/><rect x="1203.6" y="610.5" width="2.6" height="2.6"/><rect x="1194.7" y="623.2" width="2.6" height="2.6"/><rect x="1199.4" y="596.6" width="2.6" height="2.6"/><rect x="1212.3" y="613.2" width="2.6" height="2.6"/><rect x="1201.4" y="591.4" width="2.6" height="2.6"/><rect x="1217.0" y="618.2" width="2.6" height="2.6"/><rect x="1207.3" y="618.6" width="2.6" height="2.6"/><rect x="1207.9" y="616.9" width="2.6" height="2.6"/><rect x="1195.7" y="634.3" width="2.6" height="2.6"/><rect x="1216.3" y="617.3" width="2.6" height="2.6"/><rect x="1193.4" y="598.0" width="2.6" height="2.6"/><rect x="1197.8" y="612.9" width="2.6" height="2.6"/><rect x="1190.8" y="609.9" width="2.6" height="2.6"/><rect x="1203.1" y="595.5" width="2.6" height="2.6"/><rect x="1191.5" y="606.8" width="2.6" height="2.6"/><rect x="1218.2" y="614.0" width="2.6" height="2.6"/><rect x="1190.5" y="606.2" width="2.6" height="2.6"/><rect x="1191.9" y="624.6" width="2.6" height="2.6"/><rect x="1191.7" y="614.7" width="2.6" height="2.6"/><rect x="1204.9" y="613.0" width="2.6" height="2.6"/><rect x="1214.2" y="614.0" width="2.6" height="2.6"/><rect x="1212.0" y="616.0" width="2.6" height="2.6"/><rect x="1202.0" y="608.2" width="2.6" height="2.6"/><rect x="1195.9" y="614.0" width="2.6" height="2.6"/><rect x="1218.3" y="616.7" width="2.6" height="2.6"/><rect x="1211.2" y="615.7" width="2.6" height="2.6"/><rect x="1215.6" y="619.7" width="2.6" height="2.6"/><rect x="1218.5" y="606.0" width="2.6" height="2.6"/><rect x="1207.5" y="608.5" width="2.6" height="2.6"/><rect x="1210.1" y="620.7" width="2.6" height="2.6"/><rect x="1211.1" y="615.1" width="2.6" height="2.6"/><rect x="1217.9" y="615.8" width="2.6" height="2.6"/><rect x="1191.8" y="613.0" width="2.6" height="2.6"/><rect x="1196.8" y="602.8" width="2.6" height="2.6"/><rect x="1198.3" y="583.9" width="2.6" height="2.6"/><rect x="1192.9" y="615.2" width="2.6" height="2.6"/><rect x="1215.2" y="609.1" width="2.6" height="2.6"/><rect x="1211.3" y="616.1" width="2.6" height="2.6"/><rect x="1199.0" y="613.9" width="2.6" height="2.6"/><rect x="1213.5" y="619.8" width="2.6" height="2.6"/><rect x="1215.4" y="610.3" width="2.6" height="2.6"/><rect x="1212.3" y="610.7" width="2.6" height="2.6"/><rect x="1206.2" y="628.4" width="2.6" height="2.6"/><rect x="1199.6" y="597.6" width="2.6" height="2.6"/><rect x="1214.6" y="614.3" width="2.6" height="2.6"/><rect x="1200.4" y="604.2" width="2.6" height="2.6"/><rect x="1200.6" y="605.3" width="2.6" height="2.6"/><rect x="1191.7" y="616.8" width="2.6" height="2.6"/><rect x="1195.2" y="617.8" width="2.6" height="2.6"/><rect x="1208.6" y="606.1" width="2.6" height="2.6"/><rect x="1216.0" y="611.7" width="2.6" height="2.6"/><rect x="1217.4" y="605.0" width="2.6" height="2.6"/><rect x="1212.5" y="625.5" width="2.6" height="2.6"/><rect x="1212.0" y="610.4" width="2.6" height="2.6"/><rect x="1213.8" y="611.1" width="2.6" height="2.6"/><rect x="1199.6" y="623.3" width="2.6" height="2.6"/><rect x="1214.1" y="618.7" width="2.6" height="2.6"/><rect x="1198.5" y="618.5" width="2.6" height="2.6"/><rect x="1214.6" y="601.8" width="2.6" height="2.6"/><rect x="1213.9" y="625.4" width="2.6" height="2.6"/><rect x="1214.9" y="624.8" width="2.6" height="2.6"/><rect x="1210.6" y="627.1" width="2.6" height="2.6"/><rect x="1209.7" y="609.5" width="2.6" height="2.6"/><rect x="1215.6" y="609.2" width="2.6" height="2.6"/><rect x="1206.1" y="603.1" width="2.6" height="2.6"/><rect x="1212.7" y="613.5" width="2.6" height="2.6"/><rect x="1212.5" y="615.4" width="2.6" height="2.6"/><rect x="1199.5" y="605.9" width="2.6" height="2.6"/><rect x="1196.0" y="616.5" width="2.6" height="2.6"/><rect x="1189.2" y="614.4" width="2.6" height="2.6"/><rect x="1213.2" y="611.8" width="2.6" height="2.6"/><rect x="1190.6" y="613.2" width="2.6" height="2.6"/><rect x="1211.3" y="614.3" width="2.6" height="2.6"/><rect x="1200.5" y="619.8" width="2.6" height="2.6"/><rect x="1212.9" y="618.6" width="2.6" height="2.6"/><rect x="1208.3" y="608.8" width="2.6" height="2.6"/><rect x="1217.5" y="593.0" width="2.6" height="2.6"/><rect x="1211.1" y="614.6" width="2.6" height="2.6"/><rect x="1197.8" y="618.4" width="2.6" height="2.6"/><rect x="1192.5" y="601.8" width="2.6" height="2.6"/><rect x="1206.5" y="615.9" width="2.6" height="2.6"/><rect x="1204.2" y="601.3" width="2.6" height="2.6"/><rect x="1200.9" y="620.0" width="2.6" height="2.6"/><rect x="1195.7" y="601.2" width="2.6" height="2.6"/><rect x="1200.8" y="595.9" width="2.6" height="2.6"/><rect x="1209.0" y="627.9" width="2.6" height="2.6"/><rect x="1192.4" y="612.0" width="2.6" height="2.6"/><rect x="1207.0" y="609.7" width="2.6" height="2.6"/><rect x="1202.1" y="608.7" width="2.6" height="2.6"/><rect x="1192.1" y="600.8" width="2.6" height="2.6"/><rect x="1204.4" y="617.4" width="2.6" height="2.6"/><rect x="1200.6" y="596.4" width="2.6" height="2.6"/><rect x="1228.5" y="613.0" width="2.6" height="2.6"/><rect x="1231.3" y="597.9" width="2.6" height="2.6"/><rect x="1252.8" y="628.0" width="2.6" height="2.6"/><rect x="1234.7" y="614.3" width="2.6" height="2.6"/><rect x="1246.7" y="622.6" width="2.6" height="2.6"/><rect x="1232.0" y="611.6" width="2.6" height="2.6"/><rect x="1232.7" y="613.7" width="2.6" height="2.6"/><rect x="1242.4" y="610.6" width="2.6" height="2.6"/><rect x="1239.9" y="613.4" width="2.6" height="2.6"/><rect x="1258.4" y="615.2" width="2.6" height="2.6"/><rect x="1262.2" y="605.5" width="2.6" height="2.6"/><rect x="1228.0" y="607.4" width="2.6" height="2.6"/><rect x="1258.5" y="605.2" width="2.6" height="2.6"/><rect x="1255.0" y="614.0" width="2.6" height="2.6"/><rect x="1232.8" y="619.8" width="2.6" height="2.6"/><rect x="1221.0" y="609.2" width="2.6" height="2.6"/><rect x="1236.5" y="630.6" width="2.6" height="2.6"/><rect x="1259.7" y="608.3" width="2.6" height="2.6"/><rect x="1237.8" y="625.9" width="2.6" height="2.6"/><rect x="1226.1" y="608.3" width="2.6" height="2.6"/><rect x="1244.0" y="619.7" width="2.6" height="2.6"/><rect x="1245.2" y="608.0" width="2.6" height="2.6"/><rect x="1230.1" y="612.3" width="2.6" height="2.6"/><rect x="1238.1" y="624.7" width="2.6" height="2.6"/><rect x="1238.0" y="616.2" width="2.6" height="2.6"/><rect x="1232.9" y="614.9" width="2.6" height="2.6"/><rect x="1248.0" y="617.4" width="2.6" height="2.6"/><rect x="1230.9" y="607.4" width="2.6" height="2.6"/><rect x="1239.0" y="621.1" width="2.6" height="2.6"/><rect x="1253.4" y="629.4" width="2.6" height="2.6"/><rect x="1229.9" y="601.5" width="2.6" height="2.6"/><rect x="1250.7" y="610.6" width="2.6" height="2.6"/><rect x="1248.2" y="615.7" width="2.6" height="2.6"/><rect x="1254.2" y="611.7" width="2.6" height="2.6"/><rect x="1252.4" y="638.7" width="2.6" height="2.6"/><rect x="1235.8" y="622.0" width="2.6" height="2.6"/><rect x="1220.1" y="626.3" width="2.6" height="2.6"/><rect x="1245.2" y="623.6" width="2.6" height="2.6"/><rect x="1227.6" y="600.9" width="2.6" height="2.6"/><rect x="1258.6" y="622.7" width="2.6" height="2.6"/><rect x="1232.7" y="615.1" width="2.6" height="2.6"/><rect x="1228.7" y="606.9" width="2.6" height="2.6"/><rect x="1227.9" y="602.9" width="2.6" height="2.6"/><rect x="1230.3" y="620.5" width="2.6" height="2.6"/><rect x="1225.8" y="613.7" width="2.6" height="2.6"/><rect x="1226.5" y="616.8" width="2.6" height="2.6"/><rect x="1233.2" y="608.7" width="2.6" height="2.6"/><rect x="1238.6" y="615.4" width="2.6" height="2.6"/><rect x="1235.0" y="625.0" width="2.6" height="2.6"/><rect x="1257.4" y="617.6" width="2.6" height="2.6"/><rect x="1237.5" y="619.2" width="2.6" height="2.6"/><rect x="1223.1" y="623.8" width="2.6" height="2.6"/><rect x="1223.8" y="625.1" width="2.6" height="2.6"/><rect x="1256.8" y="625.4" width="2.6" height="2.6"/><rect x="1236.7" y="609.4" width="2.6" height="2.6"/><rect x="1232.1" y="621.7" width="2.6" height="2.6"/><rect x="1247.8" y="613.4" width="2.6" height="2.6"/><rect x="1253.3" y="621.7" width="2.6" height="2.6"/><rect x="1238.9" y="633.1" width="2.6" height="2.6"/><rect x="1248.4" y="618.2" width="2.6" height="2.6"/><rect x="1236.3" y="601.3" width="2.6" height="2.6"/><rect x="1238.3" y="600.8" width="2.6" height="2.6"/><rect x="1237.4" y="611.9" width="2.6" height="2.6"/><rect x="1243.8" y="627.5" width="2.6" height="2.6"/><rect x="1247.8" y="622.2" width="2.6" height="2.6"/><rect x="1234.4" y="613.1" width="2.6" height="2.6"/><rect x="1252.8" y="621.4" width="2.6" height="2.6"/><rect x="1248.7" y="606.0" width="2.6" height="2.6"/><rect x="1231.0" y="624.7" width="2.6" height="2.6"/><rect x="1236.3" y="611.2" width="2.6" height="2.6"/><rect x="1224.0" y="626.9" width="2.6" height="2.6"/><rect x="1248.9" y="630.3" width="2.6" height="2.6"/><rect x="1221.4" y="607.5" width="2.6" height="2.6"/><rect x="1237.5" y="624.5" width="2.6" height="2.6"/><rect x="1232.7" y="620.9" width="2.6" height="2.6"/><rect x="1241.7" y="611.1" width="2.6" height="2.6"/><rect x="1257.8" y="612.8" width="2.6" height="2.6"/><rect x="1234.3" y="606.8" width="2.6" height="2.6"/><rect x="1237.3" y="603.1" width="2.6" height="2.6"/><rect x="1231.8" y="604.2" width="2.6" height="2.6"/><rect x="1235.5" y="608.4" width="2.6" height="2.6"/><rect x="1254.8" y="624.3" width="2.6" height="2.6"/><rect x="1241.2" y="614.8" width="2.6" height="2.6"/><rect x="1250.7" y="625.9" width="2.6" height="2.6"/><rect x="1226.0" y="612.3" width="2.6" height="2.6"/><rect x="1227.5" y="611.6" width="2.6" height="2.6"/><rect x="1221.5" y="613.8" width="2.6" height="2.6"/><rect x="1229.5" y="609.0" width="2.6" height="2.6"/><rect x="1222.0" y="610.9" width="2.6" height="2.6"/><rect x="1245.4" y="631.4" width="2.6" height="2.6"/><rect x="1253.7" y="629.3" width="2.6" height="2.6"/><rect x="1256.9" y="615.5" width="2.6" height="2.6"/><rect x="1221.4" y="620.6" width="2.6" height="2.6"/><rect x="1228.0" y="609.1" width="2.6" height="2.6"/><rect x="1248.2" y="623.1" width="2.6" height="2.6"/><rect x="1224.5" y="605.8" width="2.6" height="2.6"/><rect x="1254.2" y="618.9" width="2.6" height="2.6"/><rect x="1260.7" y="607.9" width="2.6" height="2.6"/><rect x="1220.2" y="616.2" width="2.6" height="2.6"/><rect x="1220.1" y="613.4" width="2.6" height="2.6"/><rect x="1248.3" y="614.5" width="2.6" height="2.6"/><rect x="1226.6" y="609.9" width="2.6" height="2.6"/><rect x="1228.7" y="603.2" width="2.6" height="2.6"/><rect x="1259.7" y="611.3" width="2.6" height="2.6"/><rect x="1232.0" y="623.7" width="2.6" height="2.6"/><rect x="1235.3" y="613.6" width="2.6" height="2.6"/><rect x="1229.1" y="616.3" width="2.6" height="2.6"/><rect x="1254.4" y="642.9" width="2.6" height="2.6"/><rect x="1247.1" y="619.8" width="2.6" height="2.6"/><rect x="1224.6" y="617.8" width="2.6" height="2.6"/><rect x="1233.5" y="614.3" width="2.6" height="2.6"/><rect x="1241.2" y="612.9" width="2.6" height="2.6"/><rect x="1244.8" y="626.2" width="2.6" height="2.6"/><rect x="1250.6" y="620.0" width="2.6" height="2.6"/><rect x="1245.8" y="599.3" width="2.6" height="2.6"/><rect x="1242.3" y="621.8" width="2.6" height="2.6"/><rect x="1236.2" y="598.0" width="2.6" height="2.6"/><rect x="1251.2" y="631.2" width="2.6" height="2.6"/><rect x="1256.8" y="614.6" width="2.6" height="2.6"/><rect x="1226.8" y="611.3" width="2.6" height="2.6"/><rect x="1234.8" y="614.5" width="2.6" height="2.6"/><rect x="1251.6" y="617.3" width="2.6" height="2.6"/><rect x="1251.0" y="617.1" width="2.6" height="2.6"/><rect x="1251.3" y="618.0" width="2.6" height="2.6"/><rect x="1237.1" y="609.6" width="2.6" height="2.6"/><rect x="1250.5" y="607.7" width="2.6" height="2.6"/><rect x="1231.6" y="635.8" width="2.6" height="2.6"/><rect x="1257.5" y="613.8" width="2.6" height="2.6"/><rect x="1244.7" y="613.2" width="2.6" height="2.6"/><rect x="1228.7" y="621.5" width="2.6" height="2.6"/><rect x="1254.7" y="622.9" width="2.6" height="2.6"/><rect x="1255.1" y="603.6" width="2.6" height="2.6"/><rect x="1259.5" y="616.8" width="2.6" height="2.6"/><rect x="1251.1" y="610.8" width="2.6" height="2.6"/><rect x="1230.7" y="609.9" width="2.6" height="2.6"/><rect x="1254.3" y="615.3" width="2.6" height="2.6"/><rect x="1239.6" y="612.5" width="2.6" height="2.6"/><rect x="1218.9" y="631.7" width="2.6" height="2.6"/><rect x="1256.5" y="619.4" width="2.6" height="2.6"/><rect x="1250.8" y="612.9" width="2.6" height="2.6"/><rect x="1240.4" y="625.9" width="2.6" height="2.6"/><rect x="1237.8" y="608.8" width="2.6" height="2.6"/><rect x="1254.1" y="631.9" width="2.6" height="2.6"/><rect x="1222.0" y="620.3" width="2.6" height="2.6"/><rect x="1227.9" y="627.1" width="2.6" height="2.6"/><rect x="1234.8" y="626.7" width="2.6" height="2.6"/><rect x="1248.5" y="616.9" width="2.6" height="2.6"/><rect x="1242.5" y="630.8" width="2.6" height="2.6"/><rect x="1226.2" y="598.7" width="2.6" height="2.6"/><rect x="1227.9" y="613.9" width="2.6" height="2.6"/><rect x="1245.8" y="615.5" width="2.6" height="2.6"/><rect x="1254.5" y="627.2" width="2.6" height="2.6"/><rect x="1255.2" y="628.3" width="2.6" height="2.6"/><rect x="1242.3" y="616.2" width="2.6" height="2.6"/><rect x="1251.6" y="618.7" width="2.6" height="2.6"/><rect x="1255.8" y="609.1" width="2.6" height="2.6"/><rect x="1233.6" y="624.2" width="2.6" height="2.6"/><rect x="1224.8" y="609.6" width="2.6" height="2.6"/><rect x="1247.7" y="625.7" width="2.6" height="2.6"/><rect x="1219.6" y="622.4" width="2.6" height="2.6"/><rect x="1261.6" y="605.9" width="2.6" height="2.6"/><rect x="1225.4" y="609.1" width="2.6" height="2.6"/><rect x="1245.8" y="612.1" width="2.6" height="2.6"/><rect x="1251.0" y="622.8" width="2.6" height="2.6"/><rect x="1221.6" y="608.3" width="2.6" height="2.6"/><rect x="1253.3" y="619.0" width="2.6" height="2.6"/><rect x="1253.2" y="628.3" width="2.6" height="2.6"/><rect x="1237.8" y="617.5" width="2.6" height="2.6"/><rect x="1248.3" y="616.4" width="2.6" height="2.6"/><rect x="1258.2" y="611.3" width="2.6" height="2.6"/><rect x="1224.8" y="623.5" width="2.6" height="2.6"/><rect x="1221.9" y="624.6" width="2.6" height="2.6"/><rect x="1228.5" y="605.4" width="2.6" height="2.6"/><rect x="1226.0" y="613.0" width="2.6" height="2.6"/><rect x="1259.5" y="604.2" width="2.6" height="2.6"/><rect x="1229.0" y="616.2" width="2.6" height="2.6"/><rect x="1255.1" y="622.4" width="2.6" height="2.6"/><rect x="1240.2" y="635.1" width="2.6" height="2.6"/><rect x="1257.8" y="621.1" width="2.6" height="2.6"/><rect x="1243.1" y="603.9" width="2.6" height="2.6"/><rect x="1254.3" y="614.9" width="2.6" height="2.6"/><rect x="1255.6" y="620.4" width="2.6" height="2.6"/><rect x="1252.8" y="612.2" width="2.6" height="2.6"/><rect x="1231.3" y="600.6" width="2.6" height="2.6"/><rect x="1236.0" y="625.2" width="2.6" height="2.6"/><rect x="1260.2" y="599.3" width="2.6" height="2.6"/><rect x="1226.8" y="608.6" width="2.6" height="2.6"/><rect x="1237.6" y="604.9" width="2.6" height="2.6"/><rect x="1224.9" y="619.4" width="2.6" height="2.6"/><rect x="1237.6" y="623.0" width="2.6" height="2.6"/><rect x="1231.6" y="606.5" width="2.6" height="2.6"/><rect x="1248.2" y="625.9" width="2.6" height="2.6"/><rect x="1241.1" y="625.8" width="2.6" height="2.6"/><rect x="1231.1" y="630.0" width="2.6" height="2.6"/><rect x="1256.8" y="624.1" width="2.6" height="2.6"/><rect x="1242.8" y="615.8" width="2.6" height="2.6"/><rect x="1259.6" y="611.3" width="2.6" height="2.6"/><rect x="1230.5" y="621.4" width="2.6" height="2.6"/><rect x="1220.4" y="613.2" width="2.6" height="2.6"/><rect x="1230.0" y="618.2" width="2.6" height="2.6"/><rect x="1248.4" y="597.4" width="2.6" height="2.6"/><rect x="1248.4" y="609.1" width="2.6" height="2.6"/><rect x="1271.1" y="633.1" width="2.6" height="2.6"/><rect x="1279.7" y="618.3" width="2.6" height="2.6"/><rect x="1291.4" y="619.7" width="2.6" height="2.6"/><rect x="1282.3" y="615.3" width="2.6" height="2.6"/><rect x="1269.5" y="627.5" width="2.6" height="2.6"/><rect x="1295.1" y="622.9" width="2.6" height="2.6"/><rect x="1260.3" y="631.1" width="2.6" height="2.6"/><rect x="1266.7" y="621.3" width="2.6" height="2.6"/><rect x="1276.3" y="634.3" width="2.6" height="2.6"/><rect x="1282.4" y="634.0" width="2.6" height="2.6"/><rect x="1281.3" y="647.2" width="2.6" height="2.6"/><rect x="1285.6" y="610.7" width="2.6" height="2.6"/><rect x="1285.1" y="625.8" width="2.6" height="2.6"/><rect x="1274.9" y="621.7" width="2.6" height="2.6"/><rect x="1295.3" y="619.8" width="2.6" height="2.6"/><rect x="1258.3" y="630.2" width="2.6" height="2.6"/><rect x="1273.3" y="631.1" width="2.6" height="2.6"/><rect x="1290.3" y="616.8" width="2.6" height="2.6"/><rect x="1259.6" y="621.4" width="2.6" height="2.6"/><rect x="1289.1" y="628.8" width="2.6" height="2.6"/><rect x="1262.2" y="626.4" width="2.6" height="2.6"/><rect x="1291.9" y="620.9" width="2.6" height="2.6"/><rect x="1279.4" y="611.9" width="2.6" height="2.6"/><rect x="1271.6" y="641.9" width="2.6" height="2.6"/><rect x="1282.9" y="637.9" width="2.6" height="2.6"/><rect x="1294.4" y="631.0" width="2.6" height="2.6"/><rect x="1263.4" y="620.0" width="2.6" height="2.6"/><rect x="1265.6" y="613.4" width="2.6" height="2.6"/><rect x="1274.1" y="610.0" width="2.6" height="2.6"/><rect x="1298.0" y="605.9" width="2.6" height="2.6"/><rect x="1296.8" y="615.2" width="2.6" height="2.6"/><rect x="1266.3" y="611.6" width="2.6" height="2.6"/><rect x="1286.9" y="615.2" width="2.6" height="2.6"/><rect x="1292.6" y="621.2" width="2.6" height="2.6"/><rect x="1268.2" y="624.1" width="2.6" height="2.6"/><rect x="1264.3" y="624.4" width="2.6" height="2.6"/><rect x="1280.6" y="624.0" width="2.6" height="2.6"/><rect x="1278.3" y="617.1" width="2.6" height="2.6"/><rect x="1281.4" y="614.0" width="2.6" height="2.6"/><rect x="1279.6" y="618.9" width="2.6" height="2.6"/><rect x="1258.8" y="628.3" width="2.6" height="2.6"/><rect x="1267.6" y="624.1" width="2.6" height="2.6"/><rect x="1286.9" y="624.0" width="2.6" height="2.6"/><rect x="1266.1" y="637.1" width="2.6" height="2.6"/><rect x="1263.8" y="611.6" width="2.6" height="2.6"/><rect x="1271.4" y="622.5" width="2.6" height="2.6"/><rect x="1287.0" y="625.5" width="2.6" height="2.6"/><rect x="1288.2" y="636.3" width="2.6" height="2.6"/><rect x="1278.4" y="602.0" width="2.6" height="2.6"/><rect x="1281.5" y="622.1" width="2.6" height="2.6"/><rect x="1265.5" y="623.8" width="2.6" height="2.6"/><rect x="1271.2" y="622.8" width="2.6" height="2.6"/><rect x="1263.2" y="614.7" width="2.6" height="2.6"/><rect x="1271.5" y="613.7" width="2.6" height="2.6"/><rect x="1277.3" y="628.1" width="2.6" height="2.6"/><rect x="1265.3" y="617.9" width="2.6" height="2.6"/><rect x="1271.6" y="612.5" width="2.6" height="2.6"/><rect x="1283.0" y="640.1" width="2.6" height="2.6"/><rect x="1274.8" y="623.0" width="2.6" height="2.6"/><rect x="1263.5" y="622.6" width="2.6" height="2.6"/><rect x="1290.7" y="620.6" width="2.6" height="2.6"/><rect x="1282.7" y="618.5" width="2.6" height="2.6"/><rect x="1262.4" y="612.1" width="2.6" height="2.6"/><rect x="1263.1" y="619.8" width="2.6" height="2.6"/><rect x="1286.7" y="621.0" width="2.6" height="2.6"/><rect x="1266.7" y="610.3" width="2.6" height="2.6"/><rect x="1285.3" y="611.0" width="2.6" height="2.6"/><rect x="1262.0" y="625.3" width="2.6" height="2.6"/><rect x="1291.6" y="630.0" width="2.6" height="2.6"/><rect x="1273.9" y="621.7" width="2.6" height="2.6"/><rect x="1265.1" y="632.0" width="2.6" height="2.6"/><rect x="1294.8" y="631.3" width="2.6" height="2.6"/><rect x="1271.7" y="619.9" width="2.6" height="2.6"/><rect x="1265.8" y="633.7" width="2.6" height="2.6"/><rect x="1274.4" y="618.0" width="2.6" height="2.6"/><rect x="1266.1" y="611.8" width="2.6" height="2.6"/><rect x="1265.1" y="594.3" width="2.6" height="2.6"/><rect x="1293.9" y="616.8" width="2.6" height="2.6"/><rect x="1264.2" y="610.1" width="2.6" height="2.6"/><rect x="1266.4" y="620.4" width="2.6" height="2.6"/><rect x="1285.8" y="606.9" width="2.6" height="2.6"/><rect x="1269.9" y="621.5" width="2.6" height="2.6"/><rect x="1293.0" y="627.9" width="2.6" height="2.6"/><rect x="1265.6" y="611.3" width="2.6" height="2.6"/><rect x="1275.8" y="631.2" width="2.6" height="2.6"/><rect x="1283.6" y="632.4" width="2.6" height="2.6"/><rect x="1280.1" y="625.0" width="2.6" height="2.6"/><rect x="1285.5" y="622.6" width="2.6" height="2.6"/><rect x="1287.9" y="629.2" width="2.6" height="2.6"/><rect x="1260.6" y="625.0" width="2.6" height="2.6"/><rect x="1280.8" y="621.0" width="2.6" height="2.6"/><rect x="1285.8" y="614.9" width="2.6" height="2.6"/><rect x="1272.9" y="619.7" width="2.6" height="2.6"/><rect x="1296.0" y="617.4" width="2.6" height="2.6"/><rect x="1274.8" y="625.5" width="2.6" height="2.6"/><rect x="1285.9" y="623.1" width="2.6" height="2.6"/><rect x="1291.4" y="620.4" width="2.6" height="2.6"/><rect x="1291.7" y="619.9" width="2.6" height="2.6"/><rect x="1284.7" y="629.4" width="2.6" height="2.6"/><rect x="1283.2" y="628.4" width="2.6" height="2.6"/><rect x="1258.4" y="627.6" width="2.6" height="2.6"/><rect x="1291.0" y="625.9" width="2.6" height="2.6"/><rect x="1296.8" y="616.3" width="2.6" height="2.6"/><rect x="1285.9" y="640.7" width="2.6" height="2.6"/><rect x="1293.4" y="604.1" width="2.6" height="2.6"/><rect x="1284.4" y="610.5" width="2.6" height="2.6"/><rect x="1294.7" y="618.8" width="2.6" height="2.6"/><rect x="1278.6" y="619.8" width="2.6" height="2.6"/><rect x="1277.5" y="617.5" width="2.6" height="2.6"/><rect x="1277.1" y="629.3" width="2.6" height="2.6"/><rect x="1280.7" y="623.6" width="2.6" height="2.6"/><rect x="1276.8" y="628.9" width="2.6" height="2.6"/><rect x="1279.2" y="610.8" width="2.6" height="2.6"/><rect x="1265.3" y="626.9" width="2.6" height="2.6"/><rect x="1279.1" y="619.7" width="2.6" height="2.6"/><rect x="1283.2" y="637.7" width="2.6" height="2.6"/><rect x="1288.7" y="616.7" width="2.6" height="2.6"/><rect x="1293.3" y="623.2" width="2.6" height="2.6"/><rect x="1278.6" y="616.9" width="2.6" height="2.6"/><rect x="1273.4" y="626.7" width="2.6" height="2.6"/><rect x="1284.7" y="627.1" width="2.6" height="2.6"/><rect x="1287.2" y="614.0" width="2.6" height="2.6"/><rect x="1268.1" y="612.8" width="2.6" height="2.6"/><rect x="1270.2" y="623.5" width="2.6" height="2.6"/><rect x="1272.4" y="621.8" width="2.6" height="2.6"/><rect x="1268.7" y="606.5" width="2.6" height="2.6"/><rect x="1267.5" y="623.5" width="2.6" height="2.6"/><rect x="1285.6" y="610.4" width="2.6" height="2.6"/><rect x="1282.9" y="620.2" width="2.6" height="2.6"/><rect x="1262.3" y="613.4" width="2.6" height="2.6"/><rect x="1269.8" y="643.2" width="2.6" height="2.6"/><rect x="1277.9" y="626.6" width="2.6" height="2.6"/><rect x="1281.9" y="638.2" width="2.6" height="2.6"/><rect x="1268.1" y="617.5" width="2.6" height="2.6"/><rect x="1270.1" y="633.3" width="2.6" height="2.6"/><rect x="1285.0" y="632.9" width="2.6" height="2.6"/><rect x="1277.7" y="617.2" width="2.6" height="2.6"/><rect x="1276.5" y="627.0" width="2.6" height="2.6"/><rect x="1283.7" y="636.4" width="2.6" height="2.6"/><rect x="1292.4" y="613.3" width="2.6" height="2.6"/><rect x="1276.2" y="615.0" width="2.6" height="2.6"/><rect x="1294.5" y="627.8" width="2.6" height="2.6"/><rect x="1265.5" y="624.4" width="2.6" height="2.6"/><rect x="1292.3" y="629.9" width="2.6" height="2.6"/><rect x="1291.6" y="615.3" width="2.6" height="2.6"/><rect x="1290.0" y="638.7" width="2.6" height="2.6"/><rect x="1274.3" y="627.0" width="2.6" height="2.6"/><rect x="1271.2" y="635.5" width="2.6" height="2.6"/><rect x="1262.7" y="627.9" width="2.6" height="2.6"/><rect x="1274.5" y="616.1" width="2.6" height="2.6"/><rect x="1281.1" y="622.4" width="2.6" height="2.6"/><rect x="1273.4" y="623.3" width="2.6" height="2.6"/><rect x="1272.1" y="629.8" width="2.6" height="2.6"/><rect x="1287.1" y="623.8" width="2.6" height="2.6"/><rect x="1272.1" y="616.0" width="2.6" height="2.6"/><rect x="1267.6" y="609.5" width="2.6" height="2.6"/><rect x="1260.7" y="614.3" width="2.6" height="2.6"/><rect x="1271.4" y="610.4" width="2.6" height="2.6"/><rect x="1265.1" y="632.4" width="2.6" height="2.6"/><rect x="1269.7" y="605.7" width="2.6" height="2.6"/><rect x="1281.6" y="615.5" width="2.6" height="2.6"/><rect x="1261.1" y="616.4" width="2.6" height="2.6"/><rect x="1272.1" y="613.9" width="2.6" height="2.6"/><rect x="1279.1" y="612.7" width="2.6" height="2.6"/><rect x="1263.6" y="622.0" width="2.6" height="2.6"/><rect x="1273.6" y="629.0" width="2.6" height="2.6"/><rect x="1272.1" y="624.9" width="2.6" height="2.6"/><rect x="1295.7" y="621.7" width="2.6" height="2.6"/><rect x="1267.6" y="624.9" width="2.6" height="2.6"/><rect x="1281.4" y="617.3" width="2.6" height="2.6"/><rect x="1271.2" y="636.6" width="2.6" height="2.6"/><rect x="1288.5" y="627.1" width="2.6" height="2.6"/><rect x="1268.9" y="622.6" width="2.6" height="2.6"/><rect x="1296.7" y="614.4" width="2.6" height="2.6"/><rect x="1261.9" y="615.4" width="2.6" height="2.6"/><rect x="1281.6" y="626.9" width="2.6" height="2.6"/><rect x="1287.0" y="629.3" width="2.6" height="2.6"/><rect x="1274.6" y="612.3" width="2.6" height="2.6"/><rect x="1287.9" y="628.7" width="2.6" height="2.6"/><rect x="1286.3" y="627.3" width="2.6" height="2.6"/><rect x="1274.9" y="625.5" width="2.6" height="2.6"/><rect x="1276.2" y="621.7" width="2.6" height="2.6"/><rect x="1266.6" y="624.5" width="2.6" height="2.6"/><rect x="1262.6" y="620.2" width="2.6" height="2.6"/><rect x="1308.8" y="616.9" width="2.6" height="2.6"/><rect x="1304.0" y="630.1" width="2.6" height="2.6"/><rect x="1321.7" y="603.7" width="2.6" height="2.6"/><rect x="1301.5" y="622.7" width="2.6" height="2.6"/><rect x="1313.0" y="618.7" width="2.6" height="2.6"/><rect x="1322.2" y="629.3" width="2.6" height="2.6"/><rect x="1301.3" y="631.3" width="2.6" height="2.6"/><rect x="1307.2" y="620.4" width="2.6" height="2.6"/><rect x="1315.9" y="621.1" width="2.6" height="2.6"/><rect x="1299.0" y="622.0" width="2.6" height="2.6"/><rect x="1325.6" y="626.5" width="2.6" height="2.6"/><rect x="1315.4" y="631.0" width="2.6" height="2.6"/><rect x="1312.8" y="623.6" width="2.6" height="2.6"/><rect x="1320.6" y="635.7" width="2.6" height="2.6"/><rect x="1309.6" y="607.3" width="2.6" height="2.6"/><rect x="1305.0" y="637.0" width="2.6" height="2.6"/><rect x="1307.0" y="633.2" width="2.6" height="2.6"/><rect x="1314.3" y="638.8" width="2.6" height="2.6"/><rect x="1310.5" y="621.5" width="2.6" height="2.6"/><rect x="1319.5" y="632.1" width="2.6" height="2.6"/><rect x="1309.2" y="630.9" width="2.6" height="2.6"/><rect x="1319.6" y="620.9" width="2.6" height="2.6"/><rect x="1296.0" y="628.6" width="2.6" height="2.6"/><rect x="1313.0" y="649.6" width="2.6" height="2.6"/><rect x="1318.3" y="618.2" width="2.6" height="2.6"/><rect x="1301.9" y="625.6" width="2.6" height="2.6"/><rect x="1302.6" y="617.1" width="2.6" height="2.6"/><rect x="1305.7" y="615.1" width="2.6" height="2.6"/><rect x="1314.2" y="635.6" width="2.6" height="2.6"/><rect x="1299.6" y="634.2" width="2.6" height="2.6"/><rect x="1312.2" y="622.8" width="2.6" height="2.6"/><rect x="1298.2" y="635.1" width="2.6" height="2.6"/><rect x="1311.3" y="623.4" width="2.6" height="2.6"/><rect x="1305.9" y="622.8" width="2.6" height="2.6"/><rect x="1318.7" y="616.5" width="2.6" height="2.6"/><rect x="1320.4" y="625.1" width="2.6" height="2.6"/><rect x="1313.1" y="629.0" width="2.6" height="2.6"/><rect x="1319.7" y="638.0" width="2.6" height="2.6"/><rect x="1313.2" y="627.5" width="2.6" height="2.6"/><rect x="1311.1" y="618.5" width="2.6" height="2.6"/><rect x="1324.6" y="635.1" width="2.6" height="2.6"/><rect x="1301.2" y="613.5" width="2.6" height="2.6"/><rect x="1311.1" y="647.4" width="2.6" height="2.6"/><rect x="1324.9" y="633.7" width="2.6" height="2.6"/><rect x="1318.5" y="626.4" width="2.6" height="2.6"/><rect x="1298.4" y="641.9" width="2.6" height="2.6"/><rect x="1321.5" y="627.2" width="2.6" height="2.6"/><rect x="1323.2" y="628.9" width="2.6" height="2.6"/><rect x="1308.2" y="633.1" width="2.6" height="2.6"/><rect x="1314.2" y="615.6" width="2.6" height="2.6"/><rect x="1321.3" y="634.3" width="2.6" height="2.6"/><rect x="1303.1" y="643.9" width="2.6" height="2.6"/><rect x="1297.0" y="622.8" width="2.6" height="2.6"/><rect x="1297.6" y="627.4" width="2.6" height="2.6"/><rect x="1314.3" y="631.4" width="2.6" height="2.6"/><rect x="1304.2" y="629.4" width="2.6" height="2.6"/><rect x="1301.5" y="642.3" width="2.6" height="2.6"/><rect x="1324.1" y="619.9" width="2.6" height="2.6"/><rect x="1328.7" y="615.3" width="2.6" height="2.6"/><rect x="1303.5" y="631.5" width="2.6" height="2.6"/><rect x="1323.3" y="634.5" width="2.6" height="2.6"/><rect x="1305.2" y="612.5" width="2.6" height="2.6"/><rect x="1297.0" y="634.6" width="2.6" height="2.6"/><rect x="1315.5" y="622.6" width="2.6" height="2.6"/><rect x="1320.8" y="637.3" width="2.6" height="2.6"/><rect x="1308.2" y="637.3" width="2.6" height="2.6"/><rect x="1320.9" y="623.0" width="2.6" height="2.6"/><rect x="1324.9" y="631.0" width="2.6" height="2.6"/><rect x="1304.6" y="625.3" width="2.6" height="2.6"/><rect x="1306.4" y="609.3" width="2.6" height="2.6"/><rect x="1318.0" y="623.1" width="2.6" height="2.6"/><rect x="1301.9" y="629.2" width="2.6" height="2.6"/><rect x="1326.3" y="622.5" width="2.6" height="2.6"/><rect x="1309.9" y="634.6" width="2.6" height="2.6"/><rect x="1296.7" y="624.8" width="2.6" height="2.6"/><rect x="1325.2" y="614.7" width="2.6" height="2.6"/><rect x="1306.5" y="628.2" width="2.6" height="2.6"/><rect x="1316.9" y="636.0" width="2.6" height="2.6"/><rect x="1317.6" y="619.1" width="2.6" height="2.6"/><rect x="1299.6" y="631.0" width="2.6" height="2.6"/><rect x="1325.8" y="619.1" width="2.6" height="2.6"/><rect x="1319.7" y="630.4" width="2.6" height="2.6"/><rect x="1302.2" y="624.0" width="2.6" height="2.6"/><rect x="1322.2" y="620.7" width="2.6" height="2.6"/><rect x="1299.1" y="622.8" width="2.6" height="2.6"/><rect x="1308.5" y="639.1" width="2.6" height="2.6"/><rect x="1308.4" y="621.0" width="2.6" height="2.6"/><rect x="1309.8" y="623.8" width="2.6" height="2.6"/><rect x="1295.6" y="626.3" width="2.6" height="2.6"/><rect x="1322.4" y="622.5" width="2.6" height="2.6"/><rect x="1314.5" y="617.5" width="2.6" height="2.6"/><rect x="1301.0" y="617.7" width="2.6" height="2.6"/><rect x="1320.5" y="624.0" width="2.6" height="2.6"/><rect x="1317.0" y="645.2" width="2.6" height="2.6"/><rect x="1316.0" y="631.7" width="2.6" height="2.6"/><rect x="1318.0" y="619.4" width="2.6" height="2.6"/><rect x="1324.8" y="630.9" width="2.6" height="2.6"/><rect x="1307.9" y="630.2" width="2.6" height="2.6"/><rect x="1310.9" y="630.7" width="2.6" height="2.6"/><rect x="1321.5" y="633.9" width="2.6" height="2.6"/><rect x="1307.2" y="629.7" width="2.6" height="2.6"/><rect x="1312.8" y="631.9" width="2.6" height="2.6"/><rect x="1303.6" y="614.7" width="2.6" height="2.6"/><rect x="1309.1" y="628.4" width="2.6" height="2.6"/><rect x="1311.2" y="627.8" width="2.6" height="2.6"/><rect x="1324.6" y="628.0" width="2.6" height="2.6"/><rect x="1299.5" y="639.8" width="2.6" height="2.6"/><rect x="1312.7" y="630.9" width="2.6" height="2.6"/><rect x="1311.8" y="630.3" width="2.6" height="2.6"/><rect x="1302.7" y="640.7" width="2.6" height="2.6"/><rect x="1317.9" y="629.8" width="2.6" height="2.6"/><rect x="1313.8" y="639.0" width="2.6" height="2.6"/><rect x="1307.8" y="623.1" width="2.6" height="2.6"/><rect x="1315.5" y="628.2" width="2.6" height="2.6"/><rect x="1315.9" y="634.3" width="2.6" height="2.6"/><rect x="1316.7" y="637.3" width="2.6" height="2.6"/><rect x="1297.4" y="634.1" width="2.6" height="2.6"/><rect x="1300.1" y="609.7" width="2.6" height="2.6"/><rect x="1302.5" y="631.4" width="2.6" height="2.6"/><rect x="1298.0" y="628.1" width="2.6" height="2.6"/><rect x="1310.9" y="626.9" width="2.6" height="2.6"/><rect x="1308.7" y="634.1" width="2.6" height="2.6"/><rect x="1306.7" y="629.6" width="2.6" height="2.6"/><rect x="1301.8" y="611.4" width="2.6" height="2.6"/><rect x="1301.4" y="633.2" width="2.6" height="2.6"/><rect x="1299.1" y="625.3" width="2.6" height="2.6"/><rect x="1316.3" y="633.5" width="2.6" height="2.6"/><rect x="1307.3" y="597.3" width="2.6" height="2.6"/><rect x="1297.0" y="624.9" width="2.6" height="2.6"/><rect x="1326.0" y="620.4" width="2.6" height="2.6"/><rect x="1308.1" y="625.1" width="2.6" height="2.6"/><rect x="1324.4" y="632.5" width="2.6" height="2.6"/><rect x="1313.1" y="618.4" width="2.6" height="2.6"/><rect x="1318.8" y="631.8" width="2.6" height="2.6"/><rect x="1322.3" y="623.4" width="2.6" height="2.6"/><rect x="1308.2" y="627.3" width="2.6" height="2.6"/><rect x="1325.1" y="618.5" width="2.6" height="2.6"/><rect x="1311.8" y="634.3" width="2.6" height="2.6"/><rect x="1311.0" y="621.0" width="2.6" height="2.6"/><rect x="1313.5" y="624.4" width="2.6" height="2.6"/><rect x="1321.1" y="636.3" width="2.6" height="2.6"/><rect x="1322.1" y="633.1" width="2.6" height="2.6"/><rect x="1323.7" y="641.7" width="2.6" height="2.6"/><rect x="1315.1" y="628.7" width="2.6" height="2.6"/><rect x="1322.5" y="624.3" width="2.6" height="2.6"/><rect x="1304.9" y="626.8" width="2.6" height="2.6"/><rect x="1317.8" y="627.4" width="2.6" height="2.6"/><rect x="1316.6" y="622.0" width="2.6" height="2.6"/><rect x="1316.2" y="626.8" width="2.6" height="2.6"/><rect x="1309.7" y="625.2" width="2.6" height="2.6"/><rect x="1307.0" y="619.6" width="2.6" height="2.6"/><rect x="1300.6" y="620.5" width="2.6" height="2.6"/><rect x="1317.0" y="624.4" width="2.6" height="2.6"/><rect x="1302.6" y="640.9" width="2.6" height="2.6"/><rect x="1312.3" y="628.8" width="2.6" height="2.6"/><rect x="1350.1" y="633.1" width="2.6" height="2.6"/><rect x="1328.0" y="632.1" width="2.6" height="2.6"/><rect x="1348.9" y="636.2" width="2.6" height="2.6"/><rect x="1336.6" y="637.0" width="2.6" height="2.6"/><rect x="1339.4" y="642.3" width="2.6" height="2.6"/><rect x="1336.8" y="641.2" width="2.6" height="2.6"/><rect x="1333.4" y="639.8" width="2.6" height="2.6"/><rect x="1358.3" y="632.7" width="2.6" height="2.6"/><rect x="1331.5" y="638.0" width="2.6" height="2.6"/><rect x="1357.9" y="634.1" width="2.6" height="2.6"/><rect x="1348.4" y="648.9" width="2.6" height="2.6"/><rect x="1338.5" y="633.9" width="2.6" height="2.6"/><rect x="1332.1" y="624.0" width="2.6" height="2.6"/><rect x="1333.1" y="614.0" width="2.6" height="2.6"/><rect x="1331.0" y="637.1" width="2.6" height="2.6"/><rect x="1339.8" y="634.6" width="2.6" height="2.6"/><rect x="1333.4" y="624.5" width="2.6" height="2.6"/><rect x="1348.1" y="617.3" width="2.6" height="2.6"/><rect x="1351.0" y="647.6" width="2.6" height="2.6"/><rect x="1336.4" y="624.0" width="2.6" height="2.6"/><rect x="1328.6" y="626.8" width="2.6" height="2.6"/><rect x="1338.1" y="640.3" width="2.6" height="2.6"/><rect x="1345.6" y="632.0" width="2.6" height="2.6"/><rect x="1342.5" y="654.3" width="2.6" height="2.6"/><rect x="1327.4" y="638.1" width="2.6" height="2.6"/><rect x="1335.8" y="632.4" width="2.6" height="2.6"/><rect x="1338.5" y="631.8" width="2.6" height="2.6"/><rect x="1330.9" y="629.5" width="2.6" height="2.6"/><rect x="1331.0" y="631.5" width="2.6" height="2.6"/><rect x="1332.3" y="635.1" width="2.6" height="2.6"/><rect x="1331.9" y="633.4" width="2.6" height="2.6"/><rect x="1339.0" y="645.0" width="2.6" height="2.6"/><rect x="1335.4" y="645.6" width="2.6" height="2.6"/><rect x="1333.9" y="633.1" width="2.6" height="2.6"/><rect x="1322.7" y="646.1" width="2.6" height="2.6"/><rect x="1343.8" y="653.6" width="2.6" height="2.6"/><rect x="1335.2" y="645.4" width="2.6" height="2.6"/><rect x="1344.0" y="638.2" width="2.6" height="2.6"/><rect x="1329.4" y="627.4" width="2.6" height="2.6"/><rect x="1351.4" y="625.2" width="2.6" height="2.6"/><rect x="1337.3" y="625.5" width="2.6" height="2.6"/><rect x="1340.6" y="638.1" width="2.6" height="2.6"/><rect x="1332.4" y="640.8" width="2.6" height="2.6"/><rect x="1345.1" y="633.5" width="2.6" height="2.6"/><rect x="1344.1" y="642.5" width="2.6" height="2.6"/><rect x="1328.1" y="633.6" width="2.6" height="2.6"/><rect x="1336.5" y="622.7" width="2.6" height="2.6"/><rect x="1333.2" y="621.0" width="2.6" height="2.6"/><rect x="1348.7" y="636.3" width="2.6" height="2.6"/><rect x="1342.9" y="618.4" width="2.6" height="2.6"/><rect x="1331.9" y="641.7" width="2.6" height="2.6"/><rect x="1350.0" y="659.4" width="2.6" height="2.6"/><rect x="1360.6" y="623.2" width="2.6" height="2.6"/><rect x="1332.9" y="636.8" width="2.6" height="2.6"/><rect x="1336.2" y="621.2" width="2.6" height="2.6"/><rect x="1360.0" y="630.5" width="2.6" height="2.6"/><rect x="1347.6" y="623.1" width="2.6" height="2.6"/><rect x="1327.8" y="633.9" width="2.6" height="2.6"/><rect x="1335.7" y="628.4" width="2.6" height="2.6"/><rect x="1344.3" y="639.1" width="2.6" height="2.6"/><rect x="1345.5" y="645.6" width="2.6" height="2.6"/><rect x="1330.1" y="628.6" width="2.6" height="2.6"/><rect x="1342.1" y="631.1" width="2.6" height="2.6"/><rect x="1346.7" y="635.2" width="2.6" height="2.6"/><rect x="1333.1" y="629.3" width="2.6" height="2.6"/><rect x="1358.1" y="632.5" width="2.6" height="2.6"/><rect x="1336.1" y="639.0" width="2.6" height="2.6"/><rect x="1348.0" y="635.9" width="2.6" height="2.6"/><rect x="1342.8" y="621.6" width="2.6" height="2.6"/><rect x="1345.7" y="630.0" width="2.6" height="2.6"/><rect x="1355.7" y="638.7" width="2.6" height="2.6"/><rect x="1354.6" y="643.8" width="2.6" height="2.6"/><rect x="1349.2" y="608.6" width="2.6" height="2.6"/><rect x="1351.9" y="638.9" width="2.6" height="2.6"/><rect x="1343.9" y="650.6" width="2.6" height="2.6"/><rect x="1352.4" y="647.7" width="2.6" height="2.6"/><rect x="1339.6" y="617.5" width="2.6" height="2.6"/><rect x="1352.9" y="630.4" width="2.6" height="2.6"/><rect x="1337.4" y="634.5" width="2.6" height="2.6"/><rect x="1348.0" y="646.6" width="2.6" height="2.6"/><rect x="1351.4" y="622.9" width="2.6" height="2.6"/><rect x="1329.7" y="637.5" width="2.6" height="2.6"/><rect x="1330.1" y="640.8" width="2.6" height="2.6"/><rect x="1335.5" y="636.9" width="2.6" height="2.6"/><rect x="1347.5" y="639.8" width="2.6" height="2.6"/><rect x="1331.9" y="636.2" width="2.6" height="2.6"/><rect x="1354.5" y="632.1" width="2.6" height="2.6"/><rect x="1336.1" y="631.8" width="2.6" height="2.6"/><rect x="1324.1" y="638.2" width="2.6" height="2.6"/><rect x="1340.1" y="633.1" width="2.6" height="2.6"/><rect x="1352.6" y="639.2" width="2.6" height="2.6"/><rect x="1331.0" y="654.7" width="2.6" height="2.6"/><rect x="1333.5" y="632.0" width="2.6" height="2.6"/><rect x="1333.0" y="636.0" width="2.6" height="2.6"/><rect x="1348.0" y="637.4" width="2.6" height="2.6"/><rect x="1346.4" y="629.2" width="2.6" height="2.6"/><rect x="1335.3" y="632.4" width="2.6" height="2.6"/><rect x="1361.9" y="621.9" width="2.6" height="2.6"/><rect x="1347.7" y="656.7" width="2.6" height="2.6"/><rect x="1330.0" y="631.9" width="2.6" height="2.6"/><rect x="1348.7" y="635.4" width="2.6" height="2.6"/><rect x="1352.4" y="634.2" width="2.6" height="2.6"/><rect x="1354.6" y="627.9" width="2.6" height="2.6"/><rect x="1333.3" y="624.9" width="2.6" height="2.6"/><rect x="1339.2" y="632.1" width="2.6" height="2.6"/><rect x="1333.3" y="628.8" width="2.6" height="2.6"/><rect x="1353.8" y="627.0" width="2.6" height="2.6"/><rect x="1350.7" y="620.6" width="2.6" height="2.6"/><rect x="1355.0" y="626.8" width="2.6" height="2.6"/><rect x="1346.7" y="626.5" width="2.6" height="2.6"/><rect x="1332.3" y="650.4" width="2.6" height="2.6"/><rect x="1331.8" y="624.2" width="2.6" height="2.6"/><rect x="1351.3" y="650.4" width="2.6" height="2.6"/><rect x="1349.6" y="625.9" width="2.6" height="2.6"/><rect x="1355.8" y="620.7" width="2.6" height="2.6"/><rect x="1344.6" y="620.4" width="2.6" height="2.6"/><rect x="1335.1" y="636.2" width="2.6" height="2.6"/><rect x="1333.5" y="619.7" width="2.6" height="2.6"/><rect x="1337.5" y="621.8" width="2.6" height="2.6"/><rect x="1346.3" y="639.9" width="2.6" height="2.6"/><rect x="1331.5" y="628.3" width="2.6" height="2.6"/><rect x="1345.0" y="624.3" width="2.6" height="2.6"/><rect x="1351.2" y="657.3" width="2.6" height="2.6"/><rect x="1339.1" y="637.3" width="2.6" height="2.6"/><rect x="1335.5" y="620.0" width="2.6" height="2.6"/><rect x="1355.7" y="640.9" width="2.6" height="2.6"/><rect x="1339.4" y="637.2" width="2.6" height="2.6"/><rect x="1329.8" y="621.3" width="2.6" height="2.6"/><rect x="1355.4" y="640.3" width="2.6" height="2.6"/><rect x="1336.4" y="642.4" width="2.6" height="2.6"/><rect x="1348.3" y="623.8" width="2.6" height="2.6"/><rect x="1334.9" y="628.8" width="2.6" height="2.6"/><rect x="1335.6" y="642.8" width="2.6" height="2.6"/><rect x="1348.7" y="628.8" width="2.6" height="2.6"/><rect x="1345.1" y="635.5" width="2.6" height="2.6"/><rect x="1356.3" y="641.9" width="2.6" height="2.6"/><rect x="1324.5" y="637.1" width="2.6" height="2.6"/><rect x="1326.7" y="638.9" width="2.6" height="2.6"/><rect x="1351.1" y="641.1" width="2.6" height="2.6"/><rect x="1342.8" y="652.2" width="2.6" height="2.6"/><rect x="1345.5" y="632.2" width="2.6" height="2.6"/><rect x="1341.6" y="643.7" width="2.6" height="2.6"/><rect x="1334.3" y="633.0" width="2.6" height="2.6"/><rect x="1342.4" y="645.5" width="2.6" height="2.6"/><rect x="1336.6" y="637.6" width="2.6" height="2.6"/><rect x="1342.6" y="631.4" width="2.6" height="2.6"/><rect x="1348.2" y="639.2" width="2.6" height="2.6"/><rect x="1352.1" y="634.3" width="2.6" height="2.6"/><rect x="1345.6" y="633.3" width="2.6" height="2.6"/><rect x="1348.6" y="652.5" width="2.6" height="2.6"/><rect x="1328.3" y="629.0" width="2.6" height="2.6"/><rect x="1354.5" y="635.1" width="2.6" height="2.6"/><rect x="1356.5" y="633.1" width="2.6" height="2.6"/><rect x="1350.1" y="642.9" width="2.6" height="2.6"/><rect x="1345.4" y="631.6" width="2.6" height="2.6"/><rect x="1339.4" y="629.5" width="2.6" height="2.6"/><rect x="1340.9" y="649.4" width="2.6" height="2.6"/><rect x="1342.7" y="614.5" width="2.6" height="2.6"/><rect x="1345.5" y="630.2" width="2.6" height="2.6"/><rect x="1362.2" y="615.0" width="2.6" height="2.6"/><rect x="1367.4" y="635.7" width="2.6" height="2.6"/><rect x="1373.7" y="643.8" width="2.6" height="2.6"/><rect x="1370.6" y="658.1" width="2.6" height="2.6"/><rect x="1374.3" y="647.6" width="2.6" height="2.6"/><rect x="1360.7" y="651.6" width="2.6" height="2.6"/><rect x="1362.6" y="655.1" width="2.6" height="2.6"/><rect x="1360.6" y="646.2" width="2.6" height="2.6"/><rect x="1352.3" y="664.1" width="2.6" height="2.6"/><rect x="1352.2" y="642.7" width="2.6" height="2.6"/><rect x="1361.5" y="654.2" width="2.6" height="2.6"/><rect x="1366.4" y="645.1" width="2.6" height="2.6"/><rect x="1362.0" y="643.2" width="2.6" height="2.6"/><rect x="1372.3" y="648.1" width="2.6" height="2.6"/><rect x="1377.2" y="638.8" width="2.6" height="2.6"/><rect x="1374.9" y="651.4" width="2.6" height="2.6"/><rect x="1366.1" y="659.8" width="2.6" height="2.6"/><rect x="1351.2" y="652.2" width="2.6" height="2.6"/><rect x="1358.8" y="647.7" width="2.6" height="2.6"/><rect x="1367.1" y="649.3" width="2.6" height="2.6"/><rect x="1363.1" y="656.6" width="2.6" height="2.6"/><rect x="1360.3" y="645.1" width="2.6" height="2.6"/><rect x="1357.4" y="652.1" width="2.6" height="2.6"/><rect x="1367.0" y="656.5" width="2.6" height="2.6"/><rect x="1378.4" y="640.0" width="2.6" height="2.6"/><rect x="1363.2" y="638.6" width="2.6" height="2.6"/><rect x="1357.9" y="647.7" width="2.6" height="2.6"/><rect x="1356.5" y="647.7" width="2.6" height="2.6"/><rect x="1367.4" y="652.8" width="2.6" height="2.6"/><rect x="1366.8" y="655.6" width="2.6" height="2.6"/><rect x="1352.7" y="654.6" width="2.6" height="2.6"/><rect x="1353.4" y="662.2" width="2.6" height="2.6"/><rect x="1345.6" y="650.4" width="2.6" height="2.6"/><rect x="1364.7" y="642.0" width="2.6" height="2.6"/><rect x="1347.0" y="644.3" width="2.6" height="2.6"/><rect x="1369.1" y="636.7" width="2.6" height="2.6"/><rect x="1362.8" y="656.5" width="2.6" height="2.6"/><rect x="1376.3" y="652.1" width="2.6" height="2.6"/><rect x="1373.7" y="657.1" width="2.6" height="2.6"/><rect x="1352.6" y="665.2" width="2.6" height="2.6"/><rect x="1365.0" y="644.0" width="2.6" height="2.6"/><rect x="1376.4" y="652.4" width="2.6" height="2.6"/><rect x="1363.5" y="651.2" width="2.6" height="2.6"/><rect x="1356.3" y="653.8" width="2.6" height="2.6"/><rect x="1347.7" y="647.4" width="2.6" height="2.6"/><rect x="1372.4" y="638.9" width="2.6" height="2.6"/><rect x="1365.7" y="653.5" width="2.6" height="2.6"/><rect x="1368.2" y="654.4" width="2.6" height="2.6"/><rect x="1365.7" y="655.2" width="2.6" height="2.6"/><rect x="1356.4" y="647.2" width="2.6" height="2.6"/><rect x="1378.9" y="649.3" width="2.6" height="2.6"/><rect x="1355.6" y="644.4" width="2.6" height="2.6"/><rect x="1367.7" y="637.5" width="2.6" height="2.6"/><rect x="1345.3" y="649.2" width="2.6" height="2.6"/><rect x="1357.7" y="641.3" width="2.6" height="2.6"/><rect x="1367.0" y="652.1" width="2.6" height="2.6"/><rect x="1357.7" y="641.6" width="2.6" height="2.6"/><rect x="1353.7" y="663.4" width="2.6" height="2.6"/><rect x="1362.9" y="647.4" width="2.6" height="2.6"/><rect x="1359.7" y="647.1" width="2.6" height="2.6"/><rect x="1356.4" y="646.2" width="2.6" height="2.6"/><rect x="1376.9" y="650.6" width="2.6" height="2.6"/><rect x="1363.5" y="650.3" width="2.6" height="2.6"/><rect x="1364.8" y="646.0" width="2.6" height="2.6"/><rect x="1362.5" y="644.6" width="2.6" height="2.6"/><rect x="1346.3" y="650.1" width="2.6" height="2.6"/><rect x="1363.5" y="645.1" width="2.6" height="2.6"/><rect x="1347.6" y="660.3" width="2.6" height="2.6"/><rect x="1374.9" y="643.8" width="2.6" height="2.6"/><rect x="1353.7" y="665.1" width="2.6" height="2.6"/><rect x="1376.0" y="642.5" width="2.6" height="2.6"/><rect x="1366.1" y="642.1" width="2.6" height="2.6"/><rect x="1352.0" y="648.6" width="2.6" height="2.6"/><rect x="1358.8" y="658.4" width="2.6" height="2.6"/><rect x="1380.9" y="632.8" width="2.6" height="2.6"/><rect x="1351.6" y="654.4" width="2.6" height="2.6"/><rect x="1351.8" y="651.8" width="2.6" height="2.6"/><rect x="1375.0" y="641.1" width="2.6" height="2.6"/><rect x="1366.9" y="638.4" width="2.6" height="2.6"/><rect x="1375.9" y="654.5" width="2.6" height="2.6"/><rect x="1366.9" y="652.0" width="2.6" height="2.6"/><rect x="1350.9" y="649.9" width="2.6" height="2.6"/><rect x="1378.7" y="641.2" width="2.6" height="2.6"/><rect x="1362.3" y="660.3" width="2.6" height="2.6"/><rect x="1386.5" y="649.8" width="2.6" height="2.6"/><rect x="1355.6" y="643.9" width="2.6" height="2.6"/><rect x="1376.3" y="654.3" width="2.6" height="2.6"/><rect x="1373.6" y="642.7" width="2.6" height="2.6"/><rect x="1351.3" y="667.5" width="2.6" height="2.6"/><rect x="1362.5" y="658.0" width="2.6" height="2.6"/><rect x="1358.1" y="648.8" width="2.6" height="2.6"/><rect x="1369.2" y="653.3" width="2.6" height="2.6"/><rect x="1366.1" y="647.5" width="2.6" height="2.6"/><rect x="1362.0" y="657.8" width="2.6" height="2.6"/><rect x="1345.4" y="663.6" width="2.6" height="2.6"/><rect x="1347.5" y="649.7" width="2.6" height="2.6"/><rect x="1369.7" y="643.5" width="2.6" height="2.6"/><rect x="1360.3" y="660.8" width="2.6" height="2.6"/><rect x="1371.3" y="657.2" width="2.6" height="2.6"/><rect x="1363.8" y="639.4" width="2.6" height="2.6"/><rect x="1368.3" y="636.3" width="2.6" height="2.6"/><rect x="1362.6" y="648.5" width="2.6" height="2.6"/><rect x="1372.9" y="657.4" width="2.6" height="2.6"/><rect x="1357.3" y="650.2" width="2.6" height="2.6"/><rect x="1348.8" y="647.8" width="2.6" height="2.6"/><rect x="1366.3" y="649.3" width="2.6" height="2.6"/><rect x="1361.2" y="648.6" width="2.6" height="2.6"/><rect x="1354.9" y="653.3" width="2.6" height="2.6"/><rect x="1351.2" y="653.7" width="2.6" height="2.6"/><rect x="1360.4" y="643.4" width="2.6" height="2.6"/><rect x="1353.6" y="642.6" width="2.6" height="2.6"/><rect x="1358.4" y="659.0" width="2.6" height="2.6"/><rect x="1364.4" y="658.9" width="2.6" height="2.6"/><rect x="1347.5" y="655.3" width="2.6" height="2.6"/><rect x="1364.6" y="649.9" width="2.6" height="2.6"/><rect x="1358.2" y="640.9" width="2.6" height="2.6"/><rect x="1349.8" y="683.2" width="2.6" height="2.6"/><rect x="1352.6" y="689.0" width="2.6" height="2.6"/><rect x="1350.1" y="687.0" width="2.6" height="2.6"/><rect x="1347.4" y="680.8" width="2.6" height="2.6"/><rect x="1348.7" y="683.1" width="2.6" height="2.6"/><rect x="1347.1" y="679.2" width="2.6" height="2.6"/><rect x="1345.2" y="667.9" width="2.6" height="2.6"/><rect x="1349.7" y="673.1" width="2.6" height="2.6"/><rect x="1347.3" y="678.0" width="2.6" height="2.6"/><rect x="1344.4" y="671.9" width="2.6" height="2.6"/><rect x="1353.4" y="686.1" width="2.6" height="2.6"/><rect x="1345.8" y="675.9" width="2.6" height="2.6"/><rect x="1352.6" y="686.1" width="2.6" height="2.6"/><rect x="1349.1" y="676.2" width="2.6" height="2.6"/><rect x="1346.0" y="681.4" width="2.6" height="2.6"/><rect x="1343.1" y="685.0" width="2.6" height="2.6"/><rect x="1348.7" y="679.9" width="2.6" height="2.6"/><rect x="1347.6" y="675.0" width="2.6" height="2.6"/><rect x="1345.9" y="672.8" width="2.6" height="2.6"/><rect x="1347.8" y="677.9" width="2.6" height="2.6"/><rect x="1349.4" y="688.5" width="2.6" height="2.6"/><rect x="1350.2" y="673.5" width="2.6" height="2.6"/><rect x="1346.7" y="672.6" width="2.6" height="2.6"/><rect x="1351.1" y="684.3" width="2.6" height="2.6"/><rect x="1346.7" y="675.7" width="2.6" height="2.6"/><rect x="1352.9" y="686.2" width="2.6" height="2.6"/><rect x="1355.8" y="689.9" width="2.6" height="2.6"/><rect x="1340.1" y="668.6" width="2.6" height="2.6"/><rect x="1347.4" y="689.2" width="2.6" height="2.6"/><rect x="1346.6" y="676.7" width="2.6" height="2.6"/><rect x="1350.2" y="685.7" width="2.6" height="2.6"/><rect x="1348.2" y="686.6" width="2.6" height="2.6"/><rect x="1348.1" y="680.6" width="2.6" height="2.6"/><rect x="1347.6" y="667.3" width="2.6" height="2.6"/><rect x="1349.0" y="686.1" width="2.6" height="2.6"/><rect x="1342.1" y="667.8" width="2.6" height="2.6"/><rect x="1348.3" y="672.9" width="2.6" height="2.6"/><rect x="1352.1" y="681.7" width="2.6" height="2.6"/><rect x="1347.9" y="677.8" width="2.6" height="2.6"/><rect x="1349.4" y="671.2" width="2.6" height="2.6"/><rect x="1351.1" y="679.4" width="2.6" height="2.6"/><rect x="1348.1" y="671.4" width="2.6" height="2.6"/><rect x="1347.2" y="674.5" width="2.6" height="2.6"/><rect x="1346.0" y="675.8" width="2.6" height="2.6"/><rect x="1350.6" y="684.6" width="2.6" height="2.6"/><rect x="1350.0" y="684.8" width="2.6" height="2.6"/><rect x="1345.4" y="670.0" width="2.6" height="2.6"/><rect x="1346.6" y="669.1" width="2.6" height="2.6"/><rect x="1348.1" y="672.8" width="2.6" height="2.6"/><rect x="1350.4" y="688.6" width="2.6" height="2.6"/><rect x="1351.4" y="689.8" width="2.6" height="2.6"/><rect x="1345.3" y="685.0" width="2.6" height="2.6"/><rect x="1348.4" y="680.7" width="2.6" height="2.6"/><rect x="1345.0" y="691.9" width="2.6" height="2.6"/><rect x="1345.8" y="667.2" width="2.6" height="2.6"/><rect x="1344.2" y="672.4" width="2.6" height="2.6"/><rect x="1347.0" y="677.7" width="2.6" height="2.6"/><rect x="1350.3" y="687.4" width="2.6" height="2.6"/><rect x="1341.7" y="675.9" width="2.6" height="2.6"/><rect x="1346.0" y="673.9" width="2.6" height="2.6"/><rect x="1344.4" y="672.7" width="2.6" height="2.6"/><rect x="1344.0" y="670.4" width="2.6" height="2.6"/><rect x="1345.8" y="671.5" width="2.6" height="2.6"/><rect x="1358.3" y="703.3" width="2.6" height="2.6"/><rect x="1360.4" y="695.1" width="2.6" height="2.6"/><rect x="1367.0" y="706.5" width="2.6" height="2.6"/><rect x="1355.7" y="701.5" width="2.6" height="2.6"/><rect x="1364.5" y="702.0" width="2.6" height="2.6"/><rect x="1361.6" y="701.2" width="2.6" height="2.6"/><rect x="1369.2" y="711.2" width="2.6" height="2.6"/><rect x="1360.9" y="707.7" width="2.6" height="2.6"/><rect x="1367.7" y="712.7" width="2.6" height="2.6"/><rect x="1352.1" y="691.8" width="2.6" height="2.6"/><rect x="1363.7" y="701.8" width="2.6" height="2.6"/><rect x="1370.0" y="708.2" width="2.6" height="2.6"/><rect x="1363.6" y="707.3" width="2.6" height="2.6"/><rect x="1356.4" y="694.4" width="2.6" height="2.6"/><rect x="1373.3" y="711.3" width="2.6" height="2.6"/><rect x="1355.1" y="695.4" width="2.6" height="2.6"/><rect x="1357.3" y="696.9" width="2.6" height="2.6"/><rect x="1352.3" y="695.3" width="2.6" height="2.6"/><rect x="1353.1" y="696.9" width="2.6" height="2.6"/><rect x="1366.1" y="710.5" width="2.6" height="2.6"/><rect x="1368.1" y="711.3" width="2.6" height="2.6"/><rect x="1353.1" y="694.8" width="2.6" height="2.6"/><rect x="1358.2" y="704.4" width="2.6" height="2.6"/><rect x="1371.8" y="710.6" width="2.6" height="2.6"/><rect x="1370.0" y="713.4" width="2.6" height="2.6"/><rect x="1354.9" y="702.4" width="2.6" height="2.6"/><rect x="1356.0" y="695.0" width="2.6" height="2.6"/><rect x="1361.9" y="704.0" width="2.6" height="2.6"/><rect x="1369.5" y="709.4" width="2.6" height="2.6"/><rect x="1367.6" y="708.1" width="2.6" height="2.6"/><rect x="1355.4" y="691.3" width="2.6" height="2.6"/><rect x="1369.1" y="714.4" width="2.6" height="2.6"/><rect x="1364.7" y="708.8" width="2.6" height="2.6"/><rect x="1358.5" y="697.6" width="2.6" height="2.6"/><rect x="1368.7" y="706.0" width="2.6" height="2.6"/><rect x="1350.4" y="694.0" width="2.6" height="2.6"/><rect x="1368.9" y="708.0" width="2.6" height="2.6"/><rect x="1360.5" y="702.1" width="2.6" height="2.6"/><rect x="1364.0" y="701.8" width="2.6" height="2.6"/><rect x="1352.2" y="691.4" width="2.6" height="2.6"/><rect x="1369.3" y="709.9" width="2.6" height="2.6"/><rect x="1369.6" y="701.9" width="2.6" height="2.6"/><rect x="1369.2" y="713.8" width="2.6" height="2.6"/><rect x="1369.2" y="714.3" width="2.6" height="2.6"/><rect x="1365.3" y="708.4" width="2.6" height="2.6"/><rect x="1360.1" y="708.3" width="2.6" height="2.6"/><rect x="1360.0" y="701.3" width="2.6" height="2.6"/><rect x="1363.2" y="704.8" width="2.6" height="2.6"/><rect x="1352.9" y="690.9" width="2.6" height="2.6"/><rect x="1370.8" y="711.2" width="2.6" height="2.6"/><rect x="1353.4" y="694.9" width="2.6" height="2.6"/><rect x="1372.4" y="712.7" width="2.6" height="2.6"/><rect x="1355.3" y="693.5" width="2.6" height="2.6"/><rect x="1371.4" y="709.6" width="2.6" height="2.6"/><rect x="1355.7" y="692.4" width="2.6" height="2.6"/><rect x="1359.7" y="700.5" width="2.6" height="2.6"/><rect x="1360.0" y="700.4" width="2.6" height="2.6"/><rect x="1351.4" y="693.5" width="2.6" height="2.6"/><rect x="1371.4" y="711.9" width="2.6" height="2.6"/><rect x="1369.1" y="709.4" width="2.6" height="2.6"/><rect x="1366.4" y="705.9" width="2.6" height="2.6"/><rect x="1362.5" y="701.1" width="2.6" height="2.6"/><rect x="1361.9" y="702.5" width="2.6" height="2.6"/><rect x="1365.8" y="711.0" width="2.6" height="2.6"/><rect x="1357.4" y="703.0" width="2.6" height="2.6"/><rect x="1356.6" y="697.3" width="2.6" height="2.6"/><rect x="1363.0" y="707.2" width="2.6" height="2.6"/><rect x="1361.6" y="705.3" width="2.6" height="2.6"/><rect x="1363.3" y="701.2" width="2.6" height="2.6"/><rect x="1372.1" y="712.7" width="2.6" height="2.6"/><rect x="1357.7" y="698.8" width="2.6" height="2.6"/><rect x="1356.4" y="699.5" width="2.6" height="2.6"/><rect x="1350.5" y="693.5" width="2.6" height="2.6"/><rect x="1374.2" y="707.7" width="2.6" height="2.6"/><rect x="1365.6" y="706.8" width="2.6" height="2.6"/><rect x="1392.4" y="717.5" width="2.6" height="2.6"/><rect x="1392.9" y="715.4" width="2.6" height="2.6"/><rect x="1378.7" y="711.2" width="2.6" height="2.6"/><rect x="1394.0" y="716.6" width="2.6" height="2.6"/><rect x="1377.6" y="711.5" width="2.6" height="2.6"/><rect x="1393.7" y="721.4" width="2.6" height="2.6"/><rect x="1399.0" y="720.1" width="2.6" height="2.6"/><rect x="1375.1" y="714.6" width="2.6" height="2.6"/><rect x="1392.3" y="717.2" width="2.6" height="2.6"/><rect x="1394.6" y="714.3" width="2.6" height="2.6"/><rect x="1387.7" y="711.2" width="2.6" height="2.6"/><rect x="1390.7" y="714.8" width="2.6" height="2.6"/><rect x="1391.0" y="714.6" width="2.6" height="2.6"/><rect x="1393.5" y="716.1" width="2.6" height="2.6"/><rect x="1387.8" y="718.1" width="2.6" height="2.6"/><rect x="1383.6" y="717.3" width="2.6" height="2.6"/><rect x="1384.7" y="713.5" width="2.6" height="2.6"/><rect x="1383.3" y="714.5" width="2.6" height="2.6"/><rect x="1385.1" y="711.2" width="2.6" height="2.6"/><rect x="1373.9" y="718.0" width="2.6" height="2.6"/><rect x="1373.0" y="712.6" width="2.6" height="2.6"/><rect x="1385.3" y="713.3" width="2.6" height="2.6"/><rect x="1388.9" y="715.3" width="2.6" height="2.6"/><rect x="1372.5" y="714.3" width="2.6" height="2.6"/><rect x="1396.0" y="720.0" width="2.6" height="2.6"/><rect x="1385.4" y="715.0" width="2.6" height="2.6"/><rect x="1380.3" y="719.5" width="2.6" height="2.6"/><rect x="1395.0" y="719.8" width="2.6" height="2.6"/><rect x="1379.1" y="714.3" width="2.6" height="2.6"/><rect x="1393.5" y="721.4" width="2.6" height="2.6"/><rect x="1385.6" y="714.5" width="2.6" height="2.6"/><rect x="1394.1" y="718.9" width="2.6" height="2.6"/><rect x="1396.0" y="718.9" width="2.6" height="2.6"/><rect x="1388.9" y="715.6" width="2.6" height="2.6"/><rect x="1399.6" y="718.3" width="2.6" height="2.6"/><rect x="1377.0" y="711.2" width="2.6" height="2.6"/><rect x="1374.1" y="713.2" width="2.6" height="2.6"/><rect x="1394.8" y="717.0" width="2.6" height="2.6"/><rect x="1391.8" y="712.1" width="2.6" height="2.6"/><rect x="1397.9" y="719.4" width="2.6" height="2.6"/><rect x="1388.8" y="719.2" width="2.6" height="2.6"/><rect x="1383.6" y="717.3" width="2.6" height="2.6"/><rect x="1378.5" y="717.8" width="2.6" height="2.6"/><rect x="1376.1" y="712.0" width="2.6" height="2.6"/><rect x="1379.1" y="712.6" width="2.6" height="2.6"/><rect x="1380.8" y="717.4" width="2.6" height="2.6"/><rect x="1384.4" y="716.2" width="2.6" height="2.6"/><rect x="1392.5" y="715.9" width="2.6" height="2.6"/><rect x="1380.3" y="720.3" width="2.6" height="2.6"/><rect x="1381.8" y="712.9" width="2.6" height="2.6"/><rect x="1388.7" y="718.4" width="2.6" height="2.6"/><rect x="1389.2" y="718.2" width="2.6" height="2.6"/><rect x="1390.0" y="716.5" width="2.6" height="2.6"/><rect x="1375.7" y="714.2" width="2.6" height="2.6"/><rect x="1387.6" y="717.3" width="2.6" height="2.6"/><rect x="1389.0" y="718.4" width="2.6" height="2.6"/><rect x="1397.6" y="716.6" width="2.6" height="2.6"/><rect x="1388.6" y="716.3" width="2.6" height="2.6"/><rect x="1379.9" y="714.9" width="2.6" height="2.6"/><rect x="1379.9" y="713.2" width="2.6" height="2.6"/><rect x="1384.2" y="716.8" width="2.6" height="2.6"/><rect x="1377.9" y="713.3" width="2.6" height="2.6"/><rect x="1375.9" y="714.2" width="2.6" height="2.6"/><rect x="1382.8" y="717.4" width="2.6" height="2.6"/><rect x="1393.8" y="715.3" width="2.6" height="2.6"/><rect x="1383.0" y="716.8" width="2.6" height="2.6"/><rect x="1393.2" y="719.6" width="2.6" height="2.6"/><rect x="1398.0" y="717.1" width="2.6" height="2.6"/><rect x="1378.7" y="717.3" width="2.6" height="2.6"/><rect x="1391.2" y="716.7" width="2.6" height="2.6"/><rect x="1413.8" y="715.3" width="2.6" height="2.6"/><rect x="1432.6" y="712.1" width="2.6" height="2.6"/><rect x="1412.9" y="714.9" width="2.6" height="2.6"/><rect x="1418.6" y="711.7" width="2.6" height="2.6"/><rect x="1407.7" y="718.0" width="2.6" height="2.6"/><rect x="1425.3" y="714.6" width="2.6" height="2.6"/><rect x="1420.7" y="717.7" width="2.6" height="2.6"/><rect x="1415.8" y="715.1" width="2.6" height="2.6"/><rect x="1402.4" y="718.3" width="2.6" height="2.6"/><rect x="1430.4" y="713.0" width="2.6" height="2.6"/><rect x="1419.8" y="713.1" width="2.6" height="2.6"/><rect x="1410.9" y="717.9" width="2.6" height="2.6"/><rect x="1409.6" y="714.1" width="2.6" height="2.6"/><rect x="1429.6" y="715.1" width="2.6" height="2.6"/><rect x="1426.1" y="715.1" width="2.6" height="2.6"/><rect x="1403.5" y="715.7" width="2.6" height="2.6"/><rect x="1401.8" y="719.5" width="2.6" height="2.6"/><rect x="1419.6" y="715.7" width="2.6" height="2.6"/><rect x="1429.5" y="709.3" width="2.6" height="2.6"/><rect x="1408.4" y="715.5" width="2.6" height="2.6"/><rect x="1435.8" y="710.0" width="2.6" height="2.6"/><rect x="1401.0" y="716.5" width="2.6" height="2.6"/><rect x="1435.8" y="709.8" width="2.6" height="2.6"/><rect x="1405.3" y="722.4" width="2.6" height="2.6"/><rect x="1423.0" y="710.0" width="2.6" height="2.6"/><rect x="1411.7" y="720.1" width="2.6" height="2.6"/><rect x="1403.9" y="719.4" width="2.6" height="2.6"/><rect x="1436.7" y="714.0" width="2.6" height="2.6"/><rect x="1423.2" y="712.3" width="2.6" height="2.6"/><rect x="1409.4" y="714.8" width="2.6" height="2.6"/><rect x="1403.2" y="718.9" width="2.6" height="2.6"/><rect x="1422.3" y="713.3" width="2.6" height="2.6"/><rect x="1412.9" y="716.7" width="2.6" height="2.6"/><rect x="1434.5" y="712.7" width="2.6" height="2.6"/><rect x="1409.4" y="718.4" width="2.6" height="2.6"/><rect x="1424.7" y="715.8" width="2.6" height="2.6"/><rect x="1419.1" y="716.3" width="2.6" height="2.6"/><rect x="1405.0" y="722.3" width="2.6" height="2.6"/><rect x="1406.3" y="717.5" width="2.6" height="2.6"/><rect x="1418.0" y="717.4" width="2.6" height="2.6"/><rect x="1420.0" y="713.2" width="2.6" height="2.6"/><rect x="1415.8" y="709.8" width="2.6" height="2.6"/><rect x="1401.5" y="718.8" width="2.6" height="2.6"/><rect x="1411.4" y="715.7" width="2.6" height="2.6"/><rect x="1404.3" y="714.4" width="2.6" height="2.6"/><rect x="1404.0" y="715.4" width="2.6" height="2.6"/><rect x="1411.2" y="718.4" width="2.6" height="2.6"/><rect x="1403.1" y="715.1" width="2.6" height="2.6"/><rect x="1425.2" y="713.3" width="2.6" height="2.6"/><rect x="1405.0" y="715.3" width="2.6" height="2.6"/><rect x="1423.9" y="712.4" width="2.6" height="2.6"/><rect x="1406.2" y="718.6" width="2.6" height="2.6"/><rect x="1415.0" y="716.9" width="2.6" height="2.6"/><rect x="1420.5" y="715.6" width="2.6" height="2.6"/><rect x="1419.2" y="710.5" width="2.6" height="2.6"/><rect x="1403.7" y="720.6" width="2.6" height="2.6"/><rect x="1413.0" y="720.2" width="2.6" height="2.6"/><rect x="1433.1" y="708.6" width="2.6" height="2.6"/><rect x="1426.9" y="708.0" width="2.6" height="2.6"/><rect x="1420.6" y="712.8" width="2.6" height="2.6"/><rect x="1404.2" y="717.9" width="2.6" height="2.6"/><rect x="1432.2" y="712.0" width="2.6" height="2.6"/><rect x="1411.1" y="713.6" width="2.6" height="2.6"/><rect x="1404.0" y="719.7" width="2.6" height="2.6"/><rect x="1426.0" y="713.7" width="2.6" height="2.6"/><rect x="1431.1" y="706.9" width="2.6" height="2.6"/><rect x="1412.1" y="718.5" width="2.6" height="2.6"/><rect x="1426.1" y="715.7" width="2.6" height="2.6"/><rect x="1413.3" y="714.8" width="2.6" height="2.6"/><rect x="1430.6" y="712.5" width="2.6" height="2.6"/><rect x="1417.0" y="715.6" width="2.6" height="2.6"/><rect x="1411.2" y="714.1" width="2.6" height="2.6"/><rect x="1418.7" y="714.1" width="2.6" height="2.6"/><rect x="1411.6" y="710.9" width="2.6" height="2.6"/><rect x="1424.3" y="708.8" width="2.6" height="2.6"/><rect x="1428.4" y="714.6" width="2.6" height="2.6"/><rect x="1419.9" y="712.7" width="2.6" height="2.6"/><rect x="1432.6" y="712.3" width="2.6" height="2.6"/><rect x="1429.1" y="711.3" width="2.6" height="2.6"/><rect x="1407.3" y="718.1" width="2.6" height="2.6"/><rect x="1436.2" y="714.2" width="2.6" height="2.6"/><rect x="1419.5" y="715.2" width="2.6" height="2.6"/><rect x="1419.6" y="711.6" width="2.6" height="2.6"/><rect x="1420.1" y="713.3" width="2.6" height="2.6"/><rect x="1403.4" y="719.1" width="2.6" height="2.6"/><rect x="1404.8" y="717.2" width="2.6" height="2.6"/><rect x="1423.8" y="710.1" width="2.6" height="2.6"/><rect x="1424.4" y="709.4" width="2.6" height="2.6"/><rect x="1434.0" y="710.8" width="2.6" height="2.6"/><rect x="1408.6" y="716.9" width="2.6" height="2.6"/><rect x="1428.8" y="713.5" width="2.6" height="2.6"/><rect x="1428.7" y="714.3" width="2.6" height="2.6"/><rect x="1404.4" y="712.6" width="2.6" height="2.6"/><rect x="1427.0" y="711.3" width="2.6" height="2.6"/><rect x="1449.2" y="711.6" width="2.6" height="2.6"/><rect x="1465.8" y="718.9" width="2.6" height="2.6"/><rect x="1460.7" y="716.2" width="2.6" height="2.6"/><rect x="1459.4" y="714.8" width="2.6" height="2.6"/><rect x="1451.2" y="714.9" width="2.6" height="2.6"/><rect x="1464.1" y="715.8" width="2.6" height="2.6"/><rect x="1458.3" y="713.3" width="2.6" height="2.6"/><rect x="1460.9" y="718.1" width="2.6" height="2.6"/><rect x="1452.6" y="714.9" width="2.6" height="2.6"/><rect x="1464.0" y="718.0" width="2.6" height="2.6"/><rect x="1459.7" y="711.9" width="2.6" height="2.6"/><rect x="1441.0" y="711.5" width="2.6" height="2.6"/><rect x="1447.1" y="711.9" width="2.6" height="2.6"/><rect x="1449.2" y="709.1" width="2.6" height="2.6"/><rect x="1467.0" y="718.5" width="2.6" height="2.6"/><rect x="1440.4" y="710.4" width="2.6" height="2.6"/><rect x="1439.4" y="708.7" width="2.6" height="2.6"/><rect x="1444.7" y="711.3" width="2.6" height="2.6"/><rect x="1448.9" y="718.4" width="2.6" height="2.6"/><rect x="1461.4" y="719.9" width="2.6" height="2.6"/><rect x="1454.2" y="713.1" width="2.6" height="2.6"/><rect x="1454.7" y="716.0" width="2.6" height="2.6"/><rect x="1445.4" y="718.7" width="2.6" height="2.6"/><rect x="1459.0" y="715.6" width="2.6" height="2.6"/><rect x="1461.5" y="718.5" width="2.6" height="2.6"/><rect x="1446.9" y="713.5" width="2.6" height="2.6"/><rect x="1442.1" y="705.0" width="2.6" height="2.6"/><rect x="1461.1" y="720.6" width="2.6" height="2.6"/><rect x="1465.8" y="718.9" width="2.6" height="2.6"/><rect x="1436.7" y="711.6" width="2.6" height="2.6"/><rect x="1444.1" y="715.0" width="2.6" height="2.6"/><rect x="1445.4" y="713.5" width="2.6" height="2.6"/><rect x="1458.0" y="713.1" width="2.6" height="2.6"/><rect x="1446.0" y="711.4" width="2.6" height="2.6"/><rect x="1459.4" y="715.2" width="2.6" height="2.6"/><rect x="1451.9" y="710.8" width="2.6" height="2.6"/><rect x="1450.7" y="713.9" width="2.6" height="2.6"/><rect x="1450.6" y="714.7" width="2.6" height="2.6"/><rect x="1454.8" y="717.2" width="2.6" height="2.6"/><rect x="1462.1" y="722.1" width="2.6" height="2.6"/><rect x="1462.3" y="718.7" width="2.6" height="2.6"/><rect x="1442.6" y="709.0" width="2.6" height="2.6"/><rect x="1445.0" y="711.8" width="2.6" height="2.6"/><rect x="1441.9" y="704.2" width="2.6" height="2.6"/><rect x="1437.1" y="708.6" width="2.6" height="2.6"/><rect x="1454.3" y="717.0" width="2.6" height="2.6"/><rect x="1439.6" y="712.0" width="2.6" height="2.6"/><rect x="1464.8" y="716.4" width="2.6" height="2.6"/><rect x="1446.7" y="712.3" width="2.6" height="2.6"/><rect x="1465.6" y="720.0" width="2.6" height="2.6"/><rect x="1454.4" y="715.6" width="2.6" height="2.6"/><rect x="1453.3" y="714.1" width="2.6" height="2.6"/><rect x="1457.3" y="721.9" width="2.6" height="2.6"/><rect x="1439.8" y="710.2" width="2.6" height="2.6"/><rect x="1447.1" y="716.1" width="2.6" height="2.6"/><rect x="1465.8" y="718.6" width="2.6" height="2.6"/><rect x="1442.6" y="717.6" width="2.6" height="2.6"/><rect x="1444.3" y="713.1" width="2.6" height="2.6"/><rect x="1454.2" y="713.0" width="2.6" height="2.6"/><rect x="1464.4" y="720.7" width="2.6" height="2.6"/><rect x="1465.1" y="719.8" width="2.6" height="2.6"/><rect x="1462.0" y="716.1" width="2.6" height="2.6"/><rect x="1438.5" y="705.2" width="2.6" height="2.6"/><rect x="1443.5" y="714.9" width="2.6" height="2.6"/><rect x="1448.2" y="711.7" width="2.6" height="2.6"/><rect x="1458.4" y="715.5" width="2.6" height="2.6"/><rect x="1455.2" y="720.1" width="2.6" height="2.6"/><rect x="1437.8" y="713.4" width="2.6" height="2.6"/><rect x="1458.0" y="715.5" width="2.6" height="2.6"/><rect x="1438.6" y="711.6" width="2.6" height="2.6"/><rect x="1466.8" y="719.8" width="2.6" height="2.6"/><rect x="1461.5" y="714.7" width="2.6" height="2.6"/><rect x="1465.4" y="721.3" width="2.6" height="2.6"/><rect x="1445.3" y="711.1" width="2.6" height="2.6"/><rect x="1451.3" y="718.3" width="2.6" height="2.6"/><rect x="1457.1" y="715.5" width="2.6" height="2.6"/><rect x="1463.0" y="715.1" width="2.6" height="2.6"/><rect x="1462.0" y="719.2" width="2.6" height="2.6"/><rect x="1442.5" y="712.0" width="2.6" height="2.6"/><rect x="1470.0" y="730.4" width="2.6" height="2.6"/><rect x="1466.5" y="732.0" width="2.6" height="2.6"/><rect x="1464.9" y="729.3" width="2.6" height="2.6"/><rect x="1470.6" y="722.4" width="2.6" height="2.6"/><rect x="1467.4" y="728.5" width="2.6" height="2.6"/><rect x="1464.0" y="719.7" width="2.6" height="2.6"/><rect x="1465.7" y="722.3" width="2.6" height="2.6"/><rect x="1466.6" y="724.8" width="2.6" height="2.6"/><rect x="1475.5" y="736.9" width="2.6" height="2.6"/><rect x="1464.0" y="723.6" width="2.6" height="2.6"/><rect x="1469.7" y="731.8" width="2.6" height="2.6"/><rect x="1466.3" y="727.3" width="2.6" height="2.6"/><rect x="1467.9" y="724.1" width="2.6" height="2.6"/><rect x="1468.2" y="731.9" width="2.6" height="2.6"/><rect x="1467.6" y="720.6" width="2.6" height="2.6"/><rect x="1469.0" y="734.1" width="2.6" height="2.6"/><rect x="1468.1" y="728.6" width="2.6" height="2.6"/><rect x="1472.6" y="739.9" width="2.6" height="2.6"/><rect x="1467.5" y="729.6" width="2.6" height="2.6"/><rect x="1470.8" y="721.8" width="2.6" height="2.6"/><rect x="1466.5" y="726.4" width="2.6" height="2.6"/><rect x="1470.3" y="736.1" width="2.6" height="2.6"/><rect x="1469.0" y="732.6" width="2.6" height="2.6"/><rect x="1468.2" y="728.9" width="2.6" height="2.6"/><rect x="1471.1" y="734.9" width="2.6" height="2.6"/><rect x="1471.0" y="733.2" width="2.6" height="2.6"/><rect x="1469.0" y="732.3" width="2.6" height="2.6"/><rect x="1473.2" y="734.7" width="2.6" height="2.6"/><rect x="1469.8" y="733.8" width="2.6" height="2.6"/><rect x="1471.2" y="731.8" width="2.6" height="2.6"/><rect x="1468.5" y="729.1" width="2.6" height="2.6"/><rect x="1463.6" y="732.1" width="2.6" height="2.6"/><rect x="1474.3" y="729.9" width="2.6" height="2.6"/><rect x="1468.0" y="726.2" width="2.6" height="2.6"/><rect x="1467.2" y="735.5" width="2.6" height="2.6"/><rect x="1471.5" y="723.6" width="2.6" height="2.6"/><rect x="1477.2" y="725.6" width="2.6" height="2.6"/><rect x="1474.6" y="738.4" width="2.6" height="2.6"/><rect x="1469.8" y="737.8" width="2.6" height="2.6"/><rect x="1471.8" y="722.5" width="2.6" height="2.6"/><rect x="1461.8" y="721.6" width="2.6" height="2.6"/><rect x="1472.3" y="724.7" width="2.6" height="2.6"/><rect x="1469.4" y="732.6" width="2.6" height="2.6"/><rect x="1471.4" y="738.9" width="2.6" height="2.6"/><rect x="1467.5" y="720.5" width="2.6" height="2.6"/><rect x="1467.8" y="719.7" width="2.6" height="2.6"/><rect x="1469.3" y="730.3" width="2.6" height="2.6"/><rect x="1468.6" y="732.8" width="2.6" height="2.6"/><rect x="1464.6" y="728.8" width="2.6" height="2.6"/><rect x="1473.6" y="739.1" width="2.6" height="2.6"/><rect x="1467.0" y="731.1" width="2.6" height="2.6"/><rect x="1468.3" y="724.6" width="2.6" height="2.6"/><rect x="1468.5" y="724.3" width="2.6" height="2.6"/><rect x="1466.5" y="726.3" width="2.6" height="2.6"/><rect x="1416.9" y="588.9" width="2.6" height="2.6"/><rect x="1417.6" y="597.1" width="2.6" height="2.6"/><rect x="1417.5" y="591.2" width="2.6" height="2.6"/><rect x="1415.0" y="611.7" width="2.6" height="2.6"/><rect x="1412.0" y="600.3" width="2.6" height="2.6"/><rect x="1408.4" y="600.5" width="2.6" height="2.6"/><rect x="1412.7" y="615.7" width="2.6" height="2.6"/><rect x="1413.3" y="610.2" width="2.6" height="2.6"/><rect x="1416.2" y="588.8" width="2.6" height="2.6"/><rect x="1414.2" y="613.2" width="2.6" height="2.6"/><rect x="1417.1" y="597.5" width="2.6" height="2.6"/><rect x="1411.7" y="595.5" width="2.6" height="2.6"/><rect x="1416.4" y="588.3" width="2.6" height="2.6"/><rect x="1414.6" y="598.1" width="2.6" height="2.6"/><rect x="1411.4" y="617.5" width="2.6" height="2.6"/><rect x="1412.3" y="615.2" width="2.6" height="2.6"/><rect x="1414.0" y="600.4" width="2.6" height="2.6"/><rect x="1415.4" y="591.1" width="2.6" height="2.6"/><rect x="1417.0" y="612.2" width="2.6" height="2.6"/><rect x="1412.4" y="611.8" width="2.6" height="2.6"/><rect x="1414.6" y="590.4" width="2.6" height="2.6"/><rect x="1411.2" y="613.2" width="2.6" height="2.6"/><rect x="1416.9" y="595.0" width="2.6" height="2.6"/><rect x="1411.0" y="613.7" width="2.6" height="2.6"/><rect x="1413.6" y="587.5" width="2.6" height="2.6"/><rect x="1415.7" y="618.0" width="2.6" height="2.6"/><rect x="1410.6" y="611.9" width="2.6" height="2.6"/><rect x="1409.2" y="605.0" width="2.6" height="2.6"/><rect x="1412.7" y="616.0" width="2.6" height="2.6"/><rect x="1408.7" y="616.7" width="2.6" height="2.6"/><rect x="1412.5" y="594.3" width="2.6" height="2.6"/><rect x="1418.0" y="597.9" width="2.6" height="2.6"/><rect x="1408.9" y="588.9" width="2.6" height="2.6"/><rect x="1408.1" y="600.3" width="2.6" height="2.6"/><rect x="1407.7" y="602.2" width="2.6" height="2.6"/><rect x="1417.0" y="609.5" width="2.6" height="2.6"/><rect x="1414.6" y="597.9" width="2.6" height="2.6"/><rect x="1414.0" y="600.3" width="2.6" height="2.6"/><rect x="1416.2" y="615.1" width="2.6" height="2.6"/><rect x="1411.9" y="596.8" width="2.6" height="2.6"/><rect x="1416.6" y="605.5" width="2.6" height="2.6"/><rect x="1414.7" y="600.2" width="2.6" height="2.6"/><rect x="1415.2" y="590.6" width="2.6" height="2.6"/><rect x="1413.6" y="597.1" width="2.6" height="2.6"/><rect x="1412.4" y="609.5" width="2.6" height="2.6"/><rect x="1414.1" y="610.1" width="2.6" height="2.6"/><rect x="1414.0" y="609.8" width="2.6" height="2.6"/><rect x="1413.9" y="613.0" width="2.6" height="2.6"/><rect x="1414.6" y="605.0" width="2.6" height="2.6"/><rect x="1414.1" y="599.7" width="2.6" height="2.6"/><rect x="1411.2" y="613.9" width="2.6" height="2.6"/><rect x="1411.9" y="606.8" width="2.6" height="2.6"/><rect x="1414.9" y="595.7" width="2.6" height="2.6"/><rect x="1411.7" y="603.0" width="2.6" height="2.6"/><rect x="1412.7" y="604.1" width="2.6" height="2.6"/><rect x="1411.0" y="602.1" width="2.6" height="2.6"/><rect x="1414.9" y="607.3" width="2.6" height="2.6"/><rect x="1412.8" y="605.5" width="2.6" height="2.6"/><rect x="1417.3" y="587.8" width="2.6" height="2.6"/><rect x="1411.8" y="617.6" width="2.6" height="2.6"/><rect x="1416.0" y="591.1" width="2.6" height="2.6"/><rect x="1415.1" y="594.5" width="2.6" height="2.6"/><rect x="1416.1" y="588.3" width="2.6" height="2.6"/><rect x="1411.8" y="602.5" width="2.6" height="2.6"/><rect x="1413.9" y="599.3" width="2.6" height="2.6"/><rect x="1412.6" y="593.7" width="2.6" height="2.6"/><rect x="1414.3" y="595.1" width="2.6" height="2.6"/><rect x="1416.1" y="597.7" width="2.6" height="2.6"/><rect x="1413.0" y="597.4" width="2.6" height="2.6"/><rect x="1413.0" y="588.0" width="2.6" height="2.6"/><rect x="1417.0" y="603.0" width="2.6" height="2.6"/><rect x="1414.6" y="587.6" width="2.6" height="2.6"/><rect x="1408.6" y="601.1" width="2.6" height="2.6"/><rect x="1412.3" y="593.7" width="2.6" height="2.6"/><rect x="1419.3" y="591.8" width="2.6" height="2.6"/><rect x="1414.7" y="603.0" width="2.6" height="2.6"/><rect x="1408.6" y="624.3" width="2.6" height="2.6"/><rect x="1405.9" y="630.4" width="2.6" height="2.6"/><rect x="1407.0" y="631.2" width="2.6" height="2.6"/><rect x="1407.2" y="624.9" width="2.6" height="2.6"/><rect x="1401.7" y="633.4" width="2.6" height="2.6"/><rect x="1400.9" y="633.6" width="2.6" height="2.6"/><rect x="1403.2" y="632.6" width="2.6" height="2.6"/><rect x="1410.8" y="621.9" width="2.6" height="2.6"/><rect x="1400.5" y="633.2" width="2.6" height="2.6"/><rect x="1401.1" y="632.5" width="2.6" height="2.6"/><rect x="1402.4" y="636.5" width="2.6" height="2.6"/><rect x="1411.6" y="624.7" width="2.6" height="2.6"/><rect x="1410.6" y="623.4" width="2.6" height="2.6"/><rect x="1404.6" y="623.3" width="2.6" height="2.6"/><rect x="1407.8" y="620.2" width="2.6" height="2.6"/><rect x="1410.9" y="621.0" width="2.6" height="2.6"/><rect x="1401.5" y="628.0" width="2.6" height="2.6"/><rect x="1403.7" y="626.5" width="2.6" height="2.6"/><rect x="1412.2" y="623.8" width="2.6" height="2.6"/><rect x="1404.9" y="627.5" width="2.6" height="2.6"/><rect x="1409.0" y="620.0" width="2.6" height="2.6"/><rect x="1413.6" y="621.2" width="2.6" height="2.6"/><rect x="1400.7" y="628.0" width="2.6" height="2.6"/><rect x="1410.5" y="619.5" width="2.6" height="2.6"/><rect x="1403.0" y="626.1" width="2.6" height="2.6"/><rect x="1409.6" y="617.3" width="2.6" height="2.6"/><rect x="1403.3" y="628.2" width="2.6" height="2.6"/><rect x="1410.9" y="619.5" width="2.6" height="2.6"/><rect x="1406.4" y="630.0" width="2.6" height="2.6"/><rect x="1408.2" y="629.6" width="2.6" height="2.6"/><rect x="1403.2" y="622.7" width="2.6" height="2.6"/><rect x="1410.6" y="628.4" width="2.6" height="2.6"/><rect x="1401.0" y="636.9" width="2.6" height="2.6"/><rect x="1405.8" y="634.3" width="2.6" height="2.6"/><rect x="1405.1" y="630.4" width="2.6" height="2.6"/><rect x="1397.1" y="633.5" width="2.6" height="2.6"/><rect x="1410.1" y="622.6" width="2.6" height="2.6"/><rect x="1406.5" y="629.5" width="2.6" height="2.6"/><rect x="1402.0" y="632.1" width="2.6" height="2.6"/><rect x="1410.0" y="622.6" width="2.6" height="2.6"/><rect x="1409.1" y="627.5" width="2.6" height="2.6"/><rect x="1404.4" y="631.8" width="2.6" height="2.6"/><rect x="1405.9" y="640.5" width="2.6" height="2.6"/><rect x="1402.6" y="633.0" width="2.6" height="2.6"/><rect x="1403.1" y="625.3" width="2.6" height="2.6"/><rect x="1402.4" y="636.6" width="2.6" height="2.6"/><rect x="1411.2" y="618.3" width="2.6" height="2.6"/><rect x="1408.0" y="627.9" width="2.6" height="2.6"/><rect x="1411.2" y="620.4" width="2.6" height="2.6"/><rect x="1405.1" y="626.3" width="2.6" height="2.6"/><rect x="1406.2" y="626.0" width="2.6" height="2.6"/><rect x="1410.3" y="626.2" width="2.6" height="2.6"/><rect x="1407.4" y="625.3" width="2.6" height="2.6"/><rect x="1407.9" y="619.0" width="2.6" height="2.6"/><rect x="1393.5" y="660.1" width="2.6" height="2.6"/><rect x="1399.4" y="643.7" width="2.6" height="2.6"/><rect x="1393.7" y="654.2" width="2.6" height="2.6"/><rect x="1396.8" y="648.5" width="2.6" height="2.6"/><rect x="1399.3" y="639.8" width="2.6" height="2.6"/><rect x="1400.2" y="641.9" width="2.6" height="2.6"/><rect x="1395.8" y="645.5" width="2.6" height="2.6"/><rect x="1396.7" y="660.8" width="2.6" height="2.6"/><rect x="1392.8" y="659.7" width="2.6" height="2.6"/><rect x="1399.5" y="653.1" width="2.6" height="2.6"/><rect x="1400.3" y="645.3" width="2.6" height="2.6"/><rect x="1396.9" y="636.7" width="2.6" height="2.6"/><rect x="1397.0" y="650.9" width="2.6" height="2.6"/><rect x="1399.6" y="638.1" width="2.6" height="2.6"/><rect x="1398.2" y="652.8" width="2.6" height="2.6"/><rect x="1396.2" y="642.9" width="2.6" height="2.6"/><rect x="1399.3" y="643.5" width="2.6" height="2.6"/><rect x="1394.0" y="658.2" width="2.6" height="2.6"/><rect x="1395.1" y="647.9" width="2.6" height="2.6"/><rect x="1392.6" y="660.1" width="2.6" height="2.6"/><rect x="1393.9" y="655.6" width="2.6" height="2.6"/><rect x="1402.9" y="639.2" width="2.6" height="2.6"/><rect x="1393.4" y="653.4" width="2.6" height="2.6"/><rect x="1391.4" y="654.9" width="2.6" height="2.6"/><rect x="1394.4" y="644.4" width="2.6" height="2.6"/><rect x="1399.7" y="657.6" width="2.6" height="2.6"/><rect x="1396.1" y="647.9" width="2.6" height="2.6"/><rect x="1396.7" y="642.4" width="2.6" height="2.6"/><rect x="1397.4" y="637.2" width="2.6" height="2.6"/><rect x="1396.7" y="640.0" width="2.6" height="2.6"/><rect x="1396.7" y="658.1" width="2.6" height="2.6"/><rect x="1401.6" y="640.8" width="2.6" height="2.6"/><rect x="1398.9" y="639.0" width="2.6" height="2.6"/><rect x="1395.0" y="642.1" width="2.6" height="2.6"/><rect x="1398.5" y="649.4" width="2.6" height="2.6"/><rect x="1392.4" y="650.4" width="2.6" height="2.6"/><rect x="1400.6" y="652.1" width="2.6" height="2.6"/><rect x="1398.6" y="637.5" width="2.6" height="2.6"/><rect x="1399.4" y="642.6" width="2.6" height="2.6"/><rect x="1402.1" y="640.6" width="2.6" height="2.6"/><rect x="1397.3" y="647.8" width="2.6" height="2.6"/><rect x="1394.6" y="647.4" width="2.6" height="2.6"/><rect x="1393.7" y="648.9" width="2.6" height="2.6"/><rect x="1395.2" y="643.3" width="2.6" height="2.6"/><rect x="1398.9" y="660.2" width="2.6" height="2.6"/><rect x="1391.7" y="660.0" width="2.6" height="2.6"/><rect x="1396.1" y="647.2" width="2.6" height="2.6"/><rect x="1398.5" y="642.8" width="2.6" height="2.6"/><rect x="1404.1" y="641.2" width="2.6" height="2.6"/><rect x="1392.0" y="647.6" width="2.6" height="2.6"/><rect x="1398.1" y="647.8" width="2.6" height="2.6"/><rect x="1402.0" y="639.7" width="2.6" height="2.6"/><rect x="1394.3" y="655.5" width="2.6" height="2.6"/><rect x="1400.0" y="641.4" width="2.6" height="2.6"/><rect x="1393.2" y="635.1" width="2.6" height="2.6"/><rect x="1392.9" y="650.6" width="2.6" height="2.6"/><rect x="1395.1" y="646.3" width="2.6" height="2.6"/><rect x="1393.4" y="658.9" width="2.6" height="2.6"/><rect x="1393.8" y="640.9" width="2.6" height="2.6"/><rect x="1398.8" y="637.5" width="2.6" height="2.6"/><rect x="1397.0" y="645.9" width="2.6" height="2.6"/><rect x="1396.1" y="660.8" width="2.6" height="2.6"/><rect x="1391.0" y="662.5" width="2.6" height="2.6"/><rect x="1397.9" y="676.5" width="2.6" height="2.6"/><rect x="1397.6" y="678.6" width="2.6" height="2.6"/><rect x="1398.5" y="674.1" width="2.6" height="2.6"/><rect x="1394.1" y="682.8" width="2.6" height="2.6"/><rect x="1393.8" y="664.7" width="2.6" height="2.6"/><rect x="1394.9" y="669.1" width="2.6" height="2.6"/><rect x="1391.6" y="681.6" width="2.6" height="2.6"/><rect x="1400.3" y="687.1" width="2.6" height="2.6"/><rect x="1393.4" y="664.9" width="2.6" height="2.6"/><rect x="1400.5" y="674.6" width="2.6" height="2.6"/><rect x="1400.8" y="691.2" width="2.6" height="2.6"/><rect x="1395.7" y="667.4" width="2.6" height="2.6"/><rect x="1397.0" y="664.4" width="2.6" height="2.6"/><rect x="1401.1" y="686.7" width="2.6" height="2.6"/><rect x="1387.5" y="662.5" width="2.6" height="2.6"/><rect x="1394.9" y="669.0" width="2.6" height="2.6"/><rect x="1394.6" y="669.1" width="2.6" height="2.6"/><rect x="1399.5" y="685.0" width="2.6" height="2.6"/><rect x="1402.2" y="687.7" width="2.6" height="2.6"/><rect x="1395.0" y="660.8" width="2.6" height="2.6"/><rect x="1400.5" y="678.8" width="2.6" height="2.6"/><rect x="1399.6" y="676.2" width="2.6" height="2.6"/><rect x="1393.8" y="664.5" width="2.6" height="2.6"/><rect x="1390.8" y="664.0" width="2.6" height="2.6"/><rect x="1394.4" y="664.2" width="2.6" height="2.6"/><rect x="1392.9" y="678.5" width="2.6" height="2.6"/><rect x="1392.9" y="672.4" width="2.6" height="2.6"/><rect x="1395.9" y="668.1" width="2.6" height="2.6"/><rect x="1395.8" y="678.5" width="2.6" height="2.6"/><rect x="1398.2" y="673.8" width="2.6" height="2.6"/><rect x="1393.9" y="679.2" width="2.6" height="2.6"/><rect x="1395.1" y="666.4" width="2.6" height="2.6"/><rect x="1398.5" y="678.5" width="2.6" height="2.6"/><rect x="1395.7" y="683.2" width="2.6" height="2.6"/><rect x="1395.9" y="661.1" width="2.6" height="2.6"/><rect x="1397.5" y="679.2" width="2.6" height="2.6"/><rect x="1402.0" y="685.4" width="2.6" height="2.6"/><rect x="1394.8" y="669.9" width="2.6" height="2.6"/><rect x="1398.2" y="668.1" width="2.6" height="2.6"/><rect x="1395.3" y="667.7" width="2.6" height="2.6"/><rect x="1400.6" y="683.9" width="2.6" height="2.6"/><rect x="1395.3" y="668.7" width="2.6" height="2.6"/><rect x="1394.4" y="687.4" width="2.6" height="2.6"/><rect x="1398.4" y="667.8" width="2.6" height="2.6"/><rect x="1394.5" y="663.0" width="2.6" height="2.6"/><rect x="1399.4" y="687.0" width="2.6" height="2.6"/><rect x="1399.2" y="681.4" width="2.6" height="2.6"/><rect x="1395.8" y="682.2" width="2.6" height="2.6"/><rect x="1397.4" y="665.2" width="2.6" height="2.6"/><rect x="1394.8" y="682.4" width="2.6" height="2.6"/><rect x="1396.0" y="679.1" width="2.6" height="2.6"/><rect x="1394.3" y="669.0" width="2.6" height="2.6"/><rect x="1395.9" y="661.5" width="2.6" height="2.6"/><rect x="1401.8" y="688.7" width="2.6" height="2.6"/><rect x="1394.8" y="678.3" width="2.6" height="2.6"/><rect x="1398.2" y="676.5" width="2.6" height="2.6"/><rect x="1400.8" y="668.4" width="2.6" height="2.6"/><rect x="1395.5" y="676.1" width="2.6" height="2.6"/><rect x="1394.7" y="660.8" width="2.6" height="2.6"/><rect x="1396.3" y="680.2" width="2.6" height="2.6"/><rect x="1402.2" y="675.4" width="2.6" height="2.6"/><rect x="1397.6" y="684.4" width="2.6" height="2.6"/><rect x="1390.7" y="664.3" width="2.6" height="2.6"/><rect x="1396.7" y="679.3" width="2.6" height="2.6"/><rect x="1398.4" y="680.7" width="2.6" height="2.6"/><rect x="1396.5" y="674.7" width="2.6" height="2.6"/><rect x="1399.4" y="686.4" width="2.6" height="2.6"/><rect x="1394.9" y="664.6" width="2.6" height="2.6"/><rect x="1400.7" y="688.3" width="2.6" height="2.6"/><rect x="1398.5" y="682.4" width="2.6" height="2.6"/><rect x="1397.2" y="689.7" width="2.6" height="2.6"/><rect x="1401.2" y="685.1" width="2.6" height="2.6"/><rect x="1398.4" y="662.7" width="2.6" height="2.6"/><rect x="1394.8" y="671.5" width="2.6" height="2.6"/><rect x="1392.2" y="665.8" width="2.6" height="2.6"/><rect x="1396.5" y="660.6" width="2.6" height="2.6"/><rect x="1399.6" y="661.7" width="2.6" height="2.6"/><rect x="1405.5" y="698.1" width="2.6" height="2.6"/><rect x="1403.0" y="703.3" width="2.6" height="2.6"/><rect x="1399.3" y="694.6" width="2.6" height="2.6"/><rect x="1400.5" y="696.3" width="2.6" height="2.6"/><rect x="1398.2" y="693.0" width="2.6" height="2.6"/><rect x="1406.7" y="698.1" width="2.6" height="2.6"/><rect x="1408.3" y="699.0" width="2.6" height="2.6"/><rect x="1398.5" y="693.3" width="2.6" height="2.6"/><rect x="1407.6" y="701.9" width="2.6" height="2.6"/><rect x="1400.0" y="699.0" width="2.6" height="2.6"/><rect x="1399.3" y="694.4" width="2.6" height="2.6"/><rect x="1410.4" y="701.3" width="2.6" height="2.6"/><rect x="1404.0" y="696.9" width="2.6" height="2.6"/><rect x="1403.7" y="694.6" width="2.6" height="2.6"/><rect x="1405.6" y="695.7" width="2.6" height="2.6"/><rect x="1404.6" y="693.4" width="2.6" height="2.6"/><rect x="1399.7" y="695.1" width="2.6" height="2.6"/><rect x="1404.0" y="691.9" width="2.6" height="2.6"/><rect x="1400.0" y="692.5" width="2.6" height="2.6"/><rect x="1399.9" y="695.6" width="2.6" height="2.6"/><rect x="1404.9" y="700.8" width="2.6" height="2.6"/><rect x="1399.6" y="696.3" width="2.6" height="2.6"/><rect x="1403.9" y="702.7" width="2.6" height="2.6"/><rect x="1401.4" y="702.6" width="2.6" height="2.6"/><rect x="1402.7" y="699.6" width="2.6" height="2.6"/><rect x="1404.2" y="696.7" width="2.6" height="2.6"/><rect x="1403.3" y="692.6" width="2.6" height="2.6"/><rect x="1402.9" y="700.6" width="2.6" height="2.6"/><rect x="1403.8" y="702.6" width="2.6" height="2.6"/><rect x="1406.7" y="696.7" width="2.6" height="2.6"/><rect x="1403.1" y="697.4" width="2.6" height="2.6"/><rect x="1402.7" y="696.0" width="2.6" height="2.6"/><rect x="1402.2" y="695.7" width="2.6" height="2.6"/><rect x="1395.5" y="694.3" width="2.6" height="2.6"/><rect x="1422.3" y="615.6" width="2.6" height="2.6"/><rect x="1418.2" y="594.5" width="2.6" height="2.6"/><rect x="1424.4" y="621.9" width="2.6" height="2.6"/><rect x="1424.7" y="615.1" width="2.6" height="2.6"/><rect x="1421.8" y="598.8" width="2.6" height="2.6"/><rect x="1426.5" y="622.8" width="2.6" height="2.6"/><rect x="1424.2" y="623.4" width="2.6" height="2.6"/><rect x="1421.3" y="598.3" width="2.6" height="2.6"/><rect x="1417.7" y="591.0" width="2.6" height="2.6"/><rect x="1424.4" y="624.9" width="2.6" height="2.6"/><rect x="1423.6" y="610.6" width="2.6" height="2.6"/><rect x="1421.9" y="625.5" width="2.6" height="2.6"/><rect x="1421.6" y="617.1" width="2.6" height="2.6"/><rect x="1423.0" y="610.3" width="2.6" height="2.6"/><rect x="1419.5" y="597.1" width="2.6" height="2.6"/><rect x="1424.8" y="615.9" width="2.6" height="2.6"/><rect x="1419.8" y="626.8" width="2.6" height="2.6"/><rect x="1424.5" y="629.1" width="2.6" height="2.6"/><rect x="1416.5" y="592.4" width="2.6" height="2.6"/><rect x="1418.3" y="603.3" width="2.6" height="2.6"/><rect x="1423.0" y="628.7" width="2.6" height="2.6"/><rect x="1423.9" y="620.1" width="2.6" height="2.6"/><rect x="1422.7" y="627.6" width="2.6" height="2.6"/><rect x="1416.3" y="590.2" width="2.6" height="2.6"/><rect x="1421.8" y="590.1" width="2.6" height="2.6"/><rect x="1425.2" y="628.1" width="2.6" height="2.6"/><rect x="1422.4" y="605.6" width="2.6" height="2.6"/><rect x="1425.8" y="613.1" width="2.6" height="2.6"/><rect x="1424.3" y="625.8" width="2.6" height="2.6"/><rect x="1416.8" y="602.1" width="2.6" height="2.6"/><rect x="1422.0" y="615.3" width="2.6" height="2.6"/><rect x="1421.5" y="615.7" width="2.6" height="2.6"/><rect x="1423.3" y="626.1" width="2.6" height="2.6"/><rect x="1425.7" y="602.4" width="2.6" height="2.6"/><rect x="1418.5" y="596.1" width="2.6" height="2.6"/><rect x="1419.7" y="615.1" width="2.6" height="2.6"/><rect x="1421.7" y="619.4" width="2.6" height="2.6"/><rect x="1418.8" y="594.4" width="2.6" height="2.6"/><rect x="1428.4" y="622.2" width="2.6" height="2.6"/><rect x="1420.0" y="621.9" width="2.6" height="2.6"/><rect x="1422.6" y="610.9" width="2.6" height="2.6"/><rect x="1422.3" y="623.0" width="2.6" height="2.6"/><rect x="1424.9" y="615.9" width="2.6" height="2.6"/><rect x="1420.2" y="595.1" width="2.6" height="2.6"/><rect x="1421.9" y="624.6" width="2.6" height="2.6"/><rect x="1424.6" y="620.8" width="2.6" height="2.6"/><rect x="1412.4" y="591.0" width="2.6" height="2.6"/><rect x="1418.9" y="590.2" width="2.6" height="2.6"/><rect x="1423.3" y="628.4" width="2.6" height="2.6"/><rect x="1423.4" y="602.5" width="2.6" height="2.6"/><rect x="1418.9" y="610.8" width="2.6" height="2.6"/><rect x="1424.1" y="614.3" width="2.6" height="2.6"/><rect x="1423.2" y="628.7" width="2.6" height="2.6"/><rect x="1422.1" y="599.2" width="2.6" height="2.6"/><rect x="1419.4" y="593.6" width="2.6" height="2.6"/><rect x="1422.6" y="593.4" width="2.6" height="2.6"/><rect x="1421.0" y="606.1" width="2.6" height="2.6"/><rect x="1417.6" y="590.3" width="2.6" height="2.6"/><rect x="1424.0" y="625.4" width="2.6" height="2.6"/><rect x="1419.1" y="589.4" width="2.6" height="2.6"/><rect x="1420.7" y="598.6" width="2.6" height="2.6"/><rect x="1420.7" y="605.7" width="2.6" height="2.6"/><rect x="1422.9" y="605.2" width="2.6" height="2.6"/><rect x="1422.2" y="604.6" width="2.6" height="2.6"/><rect x="1424.2" y="628.4" width="2.6" height="2.6"/><rect x="1417.7" y="596.0" width="2.6" height="2.6"/><rect x="1418.5" y="602.9" width="2.6" height="2.6"/><rect x="1419.7" y="618.9" width="2.6" height="2.6"/><rect x="1419.7" y="603.3" width="2.6" height="2.6"/><rect x="1424.5" y="627.2" width="2.6" height="2.6"/><rect x="1418.1" y="601.5" width="2.6" height="2.6"/><rect x="1422.0" y="610.3" width="2.6" height="2.6"/><rect x="1417.8" y="605.6" width="2.6" height="2.6"/><rect x="1423.1" y="617.8" width="2.6" height="2.6"/><rect x="1419.5" y="611.7" width="2.6" height="2.6"/><rect x="1423.8" y="618.2" width="2.6" height="2.6"/><rect x="1420.4" y="591.0" width="2.6" height="2.6"/><rect x="1418.1" y="592.5" width="2.6" height="2.6"/><rect x="1418.3" y="595.6" width="2.6" height="2.6"/><rect x="1424.6" y="615.6" width="2.6" height="2.6"/><rect x="1416.0" y="598.1" width="2.6" height="2.6"/><rect x="1419.2" y="598.2" width="2.6" height="2.6"/><rect x="1421.4" y="616.9" width="2.6" height="2.6"/><rect x="1421.8" y="612.4" width="2.6" height="2.6"/><rect x="1418.7" y="617.0" width="2.6" height="2.6"/><rect x="1423.1" y="605.6" width="2.6" height="2.6"/><rect x="1428.8" y="643.5" width="2.6" height="2.6"/><rect x="1428.0" y="632.6" width="2.6" height="2.6"/><rect x="1423.0" y="642.5" width="2.6" height="2.6"/><rect x="1425.3" y="650.5" width="2.6" height="2.6"/><rect x="1427.8" y="657.1" width="2.6" height="2.6"/><rect x="1428.2" y="641.5" width="2.6" height="2.6"/><rect x="1424.1" y="638.4" width="2.6" height="2.6"/><rect x="1423.5" y="637.2" width="2.6" height="2.6"/><rect x="1425.2" y="646.4" width="2.6" height="2.6"/><rect x="1426.3" y="660.3" width="2.6" height="2.6"/><rect x="1431.0" y="659.0" width="2.6" height="2.6"/><rect x="1428.4" y="656.2" width="2.6" height="2.6"/><rect x="1430.1" y="660.2" width="2.6" height="2.6"/><rect x="1431.7" y="656.6" width="2.6" height="2.6"/><rect x="1428.8" y="643.3" width="2.6" height="2.6"/><rect x="1425.4" y="643.7" width="2.6" height="2.6"/><rect x="1424.0" y="639.2" width="2.6" height="2.6"/><rect x="1423.3" y="634.5" width="2.6" height="2.6"/><rect x="1431.5" y="656.7" width="2.6" height="2.6"/><rect x="1427.5" y="639.1" width="2.6" height="2.6"/><rect x="1430.1" y="655.6" width="2.6" height="2.6"/><rect x="1427.1" y="636.5" width="2.6" height="2.6"/><rect x="1428.3" y="639.9" width="2.6" height="2.6"/><rect x="1427.2" y="632.4" width="2.6" height="2.6"/><rect x="1429.1" y="655.4" width="2.6" height="2.6"/><rect x="1424.9" y="636.7" width="2.6" height="2.6"/><rect x="1427.7" y="655.2" width="2.6" height="2.6"/><rect x="1426.0" y="637.4" width="2.6" height="2.6"/><rect x="1425.2" y="632.8" width="2.6" height="2.6"/><rect x="1429.6" y="651.8" width="2.6" height="2.6"/><rect x="1427.2" y="644.8" width="2.6" height="2.6"/><rect x="1432.0" y="658.7" width="2.6" height="2.6"/><rect x="1425.3" y="643.5" width="2.6" height="2.6"/><rect x="1423.5" y="646.6" width="2.6" height="2.6"/><rect x="1426.7" y="648.3" width="2.6" height="2.6"/><rect x="1426.7" y="640.9" width="2.6" height="2.6"/><rect x="1428.8" y="659.1" width="2.6" height="2.6"/><rect x="1431.4" y="655.7" width="2.6" height="2.6"/><rect x="1425.8" y="647.6" width="2.6" height="2.6"/><rect x="1422.4" y="637.1" width="2.6" height="2.6"/><rect x="1424.6" y="635.5" width="2.6" height="2.6"/><rect x="1427.3" y="647.7" width="2.6" height="2.6"/><rect x="1425.3" y="635.4" width="2.6" height="2.6"/><rect x="1432.9" y="649.4" width="2.6" height="2.6"/><rect x="1432.2" y="649.7" width="2.6" height="2.6"/><rect x="1422.6" y="647.3" width="2.6" height="2.6"/><rect x="1426.9" y="645.4" width="2.6" height="2.6"/><rect x="1425.9" y="657.3" width="2.6" height="2.6"/><rect x="1426.2" y="645.1" width="2.6" height="2.6"/><rect x="1426.3" y="636.9" width="2.6" height="2.6"/><rect x="1427.4" y="648.2" width="2.6" height="2.6"/><rect x="1426.0" y="637.0" width="2.6" height="2.6"/><rect x="1429.7" y="651.2" width="2.6" height="2.6"/><rect x="1429.2" y="649.0" width="2.6" height="2.6"/><rect x="1430.8" y="638.5" width="2.6" height="2.6"/><rect x="1431.8" y="650.6" width="2.6" height="2.6"/><rect x="1426.8" y="656.1" width="2.6" height="2.6"/><rect x="1430.2" y="653.4" width="2.6" height="2.6"/><rect x="1430.7" y="657.9" width="2.6" height="2.6"/><rect x="1428.5" y="660.3" width="2.6" height="2.6"/><rect x="1429.9" y="655.4" width="2.6" height="2.6"/><rect x="1426.6" y="651.5" width="2.6" height="2.6"/><rect x="1436.1" y="669.8" width="2.6" height="2.6"/><rect x="1432.0" y="669.6" width="2.6" height="2.6"/><rect x="1436.4" y="671.7" width="2.6" height="2.6"/><rect x="1435.4" y="679.7" width="2.6" height="2.6"/><rect x="1433.2" y="670.9" width="2.6" height="2.6"/><rect x="1430.5" y="663.1" width="2.6" height="2.6"/><rect x="1436.5" y="679.6" width="2.6" height="2.6"/><rect x="1429.6" y="666.3" width="2.6" height="2.6"/><rect x="1432.1" y="676.1" width="2.6" height="2.6"/><rect x="1434.9" y="669.1" width="2.6" height="2.6"/><rect x="1437.6" y="680.8" width="2.6" height="2.6"/><rect x="1435.6" y="671.2" width="2.6" height="2.6"/><rect x="1433.4" y="669.6" width="2.6" height="2.6"/><rect x="1432.4" y="676.3" width="2.6" height="2.6"/><rect x="1434.2" y="681.3" width="2.6" height="2.6"/><rect x="1436.8" y="676.7" width="2.6" height="2.6"/><rect x="1431.5" y="662.9" width="2.6" height="2.6"/><rect x="1434.8" y="661.8" width="2.6" height="2.6"/><rect x="1436.7" y="679.2" width="2.6" height="2.6"/><rect x="1431.5" y="664.8" width="2.6" height="2.6"/><rect x="1436.8" y="670.2" width="2.6" height="2.6"/><rect x="1435.0" y="679.5" width="2.6" height="2.6"/><rect x="1431.9" y="672.4" width="2.6" height="2.6"/><rect x="1436.4" y="676.0" width="2.6" height="2.6"/><rect x="1435.2" y="679.6" width="2.6" height="2.6"/><rect x="1434.0" y="668.9" width="2.6" height="2.6"/><rect x="1432.7" y="671.4" width="2.6" height="2.6"/><rect x="1436.5" y="675.5" width="2.6" height="2.6"/><rect x="1431.2" y="672.1" width="2.6" height="2.6"/><rect x="1428.9" y="661.6" width="2.6" height="2.6"/><rect x="1434.1" y="672.5" width="2.6" height="2.6"/><rect x="1436.1" y="681.5" width="2.6" height="2.6"/><rect x="1431.0" y="665.5" width="2.6" height="2.6"/><rect x="1430.0" y="664.6" width="2.6" height="2.6"/><rect x="1432.5" y="661.3" width="2.6" height="2.6"/><rect x="1433.2" y="666.4" width="2.6" height="2.6"/><rect x="1432.4" y="667.4" width="2.6" height="2.6"/><rect x="1437.2" y="679.9" width="2.6" height="2.6"/><rect x="1433.6" y="673.8" width="2.6" height="2.6"/><rect x="1433.8" y="662.5" width="2.6" height="2.6"/><rect x="1431.3" y="662.7" width="2.6" height="2.6"/><rect x="1434.9" y="672.3" width="2.6" height="2.6"/><rect x="1431.2" y="674.9" width="2.6" height="2.6"/><rect x="1436.9" y="680.1" width="2.6" height="2.6"/><rect x="1471.3" y="736.2" width="2.6" height="2.6"/><rect x="1468.3" y="758.3" width="2.6" height="2.6"/><rect x="1470.2" y="746.1" width="2.6" height="2.6"/><rect x="1472.8" y="740.6" width="2.6" height="2.6"/><rect x="1468.6" y="752.1" width="2.6" height="2.6"/><rect x="1468.2" y="760.0" width="2.6" height="2.6"/><rect x="1469.8" y="754.8" width="2.6" height="2.6"/><rect x="1471.4" y="744.4" width="2.6" height="2.6"/><rect x="1468.4" y="756.7" width="2.6" height="2.6"/><rect x="1470.6" y="735.4" width="2.6" height="2.6"/><rect x="1470.9" y="741.7" width="2.6" height="2.6"/><rect x="1466.7" y="764.4" width="2.6" height="2.6"/><rect x="1467.4" y="769.0" width="2.6" height="2.6"/><rect x="1470.8" y="729.7" width="2.6" height="2.6"/><rect x="1471.8" y="729.7" width="2.6" height="2.6"/><rect x="1467.1" y="760.7" width="2.6" height="2.6"/><rect x="1470.0" y="728.3" width="2.6" height="2.6"/><rect x="1471.4" y="733.5" width="2.6" height="2.6"/><rect x="1469.1" y="748.3" width="2.6" height="2.6"/><rect x="1470.2" y="743.0" width="2.6" height="2.6"/><rect x="1468.6" y="769.7" width="2.6" height="2.6"/><rect x="1466.6" y="764.2" width="2.6" height="2.6"/><rect x="1465.2" y="766.2" width="2.6" height="2.6"/><rect x="1469.8" y="752.5" width="2.6" height="2.6"/><rect x="1470.3" y="742.0" width="2.6" height="2.6"/><rect x="1470.1" y="737.6" width="2.6" height="2.6"/><rect x="1468.7" y="741.9" width="2.6" height="2.6"/><rect x="1470.2" y="761.3" width="2.6" height="2.6"/><rect x="1472.3" y="732.0" width="2.6" height="2.6"/><rect x="1469.5" y="764.6" width="2.6" height="2.6"/><rect x="1470.7" y="738.4" width="2.6" height="2.6"/><rect x="1470.1" y="758.2" width="2.6" height="2.6"/><rect x="1468.0" y="753.1" width="2.6" height="2.6"/><rect x="1471.7" y="734.3" width="2.6" height="2.6"/><rect x="1469.7" y="728.7" width="2.6" height="2.6"/><rect x="1470.6" y="755.4" width="2.6" height="2.6"/><rect x="1470.7" y="742.3" width="2.6" height="2.6"/><rect x="1471.5" y="748.8" width="2.6" height="2.6"/><rect x="1471.1" y="731.3" width="2.6" height="2.6"/><rect x="1469.4" y="750.0" width="2.6" height="2.6"/><rect x="1468.9" y="739.1" width="2.6" height="2.6"/><rect x="1470.5" y="737.0" width="2.6" height="2.6"/><rect x="1467.5" y="743.5" width="2.6" height="2.6"/><rect x="1467.7" y="765.9" width="2.6" height="2.6"/><rect x="1470.1" y="752.0" width="2.6" height="2.6"/><rect x="1470.1" y="728.4" width="2.6" height="2.6"/><rect x="1471.9" y="733.1" width="2.6" height="2.6"/><rect x="1471.1" y="750.6" width="2.6" height="2.6"/><rect x="1470.3" y="740.6" width="2.6" height="2.6"/><rect x="1467.8" y="767.2" width="2.6" height="2.6"/><rect x="1468.3" y="763.3" width="2.6" height="2.6"/><rect x="1445.8" y="782.4" width="2.6" height="2.6"/><rect x="1445.3" y="779.9" width="2.6" height="2.6"/><rect x="1444.7" y="779.9" width="2.6" height="2.6"/><rect x="1460.6" y="773.2" width="2.6" height="2.6"/><rect x="1447.8" y="781.2" width="2.6" height="2.6"/><rect x="1445.6" y="783.1" width="2.6" height="2.6"/><rect x="1446.1" y="778.1" width="2.6" height="2.6"/><rect x="1453.2" y="778.1" width="2.6" height="2.6"/><rect x="1449.4" y="780.5" width="2.6" height="2.6"/><rect x="1455.4" y="778.0" width="2.6" height="2.6"/><rect x="1454.6" y="777.0" width="2.6" height="2.6"/><rect x="1446.1" y="780.5" width="2.6" height="2.6"/><rect x="1446.7" y="781.9" width="2.6" height="2.6"/><rect x="1455.4" y="778.8" width="2.6" height="2.6"/><rect x="1453.1" y="778.1" width="2.6" height="2.6"/><rect x="1456.3" y="776.5" width="2.6" height="2.6"/><rect x="1443.3" y="782.5" width="2.6" height="2.6"/><rect x="1464.6" y="770.8" width="2.6" height="2.6"/><rect x="1460.8" y="774.0" width="2.6" height="2.6"/><rect x="1447.7" y="781.0" width="2.6" height="2.6"/><rect x="1447.3" y="780.2" width="2.6" height="2.6"/><rect x="1444.7" y="783.0" width="2.6" height="2.6"/><rect x="1459.3" y="778.0" width="2.6" height="2.6"/><rect x="1453.4" y="776.8" width="2.6" height="2.6"/><rect x="1450.4" y="779.2" width="2.6" height="2.6"/><rect x="1460.6" y="774.2" width="2.6" height="2.6"/><rect x="1464.3" y="771.9" width="2.6" height="2.6"/><rect x="1444.1" y="783.4" width="2.6" height="2.6"/><rect x="1450.2" y="778.7" width="2.6" height="2.6"/><rect x="1458.6" y="773.3" width="2.6" height="2.6"/><rect x="1453.3" y="775.6" width="2.6" height="2.6"/><rect x="1447.4" y="779.7" width="2.6" height="2.6"/><rect x="1414.4" y="801.3" width="2.6" height="2.6"/><rect x="1437.0" y="788.0" width="2.6" height="2.6"/><rect x="1426.8" y="793.2" width="2.6" height="2.6"/><rect x="1436.9" y="788.6" width="2.6" height="2.6"/><rect x="1431.0" y="790.7" width="2.6" height="2.6"/><rect x="1440.5" y="784.5" width="2.6" height="2.6"/><rect x="1419.8" y="795.5" width="2.6" height="2.6"/><rect x="1435.4" y="785.5" width="2.6" height="2.6"/><rect x="1405.8" y="805.8" width="2.6" height="2.6"/><rect x="1416.7" y="800.6" width="2.6" height="2.6"/><rect x="1394.6" y="814.2" width="2.6" height="2.6"/><rect x="1395.3" y="813.6" width="2.6" height="2.6"/><rect x="1429.5" y="790.3" width="2.6" height="2.6"/><rect x="1422.2" y="796.3" width="2.6" height="2.6"/><rect x="1428.0" y="794.0" width="2.6" height="2.6"/><rect x="1410.0" y="805.9" width="2.6" height="2.6"/><rect x="1432.8" y="787.1" width="2.6" height="2.6"/><rect x="1418.0" y="798.7" width="2.6" height="2.6"/><rect x="1400.4" y="808.0" width="2.6" height="2.6"/><rect x="1403.7" y="806.3" width="2.6" height="2.6"/><rect x="1404.8" y="807.1" width="2.6" height="2.6"/><rect x="1419.5" y="798.1" width="2.6" height="2.6"/><rect x="1430.0" y="792.2" width="2.6" height="2.6"/><rect x="1420.8" y="797.7" width="2.6" height="2.6"/><rect x="1417.5" y="801.4" width="2.6" height="2.6"/><rect x="1429.6" y="792.9" width="2.6" height="2.6"/><rect x="1429.1" y="791.4" width="2.6" height="2.6"/><rect x="1400.8" y="808.6" width="2.6" height="2.6"/><rect x="1397.2" y="810.6" width="2.6" height="2.6"/><rect x="1398.0" y="810.1" width="2.6" height="2.6"/><rect x="1398.4" y="806.4" width="2.6" height="2.6"/><rect x="1428.1" y="792.9" width="2.6" height="2.6"/><rect x="1439.4" y="785.2" width="2.6" height="2.6"/><rect x="1441.2" y="782.5" width="2.6" height="2.6"/><rect x="1431.2" y="792.5" width="2.6" height="2.6"/><rect x="1435.0" y="787.7" width="2.6" height="2.6"/><rect x="1436.8" y="787.2" width="2.6" height="2.6"/><rect x="1436.5" y="786.5" width="2.6" height="2.6"/><rect x="1437.2" y="785.7" width="2.6" height="2.6"/><rect x="1441.8" y="786.5" width="2.6" height="2.6"/><rect x="1402.8" y="806.9" width="2.6" height="2.6"/><rect x="1428.8" y="793.6" width="2.6" height="2.6"/><rect x="1402.3" y="807.9" width="2.6" height="2.6"/><rect x="1395.8" y="812.2" width="2.6" height="2.6"/><rect x="1430.9" y="788.5" width="2.6" height="2.6"/><rect x="1440.9" y="785.5" width="2.6" height="2.6"/><rect x="1438.3" y="786.4" width="2.6" height="2.6"/><rect x="1410.3" y="804.0" width="2.6" height="2.6"/><rect x="1409.7" y="803.6" width="2.6" height="2.6"/><rect x="1431.6" y="788.5" width="2.6" height="2.6"/><rect x="1400.7" y="810.8" width="2.6" height="2.6"/><rect x="1413.0" y="803.3" width="2.6" height="2.6"/><rect x="1438.9" y="783.7" width="2.6" height="2.6"/><rect x="1418.2" y="800.1" width="2.6" height="2.6"/><rect x="1414.8" y="802.9" width="2.6" height="2.6"/><rect x="1416.5" y="799.4" width="2.6" height="2.6"/><rect x="1429.5" y="792.4" width="2.6" height="2.6"/><rect x="1442.5" y="783.4" width="2.6" height="2.6"/><rect x="1416.5" y="798.0" width="2.6" height="2.6"/><rect x="1433.2" y="790.8" width="2.6" height="2.6"/><rect x="1418.5" y="799.9" width="2.6" height="2.6"/><rect x="1420.6" y="797.9" width="2.6" height="2.6"/><rect x="1418.2" y="799.5" width="2.6" height="2.6"/><rect x="1418.6" y="800.9" width="2.6" height="2.6"/><rect x="1404.4" y="807.3" width="2.6" height="2.6"/><rect x="1430.3" y="791.6" width="2.6" height="2.6"/><rect x="1427.8" y="793.5" width="2.6" height="2.6"/><rect x="1427.7" y="791.2" width="2.6" height="2.6"/><rect x="1393.9" y="813.7" width="2.6" height="2.6"/><rect x="1295.6" y="694.4" width="2.6" height="2.6"/><rect x="1299.6" y="704.2" width="2.6" height="2.6"/><rect x="1300.1" y="705.8" width="2.6" height="2.6"/><rect x="1285.8" y="682.7" width="2.6" height="2.6"/><rect x="1286.6" y="679.1" width="2.6" height="2.6"/><rect x="1280.9" y="673.0" width="2.6" height="2.6"/><rect x="1287.1" y="680.5" width="2.6" height="2.6"/><rect x="1289.3" y="685.4" width="2.6" height="2.6"/><rect x="1301.9" y="702.4" width="2.6" height="2.6"/><rect x="1296.0" y="697.8" width="2.6" height="2.6"/><rect x="1277.1" y="667.8" width="2.6" height="2.6"/><rect x="1282.9" y="674.9" width="2.6" height="2.6"/><rect x="1288.9" y="686.3" width="2.6" height="2.6"/><rect x="1281.4" y="672.0" width="2.6" height="2.6"/><rect x="1284.4" y="676.5" width="2.6" height="2.6"/><rect x="1294.5" y="694.3" width="2.6" height="2.6"/><rect x="1298.0" y="700.5" width="2.6" height="2.6"/><rect x="1295.6" y="697.4" width="2.6" height="2.6"/><rect x="1284.6" y="677.3" width="2.6" height="2.6"/><rect x="1293.3" y="695.6" width="2.6" height="2.6"/><rect x="1291.9" y="694.1" width="2.6" height="2.6"/><rect x="1290.4" y="689.3" width="2.6" height="2.6"/><rect x="1287.8" y="684.0" width="2.6" height="2.6"/><rect x="1300.9" y="706.5" width="2.6" height="2.6"/><rect x="1278.7" y="670.7" width="2.6" height="2.6"/><rect x="1301.4" y="705.6" width="2.6" height="2.6"/><rect x="1297.5" y="695.9" width="2.6" height="2.6"/><rect x="1282.1" y="674.2" width="2.6" height="2.6"/><rect x="1290.9" y="689.1" width="2.6" height="2.6"/><rect x="1279.5" y="670.4" width="2.6" height="2.6"/><rect x="1299.7" y="703.9" width="2.6" height="2.6"/><rect x="1297.5" y="698.1" width="2.6" height="2.6"/><rect x="1279.4" y="674.8" width="2.6" height="2.6"/><rect x="1282.3" y="672.0" width="2.6" height="2.6"/><rect x="1279.1" y="671.7" width="2.6" height="2.6"/><rect x="1298.4" y="697.5" width="2.6" height="2.6"/><rect x="1286.3" y="680.2" width="2.6" height="2.6"/><rect x="1277.6" y="669.5" width="2.6" height="2.6"/><rect x="1289.3" y="687.7" width="2.6" height="2.6"/><rect x="1296.1" y="697.6" width="2.6" height="2.6"/><rect x="1282.2" y="675.9" width="2.6" height="2.6"/><rect x="1298.6" y="700.8" width="2.6" height="2.6"/><rect x="1295.9" y="695.6" width="2.6" height="2.6"/><rect x="1279.3" y="668.2" width="2.6" height="2.6"/><rect x="1296.2" y="697.5" width="2.6" height="2.6"/><rect x="1295.5" y="695.5" width="2.6" height="2.6"/><rect x="1302.4" y="708.6" width="2.6" height="2.6"/><rect x="1298.2" y="732.2" width="2.6" height="2.6"/><rect x="1297.0" y="740.1" width="2.6" height="2.6"/><rect x="1297.3" y="742.5" width="2.6" height="2.6"/><rect x="1297.1" y="732.5" width="2.6" height="2.6"/><rect x="1297.1" y="743.7" width="2.6" height="2.6"/><rect x="1298.3" y="737.5" width="2.6" height="2.6"/><rect x="1297.8" y="726.1" width="2.6" height="2.6"/><rect x="1299.3" y="723.2" width="2.6" height="2.6"/><rect x="1300.6" y="720.2" width="2.6" height="2.6"/><rect x="1299.7" y="719.1" width="2.6" height="2.6"/><rect x="1296.6" y="736.3" width="2.6" height="2.6"/><rect x="1297.6" y="740.5" width="2.6" height="2.6"/><rect x="1302.9" y="712.0" width="2.6" height="2.6"/><rect x="1297.4" y="737.8" width="2.6" height="2.6"/><rect x="1298.5" y="722.0" width="2.6" height="2.6"/><rect x="1296.1" y="730.6" width="2.6" height="2.6"/><rect x="1298.3" y="732.8" width="2.6" height="2.6"/><rect x="1298.2" y="729.4" width="2.6" height="2.6"/><rect x="1298.5" y="722.7" width="2.6" height="2.6"/><rect x="1298.3" y="736.9" width="2.6" height="2.6"/><rect x="1298.6" y="729.4" width="2.6" height="2.6"/><rect x="1296.5" y="746.4" width="2.6" height="2.6"/><rect x="1299.0" y="729.9" width="2.6" height="2.6"/><rect x="1301.9" y="710.5" width="2.6" height="2.6"/><rect x="1297.9" y="734.8" width="2.6" height="2.6"/><rect x="1302.0" y="717.1" width="2.6" height="2.6"/><rect x="1298.9" y="726.1" width="2.6" height="2.6"/><rect x="1297.9" y="743.1" width="2.6" height="2.6"/><rect x="1301.5" y="710.3" width="2.6" height="2.6"/><rect x="1298.4" y="731.6" width="2.6" height="2.6"/><rect x="1297.9" y="727.9" width="2.6" height="2.6"/><rect x="1297.5" y="733.2" width="2.6" height="2.6"/><rect x="1295.7" y="741.1" width="2.6" height="2.6"/><rect x="1296.6" y="738.3" width="2.6" height="2.6"/><rect x="1299.6" y="711.2" width="2.6" height="2.6"/><rect x="1301.4" y="720.6" width="2.6" height="2.6"/><rect x="1300.4" y="715.0" width="2.6" height="2.6"/><rect x="1299.0" y="723.3" width="2.6" height="2.6"/><rect x="1296.6" y="734.7" width="2.6" height="2.6"/><rect x="1252.5" y="776.1" width="2.6" height="2.6"/><rect x="1276.4" y="759.6" width="2.6" height="2.6"/><rect x="1276.7" y="759.3" width="2.6" height="2.6"/><rect x="1294.2" y="746.2" width="2.6" height="2.6"/><rect x="1289.9" y="748.9" width="2.6" height="2.6"/><rect x="1282.8" y="756.7" width="2.6" height="2.6"/><rect x="1294.6" y="747.6" width="2.6" height="2.6"/><rect x="1291.1" y="750.3" width="2.6" height="2.6"/><rect x="1292.2" y="750.1" width="2.6" height="2.6"/><rect x="1275.5" y="763.4" width="2.6" height="2.6"/><rect x="1292.1" y="745.6" width="2.6" height="2.6"/><rect x="1287.0" y="751.1" width="2.6" height="2.6"/><rect x="1251.6" y="775.4" width="2.6" height="2.6"/><rect x="1259.8" y="769.5" width="2.6" height="2.6"/><rect x="1279.1" y="756.8" width="2.6" height="2.6"/><rect x="1251.3" y="776.7" width="2.6" height="2.6"/><rect x="1284.9" y="755.4" width="2.6" height="2.6"/><rect x="1276.4" y="760.7" width="2.6" height="2.6"/><rect x="1270.2" y="763.9" width="2.6" height="2.6"/><rect x="1293.2" y="751.4" width="2.6" height="2.6"/><rect x="1276.8" y="757.5" width="2.6" height="2.6"/><rect x="1272.7" y="761.9" width="2.6" height="2.6"/><rect x="1263.2" y="770.6" width="2.6" height="2.6"/><rect x="1278.5" y="758.3" width="2.6" height="2.6"/><rect x="1268.0" y="765.9" width="2.6" height="2.6"/><rect x="1295.0" y="746.8" width="2.6" height="2.6"/><rect x="1279.5" y="756.8" width="2.6" height="2.6"/><rect x="1261.0" y="767.4" width="2.6" height="2.6"/><rect x="1291.6" y="749.1" width="2.6" height="2.6"/><rect x="1251.6" y="774.5" width="2.6" height="2.6"/><rect x="1257.6" y="772.6" width="2.6" height="2.6"/><rect x="1253.8" y="776.8" width="2.6" height="2.6"/><rect x="1294.0" y="747.0" width="2.6" height="2.6"/><rect x="1260.7" y="771.3" width="2.6" height="2.6"/><rect x="1289.8" y="752.2" width="2.6" height="2.6"/><rect x="1292.8" y="750.2" width="2.6" height="2.6"/><rect x="1264.5" y="767.7" width="2.6" height="2.6"/><rect x="1289.0" y="754.0" width="2.6" height="2.6"/><rect x="1284.9" y="755.1" width="2.6" height="2.6"/><rect x="1257.6" y="770.4" width="2.6" height="2.6"/><rect x="1275.9" y="760.3" width="2.6" height="2.6"/><rect x="1277.0" y="759.7" width="2.6" height="2.6"/><rect x="1292.4" y="748.7" width="2.6" height="2.6"/><rect x="1282.5" y="754.2" width="2.6" height="2.6"/><rect x="1278.3" y="756.0" width="2.6" height="2.6"/><rect x="1256.9" y="774.9" width="2.6" height="2.6"/><rect x="1255.3" y="774.6" width="2.6" height="2.6"/><rect x="1263.7" y="768.9" width="2.6" height="2.6"/><rect x="1269.9" y="763.6" width="2.6" height="2.6"/><rect x="1281.5" y="755.9" width="2.6" height="2.6"/><rect x="1266.9" y="766.2" width="2.6" height="2.6"/><rect x="1281.0" y="757.8" width="2.6" height="2.6"/><rect x="1250.6" y="776.1" width="2.6" height="2.6"/><rect x="1251.3" y="778.2" width="2.6" height="2.6"/><rect x="1251.0" y="774.1" width="2.6" height="2.6"/><rect x="1234.3" y="785.7" width="2.6" height="2.6"/><rect x="1226.1" y="789.4" width="2.6" height="2.6"/><rect x="1235.2" y="784.4" width="2.6" height="2.6"/><rect x="1232.0" y="788.7" width="2.6" height="2.6"/><rect x="1229.1" y="788.2" width="2.6" height="2.6"/><rect x="1236.1" y="784.3" width="2.6" height="2.6"/><rect x="1247.7" y="777.0" width="2.6" height="2.6"/><rect x="1237.3" y="780.6" width="2.6" height="2.6"/><rect x="1246.1" y="779.5" width="2.6" height="2.6"/><rect x="1231.5" y="786.3" width="2.6" height="2.6"/><rect x="1243.0" y="780.3" width="2.6" height="2.6"/><rect x="1221.2" y="790.0" width="2.6" height="2.6"/><rect x="1249.8" y="777.6" width="2.6" height="2.6"/><rect x="1235.8" y="785.7" width="2.6" height="2.6"/><rect x="1236.8" y="782.7" width="2.6" height="2.6"/><rect x="1234.1" y="785.0" width="2.6" height="2.6"/><rect x="1239.4" y="781.4" width="2.6" height="2.6"/><rect x="1224.2" y="790.1" width="2.6" height="2.6"/><rect x="1225.2" y="789.2" width="2.6" height="2.6"/><rect x="1235.3" y="785.7" width="2.6" height="2.6"/><rect x="1224.1" y="789.5" width="2.6" height="2.6"/><rect x="1249.5" y="776.9" width="2.6" height="2.6"/><rect x="1236.1" y="786.8" width="2.6" height="2.6"/><rect x="1221.3" y="790.7" width="2.6" height="2.6"/><rect x="1237.9" y="783.7" width="2.6" height="2.6"/><rect x="1227.1" y="788.6" width="2.6" height="2.6"/><rect x="1233.8" y="784.1" width="2.6" height="2.6"/><rect x="1248.0" y="776.2" width="2.6" height="2.6"/><rect x="1245.7" y="783.1" width="2.6" height="2.6"/><rect x="1245.6" y="778.8" width="2.6" height="2.6"/><rect x="1241.8" y="781.0" width="2.6" height="2.6"/><rect x="1222.1" y="792.1" width="2.6" height="2.6"/><rect x="1249.5" y="777.3" width="2.6" height="2.6"/><rect x="1223.8" y="789.3" width="2.6" height="2.6"/><rect x="1215.0" y="794.3" width="2.6" height="2.6"/><rect x="1175.2" y="803.1" width="2.6" height="2.6"/><rect x="1182.4" y="798.7" width="2.6" height="2.6"/><rect x="1209.4" y="794.0" width="2.6" height="2.6"/><rect x="1213.9" y="793.4" width="2.6" height="2.6"/><rect x="1192.8" y="796.0" width="2.6" height="2.6"/><rect x="1213.5" y="793.7" width="2.6" height="2.6"/><rect x="1177.0" y="800.5" width="2.6" height="2.6"/><rect x="1185.4" y="801.7" width="2.6" height="2.6"/><rect x="1174.6" y="800.9" width="2.6" height="2.6"/><rect x="1210.0" y="794.3" width="2.6" height="2.6"/><rect x="1190.6" y="797.5" width="2.6" height="2.6"/><rect x="1192.6" y="799.5" width="2.6" height="2.6"/><rect x="1195.3" y="797.4" width="2.6" height="2.6"/><rect x="1205.3" y="796.4" width="2.6" height="2.6"/><rect x="1217.6" y="794.9" width="2.6" height="2.6"/><rect x="1197.0" y="795.8" width="2.6" height="2.6"/><rect x="1199.5" y="795.1" width="2.6" height="2.6"/><rect x="1181.3" y="801.2" width="2.6" height="2.6"/><rect x="1193.4" y="799.8" width="2.6" height="2.6"/><rect x="1191.9" y="796.1" width="2.6" height="2.6"/><rect x="1204.1" y="795.8" width="2.6" height="2.6"/><rect x="1214.7" y="793.0" width="2.6" height="2.6"/><rect x="1177.2" y="801.0" width="2.6" height="2.6"/><rect x="1177.0" y="802.2" width="2.6" height="2.6"/><rect x="1192.1" y="800.0" width="2.6" height="2.6"/><rect x="1185.5" y="799.8" width="2.6" height="2.6"/><rect x="1216.0" y="793.5" width="2.6" height="2.6"/><rect x="1185.6" y="799.6" width="2.6" height="2.6"/><rect x="1193.9" y="797.3" width="2.6" height="2.6"/><rect x="1207.4" y="795.0" width="2.6" height="2.6"/><rect x="1190.8" y="796.0" width="2.6" height="2.6"/><rect x="1185.1" y="798.8" width="2.6" height="2.6"/><rect x="1199.0" y="797.5" width="2.6" height="2.6"/><rect x="1199.9" y="797.4" width="2.6" height="2.6"/><rect x="1178.7" y="799.1" width="2.6" height="2.6"/><rect x="1205.9" y="795.3" width="2.6" height="2.6"/><rect x="1219.3" y="793.1" width="2.6" height="2.6"/><rect x="1188.1" y="798.5" width="2.6" height="2.6"/><rect x="1174.1" y="802.3" width="2.6" height="2.6"/><rect x="1186.7" y="799.7" width="2.6" height="2.6"/><rect x="1180.6" y="798.6" width="2.6" height="2.6"/><rect x="1212.9" y="792.8" width="2.6" height="2.6"/><rect x="1207.0" y="795.4" width="2.6" height="2.6"/><rect x="1202.4" y="797.0" width="2.6" height="2.6"/><rect x="1206.1" y="795.3" width="2.6" height="2.6"/><rect x="1306.8" y="750.8" width="2.6" height="2.6"/><rect x="1314.6" y="768.2" width="2.6" height="2.6"/><rect x="1309.8" y="760.6" width="2.6" height="2.6"/><rect x="1306.8" y="753.1" width="2.6" height="2.6"/><rect x="1306.4" y="749.6" width="2.6" height="2.6"/><rect x="1308.2" y="755.7" width="2.6" height="2.6"/><rect x="1311.3" y="764.2" width="2.6" height="2.6"/><rect x="1316.8" y="776.1" width="2.6" height="2.6"/><rect x="1314.7" y="774.5" width="2.6" height="2.6"/><rect x="1310.7" y="763.8" width="2.6" height="2.6"/><rect x="1311.0" y="764.7" width="2.6" height="2.6"/><rect x="1317.7" y="775.0" width="2.6" height="2.6"/><rect x="1313.0" y="768.5" width="2.6" height="2.6"/><rect x="1315.4" y="772.1" width="2.6" height="2.6"/><rect x="1307.6" y="759.0" width="2.6" height="2.6"/><rect x="1317.7" y="775.8" width="2.6" height="2.6"/><rect x="1315.2" y="770.0" width="2.6" height="2.6"/><rect x="1313.9" y="771.4" width="2.6" height="2.6"/><rect x="1307.0" y="750.7" width="2.6" height="2.6"/><rect x="1314.1" y="769.2" width="2.6" height="2.6"/><rect x="1310.4" y="758.5" width="2.6" height="2.6"/><rect x="1310.7" y="759.7" width="2.6" height="2.6"/><rect x="1312.7" y="768.7" width="2.6" height="2.6"/><rect x="1312.0" y="763.8" width="2.6" height="2.6"/><rect x="1310.6" y="763.1" width="2.6" height="2.6"/><rect x="1309.2" y="757.2" width="2.6" height="2.6"/><rect x="1310.2" y="760.3" width="2.6" height="2.6"/><rect x="1317.5" y="776.3" width="2.6" height="2.6"/><rect x="1311.4" y="763.4" width="2.6" height="2.6"/><rect x="1306.4" y="749.9" width="2.6" height="2.6"/><rect x="1328.1" y="782.7" width="2.6" height="2.6"/><rect x="1344.3" y="791.9" width="2.6" height="2.6"/><rect x="1333.6" y="785.9" width="2.6" height="2.6"/><rect x="1324.0" y="780.9" width="2.6" height="2.6"/><rect x="1326.8" y="781.9" width="2.6" height="2.6"/><rect x="1330.9" y="784.1" width="2.6" height="2.6"/><rect x="1325.4" y="780.0" width="2.6" height="2.6"/><rect x="1331.8" y="784.5" width="2.6" height="2.6"/><rect x="1338.1" y="788.3" width="2.6" height="2.6"/><rect x="1335.5" y="786.9" width="2.6" height="2.6"/><rect x="1330.5" y="784.6" width="2.6" height="2.6"/><rect x="1328.1" y="780.4" width="2.6" height="2.6"/><rect x="1340.6" y="790.3" width="2.6" height="2.6"/><rect x="1316.8" y="778.4" width="2.6" height="2.6"/><rect x="1340.5" y="788.8" width="2.6" height="2.6"/><rect x="1330.8" y="785.0" width="2.6" height="2.6"/><rect x="1327.4" y="783.0" width="2.6" height="2.6"/><rect x="1333.8" y="788.0" width="2.6" height="2.6"/><rect x="1318.9" y="777.7" width="2.6" height="2.6"/><rect x="1324.0" y="783.4" width="2.6" height="2.6"/><rect x="1325.8" y="780.8" width="2.6" height="2.6"/><rect x="1343.6" y="791.2" width="2.6" height="2.6"/><rect x="1344.1" y="792.6" width="2.6" height="2.6"/><rect x="1321.8" y="780.2" width="2.6" height="2.6"/><rect x="1329.7" y="783.6" width="2.6" height="2.6"/><rect x="1340.9" y="791.9" width="2.6" height="2.6"/><rect x="1319.0" y="778.6" width="2.6" height="2.6"/><rect x="1325.8" y="781.9" width="2.6" height="2.6"/><rect x="1321.4" y="778.4" width="2.6" height="2.6"/><rect x="1337.1" y="788.6" width="2.6" height="2.6"/><rect x="1343.4" y="792.8" width="2.6" height="2.6"/><rect x="1368.4" y="792.3" width="2.6" height="2.6"/><rect x="1349.7" y="790.8" width="2.6" height="2.6"/><rect x="1377.3" y="791.1" width="2.6" height="2.6"/><rect x="1349.9" y="793.5" width="2.6" height="2.6"/><rect x="1370.4" y="794.3" width="2.6" height="2.6"/><rect x="1372.8" y="793.7" width="2.6" height="2.6"/><rect x="1345.6" y="793.0" width="2.6" height="2.6"/><rect x="1371.8" y="792.6" width="2.6" height="2.6"/><rect x="1344.9" y="791.6" width="2.6" height="2.6"/><rect x="1371.7" y="793.8" width="2.6" height="2.6"/><rect x="1358.2" y="792.4" width="2.6" height="2.6"/><rect x="1356.9" y="793.4" width="2.6" height="2.6"/><rect x="1358.2" y="790.0" width="2.6" height="2.6"/><rect x="1352.9" y="793.5" width="2.6" height="2.6"/><rect x="1361.0" y="792.4" width="2.6" height="2.6"/><rect x="1356.2" y="792.0" width="2.6" height="2.6"/><rect x="1362.0" y="789.6" width="2.6" height="2.6"/><rect x="1376.2" y="791.6" width="2.6" height="2.6"/><rect x="1374.2" y="793.0" width="2.6" height="2.6"/><rect x="1380.4" y="792.5" width="2.6" height="2.6"/><rect x="1375.2" y="790.8" width="2.6" height="2.6"/><rect x="1378.5" y="793.6" width="2.6" height="2.6"/><rect x="1359.0" y="792.0" width="2.6" height="2.6"/><rect x="1345.1" y="791.5" width="2.6" height="2.6"/><rect x="1344.8" y="792.2" width="2.6" height="2.6"/><rect x="1381.2" y="791.6" width="2.6" height="2.6"/><rect x="1345.4" y="794.6" width="2.6" height="2.6"/><rect x="1358.0" y="792.7" width="2.6" height="2.6"/><rect x="1369.5" y="790.9" width="2.6" height="2.6"/><rect x="1362.7" y="794.0" width="2.6" height="2.6"/><rect x="1372.7" y="793.4" width="2.6" height="2.6"/><rect x="1362.3" y="790.7" width="2.6" height="2.6"/><rect x="1362.9" y="791.7" width="2.6" height="2.6"/><rect x="1362.3" y="790.8" width="2.6" height="2.6"/><rect x="1371.8" y="792.6" width="2.6" height="2.6"/><rect x="1357.1" y="792.6" width="2.6" height="2.6"/><rect x="1394.6" y="806.1" width="2.6" height="2.6"/><rect x="1387.0" y="801.7" width="2.6" height="2.6"/><rect x="1396.9" y="808.0" width="2.6" height="2.6"/><rect x="1389.0" y="800.1" width="2.6" height="2.6"/><rect x="1392.0" y="805.8" width="2.6" height="2.6"/><rect x="1383.8" y="791.7" width="2.6" height="2.6"/><rect x="1383.2" y="793.3" width="2.6" height="2.6"/><rect x="1400.3" y="809.3" width="2.6" height="2.6"/><rect x="1396.0" y="806.8" width="2.6" height="2.6"/><rect x="1394.7" y="807.7" width="2.6" height="2.6"/><rect x="1384.5" y="794.2" width="2.6" height="2.6"/><rect x="1396.4" y="811.4" width="2.6" height="2.6"/><rect x="1386.3" y="796.3" width="2.6" height="2.6"/><rect x="1391.4" y="802.4" width="2.6" height="2.6"/><rect x="1390.6" y="802.8" width="2.6" height="2.6"/><rect x="1388.9" y="803.1" width="2.6" height="2.6"/><rect x="1399.6" y="813.1" width="2.6" height="2.6"/><rect x="1397.6" y="812.2" width="2.6" height="2.6"/><rect x="1387.3" y="801.5" width="2.6" height="2.6"/><rect x="1393.6" y="804.1" width="2.6" height="2.6"/><rect x="1387.5" y="798.4" width="2.6" height="2.6"/><rect x="1394.9" y="806.1" width="2.6" height="2.6"/><rect x="1389.6" y="803.7" width="2.6" height="2.6"/><rect x="1392.7" y="806.6" width="2.6" height="2.6"/><rect x="1381.6" y="792.5" width="2.6" height="2.6"/><rect x="1399.1" y="810.5" width="2.6" height="2.6"/><rect x="1397.0" y="809.9" width="2.6" height="2.6"/><rect x="1399.6" y="809.9" width="2.6" height="2.6"/><rect x="1237.4" y="668.4" width="2.6" height="2.6"/><rect x="1236.5" y="681.3" width="2.6" height="2.6"/><rect x="1241.4" y="670.5" width="2.6" height="2.6"/><rect x="1241.5" y="668.5" width="2.6" height="2.6"/><rect x="1234.8" y="685.6" width="2.6" height="2.6"/><rect x="1240.7" y="656.3" width="2.6" height="2.6"/><rect x="1239.0" y="675.4" width="2.6" height="2.6"/><rect x="1238.8" y="678.6" width="2.6" height="2.6"/><rect x="1233.4" y="686.2" width="2.6" height="2.6"/><rect x="1241.5" y="669.1" width="2.6" height="2.6"/><rect x="1241.7" y="664.0" width="2.6" height="2.6"/><rect x="1237.1" y="686.3" width="2.6" height="2.6"/><rect x="1239.4" y="678.6" width="2.6" height="2.6"/><rect x="1240.8" y="661.2" width="2.6" height="2.6"/><rect x="1238.6" y="675.9" width="2.6" height="2.6"/><rect x="1243.6" y="661.9" width="2.6" height="2.6"/><rect x="1241.9" y="664.5" width="2.6" height="2.6"/><rect x="1238.8" y="682.4" width="2.6" height="2.6"/><rect x="1235.1" y="681.8" width="2.6" height="2.6"/><rect x="1237.6" y="667.8" width="2.6" height="2.6"/><rect x="1238.3" y="674.9" width="2.6" height="2.6"/><rect x="1239.4" y="676.3" width="2.6" height="2.6"/><rect x="1237.4" y="688.5" width="2.6" height="2.6"/><rect x="1241.8" y="654.6" width="2.6" height="2.6"/><rect x="1240.6" y="669.9" width="2.6" height="2.6"/><rect x="1233.9" y="687.7" width="2.6" height="2.6"/><rect x="1245.2" y="655.5" width="2.6" height="2.6"/><rect x="1239.9" y="678.1" width="2.6" height="2.6"/><rect x="1235.2" y="685.0" width="2.6" height="2.6"/><rect x="1242.0" y="659.4" width="2.6" height="2.6"/><rect x="1242.8" y="664.3" width="2.6" height="2.6"/><rect x="1242.7" y="655.9" width="2.6" height="2.6"/><rect x="1238.3" y="674.0" width="2.6" height="2.6"/><rect x="1234.7" y="689.1" width="2.6" height="2.6"/><rect x="1239.4" y="668.2" width="2.6" height="2.6"/><rect x="1239.4" y="678.6" width="2.6" height="2.6"/><rect x="1240.8" y="659.9" width="2.6" height="2.6"/><rect x="1245.8" y="657.0" width="2.6" height="2.6"/><rect x="1243.9" y="660.0" width="2.6" height="2.6"/><rect x="1243.8" y="656.6" width="2.6" height="2.6"/><rect x="1235.9" y="688.9" width="2.6" height="2.6"/><rect x="1236.7" y="679.9" width="2.6" height="2.6"/><rect x="1242.1" y="656.5" width="2.6" height="2.6"/><rect x="1245.1" y="658.5" width="2.6" height="2.6"/><rect x="1233.0" y="687.5" width="2.6" height="2.6"/><rect x="1238.3" y="682.8" width="2.6" height="2.6"/><rect x="1240.8" y="673.9" width="2.6" height="2.6"/><rect x="1239.5" y="679.3" width="2.6" height="2.6"/><rect x="1236.2" y="685.5" width="2.6" height="2.6"/><rect x="1243.1" y="666.3" width="2.6" height="2.6"/><rect x="1233.7" y="689.8" width="2.6" height="2.6"/><rect x="1242.2" y="667.8" width="2.6" height="2.6"/><rect x="1241.4" y="662.3" width="2.6" height="2.6"/><rect x="1240.5" y="667.8" width="2.6" height="2.6"/><rect x="1240.5" y="672.6" width="2.6" height="2.6"/><rect x="1243.7" y="665.8" width="2.6" height="2.6"/><rect x="1236.0" y="696.8" width="2.6" height="2.6"/><rect x="1233.8" y="713.8" width="2.6" height="2.6"/><rect x="1232.6" y="722.5" width="2.6" height="2.6"/><rect x="1234.5" y="701.6" width="2.6" height="2.6"/><rect x="1233.4" y="706.5" width="2.6" height="2.6"/><rect x="1232.7" y="732.4" width="2.6" height="2.6"/><rect x="1236.7" y="709.5" width="2.6" height="2.6"/><rect x="1234.2" y="712.4" width="2.6" height="2.6"/><rect x="1233.0" y="735.1" width="2.6" height="2.6"/><rect x="1235.5" y="695.7" width="2.6" height="2.6"/><rect x="1234.0" y="730.2" width="2.6" height="2.6"/><rect x="1235.2" y="705.3" width="2.6" height="2.6"/><rect x="1234.7" y="723.1" width="2.6" height="2.6"/><rect x="1233.9" y="715.0" width="2.6" height="2.6"/><rect x="1237.1" y="725.6" width="2.6" height="2.6"/><rect x="1234.7" y="703.5" width="2.6" height="2.6"/><rect x="1232.5" y="693.8" width="2.6" height="2.6"/><rect x="1235.0" y="734.4" width="2.6" height="2.6"/><rect x="1236.5" y="708.0" width="2.6" height="2.6"/><rect x="1237.3" y="695.0" width="2.6" height="2.6"/><rect x="1235.6" y="696.9" width="2.6" height="2.6"/><rect x="1235.4" y="696.0" width="2.6" height="2.6"/><rect x="1236.4" y="727.8" width="2.6" height="2.6"/><rect x="1231.5" y="710.3" width="2.6" height="2.6"/><rect x="1235.1" y="706.2" width="2.6" height="2.6"/><rect x="1236.2" y="716.1" width="2.6" height="2.6"/><rect x="1235.6" y="729.0" width="2.6" height="2.6"/><rect x="1234.2" y="723.8" width="2.6" height="2.6"/><rect x="1235.8" y="714.6" width="2.6" height="2.6"/><rect x="1234.9" y="716.4" width="2.6" height="2.6"/><rect x="1234.8" y="728.7" width="2.6" height="2.6"/><rect x="1233.0" y="712.0" width="2.6" height="2.6"/><rect x="1232.1" y="717.0" width="2.6" height="2.6"/><rect x="1234.8" y="725.4" width="2.6" height="2.6"/><rect x="1236.9" y="733.4" width="2.6" height="2.6"/><rect x="1235.2" y="694.1" width="2.6" height="2.6"/><rect x="1233.9" y="720.6" width="2.6" height="2.6"/><rect x="1233.8" y="701.6" width="2.6" height="2.6"/><rect x="1234.5" y="699.5" width="2.6" height="2.6"/><rect x="1236.4" y="716.2" width="2.6" height="2.6"/><rect x="1234.2" y="692.1" width="2.6" height="2.6"/><rect x="1234.7" y="715.7" width="2.6" height="2.6"/><rect x="1234.0" y="694.1" width="2.6" height="2.6"/><rect x="1235.5" y="698.4" width="2.6" height="2.6"/><rect x="1234.1" y="712.7" width="2.6" height="2.6"/><rect x="1235.0" y="699.0" width="2.6" height="2.6"/><rect x="1238.0" y="706.3" width="2.6" height="2.6"/><rect x="1234.0" y="694.8" width="2.6" height="2.6"/><rect x="1234.8" y="721.3" width="2.6" height="2.6"/><rect x="1238.1" y="726.2" width="2.6" height="2.6"/><rect x="1234.3" y="698.2" width="2.6" height="2.6"/><rect x="1231.9" y="724.5" width="2.6" height="2.6"/><rect x="1236.6" y="730.4" width="2.6" height="2.6"/><rect x="1237.8" y="711.5" width="2.6" height="2.6"/><rect x="1234.9" y="708.9" width="2.6" height="2.6"/><rect x="1233.6" y="703.2" width="2.6" height="2.6"/><rect x="1234.5" y="697.9" width="2.6" height="2.6"/><rect x="1235.2" y="734.1" width="2.6" height="2.6"/><rect x="1233.3" y="736.1" width="2.6" height="2.6"/><rect x="1235.4" y="723.1" width="2.6" height="2.6"/><rect x="1234.4" y="708.2" width="2.6" height="2.6"/><rect x="1233.1" y="704.8" width="2.6" height="2.6"/><rect x="1235.2" y="736.1" width="2.6" height="2.6"/><rect x="1231.4" y="703.9" width="2.6" height="2.6"/><rect x="1233.7" y="694.9" width="2.6" height="2.6"/><rect x="1235.8" y="727.6" width="2.6" height="2.6"/><rect x="1235.4" y="729.7" width="2.6" height="2.6"/><rect x="1232.7" y="711.2" width="2.6" height="2.6"/><rect x="1276.1" y="665.6" width="2.6" height="2.6"/><rect x="1276.3" y="664.5" width="2.6" height="2.6"/><rect x="1268.7" y="661.3" width="2.6" height="2.6"/><rect x="1266.2" y="659.8" width="2.6" height="2.6"/><rect x="1270.3" y="661.4" width="2.6" height="2.6"/><rect x="1252.8" y="647.6" width="2.6" height="2.6"/><rect x="1263.6" y="656.1" width="2.6" height="2.6"/><rect x="1250.0" y="645.7" width="2.6" height="2.6"/><rect x="1278.1" y="666.3" width="2.6" height="2.6"/><rect x="1269.9" y="660.1" width="2.6" height="2.6"/><rect x="1260.0" y="653.3" width="2.6" height="2.6"/><rect x="1264.8" y="658.5" width="2.6" height="2.6"/><rect x="1258.0" y="649.3" width="2.6" height="2.6"/><rect x="1248.3" y="642.6" width="2.6" height="2.6"/><rect x="1267.7" y="657.4" width="2.6" height="2.6"/><rect x="1271.3" y="662.7" width="2.6" height="2.6"/><rect x="1273.0" y="661.7" width="2.6" height="2.6"/><rect x="1250.1" y="646.8" width="2.6" height="2.6"/><rect x="1250.3" y="644.5" width="2.6" height="2.6"/><rect x="1252.6" y="646.3" width="2.6" height="2.6"/><rect x="1276.2" y="665.0" width="2.6" height="2.6"/><rect x="1256.4" y="648.5" width="2.6" height="2.6"/><rect x="1275.8" y="665.7" width="2.6" height="2.6"/><rect x="1255.6" y="651.0" width="2.6" height="2.6"/><rect x="1265.1" y="655.8" width="2.6" height="2.6"/><rect x="1275.3" y="666.7" width="2.6" height="2.6"/><rect x="1264.5" y="655.1" width="2.6" height="2.6"/><rect x="1248.3" y="643.9" width="2.6" height="2.6"/><rect x="1249.8" y="646.6" width="2.6" height="2.6"/><rect x="1267.1" y="657.9" width="2.6" height="2.6"/><rect x="1271.8" y="663.4" width="2.6" height="2.6"/><rect x="1272.8" y="663.2" width="2.6" height="2.6"/><rect x="1264.2" y="654.9" width="2.6" height="2.6"/><rect x="1276.5" y="667.7" width="2.6" height="2.6"/><rect x="1249.9" y="644.1" width="2.6" height="2.6"/><rect x="1274.4" y="665.1" width="2.6" height="2.6"/><rect x="1267.2" y="658.9" width="2.6" height="2.6"/><rect x="1253.1" y="647.4" width="2.6" height="2.6"/><rect x="1253.1" y="645.5" width="2.6" height="2.6"/><rect x="1034.1" y="643.6" width="2.6" height="2.6"/><rect x="1021.5" y="642.7" width="2.6" height="2.6"/><rect x="1028.8" y="614.7" width="2.6" height="2.6"/><rect x="1029.9" y="640.3" width="2.6" height="2.6"/><rect x="1023.5" y="593.3" width="2.6" height="2.6"/><rect x="1007.3" y="627.4" width="2.6" height="2.6"/><rect x="1007.0" y="597.9" width="2.6" height="2.6"/><rect x="1011.5" y="596.5" width="2.6" height="2.6"/><rect x="1012.4" y="594.1" width="2.6" height="2.6"/><rect x="1025.0" y="600.4" width="2.6" height="2.6"/><rect x="1035.5" y="594.6" width="2.6" height="2.6"/><rect x="1020.3" y="624.1" width="2.6" height="2.6"/><rect x="998.6" y="623.2" width="2.6" height="2.6"/><rect x="1016.2" y="622.6" width="2.6" height="2.6"/><rect x="998.0" y="614.9" width="2.6" height="2.6"/><rect x="1030.5" y="622.7" width="2.6" height="2.6"/><rect x="1000.9" y="607.1" width="2.6" height="2.6"/><rect x="1032.7" y="591.6" width="2.6" height="2.6"/><rect x="1012.6" y="616.9" width="2.6" height="2.6"/><rect x="1010.2" y="588.8" width="2.6" height="2.6"/><rect x="994.0" y="635.0" width="2.6" height="2.6"/><rect x="1011.5" y="604.7" width="2.6" height="2.6"/><rect x="1011.3" y="591.6" width="2.6" height="2.6"/><rect x="992.8" y="634.3" width="2.6" height="2.6"/><rect x="1026.7" y="599.5" width="2.6" height="2.6"/><rect x="1004.6" y="592.9" width="2.6" height="2.6"/><rect x="1004.6" y="617.4" width="2.6" height="2.6"/><rect x="1026.3" y="616.5" width="2.6" height="2.6"/><rect x="1031.1" y="643.6" width="2.6" height="2.6"/><rect x="1017.1" y="591.1" width="2.6" height="2.6"/><rect x="995.4" y="625.7" width="2.6" height="2.6"/><rect x="995.2" y="638.2" width="2.6" height="2.6"/><rect x="991.4" y="591.7" width="2.6" height="2.6"/><rect x="1038.5" y="611.1" width="2.6" height="2.6"/><rect x="1016.5" y="621.5" width="2.6" height="2.6"/><rect x="994.6" y="607.2" width="2.6" height="2.6"/><rect x="1007.1" y="629.3" width="2.6" height="2.6"/><rect x="1027.8" y="626.9" width="2.6" height="2.6"/><rect x="997.7" y="614.1" width="2.6" height="2.6"/><rect x="1034.5" y="598.3" width="2.6" height="2.6"/><rect x="1006.1" y="622.6" width="2.6" height="2.6"/><rect x="1038.5" y="590.1" width="2.6" height="2.6"/><rect x="1023.3" y="614.1" width="2.6" height="2.6"/><rect x="1015.1" y="634.9" width="2.6" height="2.6"/><rect x="993.5" y="621.6" width="2.6" height="2.6"/><rect x="1004.5" y="630.2" width="2.6" height="2.6"/><rect x="1024.4" y="611.6" width="2.6" height="2.6"/><rect x="996.3" y="630.8" width="2.6" height="2.6"/><rect x="1023.7" y="619.7" width="2.6" height="2.6"/><rect x="1026.0" y="640.9" width="2.6" height="2.6"/><rect x="1000.9" y="626.6" width="2.6" height="2.6"/><rect x="1029.0" y="603.3" width="2.6" height="2.6"/><rect x="1033.9" y="605.9" width="2.6" height="2.6"/><rect x="1036.5" y="620.7" width="2.6" height="2.6"/><rect x="1037.3" y="637.3" width="2.6" height="2.6"/><rect x="1027.8" y="609.1" width="2.6" height="2.6"/><rect x="1011.6" y="621.0" width="2.6" height="2.6"/><rect x="1029.0" y="611.6" width="2.6" height="2.6"/><rect x="1033.6" y="600.6" width="2.6" height="2.6"/><rect x="1014.7" y="596.7" width="2.6" height="2.6"/><rect x="997.2" y="604.7" width="2.6" height="2.6"/><rect x="991.1" y="620.0" width="2.6" height="2.6"/><rect x="1019.7" y="610.5" width="2.6" height="2.6"/><rect x="1028.6" y="618.7" width="2.6" height="2.6"/><rect x="1022.9" y="593.4" width="2.6" height="2.6"/><rect x="1005.2" y="589.9" width="2.6" height="2.6"/><rect x="996.7" y="635.4" width="2.6" height="2.6"/><rect x="995.5" y="621.5" width="2.6" height="2.6"/><rect x="1007.6" y="625.7" width="2.6" height="2.6"/><rect x="1032.3" y="634.3" width="2.6" height="2.6"/><rect x="1036.9" y="641.8" width="2.6" height="2.6"/><rect x="1008.6" y="643.0" width="2.6" height="2.6"/><rect x="1026.8" y="604.0" width="2.6" height="2.6"/><rect x="1005.1" y="617.5" width="2.6" height="2.6"/><rect x="1031.0" y="594.2" width="2.6" height="2.6"/><rect x="1033.3" y="625.6" width="2.6" height="2.6"/><rect x="1018.4" y="611.1" width="2.6" height="2.6"/><rect x="1007.8" y="611.0" width="2.6" height="2.6"/><rect x="1024.5" y="613.1" width="2.6" height="2.6"/><rect x="1024.4" y="636.9" width="2.6" height="2.6"/><rect x="993.0" y="589.7" width="2.6" height="2.6"/><rect x="1035.8" y="599.3" width="2.6" height="2.6"/><rect x="1029.4" y="611.0" width="2.6" height="2.6"/><rect x="999.9" y="589.4" width="2.6" height="2.6"/><rect x="1010.1" y="621.7" width="2.6" height="2.6"/><rect x="991.4" y="589.3" width="2.6" height="2.6"/><rect x="1003.1" y="637.2" width="2.6" height="2.6"/><rect x="1026.2" y="602.8" width="2.6" height="2.6"/><rect x="1008.9" y="611.6" width="2.6" height="2.6"/><rect x="1024.1" y="604.4" width="2.6" height="2.6"/><rect x="1006.5" y="616.4" width="2.6" height="2.6"/><rect x="1000.6" y="612.3" width="2.6" height="2.6"/><rect x="1026.1" y="616.5" width="2.6" height="2.6"/><rect x="991.5" y="607.9" width="2.6" height="2.6"/><rect x="1017.2" y="601.4" width="2.6" height="2.6"/><rect x="1008.1" y="619.5" width="2.6" height="2.6"/><rect x="1006.9" y="598.8" width="2.6" height="2.6"/><rect x="1032.4" y="592.3" width="2.6" height="2.6"/><rect x="1034.0" y="593.9" width="2.6" height="2.6"/><rect x="1016.4" y="618.7" width="2.6" height="2.6"/><rect x="1009.2" y="623.1" width="2.6" height="2.6"/><rect x="1032.9" y="606.2" width="2.6" height="2.6"/><rect x="991.7" y="599.7" width="2.6" height="2.6"/><rect x="1032.6" y="621.6" width="2.6" height="2.6"/><rect x="1026.4" y="610.1" width="2.6" height="2.6"/><rect x="1004.9" y="626.7" width="2.6" height="2.6"/><rect x="1017.1" y="638.9" width="2.6" height="2.6"/><rect x="996.7" y="607.6" width="2.6" height="2.6"/><rect x="1023.3" y="638.6" width="2.6" height="2.6"/><rect x="1012.0" y="632.0" width="2.6" height="2.6"/><rect x="994.2" y="623.9" width="2.6" height="2.6"/><rect x="1005.2" y="626.8" width="2.6" height="2.6"/><rect x="1003.6" y="599.0" width="2.6" height="2.6"/><rect x="1002.2" y="628.5" width="2.6" height="2.6"/><rect x="1024.3" y="638.9" width="2.6" height="2.6"/><rect x="1009.4" y="592.3" width="2.6" height="2.6"/><rect x="1029.1" y="602.8" width="2.6" height="2.6"/><rect x="1024.6" y="615.6" width="2.6" height="2.6"/><rect x="1010.9" y="590.4" width="2.6" height="2.6"/><rect x="1000.0" y="629.8" width="2.6" height="2.6"/><rect x="1011.7" y="637.2" width="2.6" height="2.6"/><rect x="1029.0" y="618.1" width="2.6" height="2.6"/><rect x="1037.9" y="588.8" width="2.6" height="2.6"/><rect x="1008.7" y="618.0" width="2.6" height="2.6"/><rect x="991.4" y="636.6" width="2.6" height="2.6"/><rect x="996.2" y="620.6" width="2.6" height="2.6"/><rect x="1002.3" y="609.7" width="2.6" height="2.6"/><rect x="1012.0" y="604.6" width="2.6" height="2.6"/><rect x="997.3" y="625.4" width="2.6" height="2.6"/><rect x="1020.0" y="593.1" width="2.6" height="2.6"/><rect x="1037.4" y="594.5" width="2.6" height="2.6"/><rect x="999.9" y="604.2" width="2.6" height="2.6"/><rect x="1006.9" y="615.7" width="2.6" height="2.6"/><rect x="1033.9" y="594.3" width="2.6" height="2.6"/><rect x="1017.4" y="623.0" width="2.6" height="2.6"/><rect x="1001.6" y="608.2" width="2.6" height="2.6"/><rect x="1010.9" y="637.5" width="2.6" height="2.6"/><rect x="1027.5" y="615.1" width="2.6" height="2.6"/><rect x="992.1" y="608.4" width="2.6" height="2.6"/><rect x="1029.5" y="612.6" width="2.6" height="2.6"/><rect x="1008.2" y="623.8" width="2.6" height="2.6"/><rect x="990.7" y="624.3" width="2.6" height="2.6"/><rect x="1023.0" y="594.9" width="2.6" height="2.6"/><rect x="1009.6" y="635.8" width="2.6" height="2.6"/><rect x="1001.8" y="617.9" width="2.6" height="2.6"/><rect x="1006.0" y="619.1" width="2.6" height="2.6"/><rect x="1008.2" y="607.6" width="2.6" height="2.6"/><rect x="1034.9" y="626.8" width="2.6" height="2.6"/><rect x="1038.6" y="607.1" width="2.6" height="2.6"/><rect x="1012.0" y="608.8" width="2.6" height="2.6"/><rect x="1032.0" y="608.9" width="2.6" height="2.6"/><rect x="1022.7" y="598.4" width="2.6" height="2.6"/><rect x="1015.8" y="603.5" width="2.6" height="2.6"/><rect x="1034.4" y="608.9" width="2.6" height="2.6"/><rect x="1036.3" y="619.9" width="2.6" height="2.6"/><rect x="1005.8" y="619.0" width="2.6" height="2.6"/><rect x="1035.2" y="626.8" width="2.6" height="2.6"/><rect x="1029.9" y="619.9" width="2.6" height="2.6"/><rect x="1019.6" y="596.4" width="2.6" height="2.6"/><rect x="1030.3" y="623.9" width="2.6" height="2.6"/><rect x="1056.9" y="611.2" width="2.6" height="2.6"/><rect x="1060.1" y="620.3" width="2.6" height="2.6"/><rect x="1047.7" y="639.4" width="2.6" height="2.6"/><rect x="1060.3" y="626.5" width="2.6" height="2.6"/><rect x="1062.2" y="627.2" width="2.6" height="2.6"/><rect x="1049.5" y="637.9" width="2.6" height="2.6"/><rect x="1064.1" y="626.2" width="2.6" height="2.6"/><rect x="1050.9" y="619.2" width="2.6" height="2.6"/><rect x="1040.0" y="635.2" width="2.6" height="2.6"/><rect x="1062.0" y="623.1" width="2.6" height="2.6"/><rect x="1051.7" y="631.7" width="2.6" height="2.6"/><rect x="1039.3" y="615.1" width="2.6" height="2.6"/><rect x="1045.7" y="623.6" width="2.6" height="2.6"/><rect x="1048.6" y="623.6" width="2.6" height="2.6"/><rect x="1063.8" y="615.5" width="2.6" height="2.6"/><rect x="1041.9" y="599.2" width="2.6" height="2.6"/><rect x="1062.1" y="617.9" width="2.6" height="2.6"/><rect x="1051.1" y="599.9" width="2.6" height="2.6"/><rect x="1041.6" y="598.7" width="2.6" height="2.6"/><rect x="1063.8" y="600.6" width="2.6" height="2.6"/><rect x="1047.7" y="618.1" width="2.6" height="2.6"/><rect x="1054.8" y="607.8" width="2.6" height="2.6"/><rect x="1056.8" y="624.9" width="2.6" height="2.6"/><rect x="1066.3" y="602.5" width="2.6" height="2.6"/><rect x="1047.0" y="602.9" width="2.6" height="2.6"/><rect x="1046.8" y="607.4" width="2.6" height="2.6"/><rect x="1039.5" y="631.8" width="2.6" height="2.6"/><rect x="1046.4" y="629.2" width="2.6" height="2.6"/><rect x="1061.5" y="631.3" width="2.6" height="2.6"/><rect x="1039.4" y="622.8" width="2.6" height="2.6"/><rect x="1062.5" y="624.6" width="2.6" height="2.6"/><rect x="1055.6" y="616.1" width="2.6" height="2.6"/><rect x="1061.7" y="620.6" width="2.6" height="2.6"/><rect x="1048.6" y="619.0" width="2.6" height="2.6"/><rect x="1051.9" y="606.4" width="2.6" height="2.6"/><rect x="1057.5" y="632.9" width="2.6" height="2.6"/><rect x="1057.0" y="599.1" width="2.6" height="2.6"/><rect x="1050.0" y="630.1" width="2.6" height="2.6"/><rect x="1042.4" y="619.4" width="2.6" height="2.6"/><rect x="1057.8" y="620.6" width="2.6" height="2.6"/><rect x="1198.8" y="549.1" width="2.6" height="2.6"/><rect x="1227.2" y="561.5" width="2.6" height="2.6"/><rect x="1219.4" y="591.2" width="2.6" height="2.6"/><rect x="1228.6" y="557.0" width="2.6" height="2.6"/><rect x="1247.7" y="609.8" width="2.6" height="2.6"/><rect x="1240.0" y="563.0" width="2.6" height="2.6"/><rect x="1228.4" y="579.1" width="2.6" height="2.6"/><rect x="1226.9" y="605.7" width="2.6" height="2.6"/><rect x="1204.8" y="626.3" width="2.6" height="2.6"/><rect x="1207.0" y="586.5" width="2.6" height="2.6"/><rect x="1228.0" y="560.3" width="2.6" height="2.6"/><rect x="1241.8" y="575.3" width="2.6" height="2.6"/><rect x="1241.1" y="559.7" width="2.6" height="2.6"/><rect x="1183.1" y="596.7" width="2.6" height="2.6"/><rect x="1192.0" y="584.2" width="2.6" height="2.6"/><rect x="1188.9" y="607.8" width="2.6" height="2.6"/><rect x="1229.7" y="604.7" width="2.6" height="2.6"/><rect x="1183.9" y="551.6" width="2.6" height="2.6"/><rect x="1218.0" y="554.5" width="2.6" height="2.6"/><rect x="1228.1" y="593.1" width="2.6" height="2.6"/><rect x="1244.6" y="615.6" width="2.6" height="2.6"/><rect x="1223.5" y="616.4" width="2.6" height="2.6"/><rect x="1212.3" y="571.8" width="2.6" height="2.6"/><rect x="1178.4" y="606.1" width="2.6" height="2.6"/><rect x="1224.3" y="600.2" width="2.6" height="2.6"/><rect x="1212.6" y="585.5" width="2.6" height="2.6"/><rect x="1243.6" y="578.9" width="2.6" height="2.6"/><rect x="1184.3" y="626.7" width="2.6" height="2.6"/><rect x="1231.6" y="622.1" width="2.6" height="2.6"/><rect x="1248.6" y="583.9" width="2.6" height="2.6"/><rect x="1185.5" y="588.6" width="2.6" height="2.6"/><rect x="1211.0" y="579.9" width="2.6" height="2.6"/><rect x="1233.5" y="568.5" width="2.6" height="2.6"/><rect x="1247.4" y="565.3" width="2.6" height="2.6"/><rect x="1195.3" y="616.6" width="2.6" height="2.6"/><rect x="1191.5" y="607.9" width="2.6" height="2.6"/><rect x="1194.5" y="581.7" width="2.6" height="2.6"/><rect x="1209.4" y="568.2" width="2.6" height="2.6"/><rect x="1236.3" y="625.8" width="2.6" height="2.6"/><rect x="1244.0" y="560.9" width="2.6" height="2.6"/><rect x="1175.7" y="584.2" width="2.6" height="2.6"/><rect x="1230.0" y="593.1" width="2.6" height="2.6"/><rect x="1246.7" y="629.7" width="2.6" height="2.6"/><rect x="1225.6" y="569.4" width="2.6" height="2.6"/><rect x="1204.2" y="553.1" width="2.6" height="2.6"/><rect x="1203.6" y="610.1" width="2.6" height="2.6"/><rect x="1197.7" y="563.1" width="2.6" height="2.6"/><rect x="1214.6" y="622.1" width="2.6" height="2.6"/><rect x="1222.8" y="556.8" width="2.6" height="2.6"/><rect x="1206.5" y="566.7" width="2.6" height="2.6"/><rect x="1235.4" y="582.4" width="2.6" height="2.6"/><rect x="1207.4" y="620.5" width="2.6" height="2.6"/><rect x="1196.3" y="584.9" width="2.6" height="2.6"/><rect x="1248.2" y="573.1" width="2.6" height="2.6"/><rect x="1214.7" y="601.5" width="2.6" height="2.6"/><rect x="1199.1" y="599.9" width="2.6" height="2.6"/><rect x="1205.7" y="616.7" width="2.6" height="2.6"/><rect x="1216.0" y="608.0" width="2.6" height="2.6"/><rect x="1217.3" y="605.6" width="2.6" height="2.6"/><rect x="1203.3" y="560.0" width="2.6" height="2.6"/><rect x="1329.1" y="627.6" width="2.6" height="2.6"/><rect x="1297.0" y="649.4" width="2.6" height="2.6"/><rect x="1344.0" y="635.2" width="2.6" height="2.6"/><rect x="1360.5" y="615.0" width="2.6" height="2.6"/><rect x="1307.3" y="646.8" width="2.6" height="2.6"/><rect x="1299.4" y="654.3" width="2.6" height="2.6"/><rect x="1342.4" y="659.1" width="2.6" height="2.6"/><rect x="1374.7" y="631.7" width="2.6" height="2.6"/><rect x="1327.3" y="633.0" width="2.6" height="2.6"/><rect x="1366.5" y="634.3" width="2.6" height="2.6"/><rect x="1361.9" y="660.3" width="2.6" height="2.6"/><rect x="1364.6" y="636.9" width="2.6" height="2.6"/><rect x="1364.0" y="635.9" width="2.6" height="2.6"/><rect x="1349.1" y="632.3" width="2.6" height="2.6"/><rect x="1381.8" y="660.1" width="2.6" height="2.6"/><rect x="1348.0" y="639.1" width="2.6" height="2.6"/><rect x="1305.2" y="639.4" width="2.6" height="2.6"/><rect x="1381.2" y="623.6" width="2.6" height="2.6"/><rect x="1367.0" y="624.2" width="2.6" height="2.6"/><rect x="1361.4" y="625.5" width="2.6" height="2.6"/><rect x="1350.5" y="649.7" width="2.6" height="2.6"/><rect x="1298.7" y="652.9" width="2.6" height="2.6"/><rect x="1343.9" y="623.7" width="2.6" height="2.6"/><rect x="1324.0" y="638.9" width="2.6" height="2.6"/><rect x="1363.9" y="620.4" width="2.6" height="2.6"/><rect x="1302.2" y="623.0" width="2.6" height="2.6"/><rect x="1354.1" y="631.4" width="2.6" height="2.6"/><rect x="1365.9" y="647.3" width="2.6" height="2.6"/><rect x="1329.5" y="640.6" width="2.6" height="2.6"/><rect x="1309.1" y="641.6" width="2.6" height="2.6"/><rect x="1355.2" y="623.3" width="2.6" height="2.6"/><rect x="1357.0" y="618.5" width="2.6" height="2.6"/><rect x="1385.1" y="638.5" width="2.6" height="2.6"/><rect x="1380.5" y="644.5" width="2.6" height="2.6"/><rect x="1315.4" y="647.6" width="2.6" height="2.6"/><rect x="1352.2" y="630.2" width="2.6" height="2.6"/><rect x="1359.4" y="648.9" width="2.6" height="2.6"/><rect x="1358.2" y="622.4" width="2.6" height="2.6"/><rect x="1384.5" y="656.3" width="2.6" height="2.6"/><rect x="1335.6" y="657.1" width="2.6" height="2.6"/><rect x="1387.1" y="628.6" width="2.6" height="2.6"/><rect x="1313.3" y="623.7" width="2.6" height="2.6"/><rect x="1340.8" y="618.8" width="2.6" height="2.6"/><rect x="1317.5" y="647.6" width="2.6" height="2.6"/><rect x="1297.4" y="641.7" width="2.6" height="2.6"/><rect x="1333.2" y="646.5" width="2.6" height="2.6"/><rect x="1319.5" y="635.1" width="2.6" height="2.6"/><rect x="1315.3" y="612.5" width="2.6" height="2.6"/><rect x="1375.2" y="629.7" width="2.6" height="2.6"/><rect x="1322.9" y="657.5" width="2.6" height="2.6"/><rect x="1329.8" y="638.2" width="2.6" height="2.6"/><rect x="1308.6" y="631.9" width="2.6" height="2.6"/><rect x="1376.2" y="652.1" width="2.6" height="2.6"/><rect x="1371.0" y="656.5" width="2.6" height="2.6"/><rect x="1316.9" y="614.3" width="2.6" height="2.6"/><rect x="1307.7" y="643.6" width="2.6" height="2.6"/><rect x="1345.9" y="629.8" width="2.6" height="2.6"/><rect x="1361.2" y="622.5" width="2.6" height="2.6"/><rect x="1351.6" y="632.1" width="2.6" height="2.6"/><rect x="1308.5" y="649.7" width="2.6" height="2.6"/><rect x="1312.7" y="650.9" width="2.6" height="2.6"/><rect x="1365.7" y="633.1" width="2.6" height="2.6"/><rect x="1337.4" y="621.7" width="2.6" height="2.6"/><rect x="1308.5" y="645.8" width="2.6" height="2.6"/><rect x="1329.8" y="639.3" width="2.6" height="2.6"/><rect x="1329.6" y="624.7" width="2.6" height="2.6"/><rect x="1310.7" y="649.1" width="2.6" height="2.6"/><rect x="1335.5" y="619.2" width="2.6" height="2.6"/><rect x="1376.0" y="619.3" width="2.6" height="2.6"/><rect x="1316.8" y="619.4" width="2.6" height="2.6"/><rect x="1347.2" y="649.8" width="2.6" height="2.6"/><rect x="1298.6" y="657.0" width="2.6" height="2.6"/><rect x="1360.3" y="652.4" width="2.6" height="2.6"/><rect x="1334.5" y="633.1" width="2.6" height="2.6"/><rect x="1304.3" y="624.6" width="2.6" height="2.6"/><rect x="1375.8" y="625.7" width="2.6" height="2.6"/><rect x="1378.6" y="652.5" width="2.6" height="2.6"/><rect x="1380.4" y="618.6" width="2.6" height="2.6"/><rect x="1334.6" y="652.5" width="2.6" height="2.6"/><rect x="1324.3" y="623.7" width="2.6" height="2.6"/><rect x="1297.6" y="637.8" width="2.6" height="2.6"/><rect x="1346.3" y="622.1" width="2.6" height="2.6"/><rect x="1319.5" y="642.7" width="2.6" height="2.6"/><rect x="1311.6" y="650.2" width="2.6" height="2.6"/><rect x="1375.9" y="632.3" width="2.6" height="2.6"/><rect x="1307.7" y="639.7" width="2.6" height="2.6"/><rect x="1322.9" y="616.8" width="2.6" height="2.6"/><rect x="1361.0" y="639.1" width="2.6" height="2.6"/><rect x="1320.7" y="623.8" width="2.6" height="2.6"/><rect x="1362.3" y="656.6" width="2.6" height="2.6"/><rect x="1328.1" y="640.4" width="2.6" height="2.6"/><rect x="1316.0" y="634.5" width="2.6" height="2.6"/><rect x="1349.1" y="626.7" width="2.6" height="2.6"/><rect x="1351.4" y="638.3" width="2.6" height="2.6"/><rect x="1299.7" y="617.5" width="2.6" height="2.6"/><rect x="1333.8" y="618.9" width="2.6" height="2.6"/><rect x="1346.0" y="640.8" width="2.6" height="2.6"/><rect x="1353.2" y="655.1" width="2.6" height="2.6"/><rect x="1351.7" y="649.5" width="2.6" height="2.6"/><rect x="1306.3" y="654.5" width="2.6" height="2.6"/><rect x="1381.2" y="640.7" width="2.6" height="2.6"/><rect x="1371.8" y="638.7" width="2.6" height="2.6"/><rect x="1335.7" y="619.6" width="2.6" height="2.6"/><rect x="1339.9" y="646.7" width="2.6" height="2.6"/><rect x="1368.8" y="655.5" width="2.6" height="2.6"/><rect x="1343.4" y="658.0" width="2.6" height="2.6"/><rect x="1329.9" y="612.6" width="2.6" height="2.6"/><rect x="1334.9" y="638.2" width="2.6" height="2.6"/><rect x="1366.8" y="623.1" width="2.6" height="2.6"/><rect x="1298.0" y="647.1" width="2.6" height="2.6"/><rect x="1313.3" y="653.4" width="2.6" height="2.6"/><rect x="1347.8" y="618.4" width="2.6" height="2.6"/><rect x="1343.6" y="649.5" width="2.6" height="2.6"/><rect x="1316.3" y="658.5" width="2.6" height="2.6"/><rect x="1300.9" y="619.0" width="2.6" height="2.6"/><rect x="1350.4" y="644.8" width="2.6" height="2.6"/><rect x="1351.1" y="656.9" width="2.6" height="2.6"/><rect x="1314.2" y="614.0" width="2.6" height="2.6"/><rect x="1345.1" y="628.9" width="2.6" height="2.6"/><rect x="1332.2" y="631.1" width="2.6" height="2.6"/><rect x="1376.9" y="625.7" width="2.6" height="2.6"/><rect x="1359.4" y="639.5" width="2.6" height="2.6"/><rect x="1321.8" y="656.4" width="2.6" height="2.6"/><rect x="1319.2" y="626.4" width="2.6" height="2.6"/><rect x="1313.4" y="646.0" width="2.6" height="2.6"/><rect x="1359.5" y="629.6" width="2.6" height="2.6"/><rect x="1306.5" y="640.9" width="2.6" height="2.6"/><rect x="1326.7" y="638.7" width="2.6" height="2.6"/><rect x="1356.0" y="611.8" width="2.6" height="2.6"/><rect x="1299.9" y="651.8" width="2.6" height="2.6"/><rect x="1375.5" y="616.0" width="2.6" height="2.6"/><rect x="1316.2" y="632.6" width="2.6" height="2.6"/><rect x="1372.3" y="626.8" width="2.6" height="2.6"/><rect x="1383.7" y="616.2" width="2.6" height="2.6"/><rect x="1379.0" y="614.5" width="2.6" height="2.6"/><rect x="1351.1" y="659.3" width="2.6" height="2.6"/><rect x="1362.1" y="656.5" width="2.6" height="2.6"/><rect x="1328.0" y="658.5" width="2.6" height="2.6"/><rect x="1378.8" y="625.1" width="2.6" height="2.6"/><rect x="1366.7" y="656.7" width="2.6" height="2.6"/><rect x="1315.4" y="630.9" width="2.6" height="2.6"/><rect x="1366.6" y="639.8" width="2.6" height="2.6"/><rect x="1380.1" y="632.9" width="2.6" height="2.6"/><rect x="1336.9" y="619.9" width="2.6" height="2.6"/><rect x="1320.9" y="654.6" width="2.6" height="2.6"/><rect x="1319.7" y="655.6" width="2.6" height="2.6"/><rect x="1369.6" y="639.6" width="2.6" height="2.6"/><rect x="1323.5" y="611.8" width="2.6" height="2.6"/><rect x="1306.5" y="652.3" width="2.6" height="2.6"/><rect x="1383.9" y="658.9" width="2.6" height="2.6"/><rect x="1321.5" y="657.6" width="2.6" height="2.6"/><rect x="1336.2" y="629.7" width="2.6" height="2.6"/><rect x="1379.3" y="651.9" width="2.6" height="2.6"/><rect x="1358.1" y="625.7" width="2.6" height="2.6"/><rect x="1305.6" y="620.7" width="2.6" height="2.6"/><rect x="1319.9" y="621.1" width="2.6" height="2.6"/><rect x="1348.2" y="627.1" width="2.6" height="2.6"/><rect x="1315.5" y="654.7" width="2.6" height="2.6"/><rect x="1329.6" y="611.9" width="2.6" height="2.6"/><rect x="1296.6" y="638.7" width="2.6" height="2.6"/><rect x="1221.1" y="621.0" width="2.6" height="2.6"/><rect x="1220.7" y="617.5" width="2.6" height="2.6"/><rect x="1268.2" y="620.3" width="2.6" height="2.6"/><rect x="1236.0" y="632.2" width="2.6" height="2.6"/><rect x="1296.5" y="631.3" width="2.6" height="2.6"/><rect x="1293.3" y="637.6" width="2.6" height="2.6"/><rect x="1248.1" y="620.4" width="2.6" height="2.6"/><rect x="1251.8" y="630.2" width="2.6" height="2.6"/><rect x="1232.1" y="607.8" width="2.6" height="2.6"/><rect x="1254.8" y="620.5" width="2.6" height="2.6"/><rect x="1298.0" y="612.1" width="2.6" height="2.6"/><rect x="1219.0" y="614.2" width="2.6" height="2.6"/><rect x="1288.8" y="602.5" width="2.6" height="2.6"/><rect x="1260.2" y="622.7" width="2.6" height="2.6"/><rect x="1285.8" y="611.8" width="2.6" height="2.6"/><rect x="1267.3" y="636.8" width="2.6" height="2.6"/><rect x="1296.5" y="621.3" width="2.6" height="2.6"/><rect x="1245.8" y="624.7" width="2.6" height="2.6"/><rect x="1277.1" y="625.9" width="2.6" height="2.6"/><rect x="1272.7" y="614.1" width="2.6" height="2.6"/><rect x="1276.0" y="612.8" width="2.6" height="2.6"/><rect x="1237.3" y="602.7" width="2.6" height="2.6"/><rect x="1263.0" y="605.5" width="2.6" height="2.6"/><rect x="1241.3" y="610.6" width="2.6" height="2.6"/><rect x="1248.5" y="615.4" width="2.6" height="2.6"/><rect x="1296.7" y="619.8" width="2.6" height="2.6"/><rect x="1262.6" y="614.7" width="2.6" height="2.6"/><rect x="1262.5" y="631.3" width="2.6" height="2.6"/><rect x="1260.5" y="619.2" width="2.6" height="2.6"/><rect x="1246.8" y="606.1" width="2.6" height="2.6"/><rect x="1235.7" y="602.3" width="2.6" height="2.6"/><rect x="1241.5" y="600.3" width="2.6" height="2.6"/><rect x="1252.0" y="621.6" width="2.6" height="2.6"/><rect x="1227.9" y="628.9" width="2.6" height="2.6"/><rect x="1254.8" y="623.6" width="2.6" height="2.6"/><rect x="1253.1" y="630.5" width="2.6" height="2.6"/><rect x="1273.1" y="603.5" width="2.6" height="2.6"/><rect x="1262.6" y="609.3" width="2.6" height="2.6"/><rect x="1278.4" y="613.5" width="2.6" height="2.6"/><rect x="1236.6" y="600.1" width="2.6" height="2.6"/><rect x="1297.6" y="603.5" width="2.6" height="2.6"/><rect x="1238.8" y="635.9" width="2.6" height="2.6"/><rect x="1222.8" y="615.1" width="2.6" height="2.6"/><rect x="1253.3" y="625.9" width="2.6" height="2.6"/><rect x="1281.3" y="637.7" width="2.6" height="2.6"/><rect x="1244.2" y="602.1" width="2.6" height="2.6"/><rect x="1235.9" y="598.9" width="2.6" height="2.6"/><rect x="1240.2" y="623.5" width="2.6" height="2.6"/><rect x="1290.2" y="602.7" width="2.6" height="2.6"/><rect x="1240.1" y="634.3" width="2.6" height="2.6"/><rect x="1265.7" y="614.7" width="2.6" height="2.6"/><rect x="1224.5" y="600.9" width="2.6" height="2.6"/><rect x="1236.1" y="623.4" width="2.6" height="2.6"/><rect x="1223.3" y="618.8" width="2.6" height="2.6"/><rect x="1284.1" y="598.8" width="2.6" height="2.6"/><rect x="1241.7" y="615.2" width="2.6" height="2.6"/><rect x="1267.5" y="628.1" width="2.6" height="2.6"/><rect x="1273.0" y="616.1" width="2.6" height="2.6"/><rect x="1245.7" y="623.8" width="2.6" height="2.6"/><rect x="1255.5" y="635.9" width="2.6" height="2.6"/><rect x="1261.0" y="622.1" width="2.6" height="2.6"/><rect x="1272.0" y="618.0" width="2.6" height="2.6"/><rect x="1258.1" y="625.2" width="2.6" height="2.6"/><rect x="1266.7" y="638.6" width="2.6" height="2.6"/><rect x="1243.1" y="618.5" width="2.6" height="2.6"/><rect x="1296.7" y="631.3" width="2.6" height="2.6"/><rect x="1263.0" y="610.9" width="2.6" height="2.6"/><rect x="1233.0" y="615.3" width="2.6" height="2.6"/><rect x="1252.8" y="616.0" width="2.6" height="2.6"/><rect x="1239.2" y="617.9" width="2.6" height="2.6"/><rect x="1264.6" y="602.8" width="2.6" height="2.6"/><rect x="1271.4" y="627.1" width="2.6" height="2.6"/><rect x="1234.3" y="608.7" width="2.6" height="2.6"/><rect x="1221.8" y="617.6" width="2.6" height="2.6"/><rect x="1272.7" y="615.2" width="2.6" height="2.6"/><rect x="1265.8" y="622.9" width="2.6" height="2.6"/><rect x="1222.2" y="600.8" width="2.6" height="2.6"/><rect x="1259.3" y="635.7" width="2.6" height="2.6"/><rect x="1275.2" y="616.5" width="2.6" height="2.6"/><rect x="1239.5" y="604.0" width="2.6" height="2.6"/><rect x="1417.6" y="756.8" width="2.6" height="2.6"/><rect x="1399.6" y="728.3" width="2.6" height="2.6"/><rect x="1391.4" y="754.4" width="2.6" height="2.6"/><rect x="1426.4" y="741.5" width="2.6" height="2.6"/><rect x="1434.7" y="741.1" width="2.6" height="2.6"/><rect x="1373.4" y="733.3" width="2.6" height="2.6"/><rect x="1434.9" y="754.3" width="2.6" height="2.6"/><rect x="1377.8" y="736.7" width="2.6" height="2.6"/><rect x="1399.7" y="744.9" width="2.6" height="2.6"/><rect x="1373.5" y="763.4" width="2.6" height="2.6"/><rect x="1409.4" y="735.8" width="2.6" height="2.6"/><rect x="1373.9" y="748.7" width="2.6" height="2.6"/><rect x="1437.9" y="754.9" width="2.6" height="2.6"/><rect x="1432.7" y="761.4" width="2.6" height="2.6"/><rect x="1418.9" y="727.1" width="2.6" height="2.6"/><rect x="1393.8" y="749.1" width="2.6" height="2.6"/><rect x="1401.2" y="733.8" width="2.6" height="2.6"/><rect x="1376.5" y="761.1" width="2.6" height="2.6"/><rect x="1419.1" y="737.3" width="2.6" height="2.6"/><rect x="1405.1" y="761.3" width="2.6" height="2.6"/><rect x="1381.9" y="751.1" width="2.6" height="2.6"/><rect x="1388.2" y="762.7" width="2.6" height="2.6"/><rect x="1428.5" y="764.5" width="2.6" height="2.6"/><rect x="1398.9" y="746.0" width="2.6" height="2.6"/><rect x="1394.5" y="739.5" width="2.6" height="2.6"/><rect x="1439.4" y="765.4" width="2.6" height="2.6"/><rect x="1442.3" y="762.8" width="2.6" height="2.6"/><rect x="1406.4" y="752.4" width="2.6" height="2.6"/><rect x="1436.2" y="742.8" width="2.6" height="2.6"/><rect x="1436.9" y="758.2" width="2.6" height="2.6"/><rect x="1391.9" y="739.8" width="2.6" height="2.6"/><rect x="1420.7" y="731.6" width="2.6" height="2.6"/><rect x="1389.9" y="732.8" width="2.6" height="2.6"/><rect x="1379.3" y="762.8" width="2.6" height="2.6"/><rect x="1442.5" y="759.2" width="2.6" height="2.6"/><rect x="1407.5" y="756.0" width="2.6" height="2.6"/><rect x="1420.5" y="743.2" width="2.6" height="2.6"/><rect x="1408.6" y="730.1" width="2.6" height="2.6"/><rect x="1388.9" y="739.1" width="2.6" height="2.6"/><rect x="1397.1" y="752.4" width="2.6" height="2.6"/><rect x="1388.9" y="734.7" width="2.6" height="2.6"/><rect x="1433.8" y="757.5" width="2.6" height="2.6"/><rect x="1437.9" y="757.4" width="2.6" height="2.6"/><rect x="1385.6" y="745.2" width="2.6" height="2.6"/><rect x="1430.9" y="758.6" width="2.6" height="2.6"/><rect x="1387.9" y="745.0" width="2.6" height="2.6"/><rect x="1413.5" y="725.2" width="2.6" height="2.6"/><rect x="1389.0" y="755.8" width="2.6" height="2.6"/><rect x="1419.0" y="743.5" width="2.6" height="2.6"/><rect x="1412.2" y="746.9" width="2.6" height="2.6"/><rect x="1396.3" y="728.3" width="2.6" height="2.6"/><rect x="1424.4" y="757.1" width="2.6" height="2.6"/><rect x="1402.6" y="757.0" width="2.6" height="2.6"/><rect x="1430.5" y="753.7" width="2.6" height="2.6"/><rect x="1429.1" y="765.3" width="2.6" height="2.6"/><rect x="1374.5" y="764.3" width="2.6" height="2.6"/><rect x="1403.8" y="757.4" width="2.6" height="2.6"/><rect x="1424.0" y="728.8" width="2.6" height="2.6"/><rect x="1413.3" y="728.4" width="2.6" height="2.6"/><rect x="1423.7" y="738.9" width="2.6" height="2.6"/><rect x="1398.4" y="736.2" width="2.6" height="2.6"/><rect x="1429.2" y="751.6" width="2.6" height="2.6"/><rect x="1392.9" y="755.8" width="2.6" height="2.6"/><rect x="1384.9" y="758.4" width="2.6" height="2.6"/><rect x="1414.6" y="756.9" width="2.6" height="2.6"/><rect x="1415.5" y="766.1" width="2.6" height="2.6"/><rect x="1421.1" y="744.2" width="2.6" height="2.6"/><rect x="1413.6" y="748.5" width="2.6" height="2.6"/><rect x="1392.0" y="737.6" width="2.6" height="2.6"/><rect x="1428.4" y="759.1" width="2.6" height="2.6"/><rect x="1440.2" y="753.5" width="2.6" height="2.6"/><rect x="1407.5" y="741.3" width="2.6" height="2.6"/><rect x="1421.8" y="752.0" width="2.6" height="2.6"/><rect x="1438.7" y="756.1" width="2.6" height="2.6"/><rect x="1398.9" y="736.4" width="2.6" height="2.6"/><rect x="1374.9" y="757.5" width="2.6" height="2.6"/><rect x="1402.1" y="741.3" width="2.6" height="2.6"/><rect x="1375.5" y="745.5" width="2.6" height="2.6"/><rect x="1435.5" y="736.3" width="2.6" height="2.6"/><rect x="1424.5" y="756.6" width="2.6" height="2.6"/><rect x="1418.6" y="749.7" width="2.6" height="2.6"/><rect x="1389.4" y="753.0" width="2.6" height="2.6"/><rect x="1413.2" y="765.3" width="2.6" height="2.6"/><rect x="1408.3" y="739.6" width="2.6" height="2.6"/><rect x="1436.0" y="750.9" width="2.6" height="2.6"/><rect x="1395.9" y="752.0" width="2.6" height="2.6"/><rect x="1382.5" y="732.6" width="2.6" height="2.6"/><rect x="1434.5" y="744.2" width="2.6" height="2.6"/><rect x="1428.6" y="733.7" width="2.6" height="2.6"/><rect x="1405.1" y="734.7" width="2.6" height="2.6"/><rect x="1428.7" y="749.8" width="2.6" height="2.6"/><rect x="1399.6" y="740.8" width="2.6" height="2.6"/><rect x="1386.7" y="733.5" width="2.6" height="2.6"/><rect x="1420.7" y="737.8" width="2.6" height="2.6"/><rect x="1379.1" y="740.9" width="2.6" height="2.6"/><rect x="1403.9" y="766.2" width="2.6" height="2.6"/><rect x="1399.1" y="741.6" width="2.6" height="2.6"/><rect x="1440.7" y="755.0" width="2.6" height="2.6"/><rect x="1404.3" y="741.4" width="2.6" height="2.6"/><rect x="1387.7" y="731.1" width="2.6" height="2.6"/><rect x="1405.2" y="751.6" width="2.6" height="2.6"/><rect x="1379.2" y="744.7" width="2.6" height="2.6"/><rect x="1384.0" y="750.0" width="2.6" height="2.6"/><rect x="1396.2" y="752.7" width="2.6" height="2.6"/><rect x="1427.3" y="741.7" width="2.6" height="2.6"/><rect x="1398.9" y="728.0" width="2.6" height="2.6"/><rect x="1386.7" y="750.8" width="2.6" height="2.6"/><rect x="1429.0" y="730.5" width="2.6" height="2.6"/><rect x="1441.0" y="763.1" width="2.6" height="2.6"/><rect x="1397.7" y="747.3" width="2.6" height="2.6"/><rect x="1232.0" y="711.7" width="2.6" height="2.6"/><rect x="1216.4" y="739.2" width="2.6" height="2.6"/><rect x="1222.4" y="719.3" width="2.6" height="2.6"/><rect x="1226.4" y="696.8" width="2.6" height="2.6"/><rect x="1221.7" y="709.3" width="2.6" height="2.6"/><rect x="1206.2" y="725.4" width="2.6" height="2.6"/><rect x="1233.5" y="725.5" width="2.6" height="2.6"/><rect x="1223.1" y="735.6" width="2.6" height="2.6"/><rect x="1219.2" y="757.4" width="2.6" height="2.6"/><rect x="1208.6" y="689.3" width="2.6" height="2.6"/><rect x="1226.7" y="737.4" width="2.6" height="2.6"/><rect x="1217.2" y="716.6" width="2.6" height="2.6"/><rect x="1215.2" y="705.7" width="2.6" height="2.6"/><rect x="1238.1" y="749.1" width="2.6" height="2.6"/><rect x="1211.9" y="728.2" width="2.6" height="2.6"/><rect x="1221.1" y="697.9" width="2.6" height="2.6"/><rect x="1235.1" y="725.9" width="2.6" height="2.6"/><rect x="1248.2" y="752.4" width="2.6" height="2.6"/><rect x="1243.8" y="707.0" width="2.6" height="2.6"/><rect x="1203.3" y="745.4" width="2.6" height="2.6"/><rect x="1203.2" y="736.8" width="2.6" height="2.6"/><rect x="1206.7" y="738.1" width="2.6" height="2.6"/><rect x="1200.4" y="694.8" width="2.6" height="2.6"/><rect x="1242.0" y="724.8" width="2.6" height="2.6"/><rect x="1220.7" y="756.7" width="2.6" height="2.6"/><rect x="1237.7" y="704.5" width="2.6" height="2.6"/><rect x="1233.7" y="715.7" width="2.6" height="2.6"/><rect x="1221.4" y="710.6" width="2.6" height="2.6"/><rect x="1209.3" y="709.9" width="2.6" height="2.6"/><rect x="1211.6" y="701.9" width="2.6" height="2.6"/><rect x="1242.3" y="715.2" width="2.6" height="2.6"/><rect x="1226.3" y="745.5" width="2.6" height="2.6"/><rect x="1232.3" y="699.7" width="2.6" height="2.6"/><rect x="1246.3" y="753.9" width="2.6" height="2.6"/><rect x="1240.5" y="711.8" width="2.6" height="2.6"/><rect x="1240.0" y="733.6" width="2.6" height="2.6"/><rect x="1199.3" y="715.1" width="2.6" height="2.6"/><rect x="1233.3" y="726.8" width="2.6" height="2.6"/><rect x="1246.0" y="744.0" width="2.6" height="2.6"/><rect x="1240.4" y="757.3" width="2.6" height="2.6"/><rect x="1333.0" y="595.0" width="2.6" height="2.6"/><rect x="1298.9" y="590.6" width="2.6" height="2.6"/><rect x="1307.5" y="578.7" width="2.6" height="2.6"/><rect x="1342.8" y="561.6" width="2.6" height="2.6"/><rect x="1362.3" y="590.2" width="2.6" height="2.6"/><rect x="1321.1" y="568.5" width="2.6" height="2.6"/><rect x="1375.8" y="579.8" width="2.6" height="2.6"/><rect x="1300.5" y="571.0" width="2.6" height="2.6"/><rect x="1393.1" y="569.7" width="2.6" height="2.6"/><rect x="1327.6" y="576.7" width="2.6" height="2.6"/><rect x="1387.3" y="591.1" width="2.6" height="2.6"/><rect x="1337.2" y="585.3" width="2.6" height="2.6"/><rect x="1301.5" y="561.3" width="2.6" height="2.6"/><rect x="1335.9" y="584.1" width="2.6" height="2.6"/><rect x="1312.8" y="560.4" width="2.6" height="2.6"/><rect x="1384.0" y="566.1" width="2.6" height="2.6"/><rect x="1304.2" y="562.1" width="2.6" height="2.6"/><rect x="1306.6" y="570.1" width="2.6" height="2.6"/><rect x="1356.6" y="585.0" width="2.6" height="2.6"/><rect x="1327.3" y="579.3" width="2.6" height="2.6"/><rect x="1058.6" y="579.8" width="2.6" height="2.6"/><rect x="1045.2" y="581.8" width="2.6" height="2.6"/><rect x="1038.7" y="595.2" width="2.6" height="2.6"/><rect x="1051.3" y="578.6" width="2.6" height="2.6"/><rect x="1050.0" y="573.7" width="2.6" height="2.6"/><rect x="1054.6" y="582.5" width="2.6" height="2.6"/><rect x="1085.5" y="591.7" width="2.6" height="2.6"/><rect x="1097.1" y="574.2" width="2.6" height="2.6"/><rect x="1071.7" y="569.5" width="2.6" height="2.6"/><rect x="1056.0" y="576.6" width="2.6" height="2.6"/><rect x="1097.1" y="556.2" width="2.6" height="2.6"/><rect x="1083.5" y="568.2" width="2.6" height="2.6"/><rect x="1074.6" y="565.6" width="2.6" height="2.6"/><rect x="1081.8" y="576.0" width="2.6" height="2.6"/><rect x="1057.3" y="573.9" width="2.6" height="2.6"/><rect x="901.3" y="620.3" width="2.6" height="2.6"/><rect x="1416.1" y="616.8" width="2.6" height="2.6"/><rect x="1125.3" y="746.0" width="2.6" height="2.6"/><rect x="919.4" y="803.5" width="2.6" height="2.6"/><rect x="1016.5" y="810.4" width="2.6" height="2.6"/><rect x="1145.9" y="727.7" width="2.6" height="2.6"/><rect x="1242.9" y="618.3" width="2.6" height="2.6"/><rect x="1187.2" y="763.6" width="2.6" height="2.6"/><rect x="1348.7" y="760.3" width="2.6" height="2.6"/><rect x="1286.5" y="626.9" width="2.6" height="2.6"/><rect x="1131.9" y="710.7" width="2.6" height="2.6"/><rect x="921.9" y="767.2" width="2.6" height="2.6"/><rect x="956.9" y="722.8" width="2.6" height="2.6"/><rect x="1050.9" y="634.6" width="2.6" height="2.6"/><rect x="1441.7" y="735.2" width="2.6" height="2.6"/><rect x="1316.3" y="732.1" width="2.6" height="2.6"/><rect x="1220.3" y="790.7" width="2.6" height="2.6"/><rect x="934.8" y="682.0" width="2.6" height="2.6"/><rect x="1023.5" y="729.9" width="2.6" height="2.6"/><rect x="1123.5" y="801.3" width="2.6" height="2.6"/><rect x="1031.6" y="657.9" width="2.6" height="2.6"/><rect x="1421.6" y="757.3" width="2.6" height="2.6"/><rect x="1143.3" y="680.9" width="2.6" height="2.6"/><rect x="1317.1" y="631.4" width="2.6" height="2.6"/><rect x="1310.2" y="648.6" width="2.6" height="2.6"/><rect x="1358.2" y="615.0" width="2.6" height="2.6"/><rect x="1419.8" y="788.3" width="2.6" height="2.6"/><rect x="912.6" y="633.9" width="2.6" height="2.6"/><rect x="1419.9" y="778.9" width="2.6" height="2.6"/><rect x="1065.1" y="774.9" width="2.6" height="2.6"/><rect x="1229.3" y="653.0" width="2.6" height="2.6"/><rect x="1290.8" y="690.0" width="2.6" height="2.6"/><rect x="979.6" y="786.0" width="2.6" height="2.6"/><rect x="1307.7" y="652.3" width="2.6" height="2.6"/><rect x="1142.1" y="748.9" width="2.6" height="2.6"/><rect x="1110.3" y="655.4" width="2.6" height="2.6"/><rect x="1198.8" y="807.8" width="2.6" height="2.6"/><rect x="952.9" y="654.1" width="2.6" height="2.6"/><rect x="1174.1" y="815.3" width="2.6" height="2.6"/><rect x="1464.5" y="600.5" width="2.6" height="2.6"/></g>
  <g fill="none" stroke="#e03c24" stroke-linecap="round" stroke-linejoin="round" opacity="0.85">
   <path d="M1172.0 610.0 L1190.0 611.0 L1220.8 613.0 L1260.6 621.0 L1297.2 625.6 L1327.8 631.0 L1358.4 641.0 L1368.0 662.0" stroke-width="12"/>
   <path d="M985.8 579.7 L985.8 616.4 L1001.0 656.1 L1022.5 671.4 L1043.9 683.6 L1056.1 686.7" stroke-width="7"/>
   <path d="M1043.9 686.7 L1050.0 711.0 L1062.2 738.6 L1071.4 778.3 L1074.4 793.6" stroke-width="7"/>
   <path d="M1346.0 668.4 L1352.3 692.8 L1373.7 714.2 L1401.2 720.3 L1437.8 711.1 L1468.4 720.3 L1473.0 741.7" stroke-width="4"/>
   <path d="M1416.4 588.9 L1413.4 619.5 L1401.2 637.8 L1395.0 662.2 L1401.2 692.8 L1407.3 705.0" stroke-width="3.5"/>
   <path d="M1419.5 588.9 L1425.6 631.7 L1431.7 662.2 L1437.8 683.6" stroke-width="3"/>
   <path d="M918.6 601.1 L961.4 579.7 L992.0 573.6" stroke-width="2"/>
   <path d="M888.0 723.3 L894.2 772.2" stroke-width="3"/>
  </g>
  <g fill="none" stroke="#e04a2e" stroke-width="1.2" opacity="0.9">
   <path d="M1178.3 567.5 L1138.6 595.0 L1117.2 631.7 L1108.0 662.2 L1123.3 686.7 L1160.0 702.0 L1163.0 753.9 L1166.0 790.5 L1184.4 802.8"/><path d="M1279.0 668.4 L1303.4 708.1 L1297.2 747.8 L1251.4 778.4 L1220.8 793.7 L1175.0 802.8"/><path d="M1306.4 750.9 L1318.6 778.4 L1346.1 793.7 L1382.8 793.7 L1401.2 815.0"/><path d="M1001.0 705.0 L992.0 729.4 L992.0 747.8 L1013.3 766.0 L1068.3 781.4"/><path d="M964.4 815.0 L990.0 805.0 L1013.3 793.6"/><path d="M1098.9 808.9 L1117.2 815.0 L1153.9 805.8"/><path d="M1473.0 729.5 L1468.4 772.3 L1444.0 784.5 L1395.0 815.0"/><path d="M1050.0 652.2 L1080.5 652.2 L1083.6 677.5 L1068.0 683.6"/>
  </g>
  <g fill="#2e6f7a"><ellipse cx="1268" cy="619" rx="4" ry="9"/><ellipse cx="1050" cy="610" rx="7" ry="4"/><ellipse cx="1241" cy="700" rx="3" ry="3"/></g>
 </g>
 <path d="M887 628 C905 590 960 556 1020 545 L1346 545 C1400 552 1450 585 1474 622 M1474 772 C1455 800 1410 838 1349 852 L1016 852 C950 840 905 810 887 758" fill="none" stroke="#2d3d40" stroke-width="1.4"/>
 </g>
 <path d="M1276 618 L1279 586 L1290 596 L1325 566 L1340 583 L1305 612 L1311 622 Z" fill="#f01010"/>
 <text x="1186" y="862" font-family="Liberation Serif" font-weight="bold" font-size="8.5" fill="#333" text-anchor="middle">DÜNYA DEPREM HARİTASI</text>
 <rect x="897" y="852" width="88" height="2.5" fill="#444" opacity="0.6"/>
 <rect x="897" y="859" width="124" height="2.5" fill="#444" opacity="0.6"/>
 <rect x="1293" y="858" width="54" height="3" fill="#5050c8" opacity="0.65"/>
 <rect x="1391" y="841" width="26" height="10" fill="none" stroke="#cc3333" stroke-width="1"/>
 <rect x="1420" y="845" width="52" height="2.5" fill="#444" opacity="0.5"/>
</svg>
<div class="abs" style="left:1081px;top:876px;width:256px;height:44px;background:#fff;border:3px solid #3f5f8a"></div>
<div class="abs nw" style="left:1096.0px;top:887.2px;font-size:22.24px;line-height:22.24px;font-weight:bold;color:#141414;transform:scaleX(0.9312);transform-origin:0 0;-webkit-text-stroke:0.9px #141414;">World Earthquake Map</div>
<div class="abs" style="left:1531px;top:38px;width:235px;height:662px;background:#1e1e1e"></div>
<svg style="left:1531px;top:38px" width="235" height="662" viewBox="1531 38 235 662">
 <defs>
  <linearGradient id="wall1" x1="0" y1="0" x2="1" y2="0.3"><stop offset="0" stop-color="#c8cbd8"/><stop offset="0.45" stop-color="#e2e0ea"/><stop offset="1" stop-color="#f8f6f8"/></linearGradient>
  <filter id="tb1" filterUnits="userSpaceOnUse" x="1500" y="0" width="300" height="720"><feGaussianBlur stdDeviation="1.2"/></filter>
  <filter id="tb2" filterUnits="userSpaceOnUse" x="1500" y="0" width="300" height="720"><feGaussianBlur stdDeviation="3"/></filter>
  <filter id="tb3" filterUnits="userSpaceOnUse" x="1500" y="0" width="300" height="720"><feGaussianBlur stdDeviation="7"/></filter>
  <clipPath id="c1"><rect x="1531" y="38" width="235" height="132"/></clipPath>
  <clipPath id="c2"><rect x="1531" y="170" width="235" height="134"/></clipPath>
  <clipPath id="c3"><rect x="1531" y="304" width="235" height="131"/></clipPath>
 </defs>
 <!-- tile 1: man -->
 <g clip-path="url(#c1)">
  <rect x="1531" y="38" width="235" height="132" fill="url(#wall1)"/>
  <g filter="url(#tb1)">
   <path d="M1600 60 L1700 59 L1700 135 L1598 136 Z" fill="#e3142c"/>
   <path d="M1687 60 L1744 60 L1745 131 L1687 131 Z" fill="#3f5ea8"/>
   <path d="M1737 90 L1746 88 L1746 125 L1730 120 Z" fill="#dfe6f0"/>
   <ellipse cx="1712" cy="92" rx="10" ry="14" fill="#d9b8a0"/>
   <path d="M1693 110 L1745 112 L1745 131 L1690 131 Z" fill="#2c3348"/>
   <path d="M1705 108 L1720 108 L1717 131 L1708 131 Z" fill="#e8e8ee"/>
   <circle cx="1632" cy="90" r="11" fill="#f4f0f0"/><circle cx="1637" cy="88" r="9.5" fill="#e3142c"/>
   <path d="M1643 115 L1646 121 L1652 121 L1647 125 L1649 131 L1643 127 L1638 131 L1640 125 L1635 121 L1641 121 Z" fill="#f4f0f0"/>
   <rect x="1531" y="154" width="235" height="16" fill="#b48e5e"/>
   <path d="M1531 129 L1560 113 L1565 132 L1537 148 Z" fill="#e22a2a"/>
   <path d="M1570 114 L1600 124 L1610 140 L1590 152 L1568 140 Z" fill="#f2ece6"/>
   <circle cx="1580" cy="127" r="4.5" fill="#e44a30"/>
   <path d="M1555 140 Q1556 130 1564 130 Q1572 132 1573 142 L1574 155 Q1565 160 1556 155 Z" fill="#5a3a34"/>
   <circle cx="1741" cy="138" r="13" fill="#f2eaea"/><circle cx="1741" cy="138" r="10" fill="#9a3a44"/><circle cx="1741" cy="138" r="7" fill="#7fa6b8"/>
   <path d="M1752 118 L1762 120 L1764 150 L1754 152 Z" fill="#3f8a48"/>
   <path d="M1587 170 L1604 137 L1648 121 L1686 118 L1722 129 L1742 170 Z" fill="#2a2c3c"/>
   <path d="M1644 122 L1688 120 L1692 170 L1642 170 Z" fill="#dadae2"/>
   <path d="M1662 134 L1677 133 L1684 170 L1660 170 Z" fill="#b886c8"/>
   <path d="M1664 142 L1680 150 M1662 155 L1682 163" stroke="#e0c0e8" stroke-width="2"/>
   <ellipse cx="1666" cy="88" rx="24" ry="35" fill="#c9a090"/>
   <ellipse cx="1664" cy="70" rx="18" ry="15" fill="#d8b4a6"/>
   <path d="M1652 84 L1662 84 M1670 84 L1681 84" stroke="#8a6a60" stroke-width="1.5"/>
   <path d="M1658 108 L1675 108" stroke="#9a6a62" stroke-width="2"/>
  </g>
 </g>
 <!-- tile 2: lecture hall -->
 <g clip-path="url(#c2)">
  <rect x="1531" y="170" width="235" height="134" fill="#dedad6"/>
  <g filter="url(#tb1)">
   <path d="M1531 170 H1766 V206 L1690 210 L1619 212 L1531 184 Z" fill="#e6dfcb"/>
   <path d="M1531 184 L1619 212 L1619 224 L1531 212 Z" fill="#b69a68"/>
   <path d="M1548 190 L1616 211 L1616 217 L1548 199 Z" fill="#222026"/>
   <path d="M1619 212 L1766 206 L1766 222 L1619 224 Z" fill="#c2a774"/>
   <path d="M1619 211 L1690 210 L1690 216 L1619 217 Z" fill="#2a2628"/>
   <path d="M1531 211 L1619 223 L1619 230 L1531 229 Z" fill="#7d859e"/>
   <path d="M1619 223 L1766 221 L1766 233 L1619 231 Z" fill="#858ca4"/>
   <rect x="1580" y="203" width="2.5" height="27" fill="#efe9dc"/>
   <rect x="1660" y="211" width="2.5" height="22" fill="#efe9dc"/>
   <rect x="1720" y="208" width="2.5" height="25" fill="#efe9dc"/>
   <path d="M1531 229 L1766 232 L1766 262 L1531 264 Z" fill="#c6ad7c"/>
   <path d="M1585 229 L1612 231 L1620 260 L1590 262 Z" fill="#cfcac0"/>
   <path d="M1531 262 L1766 258 L1766 304 L1531 304 Z" fill="#e2dfda"/>
   <path d="M1531 268 L1622 266 L1622 282 L1531 284 Z" fill="#eae6dc"/>
   <path d="M1531 284 L1622 282 L1622 302 L1531 303 Z" fill="#a9aeba"/>
   <path d="M1635 264 L1659 264 L1659 279 L1635 279 Z" fill="#ebe7de"/>
   <path d="M1635 279 L1659 279 L1659 291 L1635 291 Z" fill="#b0b4c0"/>
   <path d="M1659 266 L1766 262 L1766 284 L1659 287 Z" fill="#ece8df"/>
   <path d="M1659 287 L1766 284 L1766 303 L1659 303 Z" fill="#b2b6c2"/>
   <ellipse cx="1540" cy="250" rx="7" ry="12" fill="#1d1d25"/>
   <ellipse cx="1576" cy="253" rx="9" ry="9" fill="#1f1f27"/>
   <ellipse cx="1656" cy="256" rx="12" ry="7" fill="#22222a"/>
   <ellipse cx="1700" cy="258" rx="6" ry="6" fill="#4a4048" opacity="0.6"/>
   <path d="M1678 248 L1716 280" stroke="#1e2030" stroke-width="3.5"/>
   <rect x="1701" y="279" width="2.5" height="24" fill="#3a3a40"/>
   <path d="M1716 280 L1766 291 L1766 303 L1710 303 Z" fill="#6c4838"/>
  </g>
 </g>
 <rect x="1531" y="302.5" width="235" height="2" fill="#cfcfcf"/>
 <!-- tile 3: woman -->
 <g clip-path="url(#c3)">
  <rect x="1531" y="304" width="235" height="131" fill="#b6b7b3"/>
  <g filter="url(#tb2)">
   <rect x="1628" y="304" width="34" height="100" fill="#9d9c97"/>
   <path d="M1688 325 L1766 315 L1766 385 L1700 390 Z" fill="#d9dde0"/>
   <path d="M1531 398 L1630 398 L1630 435 L1531 435 Z" fill="#9c9c9a"/>
   <path d="M1540 410 L1600 405 L1620 420 L1550 425 Z" fill="#c8c8c8"/>
   <path d="M1694 398 L1740 396 L1740 435 L1694 435 Z" fill="#8b6a62"/>
   <path d="M1697 372 L1706 370 L1708 398 L1698 398 Z" fill="#2c2a30"/>
  </g>
  <g filter="url(#tb3)">
   <ellipse cx="1578" cy="356" rx="44" ry="44" fill="#ffffff"/>
   <rect x="1533" y="318" width="80" height="78" fill="#ffffff"/>
  </g>
  <g filter="url(#tb1)">
   <path d="M1616 435 L1630 405 L1650 400 L1690 403 L1708 420 L1712 435 Z" fill="#33243a"/>
   <path d="M1630 405 Q1640 398 1655 400 L1650 410 Q1640 406 1633 412 Z" fill="#d0c8d0"/>
   <ellipse cx="1674" cy="384" rx="18" ry="25" fill="#3a3036"/>
   <ellipse cx="1666" cy="390" rx="9" ry="13" fill="#b3a2a2"/>
  </g>
 </g>
 <!-- tile 4: avatars -->
 <rect x="1581" y="435" width="133" height="265" fill="#fdfdfb"/>
 <g fill="#c5c5bf">
  <circle cx="1647.5" cy="495.5" r="26.5"/>
  <path d="M1585 568 Q1586 531 1627 525.5 Q1647.5 539 1668 525.5 Q1709 531 1710 568 Z"/>
  <circle cx="1647.5" cy="628.5" r="26.5"/>
  <path d="M1585 701 Q1586 664 1627 658.5 Q1647.5 672 1668 658.5 Q1709 664 1710 701 Z"/>
 </g>
</svg>

</div>

<!-- CONTROL BAR -->
<div id="ctrl"></div>
<svg style="left:0;top:946px" width="1920" height="84">
  <rect x="10" y="7" width="1900" height="3" fill="#3d3550"/>
  <rect x="10" y="7" width="485" height="3" fill="#9573ef"/>
  <rect x="1832" y="56" width="75" height="3" fill="#3d3550"/>
  <rect x="1832" y="56" width="60" height="3" fill="#9573ef"/>
  <g fill="none" stroke="#7d7d7d" stroke-width="1.2" stroke-linejoin="round">
    <!-- playlist -->
    <rect x="15.5" y="48.5" width="19" height="19" rx="1"/>
    <path d="M20 53.5H30 M20 57.5H30 M20 61.5H30 M20 65H30"/>
    <!-- download -->
    <rect x="50.5" y="49.5" width="24.5" height="17" rx="1.5"/>
    <path d="M62.7 53 V62 M58.5 58 L62.7 62.2 L67 58"/>
    <!-- vr -->
    <path d="M88.5 49.5 H111.5 Q112.5 49.5 112.5 50.5 V65.5 Q112.5 66.5 111.5 66.5 H104 Q100 60 96.5 66.5 H88.5 Q87.5 66.5 87.5 65.5 V50.5 Q87.5 49.5 88.5 49.5 Z"/>
    <circle cx="94.5" cy="57" r="2.2"/><circle cx="105.5" cy="57" r="2.2"/>
    <!-- cube -->
    <path d="M138 47.3 L147.8 52.2 V63.8 L138 68.8 L128.2 63.8 V52.2 Z"/>
    <path d="M128.5 52.4 L138 56.6 L147.5 52.4 M138 56.6 V68.5" stroke-width="1.3"/>
    <path d="M138 50 V54.5 M135 58.5 L130.8 62.3 M141 58.5 L145.2 62.3" stroke-dasharray="1.6 1.4"/>
    <!-- capture -->
    <path d="M163 54 V49.8 H170.5 M179.5 49.8 H187 V54 M187 62.5 V66.5 H179.5 M170.5 66.5 H163 V62.5" stroke-width="1.6"/>
    <circle cx="175" cy="57.8" r="2.7"/>
    <!-- center controls -->
    <path d="M844.5 37.5 L853 49.5 H836 Z"/>
    <rect x="836.2" y="52.8" width="16.8" height="4.2" rx="1.2"/>
    <rect x="889.8" y="37.5" width="3.6" height="20" rx="1"/>
    <path d="M909.3 38.5 V56.5 L894.5 47.5 Z"/>
    <path d="M946.5 33.5 Q946 31.5 948 32.5 L972 45.8 Q973.5 47 972 48.2 L948 61.5 Q946 62.5 946.5 60.5 Z" stroke-width="1.3"/>
    <rect x="1027" y="37.5" width="3.6" height="20" rx="1"/>
    <path d="M1010.5 38.5 V56.5 L1025.3 47.5 Z"/>
    <rect x="1067" y="39" width="17" height="17"/>
    <!-- HW -->
    <rect x="1696.5" y="49.5" width="25" height="17.5" rx="1.5"/>
    <path d="M1701.5 54 V62.5 M1705 54 V62.5 M1701.5 58.3 H1705 M1709.5 54 V62.5 H1716 V54 M1712.7 57 V62.5"/>
    <!-- subtitle -->
    <rect x="1733.5" y="49.5" width="25" height="17.5" rx="1.5"/>
    <path d="M1738.5 58.5 H1743 M1745 58.5 H1754 M1738.5 62 H1748 M1750 62 H1754"/>
    <!-- wave -->
    <path d="M1773 55 V61 M1776 52 V64 M1779.5 49 V68 M1783 53 V63 M1786.5 55 V61 M1790 51.5 V64.5 M1793.5 57.5 V58.5"/>
    <!-- speaker -->
    <path d="M1805 54.5 Q1805 53 1806.5 53 H1809.5 L1816 48.5 Q1818 47.5 1818 49.5 V66.5 Q1818 68.5 1816 67.5 L1809.5 63 H1806.5 Q1805 63 1805 61.5 Z"/>
    <path d="M1821 52 Q1824 58 1821 64 M1824 49.5 Q1828.5 58 1824 66.5"/>
  </g>
</svg>
<div class="abs nw" style="left:13px;top:968.5px;font-size:14.3px;line-height:16px;color:#8f8f8f">00:12:05</div>
<div class="abs nw" style="left:1853px;top:968.5px;font-size:14.3px;line-height:16px;color:#8f8f8f">00:48:19</div>

<!-- TASKBAR -->
<div id="taskbar"></div>
<div class="abs" style="left:804px;top:1030px;width:61px;height:50px;background:#dcdedf"></div>
<div class="abs" style="left:804px;top:1030px;width:15px;height:47px;background:#e5e3a4"></div>
<div class="abs" style="left:804px;top:1077px;width:61px;height:3px;background:#f2e60c"></div>
<div class="abs" style="left:189px;top:1077px;width:51px;height:3px;background:#d08a2c"></div>
<div class="abs" style="left:313px;top:1077px;width:51px;height:3px;background:#d08a2c"></div>
<div class="abs" style="left:685px;top:1077px;width:51px;height:3px;background:#d08a2c"></div>
<svg style="left:0;top:1030px" width="1920" height="50">
  <defs>
    <linearGradient id="edg" x1="0" y1="0" x2="1" y2="1"><stop offset="0" stop-color="#2fb6f0"/><stop offset="0.55" stop-color="#37c9a8"/><stop offset="1" stop-color="#5fd85a"/></linearGradient>
    <linearGradient id="edb" x1="0" y1="0" x2="0.3" y2="1"><stop offset="0" stop-color="#2aa8ea"/><stop offset="1" stop-color="#1560c0"/></linearGradient>
    <linearGradient id="mailg" x1="0" y1="0" x2="1" y2="1"><stop offset="0" stop-color="#1a7fd4"/><stop offset="1" stop-color="#36b4f2"/></linearGradient>
    <linearGradient id="skg" x1="0" y1="0" x2="0" y2="1"><stop offset="0" stop-color="#22a6f0"/><stop offset="1" stop-color="#0a84d8"/></linearGradient>
    <linearGradient id="ieg" x1="0" y1="0" x2="0" y2="1"><stop offset="0" stop-color="#8fe3fb"/><stop offset="1" stop-color="#1da7e6"/></linearGradient>
  </defs>
  <!-- windows logo -->
  <g fill="#0a0a0a">
    <path d="M20 16.2 L28.1 15.3 V24.1 H20 Z"/><path d="M29.2 15.2 L40 14.7 V24.1 H29.2 Z"/>
    <path d="M20 25.2 H28.1 V34.1 L20 33.3 Z"/><path d="M29.2 25.2 H40 V34.9 L29.2 34.2 Z"/>
  </g>
  <!-- search -->
  <g fill="none" stroke="#111" stroke-width="1.4">
    <circle cx="92.9" cy="21.8" r="6.6"/><path d="M88 26.8 L80.4 34.6"/>
  </g>
  <!-- task view -->
  <g fill="none" stroke="#111" stroke-width="1.2">
    <path d="M140.3 14.6 V18.2 M152.8 14.6 V18.2 M140.3 17.9 H152.8 M141.2 21 H152 V28.3 H141.2 Z M140.3 30.6 H152.8 M140.3 30.3 V34 M152.8 30.3 V34 M158.3 14.7 V34"/>
  </g>
  <rect x="156.9" y="21" width="2.8" height="3" fill="#111"/>
  <!-- edge -->
  <circle cx="214" cy="25" r="15" fill="url(#edb)"/>
  <path d="M201 19 C204 12.5 209 10 214.5 10 C223.5 10 229 17 229 24 C229 28.5 225.5 31 220.5 31 H209.5 C209 26 212 22.5 216.5 22.5 C212 17.5 205 17 201 19 Z" fill="url(#edg)"/>
  <path d="M209.5 31 C209.5 26 212.5 22.5 216.5 22.5 C218.5 23 219.5 24.5 219.5 26 C219 28.5 216.5 30.5 214 31 Z" fill="#d6e4eb"/>
  <path d="M203.5 27 C203.5 34 209 38.5 215.5 38.5 C220 38.5 224 36.5 227.5 33 C225 38 219.5 40.5 214 40 C206 39.5 199.5 33 199 25 C199 22 200 20 201 19 C202.5 21.5 203.5 24 203.5 27 Z" fill="#0f4fa8"/>
  <!-- ccleaner -->
  <path d="M290 16 C286 11 280 10 275 12 C266 15.5 262.5 24 265 31 C267.5 37.5 275 40 282 38 C286 37 289 34.5 291 31.5 L285.5 27.5 C284 30.5 281 32.5 277.5 32.5 C273 32.5 270 28.5 270.5 24 C271 19.5 275 16.5 279.5 17 C282 17.3 284 18.5 285.5 20.5 Z" fill="#d9392c"/>
  <path d="M280.5 13 L277 25" stroke="#2a6fd0" stroke-width="2" fill="none"/>
  <path d="M273.5 25 L279 26.5 L276.5 31 Z" fill="#2a6fd0"/>
  <path d="M272.5 28 L278 30 C276 34 273 37 268.5 37.5 C266 37.5 262.5 36 262 34 C266 33.5 270 31 272.5 28 Z" fill="#edc98e"/>
  <!-- explorer -->
  <path d="M324 14.5 Q324 13 325.5 13 H332 L334 15 H350 Q351.5 15 351.5 16.5 V34 Q351.5 35.5 350 35.5 H325.5 Q324 35.5 324 34 Z" fill="#f8d46a"/>
  <path d="M324 14.5 Q324 13 325.5 13 H332 L334.5 15.5 L332 18 H324 Z" fill="#e3a514"/>
  <path d="M330.5 36 V27 Q330.5 25 332.5 25 H343 Q345 25 345 27 V36 H341.5 V29 H334 V36 Z" fill="#2f8ae0"/>
  <!-- mail -->
  <path d="M385 22 L400 11 L415 22 V39 H385 Z" fill="url(#mailg)"/>
  <path d="M385 22 L400 11 L415 22 L400 29 Z" fill="#0f5fb0"/>
  <path d="M387 22.5 H413 L400 29.5 Z" fill="#ededed"/>
  <path d="M385 39 L400 29 L415 39 Z" fill="#2a9be6" opacity="0.6"/>
  <!-- dropbox -->
  <g fill="#0b0b0b">
    <path d="M454.5 12 L461.5 16.5 L454.5 21 L447.5 16.5 Z"/><path d="M468.5 12 L475.5 16.5 L468.5 21 L461.5 16.5 Z"/>
    <path d="M454.5 22 L461.5 26.5 L454.5 31 L447.5 26.5 Z"/><path d="M468.5 22 L475.5 26.5 L468.5 31 L461.5 26.5 Z"/>
    <path d="M461.5 28.5 L468.5 33 L461.5 37.5 L454.5 33 Z"/>
  </g>
  <!-- skype -->
  <circle cx="524" cy="25" r="13.5" fill="url(#skg)"/>
  <circle cx="515.5" cy="16.5" r="6" fill="#22a6f0"/><circle cx="532.5" cy="33.5" r="6" fill="#0a84d8"/>
  <text x="524" y="32" font-family="Liberation Sans" font-weight="bold" font-size="20" fill="#fff" text-anchor="middle">S</text>
  <!-- orange app -->
  <rect x="571" y="10" width="30" height="30" fill="#d0882b"/>
  <path d="M589 14.5 L580.5 23.5 L587 27 L582 35 L590.2 26.5 L584.3 23.2 Z" fill="#fff"/>
  <!-- chrome -->
  <circle cx="647.5" cy="24.7" r="13.8" fill="#db4437"/>
  <path d="M647.5 24.7 L635.5 17.8 A13.8 13.8 0 0 0 640.6 36.6 Z" fill="#0f9d58"/>
  <path d="M647.5 24.7 L640.6 36.6 A13.8 13.8 0 0 0 661.3 24.7 Z" fill="#ffcd40"/>
  <path d="M647.5 24.7 L661.3 24.7 A13.8 13.8 0 0 0 659.4 17.8 Z" fill="#ffcd40"/>
  <path d="M647.5 24.7 L659.4 17.8 L647.5 17.8 Z" fill="#db4437"/>
  <circle cx="647.5" cy="24.7" r="6.3" fill="#fff"/>
  <circle cx="647.5" cy="24.7" r="5" fill="#4c8bf5"/>
  <!-- word -->
  <rect x="702" y="11" width="22" height="27" rx="1.5" fill="#41a5ee"/>
  <rect x="702" y="18" width="22" height="7" fill="#2b7cd3"/>
  <rect x="702" y="25" width="22" height="7" fill="#185abd"/>
  <rect x="702" y="32" width="22" height="6" fill="#103f91"/>
  <rect x="695" y="17" width="15" height="15" rx="1" fill="#185abd"/>
  <text x="702.5" y="29" font-family="Liberation Sans" font-weight="bold" font-size="11" fill="#fff" text-anchor="middle">W</text>
  <!-- IE -->
  <path d="M772 13 C779.5 13 785 18.5 785 26 H765.5 C766 30.5 769 33.5 773 33.5 C776 33.5 778.5 32 779.5 29.5 H784.5 C783 35.5 778 39 772 39 C764.5 39 759 33 759 26 C759 18.5 764.5 13 772 13 Z M765.8 22.5 H778.5 C778 18.5 775.5 16.5 772 16.5 C768.5 16.5 766.3 18.5 765.8 22.5 Z" fill="url(#ieg)"/>
  <path d="M782 11.5 C787 10 788 14 784 20 C779 27.5 768 36 761.5 38 C756 39.5 756.5 34.5 760.5 29" fill="none" stroke="#f2c230" stroke-width="2"/>
  <!-- kmplayer -->
  <rect x="819" y="10" width="30" height="30" rx="2.5" fill="#6527cf"/>
  <path d="M834 20 L843 15 V35 L834 30 Z" fill="#9b7be6"/>
  <path d="M826.5 14.5 L839 25 L826.5 35.5 Z" fill="#fff"/>
  <!-- tray -->
  <circle cx="1577" cy="26.8" r="12.5" fill="#fff"/>
  <circle cx="1577" cy="26.8" r="11" fill="#1b95d8"/>
  <text x="1576" y="34.3" font-family="Liberation Sans" font-weight="bold" font-size="20" fill="#fff" text-anchor="middle">?</text>
  <circle cx="1587.5" cy="33" r="6.2" fill="#6a6a6a" opacity="0.5"/>
  <circle cx="1587" cy="32.3" r="5.8" fill="#1b95d8"/>
  <rect x="1586.2" y="30.5" width="1.7" height="5" fill="#fff"/><rect x="1586.2" y="28.4" width="1.7" height="1.4" fill="#fff"/>
  <g fill="none" stroke="#111" stroke-width="1.3">
    <path d="M1604 28.5 L1612 20.6 L1620 28.5"/>
  </g>
  <g fill="none" stroke="#111" stroke-width="1.1">
    <rect x="1636.7" y="20.7" width="13.9" height="9.6"/>
    <path d="M1634.6 22.5 V30.6 M1632.6 21.8 Q1632.6 23.4 1634.6 23.4 Q1636.6 23.4 1636.6 21.8 V20.6 H1632.6 Z M1633.6 18 V20.6 M1635.6 18 V20.6"/>
    <rect x="1662.5" y="17.7" width="19" height="12.5"/>
    <path d="M1672.5 30.2 V32.5 M1669 32.6 H1676 M1664.2 22.2 V32.8"/>
    <rect x="1662.5" y="17.7" width="3.6" height="4.6"/>
    <path d="M1692.5 21.8 H1694.8 L1698.6 18.2 V31.2 L1694.8 27.4 H1692.5 Z"/>
    <path d="M1702.3 21.5 L1709.7 28.5 M1709.7 21.5 L1702.3 28.5"/>
  </g>
  <rect x="1638" y="22" width="11.3" height="7" fill="#0a0a0a"/>
  <rect x="1651" y="23.5" width="1.6" height="4" fill="#111"/>
  <!-- notification -->
  <path d="M1869 15 H1889 V32 H1876 L1878 34.2 L1874 32 H1869 Z" fill="#050505"/>
  <path d="M1873 19.5 H1885 M1873 23.5 H1885 M1873 27.5 H1881" stroke="#f0f0f0" stroke-width="1"/>
  <circle cx="1888.5" cy="34.6" r="9.8" fill="#d3d7d9" stroke="#6a6a6a" stroke-width="0.9"/>
  <path d="M1879.3 31.5 A9.8 9.8 0 0 1 1888.5 24.8 V32 H1882 Z" fill="#8e8e8e"/>
  <path d="M1889.3 29.6 V39.8" stroke="#111" stroke-width="2"/>
  <path d="M1886.3 31.6 L1889.5 29.4" stroke="#111" stroke-width="1.6"/>
  <rect x="1914.2" y="0" width="1" height="50" fill="#a8b4ba"/>
</svg>
<div class="abs nw" style="left:1726px;top:1045px;font-size:16.3px;line-height:20px;color:#111;transform:scaleX(0.82);transform-origin:0 0">TUR</div>
<div class="abs nw" style="left:1790px;top:1033.5px;font-size:16.2px;line-height:18px;color:#111;transform:scaleX(0.88);transform-origin:0 0">21:30</div>
<div class="abs nw" style="left:1769px;top:1057.5px;font-size:16.4px;line-height:18px;color:#111;transform:scaleX(0.935);transform-origin:0 0">08/04/2021</div>
</body></html>
